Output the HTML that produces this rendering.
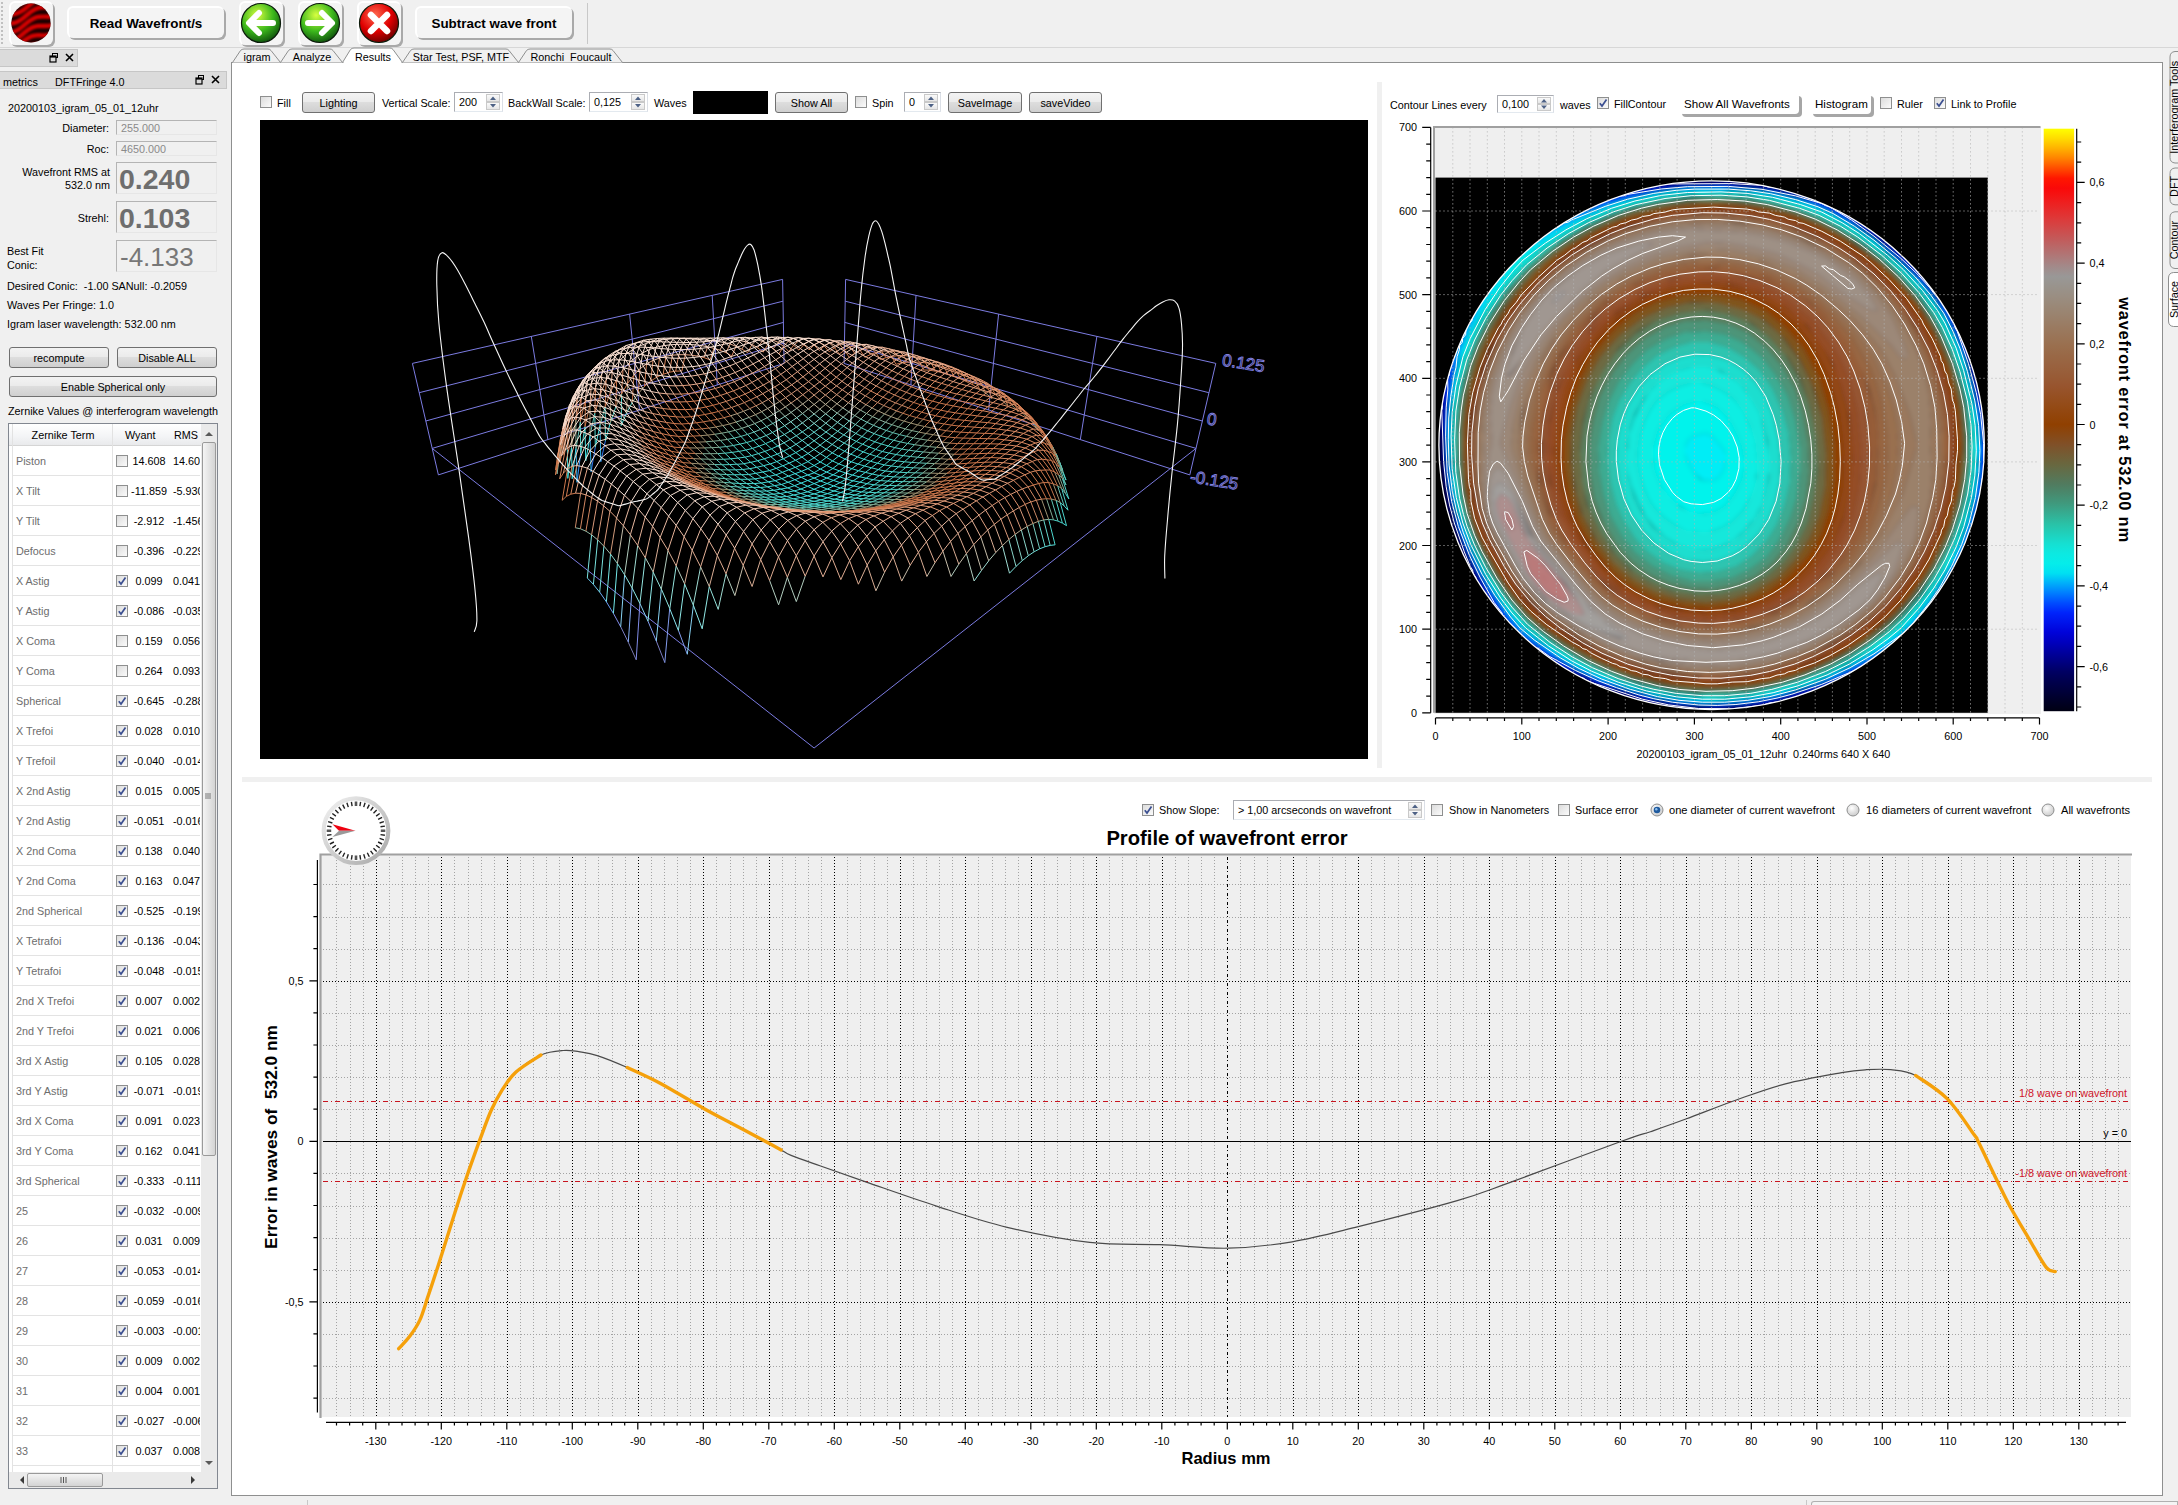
<!DOCTYPE html>
<html><head><meta charset="utf-8"><style>
html,body{margin:0;padding:0;}
body{width:2178px;height:1505px;position:relative;overflow:hidden;background:#f0f0f0;font-family:"Liberation Sans", sans-serif;font-size:10.8px;color:#000;}
</style></head><body>
<div style="position:absolute;left:0.0px;top:0.0px;width:2178.0px;height:47.0px;background:#f0f0f0;"></div>
<div style="position:absolute;left:0.0px;top:47.0px;width:2178.0px;height:1.0px;background:#d7d7d7;"></div>
<svg style="position:absolute;left:0;top:0" width="4" height="47"><line x1="2" y1="2" x2="2" y2="45" stroke="#b0b0b0" stroke-width="1.5" stroke-dasharray="2 2"/></svg>
<div style="position:absolute;left:9.0px;top:1.0px;width:44.0px;height:44.0px;box-sizing:border-box;border-radius:6px;background:#f4f4f4;border-top:2px solid #ffffff;border-left:2px solid #ffffff;box-shadow:2px 2px 0 #a9a9a9;"></div>
<div style="position:absolute;left:67.0px;top:6.0px;width:157.0px;height:32.0px;box-sizing:border-box;border-radius:6px;background:#f4f4f4;border-top:2px solid #ffffff;border-left:2px solid #ffffff;box-shadow:2px 2px 0 #a9a9a9;"></div>
<div style="position:absolute;left:146.0px;transform:translateX(-50%);top:15.0px;line-height:17px;font-size:13.4px;color:#000;white-space:pre;font-weight:bold;">Read Wavefront/s</div>
<div style="position:absolute;left:239.0px;top:1.0px;width:44.0px;height:44.0px;box-sizing:border-box;border-radius:6px;background:#f4f4f4;border-top:2px solid #ffffff;border-left:2px solid #ffffff;box-shadow:2px 2px 0 #a9a9a9;"></div>
<div style="position:absolute;left:298.0px;top:1.0px;width:44.0px;height:44.0px;box-sizing:border-box;border-radius:6px;background:#f4f4f4;border-top:2px solid #ffffff;border-left:2px solid #ffffff;box-shadow:2px 2px 0 #a9a9a9;"></div>
<div style="position:absolute;left:357.0px;top:1.0px;width:44.0px;height:44.0px;box-sizing:border-box;border-radius:6px;background:#f4f4f4;border-top:2px solid #ffffff;border-left:2px solid #ffffff;box-shadow:2px 2px 0 #a9a9a9;"></div>
<div style="position:absolute;left:415.0px;top:6.0px;width:157.0px;height:32.0px;box-sizing:border-box;border-radius:6px;background:#f4f4f4;border-top:2px solid #ffffff;border-left:2px solid #ffffff;box-shadow:2px 2px 0 #a9a9a9;"></div>
<div style="position:absolute;left:494.0px;transform:translateX(-50%);top:15.0px;line-height:17px;font-size:13.4px;color:#000;white-space:pre;font-weight:bold;">Subtract wave front</div>
<div style="position:absolute;left:587.0px;top:3.0px;width:1.0px;height:41.0px;background:#c8c8c8;"></div>
<svg style="position:absolute;left:10px;top:2px" width="42" height="42"><defs><clipPath id="lc"><circle cx="21" cy="21" r="19.6"/></clipPath><filter id="lblur"><feGaussianBlur stdDeviation="1.2"/></filter></defs><g clip-path="url(#lc)"><rect width="42" height="42" fill="#1c0000"/><g filter="url(#lblur)"><path d="M-2.0 -33.6L0.0 -34.2L2.0 -34.6L4.0 -34.7L6.0 -34.8L8.0 -34.7L10.0 -34.7L12.0 -34.7L14.0 -34.9L16.0 -35.3L18.0 -36.0L20.0 -36.9L22.0 -38.1L24.0 -39.5L26.0 -41.1L28.0 -42.7L30.0 -44.4L32.0 -45.9L34.0 -47.4L36.0 -48.6L38.0 -49.6L40.0 -50.3L42.0 -50.8L44.0 -51.0" stroke="#d40404" stroke-width="4.4" fill="none"/><path d="M-2.0 -24.8L0.0 -25.2L2.0 -25.4L4.0 -25.4L6.0 -25.3L8.0 -25.3L10.0 -25.3L12.0 -25.5L14.0 -25.9L16.0 -26.6L18.0 -27.5L20.0 -28.7L22.0 -30.1L24.0 -31.6L26.0 -33.3L28.0 -34.9L30.0 -36.5L32.0 -38.0L34.0 -39.2L36.0 -40.2L38.0 -40.9L40.0 -41.4L42.0 -41.6L44.0 -41.7" stroke="#d40404" stroke-width="4.4" fill="none"/><path d="M-2.0 -15.8L0.0 -16.0L2.0 -16.0L4.0 -16.0L6.0 -15.9L8.0 -15.9L10.0 -16.1L12.0 -16.5L14.0 -17.2L16.0 -18.1L18.0 -19.3L20.0 -20.7L22.0 -22.2L24.0 -23.9L26.0 -25.5L28.0 -27.1L30.0 -28.5L32.0 -29.8L34.0 -30.8L36.0 -31.5L38.0 -32.0L40.0 -32.3L42.0 -32.3L44.0 -32.3" stroke="#d40404" stroke-width="4.4" fill="none"/><path d="M-2.0 -6.6L0.0 -6.6L2.0 -6.6L4.0 -6.5L6.0 -6.6L8.0 -6.8L10.0 -7.2L12.0 -7.8L14.0 -8.7L16.0 -9.9L18.0 -11.3L20.0 -12.8L22.0 -14.4L24.0 -16.1L26.0 -17.7L28.0 -19.1L30.0 -20.4L32.0 -21.4L34.0 -22.1L36.0 -22.6L38.0 -22.9L40.0 -23.0L42.0 -22.9L44.0 -22.9" stroke="#d40404" stroke-width="4.4" fill="none"/><path d="M-2.0 2.8L0.0 2.8L2.0 2.8L4.0 2.8L6.0 2.6L8.0 2.2L10.0 1.6L12.0 0.7L14.0 -0.5L16.0 -1.8L18.0 -3.4L20.0 -5.0L22.0 -6.7L24.0 -8.3L26.0 -9.7L28.0 -11.0L30.0 -12.0L32.0 -12.7L34.0 -13.2L36.0 -13.5L38.0 -13.6L40.0 -13.6L42.0 -13.5L44.0 -13.5" stroke="#d40404" stroke-width="4.4" fill="none"/><path d="M-2.0 12.2L0.0 12.2L2.0 12.2L4.0 12.0L6.0 11.6L8.0 11.0L10.0 10.1L12.0 8.9L14.0 7.6L16.0 6.0L18.0 4.4L20.0 2.7L22.0 1.2L24.0 -0.3L26.0 -1.6L28.0 -2.6L30.0 -3.3L32.0 -3.8L34.0 -4.1L36.0 -4.2L38.0 -4.2L40.0 -4.1L42.0 -4.1L44.0 -4.2" stroke="#d40404" stroke-width="4.4" fill="none"/><path d="M-2.0 21.6L0.0 21.6L2.0 21.4L4.0 21.0L6.0 20.4L8.0 19.5L10.0 18.4L12.0 17.0L14.0 15.5L16.0 13.8L18.0 12.2L20.0 10.6L22.0 9.1L24.0 7.8L26.0 6.8L28.0 6.1L30.0 5.5L32.0 5.3L34.0 5.2L36.0 5.2L38.0 5.3L40.0 5.3L42.0 5.2L44.0 4.9" stroke="#d40404" stroke-width="4.4" fill="none"/><path d="M-2.0 31.0L0.0 30.8L2.0 30.4L4.0 29.8L6.0 28.9L8.0 27.8L10.0 26.4L12.0 24.9L14.0 23.2L16.0 21.6L18.0 20.0L20.0 18.5L22.0 17.3L24.0 16.2L26.0 15.4L28.0 14.9L30.0 14.7L32.0 14.6L34.0 14.6L36.0 14.6L38.0 14.7L40.0 14.6L42.0 14.3L44.0 13.8" stroke="#d40404" stroke-width="4.4" fill="none"/><path d="M-2.0 40.2L0.0 39.8L2.0 39.2L4.0 38.3L6.0 37.2L8.0 35.8L10.0 34.3L12.0 32.7L14.0 31.0L16.0 29.4L18.0 27.9L20.0 26.7L22.0 25.6L24.0 24.8L26.0 24.3L28.0 24.0L30.0 23.9L32.0 24.0L34.0 24.0L36.0 24.0L38.0 23.9L40.0 23.7L42.0 23.1L44.0 22.4" stroke="#d40404" stroke-width="4.4" fill="none"/><path d="M-2.0 49.2L0.0 48.6L2.0 47.7L4.0 46.6L6.0 45.2L8.0 43.7L10.0 42.1L12.0 40.4L14.0 38.8L16.0 37.4L18.0 36.1L20.0 35.0L22.0 34.2L24.0 33.7L26.0 33.4L28.0 33.3L30.0 33.3L32.0 33.4L34.0 33.4L36.0 33.3L38.0 33.0L40.0 32.5L42.0 31.8L44.0 30.8" stroke="#d40404" stroke-width="4.4" fill="none"/><path d="M-2.0 58.0L0.0 57.1L2.0 56.0L4.0 54.7L6.0 53.1L8.0 51.5L10.0 49.9L12.0 48.2L14.0 46.8L16.0 45.5L18.0 44.4L20.0 43.6L22.0 43.1L24.0 42.8L26.0 42.7L28.0 42.7L30.0 42.8L32.0 42.8L34.0 42.7L36.0 42.4L38.0 41.9L40.0 41.2L42.0 40.2L44.0 38.9" stroke="#d40404" stroke-width="4.4" fill="none"/><path d="M-2.0 66.5L0.0 65.4L2.0 64.1L4.0 62.6L6.0 60.9L8.0 59.3L10.0 57.7L12.0 56.2L14.0 54.9L16.0 53.8L18.0 53.0L20.0 52.5L22.0 52.2L24.0 52.1L26.0 52.1L28.0 52.1L30.0 52.2L32.0 52.1L34.0 51.8L36.0 51.3L38.0 50.6L40.0 49.6L42.0 48.3L44.0 46.9" stroke="#d40404" stroke-width="4.4" fill="none"/><path d="M-2.0 74.8L0.0 73.5L2.0 72.0L4.0 70.4L6.0 68.7L8.0 67.1L10.0 65.6L12.0 64.3L14.0 63.2L16.0 62.4L18.0 61.9L20.0 61.6L22.0 61.5L24.0 61.5L26.0 61.5L28.0 61.6L30.0 61.5L32.0 61.2L34.0 60.7L36.0 60.0L38.0 59.0L40.0 57.7L42.0 56.3L44.0 54.7" stroke="#d40404" stroke-width="4.4" fill="none"/></g></g></svg>
<svg style="position:absolute;left:240px;top:2px" width="42" height="42"><defs><radialGradient id="gL" cx="0.4" cy="0.3" r="0.75"><stop offset="0" stop-color="#d8ff40"/><stop offset="0.55" stop-color="#3cb81c"/><stop offset="1" stop-color="#0c4a0c"/></radialGradient></defs><circle cx="21" cy="21" r="19.5" fill="url(#gL)" stroke="#0a1a0a" stroke-width="1.2"/><path d="M9 21 L19 11 M9 21 L19 31 M9.5 21 L33 21" stroke="#fff" stroke-width="6" stroke-linecap="round" fill="none"/></svg>
<svg style="position:absolute;left:299px;top:2px" width="42" height="42"><defs><radialGradient id="gR" cx="0.4" cy="0.3" r="0.75"><stop offset="0" stop-color="#d8ff40"/><stop offset="0.55" stop-color="#3cb81c"/><stop offset="1" stop-color="#0c4a0c"/></radialGradient></defs><circle cx="21" cy="21" r="19.5" fill="url(#gR)" stroke="#0a1a0a" stroke-width="1.2"/><path d="M33 21 L23 11 M33 21 L23 31 M32.5 21 L9 21" stroke="#fff" stroke-width="6" stroke-linecap="round" fill="none"/></svg>
<svg style="position:absolute;left:358px;top:2px" width="42" height="42"><defs><radialGradient id="gX" cx="0.4" cy="0.3" r="0.75"><stop offset="0" stop-color="#ff6a50"/><stop offset="0.55" stop-color="#e00000"/><stop offset="1" stop-color="#600000"/></radialGradient></defs><circle cx="21" cy="21" r="19.5" fill="url(#gX)" stroke="#0a1a0a" stroke-width="1.2"/><path d="M13 13 L29 29 M29 13 L13 29" stroke="#fff" stroke-width="6.5" stroke-linecap="round"/></svg>
<div style="position:absolute;left:0.0px;top:48.0px;width:231.0px;height:1457.0px;background:#f0f0f0;"></div>
<div style="position:absolute;left:0.0px;top:49.0px;width:78.0px;height:18.0px;box-sizing:border-box;background:#dbdbdb;border:1px solid #c6c6c6;border-left:none;"></div>
<div style="position:absolute;left:0.0px;top:71.0px;width:227.0px;height:18.0px;box-sizing:border-box;background:#dbdbdb;border:1px solid #c6c6c6;border-left:none;"></div>
<svg style="position:absolute;left:49px;top:52px" width="30" height="12"><rect x="3.5" y="1.5" width="5" height="4" fill="none" stroke="#000" stroke-width="1"/><rect x="1" y="4" width="6" height="6" fill="#dbdbdb" stroke="#000" stroke-width="1.2"/><rect x="1" y="4" width="6" height="1.6" fill="#000"/><path d="M17 2 L24 9 M24 2 L17 9" stroke="#000" stroke-width="1.6"/></svg>
<svg style="position:absolute;left:195px;top:74px" width="30" height="12"><rect x="3.5" y="1.5" width="5" height="4" fill="none" stroke="#000" stroke-width="1"/><rect x="1" y="4" width="6" height="6" fill="#dbdbdb" stroke="#000" stroke-width="1.2"/><rect x="1" y="4" width="6" height="1.6" fill="#000"/><path d="M17 2 L24 9 M24 2 L17 9" stroke="#000" stroke-width="1.6"/></svg>
<div style="position:absolute;left:3.0px;top:74.5px;line-height:14px;font-size:10.8px;color:#000;white-space:pre;">metrics</div>
<div style="position:absolute;left:55.0px;top:74.5px;line-height:14px;font-size:10.8px;color:#000;white-space:pre;">DFTFringe 4.0</div>
<div style="position:absolute;left:8.0px;top:101.0px;line-height:14px;font-size:10.8px;color:#000;white-space:pre;">20200103_igram_05_01_12uhr</div>
<div style="position:absolute;left:116.0px;top:120.0px;width:101.0px;height:15.0px;box-sizing:border-box;border:1px solid #b4b4b4;border-bottom-color:#e6e6e6;border-right-color:#e6e6e6;background:#f0f0f0;"></div>
<div style="position:absolute;left:109.0px;transform:translateX(-100%);top:121.0px;line-height:14px;font-size:10.8px;color:#000;white-space:pre;">Diameter:</div>
<div style="position:absolute;left:121.0px;top:121.0px;line-height:14px;font-size:10.8px;color:#8a8a8a;white-space:pre;">255.000</div>
<div style="position:absolute;left:116.0px;top:141.0px;width:101.0px;height:15.0px;box-sizing:border-box;border:1px solid #b4b4b4;border-bottom-color:#e6e6e6;border-right-color:#e6e6e6;background:#f0f0f0;"></div>
<div style="position:absolute;left:109.0px;transform:translateX(-100%);top:142.0px;line-height:14px;font-size:10.8px;color:#000;white-space:pre;">Roc:</div>
<div style="position:absolute;left:121.0px;top:142.0px;line-height:14px;font-size:10.8px;color:#8a8a8a;white-space:pre;">4650.000</div>
<div style="position:absolute;left:116.0px;top:162.0px;width:101.0px;height:32.0px;box-sizing:border-box;border:1px solid #b4b4b4;border-bottom-color:#e6e6e6;border-right-color:#e6e6e6;background:#f0f0f0;"></div>
<div style="position:absolute;left:110.0px;transform:translateX(-100%);top:165.0px;line-height:14px;font-size:10.8px;color:#000;white-space:pre;">Wavefront RMS at</div>
<div style="position:absolute;left:110.0px;transform:translateX(-100%);top:178.0px;line-height:14px;font-size:10.8px;color:#000;white-space:pre;">532.0 nm</div>
<div style="position:absolute;left:119.0px;top:163.0px;line-height:32px;font-size:28.5px;color:#6e6e6e;white-space:pre;font-weight:bold;">0.240</div>
<div style="position:absolute;left:116.0px;top:201.0px;width:101.0px;height:32.0px;box-sizing:border-box;border:1px solid #b4b4b4;border-bottom-color:#e6e6e6;border-right-color:#e6e6e6;background:#f0f0f0;"></div>
<div style="position:absolute;left:109.0px;transform:translateX(-100%);top:211.0px;line-height:14px;font-size:10.8px;color:#000;white-space:pre;">Strehl:</div>
<div style="position:absolute;left:119.0px;top:202.0px;line-height:32px;font-size:28.5px;color:#6e6e6e;white-space:pre;font-weight:bold;">0.103</div>
<div style="position:absolute;left:116.0px;top:240.0px;width:101.0px;height:32.0px;box-sizing:border-box;border:1px solid #b4b4b4;border-bottom-color:#e6e6e6;border-right-color:#e6e6e6;background:#f0f0f0;"></div>
<div style="position:absolute;left:7.0px;top:244.0px;line-height:14px;font-size:10.8px;color:#000;white-space:pre;">Best Fit</div>
<div style="position:absolute;left:7.0px;top:257.5px;line-height:14px;font-size:10.8px;color:#000;white-space:pre;">Conic:</div>
<div style="position:absolute;left:120.0px;top:242.0px;line-height:30px;font-size:26px;color:#777777;white-space:pre;">-4.133</div>
<div style="position:absolute;left:7.0px;top:279.0px;line-height:14px;font-size:10.8px;color:#000;white-space:pre;">Desired Conic:  -1.00 SANull: -0.2059</div>
<div style="position:absolute;left:7.0px;top:298.0px;line-height:14px;font-size:10.8px;color:#000;white-space:pre;">Waves Per Fringe: 1.0</div>
<div style="position:absolute;left:7.0px;top:317.0px;line-height:14px;font-size:10.8px;color:#000;white-space:pre;">Igram laser wavelength: 532.00 nm</div>
<div style="position:absolute;left:9.0px;top:347.0px;width:100.0px;height:21.0px;box-sizing:border-box;border:1px solid #707070;border-radius:3px;background:linear-gradient(#f3f3f3 0%,#ebebeb 45%,#dddddd 50%,#cfcfcf 100%);"></div>
<div style="position:absolute;left:59.0px;transform:translateX(-50%);top:350.5px;line-height:14px;font-size:10.8px;color:#000;white-space:pre;">recompute</div>
<div style="position:absolute;left:117.0px;top:347.0px;width:100.0px;height:21.0px;box-sizing:border-box;border:1px solid #707070;border-radius:3px;background:linear-gradient(#f3f3f3 0%,#ebebeb 45%,#dddddd 50%,#cfcfcf 100%);"></div>
<div style="position:absolute;left:167.0px;transform:translateX(-50%);top:350.5px;line-height:14px;font-size:10.8px;color:#000;white-space:pre;">Disable ALL</div>
<div style="position:absolute;left:9.0px;top:376.0px;width:208.0px;height:21.0px;box-sizing:border-box;border:1px solid #707070;border-radius:3px;background:linear-gradient(#f3f3f3 0%,#ebebeb 45%,#dddddd 50%,#cfcfcf 100%);"></div>
<div style="position:absolute;left:113.0px;transform:translateX(-50%);top:379.5px;line-height:14px;font-size:10.8px;color:#000;white-space:pre;">Enable Spherical only</div>
<div style="position:absolute;left:8.0px;top:404.0px;line-height:14px;font-size:10.8px;color:#000;white-space:pre;">Zernike Values @ interferogram wavelength</div>
<div style="position:absolute;left:8.0px;top:423.0px;width:210.0px;height:1066.0px;box-sizing:border-box;border:1px solid #828790;background:#fff;"></div>
<div style="position:absolute;left:9.0px;top:424.0px;width:192.0px;height:22.0px;background:linear-gradient(#ffffff,#f3f4f6 60%,#e9eaec);border-bottom:1px solid #d5d5d5;box-sizing:border-box;"></div>
<div style="position:absolute;left:12.0px;top:424.0px;width:1.0px;height:22.0px;background:#e2e2e2;"></div>
<div style="position:absolute;left:112.0px;top:424.0px;width:1.0px;height:22.0px;background:#e2e2e2;"></div>
<div style="position:absolute;left:63.0px;transform:translateX(-50%);top:428.0px;line-height:14px;font-size:10.8px;color:#000;white-space:pre;">Zernike Term</div>
<div style="position:absolute;left:125.0px;top:428.0px;line-height:14px;font-size:10.8px;color:#000;white-space:pre;">Wyant</div>
<div style="position:absolute;left:174.0px;top:428.0px;line-height:14px;font-size:10.8px;color:#000;white-space:pre;">RMS</div>
<div style="position:absolute;left:0;top:446px;width:200px;height:1026px;overflow:hidden;"><div style="position:absolute;left:0;top:-446px;width:201px;height:1505px;"><div style="position:absolute;left:13.0px;top:475.0px;width:188.0px;height:1.0px;background:#e3e3e3;"></div>
<div style="position:absolute;left:16.0px;top:454.0px;line-height:14px;font-size:10.8px;color:#6d6d6d;white-space:pre;">Piston</div>
<div style="position:absolute;left:116.0px;top:455.0px;width:12.0px;height:12.0px;box-sizing:border-box;border:1px solid #8e8f8f;background:linear-gradient(135deg,#dcdcdc,#fbfbfb);"></div>
<div style="position:absolute;left:130px;width:38px;top:454px;line-height:14px;font-size:10.8px;text-align:center;white-space:nowrap">14.608</div>
<div style="position:absolute;left:173.0px;top:454.0px;line-height:14px;font-size:10.8px;color:#000;white-space:pre;">14.608</div>
<div style="position:absolute;left:13.0px;top:505.0px;width:188.0px;height:1.0px;background:#e3e3e3;"></div>
<div style="position:absolute;left:16.0px;top:484.0px;line-height:14px;font-size:10.8px;color:#6d6d6d;white-space:pre;">X Tilt</div>
<div style="position:absolute;left:116.0px;top:485.0px;width:12.0px;height:12.0px;box-sizing:border-box;border:1px solid #8e8f8f;background:linear-gradient(135deg,#dcdcdc,#fbfbfb);"></div>
<div style="position:absolute;left:130px;width:38px;top:484px;line-height:14px;font-size:10.8px;text-align:center;white-space:nowrap">-11.859</div>
<div style="position:absolute;left:173.0px;top:484.0px;line-height:14px;font-size:10.8px;color:#000;white-space:pre;">-5.930</div>
<div style="position:absolute;left:13.0px;top:535.0px;width:188.0px;height:1.0px;background:#e3e3e3;"></div>
<div style="position:absolute;left:16.0px;top:514.0px;line-height:14px;font-size:10.8px;color:#6d6d6d;white-space:pre;">Y Tilt</div>
<div style="position:absolute;left:116.0px;top:515.0px;width:12.0px;height:12.0px;box-sizing:border-box;border:1px solid #8e8f8f;background:linear-gradient(135deg,#dcdcdc,#fbfbfb);"></div>
<div style="position:absolute;left:130px;width:38px;top:514px;line-height:14px;font-size:10.8px;text-align:center;white-space:nowrap">-2.912</div>
<div style="position:absolute;left:173.0px;top:514.0px;line-height:14px;font-size:10.8px;color:#000;white-space:pre;">-1.456</div>
<div style="position:absolute;left:13.0px;top:565.0px;width:188.0px;height:1.0px;background:#e3e3e3;"></div>
<div style="position:absolute;left:16.0px;top:544.0px;line-height:14px;font-size:10.8px;color:#6d6d6d;white-space:pre;">Defocus</div>
<div style="position:absolute;left:116.0px;top:545.0px;width:12.0px;height:12.0px;box-sizing:border-box;border:1px solid #8e8f8f;background:linear-gradient(135deg,#dcdcdc,#fbfbfb);"></div>
<div style="position:absolute;left:130px;width:38px;top:544px;line-height:14px;font-size:10.8px;text-align:center;white-space:nowrap">-0.396</div>
<div style="position:absolute;left:173.0px;top:544.0px;line-height:14px;font-size:10.8px;color:#000;white-space:pre;">-0.229</div>
<div style="position:absolute;left:13.0px;top:595.0px;width:188.0px;height:1.0px;background:#e3e3e3;"></div>
<div style="position:absolute;left:16.0px;top:574.0px;line-height:14px;font-size:10.8px;color:#6d6d6d;white-space:pre;">X Astig</div>
<div style="position:absolute;left:116.0px;top:575.0px;width:12.0px;height:12.0px;box-sizing:border-box;border:1px solid #8e8f8f;background:linear-gradient(135deg,#dcdcdc,#fbfbfb);"></div>
<svg style="position:absolute;left:116px;top:575px" width="12" height="12"><path d="M2.8 6.2 L5 9 L9.5 2.5" stroke="#3b4f91" stroke-width="1.7" fill="none"/></svg>
<div style="position:absolute;left:130px;width:38px;top:574px;line-height:14px;font-size:10.8px;text-align:center;white-space:nowrap">0.099</div>
<div style="position:absolute;left:173.0px;top:574.0px;line-height:14px;font-size:10.8px;color:#000;white-space:pre;">0.0411</div>
<div style="position:absolute;left:13.0px;top:625.0px;width:188.0px;height:1.0px;background:#e3e3e3;"></div>
<div style="position:absolute;left:16.0px;top:604.0px;line-height:14px;font-size:10.8px;color:#6d6d6d;white-space:pre;">Y Astig</div>
<div style="position:absolute;left:116.0px;top:605.0px;width:12.0px;height:12.0px;box-sizing:border-box;border:1px solid #8e8f8f;background:linear-gradient(135deg,#dcdcdc,#fbfbfb);"></div>
<svg style="position:absolute;left:116px;top:605px" width="12" height="12"><path d="M2.8 6.2 L5 9 L9.5 2.5" stroke="#3b4f91" stroke-width="1.7" fill="none"/></svg>
<div style="position:absolute;left:130px;width:38px;top:604px;line-height:14px;font-size:10.8px;text-align:center;white-space:nowrap">-0.086</div>
<div style="position:absolute;left:173.0px;top:604.0px;line-height:14px;font-size:10.8px;color:#000;white-space:pre;">-0.035</div>
<div style="position:absolute;left:13.0px;top:655.0px;width:188.0px;height:1.0px;background:#e3e3e3;"></div>
<div style="position:absolute;left:16.0px;top:634.0px;line-height:14px;font-size:10.8px;color:#6d6d6d;white-space:pre;">X Coma</div>
<div style="position:absolute;left:116.0px;top:635.0px;width:12.0px;height:12.0px;box-sizing:border-box;border:1px solid #8e8f8f;background:linear-gradient(135deg,#dcdcdc,#fbfbfb);"></div>
<div style="position:absolute;left:130px;width:38px;top:634px;line-height:14px;font-size:10.8px;text-align:center;white-space:nowrap">0.159</div>
<div style="position:absolute;left:173.0px;top:634.0px;line-height:14px;font-size:10.8px;color:#000;white-space:pre;">0.0565</div>
<div style="position:absolute;left:13.0px;top:685.0px;width:188.0px;height:1.0px;background:#e3e3e3;"></div>
<div style="position:absolute;left:16.0px;top:664.0px;line-height:14px;font-size:10.8px;color:#6d6d6d;white-space:pre;">Y Coma</div>
<div style="position:absolute;left:116.0px;top:665.0px;width:12.0px;height:12.0px;box-sizing:border-box;border:1px solid #8e8f8f;background:linear-gradient(135deg,#dcdcdc,#fbfbfb);"></div>
<div style="position:absolute;left:130px;width:38px;top:664px;line-height:14px;font-size:10.8px;text-align:center;white-space:nowrap">0.264</div>
<div style="position:absolute;left:173.0px;top:664.0px;line-height:14px;font-size:10.8px;color:#000;white-space:pre;">0.0935</div>
<div style="position:absolute;left:13.0px;top:715.0px;width:188.0px;height:1.0px;background:#e3e3e3;"></div>
<div style="position:absolute;left:16.0px;top:694.0px;line-height:14px;font-size:10.8px;color:#6d6d6d;white-space:pre;">Spherical</div>
<div style="position:absolute;left:116.0px;top:695.0px;width:12.0px;height:12.0px;box-sizing:border-box;border:1px solid #8e8f8f;background:linear-gradient(135deg,#dcdcdc,#fbfbfb);"></div>
<svg style="position:absolute;left:116px;top:695px" width="12" height="12"><path d="M2.8 6.2 L5 9 L9.5 2.5" stroke="#3b4f91" stroke-width="1.7" fill="none"/></svg>
<div style="position:absolute;left:130px;width:38px;top:694px;line-height:14px;font-size:10.8px;text-align:center;white-space:nowrap">-0.645</div>
<div style="position:absolute;left:173.0px;top:694.0px;line-height:14px;font-size:10.8px;color:#000;white-space:pre;">-0.288</div>
<div style="position:absolute;left:13.0px;top:745.0px;width:188.0px;height:1.0px;background:#e3e3e3;"></div>
<div style="position:absolute;left:16.0px;top:724.0px;line-height:14px;font-size:10.8px;color:#6d6d6d;white-space:pre;">X Trefoi</div>
<div style="position:absolute;left:116.0px;top:725.0px;width:12.0px;height:12.0px;box-sizing:border-box;border:1px solid #8e8f8f;background:linear-gradient(135deg,#dcdcdc,#fbfbfb);"></div>
<svg style="position:absolute;left:116px;top:725px" width="12" height="12"><path d="M2.8 6.2 L5 9 L9.5 2.5" stroke="#3b4f91" stroke-width="1.7" fill="none"/></svg>
<div style="position:absolute;left:130px;width:38px;top:724px;line-height:14px;font-size:10.8px;text-align:center;white-space:nowrap">0.028</div>
<div style="position:absolute;left:173.0px;top:724.0px;line-height:14px;font-size:10.8px;color:#000;white-space:pre;">0.0101</div>
<div style="position:absolute;left:13.0px;top:775.0px;width:188.0px;height:1.0px;background:#e3e3e3;"></div>
<div style="position:absolute;left:16.0px;top:754.0px;line-height:14px;font-size:10.8px;color:#6d6d6d;white-space:pre;">Y Trefoil</div>
<div style="position:absolute;left:116.0px;top:755.0px;width:12.0px;height:12.0px;box-sizing:border-box;border:1px solid #8e8f8f;background:linear-gradient(135deg,#dcdcdc,#fbfbfb);"></div>
<svg style="position:absolute;left:116px;top:755px" width="12" height="12"><path d="M2.8 6.2 L5 9 L9.5 2.5" stroke="#3b4f91" stroke-width="1.7" fill="none"/></svg>
<div style="position:absolute;left:130px;width:38px;top:754px;line-height:14px;font-size:10.8px;text-align:center;white-space:nowrap">-0.040</div>
<div style="position:absolute;left:173.0px;top:754.0px;line-height:14px;font-size:10.8px;color:#000;white-space:pre;">-0.014</div>
<div style="position:absolute;left:13.0px;top:805.0px;width:188.0px;height:1.0px;background:#e3e3e3;"></div>
<div style="position:absolute;left:16.0px;top:784.0px;line-height:14px;font-size:10.8px;color:#6d6d6d;white-space:pre;">X 2nd Astig</div>
<div style="position:absolute;left:116.0px;top:785.0px;width:12.0px;height:12.0px;box-sizing:border-box;border:1px solid #8e8f8f;background:linear-gradient(135deg,#dcdcdc,#fbfbfb);"></div>
<svg style="position:absolute;left:116px;top:785px" width="12" height="12"><path d="M2.8 6.2 L5 9 L9.5 2.5" stroke="#3b4f91" stroke-width="1.7" fill="none"/></svg>
<div style="position:absolute;left:130px;width:38px;top:784px;line-height:14px;font-size:10.8px;text-align:center;white-space:nowrap">0.015</div>
<div style="position:absolute;left:173.0px;top:784.0px;line-height:14px;font-size:10.8px;color:#000;white-space:pre;">0.0051</div>
<div style="position:absolute;left:13.0px;top:835.0px;width:188.0px;height:1.0px;background:#e3e3e3;"></div>
<div style="position:absolute;left:16.0px;top:814.0px;line-height:14px;font-size:10.8px;color:#6d6d6d;white-space:pre;">Y 2nd Astig</div>
<div style="position:absolute;left:116.0px;top:815.0px;width:12.0px;height:12.0px;box-sizing:border-box;border:1px solid #8e8f8f;background:linear-gradient(135deg,#dcdcdc,#fbfbfb);"></div>
<svg style="position:absolute;left:116px;top:815px" width="12" height="12"><path d="M2.8 6.2 L5 9 L9.5 2.5" stroke="#3b4f91" stroke-width="1.7" fill="none"/></svg>
<div style="position:absolute;left:130px;width:38px;top:814px;line-height:14px;font-size:10.8px;text-align:center;white-space:nowrap">-0.051</div>
<div style="position:absolute;left:173.0px;top:814.0px;line-height:14px;font-size:10.8px;color:#000;white-space:pre;">-0.016</div>
<div style="position:absolute;left:13.0px;top:865.0px;width:188.0px;height:1.0px;background:#e3e3e3;"></div>
<div style="position:absolute;left:16.0px;top:844.0px;line-height:14px;font-size:10.8px;color:#6d6d6d;white-space:pre;">X 2nd Coma</div>
<div style="position:absolute;left:116.0px;top:845.0px;width:12.0px;height:12.0px;box-sizing:border-box;border:1px solid #8e8f8f;background:linear-gradient(135deg,#dcdcdc,#fbfbfb);"></div>
<svg style="position:absolute;left:116px;top:845px" width="12" height="12"><path d="M2.8 6.2 L5 9 L9.5 2.5" stroke="#3b4f91" stroke-width="1.7" fill="none"/></svg>
<div style="position:absolute;left:130px;width:38px;top:844px;line-height:14px;font-size:10.8px;text-align:center;white-space:nowrap">0.138</div>
<div style="position:absolute;left:173.0px;top:844.0px;line-height:14px;font-size:10.8px;color:#000;white-space:pre;">0.0401</div>
<div style="position:absolute;left:13.0px;top:895.0px;width:188.0px;height:1.0px;background:#e3e3e3;"></div>
<div style="position:absolute;left:16.0px;top:874.0px;line-height:14px;font-size:10.8px;color:#6d6d6d;white-space:pre;">Y 2nd Coma</div>
<div style="position:absolute;left:116.0px;top:875.0px;width:12.0px;height:12.0px;box-sizing:border-box;border:1px solid #8e8f8f;background:linear-gradient(135deg,#dcdcdc,#fbfbfb);"></div>
<svg style="position:absolute;left:116px;top:875px" width="12" height="12"><path d="M2.8 6.2 L5 9 L9.5 2.5" stroke="#3b4f91" stroke-width="1.7" fill="none"/></svg>
<div style="position:absolute;left:130px;width:38px;top:874px;line-height:14px;font-size:10.8px;text-align:center;white-space:nowrap">0.163</div>
<div style="position:absolute;left:173.0px;top:874.0px;line-height:14px;font-size:10.8px;color:#000;white-space:pre;">0.0471</div>
<div style="position:absolute;left:13.0px;top:925.0px;width:188.0px;height:1.0px;background:#e3e3e3;"></div>
<div style="position:absolute;left:16.0px;top:904.0px;line-height:14px;font-size:10.8px;color:#6d6d6d;white-space:pre;">2nd Spherical</div>
<div style="position:absolute;left:116.0px;top:905.0px;width:12.0px;height:12.0px;box-sizing:border-box;border:1px solid #8e8f8f;background:linear-gradient(135deg,#dcdcdc,#fbfbfb);"></div>
<svg style="position:absolute;left:116px;top:905px" width="12" height="12"><path d="M2.8 6.2 L5 9 L9.5 2.5" stroke="#3b4f91" stroke-width="1.7" fill="none"/></svg>
<div style="position:absolute;left:130px;width:38px;top:904px;line-height:14px;font-size:10.8px;text-align:center;white-space:nowrap">-0.525</div>
<div style="position:absolute;left:173.0px;top:904.0px;line-height:14px;font-size:10.8px;color:#000;white-space:pre;">-0.199</div>
<div style="position:absolute;left:13.0px;top:955.0px;width:188.0px;height:1.0px;background:#e3e3e3;"></div>
<div style="position:absolute;left:16.0px;top:934.0px;line-height:14px;font-size:10.8px;color:#6d6d6d;white-space:pre;">X Tetrafoi</div>
<div style="position:absolute;left:116.0px;top:935.0px;width:12.0px;height:12.0px;box-sizing:border-box;border:1px solid #8e8f8f;background:linear-gradient(135deg,#dcdcdc,#fbfbfb);"></div>
<svg style="position:absolute;left:116px;top:935px" width="12" height="12"><path d="M2.8 6.2 L5 9 L9.5 2.5" stroke="#3b4f91" stroke-width="1.7" fill="none"/></svg>
<div style="position:absolute;left:130px;width:38px;top:934px;line-height:14px;font-size:10.8px;text-align:center;white-space:nowrap">-0.136</div>
<div style="position:absolute;left:173.0px;top:934.0px;line-height:14px;font-size:10.8px;color:#000;white-space:pre;">-0.043</div>
<div style="position:absolute;left:13.0px;top:985.0px;width:188.0px;height:1.0px;background:#e3e3e3;"></div>
<div style="position:absolute;left:16.0px;top:964.0px;line-height:14px;font-size:10.8px;color:#6d6d6d;white-space:pre;">Y Tetrafoi</div>
<div style="position:absolute;left:116.0px;top:965.0px;width:12.0px;height:12.0px;box-sizing:border-box;border:1px solid #8e8f8f;background:linear-gradient(135deg,#dcdcdc,#fbfbfb);"></div>
<svg style="position:absolute;left:116px;top:965px" width="12" height="12"><path d="M2.8 6.2 L5 9 L9.5 2.5" stroke="#3b4f91" stroke-width="1.7" fill="none"/></svg>
<div style="position:absolute;left:130px;width:38px;top:964px;line-height:14px;font-size:10.8px;text-align:center;white-space:nowrap">-0.048</div>
<div style="position:absolute;left:173.0px;top:964.0px;line-height:14px;font-size:10.8px;color:#000;white-space:pre;">-0.015</div>
<div style="position:absolute;left:13.0px;top:1015.0px;width:188.0px;height:1.0px;background:#e3e3e3;"></div>
<div style="position:absolute;left:16.0px;top:994.0px;line-height:14px;font-size:10.8px;color:#6d6d6d;white-space:pre;">2nd X Trefoi</div>
<div style="position:absolute;left:116.0px;top:995.0px;width:12.0px;height:12.0px;box-sizing:border-box;border:1px solid #8e8f8f;background:linear-gradient(135deg,#dcdcdc,#fbfbfb);"></div>
<svg style="position:absolute;left:116px;top:995px" width="12" height="12"><path d="M2.8 6.2 L5 9 L9.5 2.5" stroke="#3b4f91" stroke-width="1.7" fill="none"/></svg>
<div style="position:absolute;left:130px;width:38px;top:994px;line-height:14px;font-size:10.8px;text-align:center;white-space:nowrap">0.007</div>
<div style="position:absolute;left:173.0px;top:994.0px;line-height:14px;font-size:10.8px;color:#000;white-space:pre;">0.0021</div>
<div style="position:absolute;left:13.0px;top:1045.0px;width:188.0px;height:1.0px;background:#e3e3e3;"></div>
<div style="position:absolute;left:16.0px;top:1024.0px;line-height:14px;font-size:10.8px;color:#6d6d6d;white-space:pre;">2nd Y Trefoi</div>
<div style="position:absolute;left:116.0px;top:1025.0px;width:12.0px;height:12.0px;box-sizing:border-box;border:1px solid #8e8f8f;background:linear-gradient(135deg,#dcdcdc,#fbfbfb);"></div>
<svg style="position:absolute;left:116px;top:1025px" width="12" height="12"><path d="M2.8 6.2 L5 9 L9.5 2.5" stroke="#3b4f91" stroke-width="1.7" fill="none"/></svg>
<div style="position:absolute;left:130px;width:38px;top:1024px;line-height:14px;font-size:10.8px;text-align:center;white-space:nowrap">0.021</div>
<div style="position:absolute;left:173.0px;top:1024.0px;line-height:14px;font-size:10.8px;color:#000;white-space:pre;">0.0061</div>
<div style="position:absolute;left:13.0px;top:1075.0px;width:188.0px;height:1.0px;background:#e3e3e3;"></div>
<div style="position:absolute;left:16.0px;top:1054.0px;line-height:14px;font-size:10.8px;color:#6d6d6d;white-space:pre;">3rd X Astig</div>
<div style="position:absolute;left:116.0px;top:1055.0px;width:12.0px;height:12.0px;box-sizing:border-box;border:1px solid #8e8f8f;background:linear-gradient(135deg,#dcdcdc,#fbfbfb);"></div>
<svg style="position:absolute;left:116px;top:1055px" width="12" height="12"><path d="M2.8 6.2 L5 9 L9.5 2.5" stroke="#3b4f91" stroke-width="1.7" fill="none"/></svg>
<div style="position:absolute;left:130px;width:38px;top:1054px;line-height:14px;font-size:10.8px;text-align:center;white-space:nowrap">0.105</div>
<div style="position:absolute;left:173.0px;top:1054.0px;line-height:14px;font-size:10.8px;color:#000;white-space:pre;">0.0281</div>
<div style="position:absolute;left:13.0px;top:1105.0px;width:188.0px;height:1.0px;background:#e3e3e3;"></div>
<div style="position:absolute;left:16.0px;top:1084.0px;line-height:14px;font-size:10.8px;color:#6d6d6d;white-space:pre;">3rd Y Astig</div>
<div style="position:absolute;left:116.0px;top:1085.0px;width:12.0px;height:12.0px;box-sizing:border-box;border:1px solid #8e8f8f;background:linear-gradient(135deg,#dcdcdc,#fbfbfb);"></div>
<svg style="position:absolute;left:116px;top:1085px" width="12" height="12"><path d="M2.8 6.2 L5 9 L9.5 2.5" stroke="#3b4f91" stroke-width="1.7" fill="none"/></svg>
<div style="position:absolute;left:130px;width:38px;top:1084px;line-height:14px;font-size:10.8px;text-align:center;white-space:nowrap">-0.071</div>
<div style="position:absolute;left:173.0px;top:1084.0px;line-height:14px;font-size:10.8px;color:#000;white-space:pre;">-0.019</div>
<div style="position:absolute;left:13.0px;top:1135.0px;width:188.0px;height:1.0px;background:#e3e3e3;"></div>
<div style="position:absolute;left:16.0px;top:1114.0px;line-height:14px;font-size:10.8px;color:#6d6d6d;white-space:pre;">3rd X Coma</div>
<div style="position:absolute;left:116.0px;top:1115.0px;width:12.0px;height:12.0px;box-sizing:border-box;border:1px solid #8e8f8f;background:linear-gradient(135deg,#dcdcdc,#fbfbfb);"></div>
<svg style="position:absolute;left:116px;top:1115px" width="12" height="12"><path d="M2.8 6.2 L5 9 L9.5 2.5" stroke="#3b4f91" stroke-width="1.7" fill="none"/></svg>
<div style="position:absolute;left:130px;width:38px;top:1114px;line-height:14px;font-size:10.8px;text-align:center;white-space:nowrap">0.091</div>
<div style="position:absolute;left:173.0px;top:1114.0px;line-height:14px;font-size:10.8px;color:#000;white-space:pre;">0.0231</div>
<div style="position:absolute;left:13.0px;top:1165.0px;width:188.0px;height:1.0px;background:#e3e3e3;"></div>
<div style="position:absolute;left:16.0px;top:1144.0px;line-height:14px;font-size:10.8px;color:#6d6d6d;white-space:pre;">3rd Y Coma</div>
<div style="position:absolute;left:116.0px;top:1145.0px;width:12.0px;height:12.0px;box-sizing:border-box;border:1px solid #8e8f8f;background:linear-gradient(135deg,#dcdcdc,#fbfbfb);"></div>
<svg style="position:absolute;left:116px;top:1145px" width="12" height="12"><path d="M2.8 6.2 L5 9 L9.5 2.5" stroke="#3b4f91" stroke-width="1.7" fill="none"/></svg>
<div style="position:absolute;left:130px;width:38px;top:1144px;line-height:14px;font-size:10.8px;text-align:center;white-space:nowrap">0.162</div>
<div style="position:absolute;left:173.0px;top:1144.0px;line-height:14px;font-size:10.8px;color:#000;white-space:pre;">0.0411</div>
<div style="position:absolute;left:13.0px;top:1195.0px;width:188.0px;height:1.0px;background:#e3e3e3;"></div>
<div style="position:absolute;left:16.0px;top:1174.0px;line-height:14px;font-size:10.8px;color:#6d6d6d;white-space:pre;">3rd Spherical</div>
<div style="position:absolute;left:116.0px;top:1175.0px;width:12.0px;height:12.0px;box-sizing:border-box;border:1px solid #8e8f8f;background:linear-gradient(135deg,#dcdcdc,#fbfbfb);"></div>
<svg style="position:absolute;left:116px;top:1175px" width="12" height="12"><path d="M2.8 6.2 L5 9 L9.5 2.5" stroke="#3b4f91" stroke-width="1.7" fill="none"/></svg>
<div style="position:absolute;left:130px;width:38px;top:1174px;line-height:14px;font-size:10.8px;text-align:center;white-space:nowrap">-0.333</div>
<div style="position:absolute;left:173.0px;top:1174.0px;line-height:14px;font-size:10.8px;color:#000;white-space:pre;">-0.111</div>
<div style="position:absolute;left:13.0px;top:1225.0px;width:188.0px;height:1.0px;background:#e3e3e3;"></div>
<div style="position:absolute;left:16.0px;top:1204.0px;line-height:14px;font-size:10.8px;color:#6d6d6d;white-space:pre;">25</div>
<div style="position:absolute;left:116.0px;top:1205.0px;width:12.0px;height:12.0px;box-sizing:border-box;border:1px solid #8e8f8f;background:linear-gradient(135deg,#dcdcdc,#fbfbfb);"></div>
<svg style="position:absolute;left:116px;top:1205px" width="12" height="12"><path d="M2.8 6.2 L5 9 L9.5 2.5" stroke="#3b4f91" stroke-width="1.7" fill="none"/></svg>
<div style="position:absolute;left:130px;width:38px;top:1204px;line-height:14px;font-size:10.8px;text-align:center;white-space:nowrap">-0.032</div>
<div style="position:absolute;left:173.0px;top:1204.0px;line-height:14px;font-size:10.8px;color:#000;white-space:pre;">-0.009</div>
<div style="position:absolute;left:13.0px;top:1255.0px;width:188.0px;height:1.0px;background:#e3e3e3;"></div>
<div style="position:absolute;left:16.0px;top:1234.0px;line-height:14px;font-size:10.8px;color:#6d6d6d;white-space:pre;">26</div>
<div style="position:absolute;left:116.0px;top:1235.0px;width:12.0px;height:12.0px;box-sizing:border-box;border:1px solid #8e8f8f;background:linear-gradient(135deg,#dcdcdc,#fbfbfb);"></div>
<svg style="position:absolute;left:116px;top:1235px" width="12" height="12"><path d="M2.8 6.2 L5 9 L9.5 2.5" stroke="#3b4f91" stroke-width="1.7" fill="none"/></svg>
<div style="position:absolute;left:130px;width:38px;top:1234px;line-height:14px;font-size:10.8px;text-align:center;white-space:nowrap">0.031</div>
<div style="position:absolute;left:173.0px;top:1234.0px;line-height:14px;font-size:10.8px;color:#000;white-space:pre;">0.0091</div>
<div style="position:absolute;left:13.0px;top:1285.0px;width:188.0px;height:1.0px;background:#e3e3e3;"></div>
<div style="position:absolute;left:16.0px;top:1264.0px;line-height:14px;font-size:10.8px;color:#6d6d6d;white-space:pre;">27</div>
<div style="position:absolute;left:116.0px;top:1265.0px;width:12.0px;height:12.0px;box-sizing:border-box;border:1px solid #8e8f8f;background:linear-gradient(135deg,#dcdcdc,#fbfbfb);"></div>
<svg style="position:absolute;left:116px;top:1265px" width="12" height="12"><path d="M2.8 6.2 L5 9 L9.5 2.5" stroke="#3b4f91" stroke-width="1.7" fill="none"/></svg>
<div style="position:absolute;left:130px;width:38px;top:1264px;line-height:14px;font-size:10.8px;text-align:center;white-space:nowrap">-0.053</div>
<div style="position:absolute;left:173.0px;top:1264.0px;line-height:14px;font-size:10.8px;color:#000;white-space:pre;">-0.014</div>
<div style="position:absolute;left:13.0px;top:1315.0px;width:188.0px;height:1.0px;background:#e3e3e3;"></div>
<div style="position:absolute;left:16.0px;top:1294.0px;line-height:14px;font-size:10.8px;color:#6d6d6d;white-space:pre;">28</div>
<div style="position:absolute;left:116.0px;top:1295.0px;width:12.0px;height:12.0px;box-sizing:border-box;border:1px solid #8e8f8f;background:linear-gradient(135deg,#dcdcdc,#fbfbfb);"></div>
<svg style="position:absolute;left:116px;top:1295px" width="12" height="12"><path d="M2.8 6.2 L5 9 L9.5 2.5" stroke="#3b4f91" stroke-width="1.7" fill="none"/></svg>
<div style="position:absolute;left:130px;width:38px;top:1294px;line-height:14px;font-size:10.8px;text-align:center;white-space:nowrap">-0.059</div>
<div style="position:absolute;left:173.0px;top:1294.0px;line-height:14px;font-size:10.8px;color:#000;white-space:pre;">-0.016</div>
<div style="position:absolute;left:13.0px;top:1345.0px;width:188.0px;height:1.0px;background:#e3e3e3;"></div>
<div style="position:absolute;left:16.0px;top:1324.0px;line-height:14px;font-size:10.8px;color:#6d6d6d;white-space:pre;">29</div>
<div style="position:absolute;left:116.0px;top:1325.0px;width:12.0px;height:12.0px;box-sizing:border-box;border:1px solid #8e8f8f;background:linear-gradient(135deg,#dcdcdc,#fbfbfb);"></div>
<svg style="position:absolute;left:116px;top:1325px" width="12" height="12"><path d="M2.8 6.2 L5 9 L9.5 2.5" stroke="#3b4f91" stroke-width="1.7" fill="none"/></svg>
<div style="position:absolute;left:130px;width:38px;top:1324px;line-height:14px;font-size:10.8px;text-align:center;white-space:nowrap">-0.003</div>
<div style="position:absolute;left:173.0px;top:1324.0px;line-height:14px;font-size:10.8px;color:#000;white-space:pre;">-0.001</div>
<div style="position:absolute;left:13.0px;top:1375.0px;width:188.0px;height:1.0px;background:#e3e3e3;"></div>
<div style="position:absolute;left:16.0px;top:1354.0px;line-height:14px;font-size:10.8px;color:#6d6d6d;white-space:pre;">30</div>
<div style="position:absolute;left:116.0px;top:1355.0px;width:12.0px;height:12.0px;box-sizing:border-box;border:1px solid #8e8f8f;background:linear-gradient(135deg,#dcdcdc,#fbfbfb);"></div>
<svg style="position:absolute;left:116px;top:1355px" width="12" height="12"><path d="M2.8 6.2 L5 9 L9.5 2.5" stroke="#3b4f91" stroke-width="1.7" fill="none"/></svg>
<div style="position:absolute;left:130px;width:38px;top:1354px;line-height:14px;font-size:10.8px;text-align:center;white-space:nowrap">0.009</div>
<div style="position:absolute;left:173.0px;top:1354.0px;line-height:14px;font-size:10.8px;color:#000;white-space:pre;">0.0021</div>
<div style="position:absolute;left:13.0px;top:1405.0px;width:188.0px;height:1.0px;background:#e3e3e3;"></div>
<div style="position:absolute;left:16.0px;top:1384.0px;line-height:14px;font-size:10.8px;color:#6d6d6d;white-space:pre;">31</div>
<div style="position:absolute;left:116.0px;top:1385.0px;width:12.0px;height:12.0px;box-sizing:border-box;border:1px solid #8e8f8f;background:linear-gradient(135deg,#dcdcdc,#fbfbfb);"></div>
<svg style="position:absolute;left:116px;top:1385px" width="12" height="12"><path d="M2.8 6.2 L5 9 L9.5 2.5" stroke="#3b4f91" stroke-width="1.7" fill="none"/></svg>
<div style="position:absolute;left:130px;width:38px;top:1384px;line-height:14px;font-size:10.8px;text-align:center;white-space:nowrap">0.004</div>
<div style="position:absolute;left:173.0px;top:1384.0px;line-height:14px;font-size:10.8px;color:#000;white-space:pre;">0.0011</div>
<div style="position:absolute;left:13.0px;top:1435.0px;width:188.0px;height:1.0px;background:#e3e3e3;"></div>
<div style="position:absolute;left:16.0px;top:1414.0px;line-height:14px;font-size:10.8px;color:#6d6d6d;white-space:pre;">32</div>
<div style="position:absolute;left:116.0px;top:1415.0px;width:12.0px;height:12.0px;box-sizing:border-box;border:1px solid #8e8f8f;background:linear-gradient(135deg,#dcdcdc,#fbfbfb);"></div>
<svg style="position:absolute;left:116px;top:1415px" width="12" height="12"><path d="M2.8 6.2 L5 9 L9.5 2.5" stroke="#3b4f91" stroke-width="1.7" fill="none"/></svg>
<div style="position:absolute;left:130px;width:38px;top:1414px;line-height:14px;font-size:10.8px;text-align:center;white-space:nowrap">-0.027</div>
<div style="position:absolute;left:173.0px;top:1414.0px;line-height:14px;font-size:10.8px;color:#000;white-space:pre;">-0.006</div>
<div style="position:absolute;left:13.0px;top:1465.0px;width:188.0px;height:1.0px;background:#e3e3e3;"></div>
<div style="position:absolute;left:16.0px;top:1444.0px;line-height:14px;font-size:10.8px;color:#6d6d6d;white-space:pre;">33</div>
<div style="position:absolute;left:116.0px;top:1445.0px;width:12.0px;height:12.0px;box-sizing:border-box;border:1px solid #8e8f8f;background:linear-gradient(135deg,#dcdcdc,#fbfbfb);"></div>
<svg style="position:absolute;left:116px;top:1445px" width="12" height="12"><path d="M2.8 6.2 L5 9 L9.5 2.5" stroke="#3b4f91" stroke-width="1.7" fill="none"/></svg>
<div style="position:absolute;left:130px;width:38px;top:1444px;line-height:14px;font-size:10.8px;text-align:center;white-space:nowrap">0.037</div>
<div style="position:absolute;left:173.0px;top:1444.0px;line-height:14px;font-size:10.8px;color:#000;white-space:pre;">0.0081</div>
<div style="position:absolute;left:12.0px;top:446.0px;width:1.0px;height:1100.0px;background:#e3e3e3;"></div>
<div style="position:absolute;left:112.0px;top:446.0px;width:1.0px;height:1100.0px;background:#e3e3e3;"></div>
</div></div>
<div style="position:absolute;left:201.0px;top:424.0px;width:16.0px;height:1048.0px;background:#eaeaea;"></div>
<svg style="position:absolute;left:201px;top:426px" width="16" height="14"><path d="M4 10 L8 6 L12 10Z" fill="#5a5a5a"/></svg>
<div style="position:absolute;left:202.0px;top:442.0px;width:14.0px;height:714.0px;box-sizing:border-box;border:1px solid #9a9a9a;border-radius:2px;background:linear-gradient(90deg,#f4f4f4,#e4e4e4 50%,#d4d4d4);"></div>
<svg style="position:absolute;left:203px;top:793px" width="10" height="8"><path d="M2 1H8M2 3H8M2 5H8" stroke="#777" stroke-width="1"/></svg>
<svg style="position:absolute;left:201px;top:1456px" width="16" height="14"><path d="M4 5 L8 9 L12 5Z" fill="#5a5a5a"/></svg>
<div style="position:absolute;left:9.0px;top:1472.0px;width:208.0px;height:16.0px;background:#eaeaea;"></div>
<svg style="position:absolute;left:9px;top:1472px" width="208" height="16"><path d="M11 8 L15 4 L15 12Z" fill="#3a3a3a"/><path d="M182 4 L186 8 L182 12Z" fill="#3a3a3a"/></svg>
<div style="position:absolute;left:27.0px;top:1473.0px;width:76.0px;height:14.0px;box-sizing:border-box;border:1px solid #9a9a9a;border-radius:2px;background:linear-gradient(#f4f4f4,#e4e4e4 50%,#d4d4d4);"></div>
<svg style="position:absolute;left:59px;top:1475px" width="10" height="10"><path d="M2 2V8M4.5 2V8M7 2V8" stroke="#555" stroke-width="1"/></svg>
<div style="position:absolute;left:231.0px;top:62.0px;width:1932.0px;height:1434.0px;box-sizing:border-box;border:1px solid #8e8f8f;background:#fff;"></div>
<svg style="position:absolute;left:0;top:44px" width="700" height="22"><path d="M232.5 18.5 L240.5 6.5 Q242 5 244 5 L268 5 Q270 5 271 6.5 L280.5 18.5" fill="#f0f0f0" stroke="#8e8f8f" stroke-width="1"/><path d="M280.5 18.5 L288.5 6.5 Q290 5 292 5 L330 5 Q332 5 333 6.5 L342.5 18.5" fill="#f0f0f0" stroke="#8e8f8f" stroke-width="1"/><path d="M342.5 18.5 L350.5 5.5 Q352 4 354 4 L390 4 Q392 4 393 5.5 L402.5 18.5" fill="#ffffff" stroke="#8e8f8f" stroke-width="1"/><path d="M402.5 18.5 L410.5 6.5 Q412 5 414 5 L506 5 Q508 5 509 6.5 L518.5 18.5" fill="#f0f0f0" stroke="#8e8f8f" stroke-width="1"/><path d="M518.5 18.5 L526.5 6.5 Q528 5 530 5 L610 5 Q612 5 613 6.5 L622.5 18.5" fill="#f0f0f0" stroke="#8e8f8f" stroke-width="1"/></svg>
<div style="position:absolute;left:257.0px;transform:translateX(-50%);top:50.0px;line-height:14px;font-size:10.8px;color:#000;white-space:pre;">igram</div>
<div style="position:absolute;left:312.0px;transform:translateX(-50%);top:50.0px;line-height:14px;font-size:10.8px;color:#000;white-space:pre;">Analyze</div>
<div style="position:absolute;left:373.0px;transform:translateX(-50%);top:49.5px;line-height:14px;font-size:10.8px;color:#000;white-space:pre;">Results</div>
<div style="position:absolute;left:461.0px;transform:translateX(-50%);top:50.0px;line-height:14px;font-size:10.8px;color:#000;white-space:pre;">Star Test, PSF, MTF</div>
<div style="position:absolute;left:571.0px;transform:translateX(-50%);top:50.0px;line-height:14px;font-size:10.8px;color:#000;white-space:pre;">Ronchi  Foucault</div>
<div style="position:absolute;left:344.0px;top:62.0px;width:57.0px;height:2.0px;background:#fff;"></div>
<svg style="position:absolute;left:2160px;top:40px" width="18" height="300"><path d="M18 11.5 L15 11.5 Q10 12 10 17 L10 117.5 Q10 122.5 15 123.0 L18 123.0" fill="#f0f0f0" stroke="#8e8f8f" stroke-width="1"/><text x="0" y="0" transform="translate(18.3 67.25) rotate(-90)" text-anchor="middle" font-family="Liberation Sans" font-size="10.8" fill="#000">Interferogram Tools</text><path d="M18 128.0 L15 128.0 Q10 128.5 10 133.5 L10 159.3 Q10 164.3 15 164.8 L18 164.8" fill="#f0f0f0" stroke="#8e8f8f" stroke-width="1"/><text x="0" y="0" transform="translate(18.3 146.4) rotate(-90)" text-anchor="middle" font-family="Liberation Sans" font-size="10.8" fill="#000">DFT</text><path d="M18 171.8 L15 171.8 Q10 172.3 10 177.3 L10 223 Q10 228 15 228.5 L18 228.5" fill="#f0f0f0" stroke="#8e8f8f" stroke-width="1"/><text x="0" y="0" transform="translate(18.3 200.15) rotate(-90)" text-anchor="middle" font-family="Liberation Sans" font-size="10.8" fill="#000">Contour</text><path d="M18 232.5 L13.5 232.5 Q8.5 233 8.5 238 L8.5 281 Q8.5 286 13.5 286.5 L18 286.5" fill="#ffffff" stroke="#8e8f8f" stroke-width="1"/><text x="0" y="0" transform="translate(18.3 259.5) rotate(-90)" text-anchor="middle" font-family="Liberation Sans" font-size="10.8" fill="#000">Surface</text></svg>
<div style="position:absolute;left:307.0px;top:1500.0px;width:1.0px;height:5.0px;background:#c8c8c8;"></div>
<div style="position:absolute;left:1806.0px;top:1500.0px;width:1.0px;height:5.0px;background:#c8c8c8;"></div>
<div style="position:absolute;left:1811.0px;top:1501.0px;width:367.0px;height:6.0px;box-sizing:border-box;border:1px solid #b0b0b0;border-bottom:none;border-radius:3px 0 0 0;background:#f4f4f4;"></div>
<div style="position:absolute;left:260.0px;top:96.0px;width:12.0px;height:12.0px;box-sizing:border-box;border:1px solid #8e8f8f;background:linear-gradient(135deg,#dcdcdc,#fbfbfb);"></div>
<div style="position:absolute;left:277.0px;top:95.5px;line-height:14px;font-size:10.8px;color:#000;white-space:pre;">Fill</div>
<div style="position:absolute;left:302.0px;top:92.0px;width:73.0px;height:21.0px;box-sizing:border-box;border:1px solid #707070;border-radius:3px;background:linear-gradient(#f3f3f3 0%,#ebebeb 45%,#dddddd 50%,#cfcfcf 100%);"></div>
<div style="position:absolute;left:338.5px;transform:translateX(-50%);top:95.5px;line-height:14px;font-size:10.8px;color:#000;white-space:pre;">Lighting</div>
<div style="position:absolute;left:382.0px;top:95.5px;line-height:14px;font-size:10.8px;color:#000;white-space:pre;">Vertical Scale:</div>
<div style="position:absolute;left:454.0px;top:92.0px;width:49.0px;height:20.0px;box-sizing:border-box;border:1px solid #abadb3;border-right-color:#dbdfe6;border-bottom-color:#e3e9ef;background:#fff;"></div>
<div style="position:absolute;left:459.0px;top:95.0px;line-height:14px;font-size:10.8px;color:#000;white-space:pre;">200</div>
<div style="position:absolute;left:486.0px;top:94.0px;width:14.0px;height:8.0px;box-sizing:border-box;border:1px solid #c9c9c9;background:linear-gradient(#fafafa,#e6e6e6);"></div>
<div style="position:absolute;left:486.0px;top:102.0px;width:14.0px;height:8.0px;box-sizing:border-box;border:1px solid #c9c9c9;background:linear-gradient(#fafafa,#e6e6e6);"></div>
<svg style="position:absolute;left:486px;top:92px" width="14" height="20"><path d="M4 8.0 L7 4.5 L10 8.0Z" fill="#4d6185"/><path d="M4 12.0 L7 15.5 L10 12.0Z" fill="#4d6185"/></svg>
<div style="position:absolute;left:508.0px;top:95.5px;line-height:14px;font-size:10.8px;color:#000;white-space:pre;">BackWall Scale:</div>
<div style="position:absolute;left:589.0px;top:92.0px;width:59.0px;height:20.0px;box-sizing:border-box;border:1px solid #abadb3;border-right-color:#dbdfe6;border-bottom-color:#e3e9ef;background:#fff;"></div>
<div style="position:absolute;left:594.0px;top:95.0px;line-height:14px;font-size:10.8px;color:#000;white-space:pre;">0,125</div>
<div style="position:absolute;left:631.0px;top:94.0px;width:14.0px;height:8.0px;box-sizing:border-box;border:1px solid #c9c9c9;background:linear-gradient(#fafafa,#e6e6e6);"></div>
<div style="position:absolute;left:631.0px;top:102.0px;width:14.0px;height:8.0px;box-sizing:border-box;border:1px solid #c9c9c9;background:linear-gradient(#fafafa,#e6e6e6);"></div>
<svg style="position:absolute;left:631px;top:92px" width="14" height="20"><path d="M4 8.0 L7 4.5 L10 8.0Z" fill="#4d6185"/><path d="M4 12.0 L7 15.5 L10 12.0Z" fill="#4d6185"/></svg>
<div style="position:absolute;left:654.0px;top:95.5px;line-height:14px;font-size:10.8px;color:#000;white-space:pre;">Waves</div>
<div style="position:absolute;left:693.0px;top:91.0px;width:75.0px;height:23.0px;background:#000;"></div>
<div style="position:absolute;left:775.0px;top:92.0px;width:73.0px;height:21.0px;box-sizing:border-box;border:1px solid #707070;border-radius:3px;background:linear-gradient(#f3f3f3 0%,#ebebeb 45%,#dddddd 50%,#cfcfcf 100%);"></div>
<div style="position:absolute;left:811.5px;transform:translateX(-50%);top:95.5px;line-height:14px;font-size:10.8px;color:#000;white-space:pre;">Show All</div>
<div style="position:absolute;left:855.0px;top:96.0px;width:12.0px;height:12.0px;box-sizing:border-box;border:1px solid #8e8f8f;background:linear-gradient(135deg,#dcdcdc,#fbfbfb);"></div>
<div style="position:absolute;left:872.0px;top:95.5px;line-height:14px;font-size:10.8px;color:#000;white-space:pre;">Spin</div>
<div style="position:absolute;left:904.0px;top:92.0px;width:37.0px;height:20.0px;box-sizing:border-box;border:1px solid #abadb3;border-right-color:#dbdfe6;border-bottom-color:#e3e9ef;background:#fff;"></div>
<div style="position:absolute;left:909.0px;top:95.0px;line-height:14px;font-size:10.8px;color:#000;white-space:pre;">0</div>
<div style="position:absolute;left:924.0px;top:94.0px;width:14.0px;height:8.0px;box-sizing:border-box;border:1px solid #c9c9c9;background:linear-gradient(#fafafa,#e6e6e6);"></div>
<div style="position:absolute;left:924.0px;top:102.0px;width:14.0px;height:8.0px;box-sizing:border-box;border:1px solid #c9c9c9;background:linear-gradient(#fafafa,#e6e6e6);"></div>
<svg style="position:absolute;left:924px;top:92px" width="14" height="20"><path d="M4 8.0 L7 4.5 L10 8.0Z" fill="#4d6185"/><path d="M4 12.0 L7 15.5 L10 12.0Z" fill="#4d6185"/></svg>
<div style="position:absolute;left:948.0px;top:92.0px;width:74.0px;height:21.0px;box-sizing:border-box;border:1px solid #707070;border-radius:3px;background:linear-gradient(#f3f3f3 0%,#ebebeb 45%,#dddddd 50%,#cfcfcf 100%);"></div>
<div style="position:absolute;left:985.0px;transform:translateX(-50%);top:95.5px;line-height:14px;font-size:10.8px;color:#000;white-space:pre;">SaveImage</div>
<div style="position:absolute;left:1029.0px;top:92.0px;width:73.0px;height:21.0px;box-sizing:border-box;border:1px solid #707070;border-radius:3px;background:linear-gradient(#f3f3f3 0%,#ebebeb 45%,#dddddd 50%,#cfcfcf 100%);"></div>
<div style="position:absolute;left:1065.5px;transform:translateX(-50%);top:95.5px;line-height:14px;font-size:10.8px;color:#000;white-space:pre;">saveVideo</div>
<div style="position:absolute;left:1377.0px;top:82.0px;width:5.0px;height:686.0px;background:#f0f0f0;"></div>
<div style="position:absolute;left:1390.0px;top:97.5px;line-height:14px;font-size:10.8px;color:#000;white-space:pre;">Contour Lines every</div>
<div style="position:absolute;left:1497.0px;top:95.0px;width:57.0px;height:18.0px;box-sizing:border-box;border:1px solid #abadb3;border-right-color:#dbdfe6;border-bottom-color:#e3e9ef;background:#fff;"></div>
<div style="position:absolute;left:1502.0px;top:97.0px;line-height:14px;font-size:10.8px;color:#000;white-space:pre;">0,100</div>
<div style="position:absolute;left:1537.0px;top:97.0px;width:14.0px;height:7.0px;box-sizing:border-box;border:1px solid #c9c9c9;background:linear-gradient(#fafafa,#e6e6e6);"></div>
<div style="position:absolute;left:1537.0px;top:104.0px;width:14.0px;height:7.0px;box-sizing:border-box;border:1px solid #c9c9c9;background:linear-gradient(#fafafa,#e6e6e6);"></div>
<svg style="position:absolute;left:1537px;top:95px" width="14" height="18"><path d="M4 7.5 L7 4.0 L10 7.5Z" fill="#4d6185"/><path d="M4 10.5 L7 14.0 L10 10.5Z" fill="#4d6185"/></svg>
<div style="position:absolute;left:1560.0px;top:97.5px;line-height:14px;font-size:10.8px;color:#000;white-space:pre;">waves</div>
<div style="position:absolute;left:1597.0px;top:97.0px;width:12.0px;height:12.0px;box-sizing:border-box;border:1px solid #8e8f8f;background:linear-gradient(135deg,#dcdcdc,#fbfbfb);"></div>
<svg style="position:absolute;left:1597px;top:97px" width="12" height="12"><path d="M2.8 6.2 L5 9 L9.5 2.5" stroke="#3b4f91" stroke-width="1.7" fill="none"/></svg>
<div style="position:absolute;left:1614.0px;top:96.5px;line-height:14px;font-size:10.8px;color:#000;white-space:pre;">FillContour</div>
<div style="position:absolute;left:1679.0px;top:93.0px;width:120.0px;height:21.0px;box-sizing:border-box;border-radius:4px;background:#fff;box-shadow:3px 3px 0 #a6a6a6;"></div>
<div style="position:absolute;left:1684.0px;top:96.0px;line-height:15px;font-size:11.6px;color:#000;white-space:pre;">Show All Wavefronts</div>
<div style="position:absolute;left:1810.0px;top:93.0px;width:61.0px;height:21.0px;box-sizing:border-box;border-radius:4px;background:#fff;box-shadow:3px 3px 0 #a6a6a6;"></div>
<div style="position:absolute;left:1815.0px;top:96.0px;line-height:15px;font-size:11.6px;color:#000;white-space:pre;">Histogram</div>
<div style="position:absolute;left:1880.0px;top:97.0px;width:12.0px;height:12.0px;box-sizing:border-box;border:1px solid #8e8f8f;background:linear-gradient(135deg,#dcdcdc,#fbfbfb);"></div>
<div style="position:absolute;left:1897.0px;top:96.5px;line-height:14px;font-size:10.8px;color:#000;white-space:pre;">Ruler</div>
<div style="position:absolute;left:1934.0px;top:97.0px;width:12.0px;height:12.0px;box-sizing:border-box;border:1px solid #8e8f8f;background:linear-gradient(135deg,#dcdcdc,#fbfbfb);"></div>
<svg style="position:absolute;left:1934px;top:97px" width="12" height="12"><path d="M2.8 6.2 L5 9 L9.5 2.5" stroke="#3b4f91" stroke-width="1.7" fill="none"/></svg>
<div style="position:absolute;left:1951.0px;top:96.5px;line-height:14px;font-size:10.8px;color:#000;white-space:pre;">Link to Profile</div>
<div style="position:absolute;left:242.0px;top:777.0px;width:1910.0px;height:5.0px;background:#f0f0f0;"></div>
<div style="position:absolute;left:1142.0px;top:804.0px;width:12.0px;height:12.0px;box-sizing:border-box;border:1px solid #8e8f8f;background:linear-gradient(135deg,#dcdcdc,#fbfbfb);"></div>
<svg style="position:absolute;left:1142px;top:804px" width="12" height="12"><path d="M2.8 6.2 L5 9 L9.5 2.5" stroke="#3b4f91" stroke-width="1.7" fill="none"/></svg>
<div style="position:absolute;left:1159.0px;top:802.5px;line-height:14px;font-size:10.8px;color:#000;white-space:pre;">Show Slope:</div>
<div style="position:absolute;left:1233.0px;top:800.0px;width:192.0px;height:20.0px;box-sizing:border-box;border:1px solid #abadb3;border-right-color:#dbdfe6;border-bottom-color:#e3e9ef;background:#fff;"></div>
<div style="position:absolute;left:1238.0px;top:803.0px;line-height:14px;font-size:10.8px;color:#000;white-space:pre;">&gt; 1,00 arcseconds on wavefront</div>
<div style="position:absolute;left:1408.0px;top:802.0px;width:14.0px;height:8.0px;box-sizing:border-box;border:1px solid #c9c9c9;background:linear-gradient(#fafafa,#e6e6e6);"></div>
<div style="position:absolute;left:1408.0px;top:810.0px;width:14.0px;height:8.0px;box-sizing:border-box;border:1px solid #c9c9c9;background:linear-gradient(#fafafa,#e6e6e6);"></div>
<svg style="position:absolute;left:1408px;top:800px" width="14" height="20"><path d="M4 8.0 L7 4.5 L10 8.0Z" fill="#4d6185"/><path d="M4 12.0 L7 15.5 L10 12.0Z" fill="#4d6185"/></svg>
<div style="position:absolute;left:1431.0px;top:804.0px;width:12.0px;height:12.0px;box-sizing:border-box;border:1px solid #8e8f8f;background:linear-gradient(135deg,#dcdcdc,#fbfbfb);"></div>
<div style="position:absolute;left:1449.0px;top:802.5px;line-height:14px;font-size:10.8px;color:#000;white-space:pre;">Show in Nanometers</div>
<div style="position:absolute;left:1558.0px;top:804.0px;width:12.0px;height:12.0px;box-sizing:border-box;border:1px solid #8e8f8f;background:linear-gradient(135deg,#dcdcdc,#fbfbfb);"></div>
<div style="position:absolute;left:1575.0px;top:802.5px;line-height:14px;font-size:10.8px;color:#000;white-space:pre;">Surface error</div>
<svg style="position:absolute;left:1650px;top:803px" width="14" height="14"><defs><radialGradient id="rg1657" cx="0.4" cy="0.35" r="0.7"><stop offset="0" stop-color="#ffffff"/><stop offset="1" stop-color="#c8c8c8"/></radialGradient></defs><circle cx="7" cy="7" r="6" fill="url(#rg1657)" stroke="#8e8f8f" stroke-width="1"/><circle cx="7" cy="7" r="3.3" fill="#1f5a9e"/><circle cx="6.3" cy="6.2" r="1.2" fill="#8fc0ee"/></svg>
<div style="position:absolute;left:1669.0px;top:802.5px;line-height:14px;font-size:11.1px;color:#000;white-space:pre;">one diameter of current wavefront</div>
<svg style="position:absolute;left:1846px;top:803px" width="14" height="14"><defs><radialGradient id="rg1853" cx="0.4" cy="0.35" r="0.7"><stop offset="0" stop-color="#ffffff"/><stop offset="1" stop-color="#c8c8c8"/></radialGradient></defs><circle cx="7" cy="7" r="6" fill="url(#rg1853)" stroke="#8e8f8f" stroke-width="1"/></svg>
<div style="position:absolute;left:1866.0px;top:802.5px;line-height:14px;font-size:11.1px;color:#000;white-space:pre;">16 diameters of current wavefront</div>
<svg style="position:absolute;left:2041px;top:803px" width="14" height="14"><defs><radialGradient id="rg2048" cx="0.4" cy="0.35" r="0.7"><stop offset="0" stop-color="#ffffff"/><stop offset="1" stop-color="#c8c8c8"/></radialGradient></defs><circle cx="7" cy="7" r="6" fill="url(#rg2048)" stroke="#8e8f8f" stroke-width="1"/></svg>
<div style="position:absolute;left:2061.0px;top:802.5px;line-height:14px;font-size:11.1px;color:#000;white-space:pre;">All wavefronts</div>
<div style="position:absolute;left:260.0px;top:120.0px;width:1108.0px;height:639.0px;background:#000;"></div>
<svg style="position:absolute;left:260px;top:120px" width="1108" height="638" shape-rendering="auto"><path d="M152.4 243.4L522.6 159.4M159.2 272.7L523.0 181.2M165.8 301.0L523.4 202.4M172.2 328.4L523.7 223.2M178.4 354.9L524.1 243.4M152.4 243.4L178.4 354.9M271.3 216.4L287.9 319.6M369.6 194.1L379.5 290.0M452.2 175.4L457.3 265.0M522.6 159.4L524.1 243.4M955.8 243.4L585.6 159.4M948.9 272.7L585.2 181.2M942.4 301.0L584.8 202.4M936.0 328.4L584.4 223.2M929.8 354.9L584.1 243.4M955.8 243.4L929.8 354.9M836.9 216.4L820.3 319.6M738.6 194.1L728.6 290.0M656.0 175.4L650.9 265.0M585.6 159.4L584.1 243.4M172.2 328.4L554.1 628.0L936.0 328.4" stroke="#7b7be0" stroke-width="1" fill="none"/><path d="M376.2 539.8l-7.9 -17.5" stroke="rgb(119, 119, 173)" stroke-width="1" fill="none"/><path d="M368.3 522.2l-7.6 -15.5M404.8 542.6l-8.5 -21.6" stroke="rgb(122, 125, 194)" stroke-width="1" fill="none"/><path d="M360.7 506.8l-7.3 -13.4M376.2 539.8l3.7 -56.2" stroke="rgb(129, 140, 232)" stroke-width="1" fill="none"/><path d="M396.3 521.0l-8.3 -19.8M427.3 534.3l-8.8 -23.8M404.8 542.6l4.9 -54.0" stroke="rgb(131, 156, 238)" stroke-width="1" fill="none"/><path d="M331.1 351.8l4.2 -24.7M340.8 341.8l4.6 -21.0" stroke="rgb(51, 117, 237)" stroke-width="1" fill="none"/><path d="M353.4 493.4l-7.0 -11.5" stroke="rgb(105, 154, 242)" stroke-width="1" fill="none"/><path d="M368.3 522.2l3.8 -54.2" stroke="rgb(132, 172, 244)" stroke-width="1" fill="none"/><path d="M317.0 362.3l3.7 -29.3" stroke="rgb(54, 146, 244)" stroke-width="1" fill="none"/><path d="M346.4 481.8l-6.7 -9.7" stroke="rgb(108, 175, 247)" stroke-width="1" fill="none"/><path d="M316.0 328.5l1.0 33.9M330.0 315.3l1.1 36.5M340.0 305.3l0.8 36.4" stroke="rgb(57, 181, 237)" stroke-width="1" fill="none"/><path d="M339.7 472.2l-6.4 -7.9M333.4 464.3l-6.0 -6.2" stroke="rgb(110, 201, 242)" stroke-width="1" fill="none"/><path d="M388.0 501.2l-8.1 -17.7M427.3 534.3l6.1 -49.2M396.3 521.0l5.0 -51.8M360.7 506.8l3.9 -52.0" stroke="rgb(136, 211, 244)" stroke-width="1" fill="none"/><path d="M312.2 358.7l3.7 -30.2" stroke="rgb(61, 215, 232)" stroke-width="1" fill="none"/><path d="M418.4 510.5l-8.7 -21.9" stroke="rgb(139, 231, 241)" stroke-width="1" fill="none"/><path d="M311.5 327.3l0.7 31.5M567.3 369.1l6.4 -3.2M554.1 369.3l-6.5 -3.0M554.1 369.3l6.5 -2.9M547.6 366.3l-6.4 -3.2M560.6 366.4l6.4 -2.9M541.1 363.1l-6.3 -3.4M567.1 363.5l6.3 -3.1M573.4 360.4l6.3 -3.5M567.3 369.1l-6.6 -2.7M540.9 369.0l6.6 -2.7M560.6 366.4l-6.5 -2.8M547.6 366.3l6.5 -2.7M554.1 363.6l-6.4 -3.1M554.1 363.6l6.4 -2.6M547.7 360.6l-6.3 -3.3M560.5 361.0l6.3 -2.9M541.3 357.3l-6.3 -3.6M566.9 358.1l6.2 -3.2M573.1 354.9l6.2 -4.0M573.7 365.9l-6.6 -2.4M534.5 365.7l6.6 -2.6M567.1 363.5l-6.5 -2.5M541.1 363.1l6.5 -2.6M560.5 361.0l-6.4 -2.9M547.7 360.6l6.4 -2.5M554.1 358.1l-6.3 -3.1M554.1 358.1l6.3 -2.7M547.8 355.0l-6.3 -3.7M560.4 355.4l6.2 -3.3M566.7 352.1l6.2 -3.6M580.1 362.6l-6.6 -2.2M573.4 360.4l-6.5 -2.3M534.8 359.7l6.5 -2.5M566.9 358.1l-6.4 -2.7M541.3 357.3l6.4 -2.3M560.4 355.4l-6.3 -2.6M547.8 355.0l6.3 -2.2M554.1 352.7l-6.3 -4.1M554.1 352.7l6.2 -3.7M547.8 348.7l-6.2 -4.0M560.3 349.1l6.2 -3.6M579.7 356.9l-6.5 -2.0M573.1 354.9l-6.4 -2.8M535.1 353.7l6.4 -2.4M566.7 352.1l-6.3 -3.0M541.5 351.3l6.3 -2.6M560.3 349.1l-6.2 -3.6M547.8 348.7l6.3 -3.2M554.1 345.5l6.2 -3.5M579.3 350.8l-6.4 -2.3M572.8 348.5l-6.3 -3.1M566.5 345.4l-6.2 -3.4M325.8 340.8l4.3 -25.5M345.4 320.7l5.0 -18.2" stroke="rgb(65, 224, 225)" stroke-width="1" fill="none"/><path d="M353.4 493.4l4.0 -49.9" stroke="rgb(115, 232, 233)" stroke-width="1" fill="none"/><path d="M379.9 483.5l-7.8 -15.5M442.2 508.8l-8.9 -23.7" stroke="rgb(141, 236, 237)" stroke-width="1" fill="none"/><path d="M802.4 403.1l4.1 2.5M307.4 329.3l0.4 29.1M325.0 306.7l0.7 34.1M540.5 377.6l-6.6 -2.6M567.7 377.8l6.6 -2.5M533.8 375.0l-6.5 -2.8M574.4 375.3l6.5 -2.8M527.3 372.2l-6.4 -3.1M580.9 372.5l6.4 -3.1M520.8 369.1l-6.4 -3.5M587.4 369.4l6.4 -3.4M514.5 365.6l-6.3 -3.8M593.7 366.0l6.3 -3.7M600.0 362.2l6.2 -4.0M554.1 378.0l-6.8 -2.2M554.1 378.0l6.8 -2.1M547.3 375.8l-6.6 -2.4M560.9 375.9l6.6 -2.3M540.7 373.5l-6.5 -2.6M567.5 373.6l6.5 -2.6M534.2 370.9l-6.4 -3.0M574.0 371.0l6.4 -3.0M527.7 367.9l-6.3 -3.4M580.5 368.0l6.3 -3.4M521.4 364.5l-6.3 -3.8M586.8 364.6l6.3 -3.8M515.1 360.7l-6.2 -4.2M593.1 360.9l6.2 -4.1M508.9 356.5l-6.1 -4.5M599.3 356.8l6.1 -4.4M567.7 377.8l-6.9 -1.9M540.5 377.6l6.9 -1.8M560.9 375.9l-6.8 -2.0M547.3 375.8l6.8 -1.9M554.1 373.9l-6.6 -2.1M554.1 373.9l6.6 -2.1M547.5 371.8l-6.5 -2.8M560.7 371.8l6.5 -2.8M540.9 369.0l-6.4 -3.3M534.5 365.7l-6.3 -3.5M573.7 365.9l6.3 -3.3M528.1 362.3l-6.3 -3.6M580.1 362.6l6.3 -3.6M521.9 358.6l-6.2 -3.8M586.3 359.0l6.2 -3.9M515.7 354.9l-6.1 -4.2M592.5 355.1l6.1 -4.4M509.6 350.6l-6.0 -4.9M598.6 350.7l6.0 -4.7M581.4 376.9l-7.0 -1.7M574.4 375.3l-6.9 -1.7M533.8 375.0l6.9 -1.5M567.5 373.6l-6.8 -1.7M540.7 373.5l6.8 -1.6M560.7 371.8l-6.6 -2.6M547.5 371.8l6.6 -2.5M534.8 359.7l-6.3 -3.6M528.5 356.1l-6.2 -3.8M579.7 356.9l6.2 -3.9M522.3 352.3l-6.1 -4.0M585.8 353.0l6.1 -4.3M516.2 348.4l-6.0 -4.4M591.9 348.7l6.0 -4.6M587.9 374.0l-7.0 -1.5M520.2 373.5l7.0 -1.3M580.9 372.5l-6.9 -1.5M527.3 372.2l6.9 -1.3M574.0 371.0l-6.8 -1.9M534.2 370.9l6.8 -1.8M535.1 353.7l-6.2 -3.8M528.9 349.8l-6.1 -4.1M579.3 350.8l6.1 -4.4M522.8 345.8l-6.0 -4.2M585.4 346.4l6.0 -4.6M594.4 370.8l-7.0 -1.4M513.8 370.3l7.0 -1.2M587.4 369.4l-6.9 -1.4M520.8 369.1l6.9 -1.2M580.5 368.0l-6.8 -2.0M527.7 367.9l6.8 -2.2M541.5 351.3l-6.2 -3.9M535.3 347.4l-6.1 -4.2M572.8 348.5l6.1 -4.7M529.2 343.1l-6.0 -4.3M578.9 343.9l6.0 -4.7M600.7 367.4l-7.0 -1.4M593.7 366.0l-6.9 -1.4M514.5 365.6l6.9 -1.1M586.8 364.6l-6.8 -2.0M521.4 364.5l6.8 -2.3M528.1 362.3l6.6 -2.6M541.7 344.6l-6.1 -4.4M566.5 345.4l6.1 -4.5M535.6 340.3l-6.0 -4.4M572.6 340.9l6.0 -4.8M600.0 362.2l-6.9 -1.4M508.2 361.8l6.9 -1.1M593.1 360.9l-6.8 -1.9M515.1 360.7l6.8 -2.1M586.3 359.0l-6.7 -2.1M521.9 358.6l6.6 -2.5M528.5 356.1l6.5 -2.5M554.1 345.5l-6.2 -3.8M547.9 341.6l-6.1 -4.6M560.3 342.0l6.1 -4.6M541.8 337.1l-6.0 -4.5M566.3 337.4l6.0 -4.6M606.2 358.2l-6.9 -1.5M502.0 357.7l6.9 -1.2M599.3 356.8l-6.8 -1.7M508.9 356.5l6.8 -1.7M592.5 355.1l-6.7 -2.1M515.7 354.9l6.6 -2.5M585.8 353.0l-6.5 -2.1M522.3 352.3l6.5 -2.5M528.9 349.8l6.4 -2.5M535.3 347.4l6.3 -2.7M541.7 344.6l6.3 -3.0M560.3 342.0l-6.2 -4.2M547.9 341.6l6.2 -3.8M605.4 352.4l-6.8 -1.7M502.8 352.0l6.8 -1.4M598.6 350.7l-6.7 -2.0M509.6 350.6l6.7 -2.3M591.9 348.7l-6.5 -2.3M516.2 348.4l6.5 -2.6M585.4 346.4l-6.4 -2.5M522.8 345.8l6.4 -2.7M578.9 343.9l-6.3 -2.9M529.2 343.1l6.3 -2.8M572.6 340.9l-6.3 -3.5M535.6 340.3l6.3 -3.2M541.8 337.1l6.2 -3.6M598.0 344.1l-6.6 -2.3M510.2 344.0l6.6 -2.4M591.4 341.8l-6.4 -2.7M516.8 341.6l6.4 -2.8M585.0 339.1l-6.3 -3.0M523.2 338.8l6.4 -3.0M578.6 336.2l-6.3 -3.3M529.6 335.8l6.3 -3.2M307.8 358.4l3.7 -31.2M335.3 327.1l4.7 -21.8M361.1 305.6l5.5 -12.8" stroke="rgb(68, 220, 218)" stroke-width="1" fill="none"/><path d="M790.2 425.4l4.9 -0.6M554.1 337.8l-6.1 -4.4M554.1 337.8l6.1 -4.2M566.3 337.4l-6.2 -3.9M560.2 333.6l-6.1 -4.1" stroke="rgb(93, 225, 223)" stroke-width="1" fill="none"/><path d="M346.4 481.8l4.1 -47.8" stroke="rgb(118, 230, 228)" stroke-width="1" fill="none"/><path d="M418.4 510.5l6.2 -46.6M388.0 501.2l5.2 -49.1" stroke="rgb(143, 234, 233)" stroke-width="1" fill="none"/><path d="M581.9 380.0l6.6 -2.3M519.6 376.9l-6.5 -2.8M588.5 377.6l6.5 -2.7M513.1 374.1l-6.4 -3.1M595.1 375.0l6.4 -3.0M506.6 371.0l-6.4 -3.5M601.5 371.9l6.4 -3.4M500.3 367.5l-6.3 -3.9M607.9 368.5l6.3 -3.8M614.2 364.8l6.2 -4.1M561.1 382.6l6.9 -1.6M540.2 380.7l-6.8 -1.9M568.0 381.0l6.8 -1.8M533.4 378.8l-6.6 -2.3M574.7 379.2l6.6 -2.3M526.8 376.5l-6.5 -3.0M581.4 376.9l6.5 -2.9M520.2 373.5l-6.4 -3.2M587.9 374.0l6.4 -3.2M513.8 370.3l-6.4 -3.5M594.4 370.8l6.4 -3.5M507.4 366.8l-6.3 -3.8M600.7 367.4l6.3 -3.7M501.2 363.0l-6.2 -4.1M607.0 363.6l6.2 -4.0M495.0 358.9l-6.1 -4.3M613.2 359.7l6.1 -4.2M619.3 355.5l6.0 -4.5M561.1 382.6l-7.0 -1.3M547.1 382.4l7.0 -1.1M554.1 381.3l-6.9 -1.5M554.1 381.3l6.9 -1.4M547.2 379.8l-6.8 -2.2M561.0 379.9l6.8 -2.2M508.2 361.8l-6.2 -4.1M502.0 357.7l-6.1 -4.4M606.2 358.2l6.1 -4.3M495.9 353.3l-6.0 -4.6M612.3 354.0l6.0 -4.4M618.3 349.5l6.0 -4.6M568.0 381.0l-7.0 -1.1M540.2 380.7l7.0 -0.9M561.0 379.9l-6.9 -1.9M547.2 379.8l6.9 -1.8M502.8 352.0l-6.0 -4.7M605.4 352.4l6.0 -4.5M496.8 347.3l-6.0 -4.9M611.4 347.8l6.0 -4.7M581.9 380.0l-7.2 -0.8M526.3 379.3l7.2 -0.5M574.7 379.2l-7.0 -1.4M533.4 378.8l7.0 -1.2M503.5 345.7l-6.0 -5.0M604.6 346.0l6.0 -4.8M610.6 341.3l5.9 -4.8M588.5 377.6l-7.2 -0.7M519.6 376.9l7.2 -0.4M526.8 376.5l7.0 -1.5M510.2 344.0l-6.0 -5.2M598.0 344.1l6.0 -4.9M504.2 338.8l-5.9 -5.2M603.9 339.2l5.9 -4.9M602.4 375.5l-7.3 -0.5M595.1 375.0l-7.2 -1.0M513.1 374.1l7.2 -0.6M516.8 341.6l-6.0 -4.9M591.4 341.8l6.0 -4.9M510.8 336.6l-5.9 -5.2M597.4 336.8l5.9 -5.0M608.8 372.3l-7.3 -0.4M601.5 371.9l-7.2 -1.1M506.6 371.0l7.2 -0.7M523.2 338.8l-6.0 -4.7M585.0 339.1l6.0 -4.9M517.3 334.1l-5.9 -5.3M590.9 334.2l5.9 -5.0M615.2 368.9l-7.3 -0.4M607.9 368.5l-7.2 -1.2M500.3 367.5l7.2 -0.7M507.4 366.8l7.0 -1.1M529.6 335.8l-5.9 -4.6M578.6 336.2l6.0 -4.9M523.6 331.2l-5.9 -5.2M584.6 331.3l5.9 -5.0M614.2 364.8l-7.2 -1.1M494.0 363.6l7.2 -0.6M607.0 363.6l-7.0 -1.4M501.2 363.0l7.0 -1.1M535.8 332.6l-5.9 -4.7M620.4 360.7l-7.2 -1.0M487.8 359.3l7.2 -0.4M613.2 359.7l-7.0 -1.4M495.0 358.9l7.0 -1.2M626.5 356.3l-7.2 -0.8M619.3 355.5l-7.0 -1.5M488.9 354.5l7.0 -1.2M612.3 354.0l-6.9 -1.6M495.9 353.3l6.9 -1.3M625.3 351.0l-7.0 -1.4M618.3 349.5l-6.9 -1.7M489.8 348.7l6.9 -1.4M611.4 347.8l-6.8 -1.8M496.8 347.3l6.8 -1.6M604.6 346.0l-6.7 -2.0M503.5 345.7l6.7 -1.8M535.8 332.6l6.2 -3.5M624.3 344.9l-6.9 -1.7M617.4 343.2l-6.8 -1.9M490.8 342.4l6.8 -1.7M610.6 341.3l-6.7 -2.1M497.6 340.7l6.7 -1.9M603.9 339.2l-6.6 -2.3M504.2 338.8l6.6 -2.2M597.4 336.8l-6.5 -2.6M510.8 336.6l6.5 -2.5M590.9 334.2l-6.4 -2.9M517.3 334.1l6.4 -2.9M584.6 331.3l-6.3 -3.3M523.6 331.2l6.3 -3.3M609.8 334.3l-6.6 -2.4M603.3 331.9l-6.5 -2.6M504.9 331.4l6.5 -2.5M596.8 329.2l-6.4 -2.9M511.4 328.8l6.4 -2.8" stroke="rgb(72, 217, 212)" stroke-width="1" fill="none"/><path d="M779.7 428.8l5.4 -2.1M785.1 426.7l5.1 -1.3M572.4 332.8l5.9 -4.8M529.9 327.9l-5.9 -5.1M578.3 328.0l5.9 -4.9M548.0 333.4l-6.0 -4.3M560.2 333.6l6.0 -4.4M542.0 329.1l-5.9 -4.8M566.2 329.2l5.9 -4.7M548.0 333.4l6.1 -4.0M554.1 329.5l-6.0 -4.3M554.1 329.5l6.0 -4.3M548.1 325.1l-5.9 -4.7M560.1 325.1l5.9 -4.6M572.4 332.8l-6.2 -3.7M566.2 329.2l-6.1 -4.0M542.0 329.1l6.1 -4.0M560.1 325.1l-6.0 -4.3M548.1 325.1l6.0 -4.3M578.3 328.0l-6.2 -3.6M529.9 327.9l6.2 -3.6M572.1 324.4l-6.1 -3.9M536.0 324.3l6.1 -3.9" stroke="rgb(97, 222, 218)" stroke-width="1" fill="none"/><path d="M339.7 472.2l4.2 -46.0M333.4 464.3l4.3 -44.5M327.3 458.0l4.3 -43.2" stroke="rgb(121, 227, 223)" stroke-width="1" fill="none"/><path d="M372.1 468.0l-7.5 -13.2M409.8 488.6l-8.4 -19.4M442.2 508.8l7.1 -42.2" stroke="rgb(145, 232, 229)" stroke-width="1" fill="none"/><path d="M798.0 401.1l4.3 2.0M804.2 386.0l3.8 4.2M805.4 373.4l3.5 5.5M334.8 293.1l0.5 34.0M345.2 286.7l0.2 34.0M603.3 378.7l6.5 -2.8M609.8 375.9l6.5 -3.1M616.3 372.7l6.4 -3.5M622.7 369.3l6.3 -3.8M525.7 382.0l-6.8 -2.3M582.4 382.8l6.8 -2.1M519.0 379.8l-6.7 -2.6M589.2 380.7l6.7 -2.5M512.3 377.2l-6.6 -2.9M595.8 378.2l6.5 -2.8M505.8 374.3l-6.5 -3.2M602.4 375.5l6.4 -3.1M499.3 371.0l-6.4 -3.6M608.8 372.3l6.4 -3.4M492.9 367.4l-6.3 -3.9M615.2 368.9l6.3 -3.7M486.6 363.5l-6.2 -4.2M621.5 365.2l6.2 -4.0M627.7 361.1l6.1 -4.3M633.8 356.8l6.1 -4.5M546.9 384.9l-7.0 -1.5M561.2 385.1l7.0 -1.3M539.9 383.4l-6.9 -1.9M568.3 383.8l6.9 -1.8M533.0 381.5l-6.8 -2.2M575.1 382.0l6.8 -2.0M526.3 379.3l-6.7 -2.4M494.0 363.6l-6.2 -4.3M487.8 359.3l-6.1 -4.6M620.4 360.7l6.1 -4.4M481.6 354.7l-6.1 -4.9M626.5 356.3l6.1 -4.6M632.5 351.7l6.0 -4.8M561.2 385.1l-7.1 -1.1M546.9 384.9l7.2 -0.9M554.1 384.0l-7.0 -1.5M554.1 384.0l7.0 -1.4M547.1 382.4l-6.9 -1.7M488.9 354.5l-6.1 -5.0M482.8 349.5l-6.0 -5.3M625.3 351.0l6.0 -5.0M631.3 346.0l5.9 -5.1M575.6 384.6l-7.3 -0.8M568.3 383.8l-7.1 -1.2M539.9 383.4l7.2 -1.0M489.8 348.7l-6.0 -5.0M483.9 343.7l-5.9 -5.6M624.3 344.9l5.9 -5.1M630.2 339.8l5.9 -5.3M582.4 382.8l-7.3 -0.8M525.7 382.0l7.3 -0.5M575.1 382.0l-7.2 -1.0M533.0 381.5l7.2 -0.8M490.8 342.4l-5.9 -5.1M617.4 343.2l5.9 -4.8M484.9 337.2l-5.9 -5.8M623.3 338.4l5.9 -5.3M596.6 381.1l-7.5 -0.4M589.2 380.7l-7.3 -0.7M519.0 379.8l7.3 -0.5M497.6 340.7l-5.9 -5.1M491.7 335.6l-5.9 -5.5M616.5 336.4l5.8 -4.9M622.3 331.5l5.8 -5.6M603.3 378.7l-7.5 -0.4M504.8 377.2l7.5 -0.1M595.8 378.2l-7.3 -0.6M512.3 377.2l7.3 -0.3M498.3 333.6l-5.8 -5.2M609.8 334.3l5.8 -4.9M615.7 329.4l5.8 -5.4M609.8 375.9l-7.5 -0.4M498.3 374.3l7.5 -0.1M505.8 374.3l7.3 -0.1M504.9 331.4l-5.8 -5.2M603.3 331.9l5.8 -4.9M499.1 326.2l-5.8 -5.7M609.1 326.9l5.8 -5.1M616.3 372.7l-7.5 -0.4M491.8 371.0l7.5 -0.0M499.3 371.0l7.3 -0.0M511.4 328.8l-5.8 -5.2M596.8 329.2l5.8 -5.0M505.5 323.6l-5.8 -5.4M602.6 324.3l5.8 -5.0M622.7 369.3l-7.5 -0.4M485.4 367.4l7.5 0.0M492.9 367.4l7.3 0.0M517.7 326.0l-5.8 -5.2M590.5 326.3l5.8 -4.9M596.3 321.4l5.8 -4.9M628.9 365.5l-7.5 -0.4M621.5 365.2l-7.3 -0.4M486.6 363.5l7.3 0.1M635.1 361.5l-7.5 -0.4M627.7 361.1l-7.3 -0.5M480.4 359.3l7.3 0.0M633.8 356.8l-7.3 -0.5M474.3 354.7l7.4 -0.0M481.6 354.7l7.2 -0.1M639.8 352.3l-7.3 -0.6M632.5 351.7l-7.2 -0.7M475.6 349.8l7.2 -0.2M482.8 349.5l7.1 -0.9M795.1 424.8l-6.4 -25.4M638.5 346.8l-7.2 -0.8M631.3 346.0l-7.0 -1.1M476.8 344.3l7.1 -0.5M483.9 343.7l6.9 -1.4M637.3 340.9l-7.1 -1.1M630.2 339.8l-6.9 -1.4M477.9 338.1l6.9 -0.9M623.3 338.4l-6.8 -2.0M484.9 337.2l6.8 -1.6M616.5 336.4l-6.7 -2.2M491.7 335.6l6.7 -2.0M498.3 333.6l6.6 -2.2M590.5 326.3l-6.3 -3.2M629.1 333.1l-6.8 -1.6M622.3 331.5l-6.7 -2.1M485.8 330.1l6.7 -1.7M615.7 329.4l-6.6 -2.4M492.5 328.4l6.6 -2.3M609.1 326.9l-6.5 -2.7M499.1 326.2l6.5 -2.5M602.6 324.3l-6.4 -2.9M505.5 323.6l6.4 -2.8M596.3 321.4l-6.3 -3.1M806.5 405.7l-6.3 -23.2M320.7 333.0l4.3 -26.3" stroke="rgb(76, 213, 205)" stroke-width="1" fill="none"/><path d="M774.1 431.8l5.6 -3.0M511.9 320.8l-5.8 -5.3M524.0 322.8l-5.8 -5.1M584.2 323.1l5.8 -4.9M590.0 318.3l5.8 -4.9M536.0 324.3l-5.9 -4.9M572.1 324.4l5.9 -4.8M530.2 319.4l-5.8 -4.9M578.0 319.6l5.8 -4.7M542.1 320.5l-5.9 -4.7M566.1 320.6l5.9 -4.6M536.3 315.7l-5.8 -4.8M571.9 315.9l5.8 -4.6M554.1 320.8l-5.9 -4.4M554.1 320.8l5.9 -4.4M548.2 316.4l-5.9 -4.5M560.0 316.5l5.9 -4.4M566.1 320.6l-6.0 -4.1M542.1 320.5l6.0 -4.0M560.0 316.5l-5.9 -4.2M548.2 316.4l5.9 -4.2M517.7 326.0l6.3 -3.2M584.2 323.1l-6.2 -3.5M524.0 322.8l6.2 -3.4M578.0 319.6l-6.1 -3.7M530.2 319.4l6.1 -3.7M571.9 315.9l-6.0 -3.9M536.3 315.7l6.0 -3.8M511.9 320.8l6.3 -3.1M590.0 318.3l-6.2 -3.4M518.2 317.8l6.2 -3.3M583.8 314.9l-6.1 -3.6" stroke="rgb(100, 218, 212)" stroke-width="1" fill="none"/><path d="M749.5 453.2l6.5 -6.8M756.0 446.4l6.3 -5.8M762.3 440.6l6.0 -4.8M768.3 435.7l5.8 -3.9" stroke="rgb(124, 224, 219)" stroke-width="1" fill="none"/><path d="M433.3 485.1l-8.7 -21.2M379.9 483.5l5.4 -45.7" stroke="rgb(148, 230, 225)" stroke-width="1" fill="none"/><path d="M793.5 399.9l4.5 1.2M800.2 382.5l4.0 3.5M802.9 352.7l3.1 7.4M320.3 301.7l0.4 31.3M604.3 381.5l6.7 -2.6M610.9 378.9l6.6 -2.9M617.5 376.0l6.5 -3.2M623.9 372.8l6.4 -3.5M630.3 369.4l6.3 -3.8M636.6 365.6l6.2 -4.0M642.8 361.6l6.1 -4.3M525.2 384.3l-6.9 -2.1M583.0 385.2l6.9 -1.9M518.3 382.2l-6.8 -2.3M589.9 383.3l6.8 -2.2M511.5 379.8l-6.7 -2.6M596.6 381.1l6.7 -2.5M504.8 377.2l-6.6 -2.9M498.3 374.3l-6.5 -3.3M491.8 371.0l-6.4 -3.6M485.4 367.4l-6.3 -3.9M479.2 363.5l-6.2 -4.3M628.9 365.5l6.2 -4.1M472.9 359.2l-6.2 -4.6M635.1 361.5l6.1 -4.3M641.3 357.2l6.1 -4.6M647.3 352.6l6.0 -4.8M561.4 387.3l7.1 -1.3M539.6 385.6l-7.0 -1.7M568.5 386.1l7.0 -1.5M532.6 383.9l-6.9 -1.9M575.6 384.6l6.9 -1.7M480.4 359.3l-6.1 -4.6M474.3 354.7l-6.1 -4.8M468.2 349.9l-6.0 -5.1M639.8 352.3l6.0 -4.8M645.8 347.4l5.9 -5.0M561.4 387.3l-7.3 -1.1M546.8 387.1l7.3 -0.9M554.1 386.2l-7.2 -1.3M554.1 386.2l7.1 -1.1M475.6 349.8l-6.0 -5.2M469.6 344.6l-5.9 -5.3M638.5 346.8l5.9 -5.0M644.4 341.8l5.9 -5.3M361.6 274.0l-0.4 31.6M568.5 386.1l-7.3 -0.9M539.6 385.6l7.3 -0.7M476.8 344.3l-5.9 -5.5M470.8 338.8l-5.9 -5.6M637.3 340.9l5.9 -5.2M643.1 335.7l5.8 -5.5M583.0 385.2l-7.4 -0.7M525.2 384.3l7.5 -0.3M532.6 383.9l7.3 -0.5M477.9 338.1l-5.9 -5.7M636.1 334.5l5.8 -5.4M597.5 383.8l-7.6 -0.5M589.9 383.3l-7.5 -0.5M518.3 382.2l7.5 -0.1M479.0 331.4l-5.8 -5.9M629.1 333.1l5.8 -5.5M634.9 327.6l5.7 -5.6M604.3 381.5l-7.6 -0.3M503.9 379.7l7.6 0.1M511.5 379.8l7.5 -0.1M485.8 330.1l-5.8 -6.0M628.1 325.9l5.7 -5.6M610.9 378.9l-7.6 -0.2M497.2 377.0l7.6 0.3M492.5 328.4l-5.8 -6.0M486.7 322.5l-5.8 -6.1M621.4 324.0l5.7 -5.6M625.2 376.1l-7.8 -0.1M617.5 376.0l-7.6 -0.1M490.6 373.9l7.6 0.4M493.3 320.5l-5.8 -6.1M614.9 321.8l5.7 -5.6M631.7 372.9l-7.8 -0.1M623.9 372.8l-7.6 -0.1M484.2 370.6l7.7 0.4M608.4 319.3l5.7 -5.6M638.1 369.4l-7.8 -0.0M630.3 369.4l-7.6 -0.1M477.8 366.9l7.7 0.5M636.6 365.6l-7.6 -0.1M471.5 363.0l7.7 0.5M479.2 363.5l7.5 0.1M642.8 361.6l-7.6 -0.1M472.9 359.2l7.5 0.1M648.9 357.3l-7.6 -0.2M641.3 357.2l-7.5 -0.3M466.8 354.6l7.5 0.2M647.3 352.6l-7.5 -0.3M468.2 349.9l7.4 -0.1M653.3 347.8l-7.5 -0.4M645.8 347.4l-7.3 -0.6M462.2 344.8l7.4 -0.2M469.6 344.6l7.2 -0.4M651.8 342.4l-7.3 -0.6M644.4 341.8l-7.2 -0.9M463.6 339.3l7.2 -0.5M470.8 338.8l7.1 -0.7M650.3 336.5l-7.2 -0.9M643.1 335.7l-7.1 -1.2M464.9 333.2l7.1 -0.8M636.1 334.5l-6.9 -1.4M472.0 332.4l6.9 -1.0M479.0 331.4l6.8 -1.3M802.4 403.1l-6.4 -23.0M641.9 329.1l-6.9 -1.4M634.9 327.6l-6.8 -1.7M473.2 325.5l6.8 -1.4M628.1 325.9l-6.7 -1.9M480.0 324.1l6.7 -1.6M621.4 324.0l-6.6 -2.2M486.7 322.5l6.6 -2.0M614.9 321.8l-6.5 -2.5M493.3 320.5l6.5 -2.3M608.4 319.3l-6.4 -2.8M633.9 320.4l-6.7 -2.0M627.2 318.4l-6.6 -2.2M620.6 316.1l-6.5 -2.5M808.0 390.2l-6.3 -21.6M808.8 379.0l-6.3 -20.2M806.0 360.1l-6.3 -17.8M350.4 302.5l5.4 -15.6M366.6 292.8l5.8 -10.7" stroke="rgb(79, 210, 199)" stroke-width="1" fill="none"/><path d="M499.7 318.2l-5.7 -6.1M506.1 315.5l-5.7 -6.0M602.0 316.5l5.7 -5.6M518.2 317.8l-5.8 -5.3M512.4 312.5l-5.7 -5.9M595.8 313.4l5.7 -5.5M524.3 314.5l-5.8 -5.3M583.8 314.9l5.8 -4.9M589.6 310.0l5.7 -5.4M785.1 426.7l-6.7 -25.3M530.4 311.0l-5.8 -5.4M577.7 311.3l5.8 -5.1M790.2 425.4l-6.5 -25.5M542.3 311.9l-5.8 -4.7M565.9 312.0l5.8 -4.5M554.1 312.2l-5.9 -4.4M554.1 312.2l5.9 -4.3M565.9 312.0l-5.9 -4.1M542.3 311.9l5.9 -4.0M524.3 314.5l6.1 -3.5M577.7 311.3l-6.0 -3.8M530.4 311.0l6.0 -3.8M499.7 318.2l6.4 -2.7M602.0 316.5l-6.3 -3.1M506.1 315.5l6.3 -3.0M595.8 313.4l-6.2 -3.4M512.4 312.5l6.2 -3.3M589.6 310.0l-6.1 -3.7M518.6 309.2l6.1 -3.6M614.1 313.6l-6.4 -2.8M607.8 310.9l-6.3 -3.0" stroke="rgb(102, 216, 206)" stroke-width="1" fill="none"/><path d="M364.6 454.8l-7.2 -11.3M536.5 307.1l-5.8 -5.4M571.7 307.5l5.8 -5.2M548.2 307.9l-5.8 -5.0M560.0 308.0l5.8 -4.8M560.0 308.0l-5.9 -4.6M548.2 307.9l5.9 -4.5M571.7 307.5l-5.9 -4.3M536.5 307.1l5.9 -4.2M583.5 306.3l-6.0 -3.9" stroke="rgb(126, 222, 214)" stroke-width="1" fill="none"/><path d="M401.3 469.2l-8.2 -17.1M714.1 461.0l7.4 -10.6M458.2 489.4l-8.9 -22.9M409.8 488.6l6.4 -42.8" stroke="rgb(149, 228, 221)" stroke-width="1" fill="none"/><path d="M788.7 399.4l4.8 0.5M801.7 368.6l3.7 4.8M802.6 358.8l3.4 6.1M799.7 342.4l3.0 7.9M796.3 334.0l3.0 8.0M792.8 327.0l3.0 8.2M789.3 321.3l2.9 8.7M605.3 384.2l6.8 -2.4M612.0 381.8l6.7 -2.7M489.4 376.7l-6.6 -3.2M618.7 379.1l6.6 -3.0M482.8 373.5l-6.5 -3.4M625.2 376.1l6.5 -3.2M476.4 370.1l-6.4 -3.7M631.7 372.9l6.4 -3.5M638.1 369.4l6.3 -3.8M644.3 365.7l6.2 -4.0M650.5 361.7l6.1 -4.2M656.7 357.4l6.1 -4.4M524.6 386.5l-7.0 -2.0M583.6 387.6l7.0 -1.8M517.6 384.5l-6.9 -2.3M590.6 385.9l6.9 -2.1M510.7 382.2l-6.8 -2.5M597.5 383.8l6.8 -2.3M503.9 379.7l-6.7 -2.8M497.2 377.0l-6.6 -3.0M490.6 373.9l-6.5 -3.3M484.2 370.6l-6.4 -3.7M477.8 366.9l-6.3 -4.0M471.5 363.0l-6.2 -4.3M465.3 358.7l-6.2 -4.6M459.1 354.1l-6.1 -4.8M648.9 357.3l6.1 -4.5M654.9 352.8l6.0 -4.7M660.9 348.1l5.9 -4.9M539.3 387.8l-7.2 -1.7M568.8 388.3l7.2 -1.4M532.2 386.1l-7.0 -1.9M576.0 386.9l7.0 -1.7M466.8 354.6l-6.1 -4.9M460.7 349.7l-6.0 -5.1M653.3 347.8l5.9 -4.9M659.2 342.9l5.9 -5.1M554.1 388.4l-7.3 -1.3M554.1 388.4l7.3 -1.1M546.8 387.1l-7.2 -1.5M462.2 344.8l-6.0 -5.5M651.8 342.4l5.9 -5.2M657.6 337.2l5.8 -5.3M568.8 388.3l-7.4 -1.0M539.3 387.8l7.5 -0.7M463.6 339.3l-5.9 -5.7M650.3 336.5l5.8 -5.4M656.1 331.2l5.7 -5.4M583.6 387.6l-7.6 -0.7M524.6 386.5l7.6 -0.4M576.0 386.9l-7.4 -0.8M532.2 386.1l7.5 -0.5M464.9 333.2l-5.8 -5.9M648.9 330.2l5.7 -5.5M598.4 386.4l-7.8 -0.5M590.6 385.9l-7.6 -0.6M517.6 384.5l7.6 -0.2M472.0 332.4l-5.8 -5.8M466.2 326.6l-5.8 -6.1M641.9 329.1l5.7 -5.6M647.6 323.4l5.7 -5.6M605.3 384.2l-7.8 -0.4M502.9 382.2l7.8 0.0M510.7 382.2l7.6 -0.1M473.2 325.5l-5.8 -6.0M640.7 322.0l5.7 -5.7M620.0 382.0l-7.9 -0.2M612.0 381.8l-7.8 -0.3M496.1 379.6l7.8 0.2M480.0 324.1l-5.8 -6.0M474.2 318.1l-5.7 -6.2M633.9 320.4l5.7 -5.8M626.6 379.2l-7.9 -0.1M618.7 379.1l-7.8 -0.2M489.4 376.7l7.8 0.3M480.9 316.4l-5.7 -6.2M627.2 318.4l5.7 -5.7M633.2 376.2l-7.9 -0.1M482.8 373.5l7.8 0.4M487.5 314.4l-5.7 -6.1M620.6 316.1l5.7 -5.7M626.3 310.5l5.6 -5.8M639.6 372.9l-7.9 -0.0M476.4 370.1l7.8 0.5M646.0 369.4l-7.9 -0.0M470.0 366.4l7.8 0.5M652.3 365.7l-7.9 -0.0M644.3 365.7l-7.8 -0.0M463.7 362.4l7.8 0.5M658.5 361.7l-7.9 -0.0M650.5 361.7l-7.8 -0.1M457.4 358.1l7.8 0.5M465.3 358.7l7.7 0.5M656.7 357.4l-7.8 -0.1M459.1 354.1l7.7 0.5M662.7 353.0l-7.8 -0.2M654.9 352.8l-7.6 -0.2M453.0 349.3l7.7 0.4M460.7 349.7l7.5 0.2M660.9 348.1l-7.6 -0.3M454.7 344.5l7.5 0.2M666.9 343.3l-7.6 -0.4M659.2 342.9l-7.5 -0.5M456.2 339.3l7.4 -0.0M798.0 401.1l-6.7 -22.0M665.1 337.8l-7.5 -0.6M657.6 337.2l-7.3 -0.7M457.7 333.6l7.2 -0.4M663.4 332.0l-7.3 -0.8M656.1 331.2l-7.2 -1.0M648.9 330.2l-7.1 -1.1M459.1 327.3l7.1 -0.7M466.2 326.6l7.0 -1.1M654.7 324.7l-7.1 -1.2M647.6 323.4l-6.9 -1.4M640.7 322.0l-6.8 -1.7M467.4 319.4l6.8 -1.3M474.2 318.1l6.7 -1.7M480.9 316.4l6.6 -2.0M487.5 314.4l6.5 -2.3M804.2 386.0l-6.6 -20.3M646.4 316.3l-6.8 -1.7M639.6 314.6l-6.7 -1.9M632.9 312.7l-6.6 -2.2M805.9 364.9l-6.5 -17.8M802.7 350.2l-6.4 -16.3M799.3 341.9l-6.5 -14.9M795.8 335.2l-6.5 -14.0M792.2 329.9l-6.5 -13.4M316.0 328.5l4.4 -26.8M330.0 315.3l4.8 -22.2M340.0 305.3l5.2 -18.6" stroke="rgb(96, 196, 181)" stroke-width="1" fill="none"/><path d="M494.0 312.1l-5.7 -6.0M614.1 313.6l5.7 -5.6M619.8 308.0l5.6 -5.8M500.4 309.5l-5.7 -6.0M607.8 310.9l5.7 -5.6M506.7 306.6l-5.7 -5.9M601.5 307.8l5.7 -5.5M779.7 428.8l-6.8 -25.3M518.6 309.2l-5.7 -5.8M512.9 303.5l-5.7 -5.8M595.3 304.5l5.6 -5.5M583.5 306.3l5.7 -5.3M494.0 312.1l6.4 -2.6M500.4 309.5l6.3 -2.9M601.5 307.8l-6.2 -3.3M506.7 306.6l6.2 -3.2M595.3 304.5l-6.1 -3.6M512.9 303.5l6.1 -3.4M626.3 310.5l-6.5 -2.5M619.8 308.0l-6.4 -2.7M613.4 305.3l-6.3 -3.0M607.1 302.3l-6.2 -3.2" stroke="rgb(117, 204, 191)" stroke-width="1" fill="none"/><path d="M357.4 443.5l-6.9 -9.5M756.0 446.4l-7.1 -26.8M762.3 440.6l-7.1 -26.2M768.3 435.7l-7.0 -25.8M774.1 431.8l-6.9 -25.4M524.7 305.6l-5.7 -5.6M589.2 301.0l5.6 -5.4M530.7 301.8l-5.7 -5.4M577.5 302.3l5.7 -5.2M542.4 302.9l-5.8 -5.2M565.8 303.2l5.7 -5.0M571.5 298.2l5.7 -5.1M554.1 303.4l-5.8 -4.9M554.1 303.4l5.8 -4.7M548.3 298.5l-5.7 -5.0M559.9 298.6l5.7 -4.8M565.8 303.2l-5.9 -4.5M542.4 302.9l5.9 -4.4M559.9 298.6l-5.8 -4.7M548.3 298.5l5.8 -4.5M524.7 305.6l6.0 -3.8M577.5 302.3l-5.9 -4.1M530.7 301.8l5.9 -4.0M571.5 298.2l-5.9 -4.4M536.7 297.7l5.9 -4.2M589.2 301.0l-6.0 -3.8M519.0 300.0l6.0 -3.7" stroke="rgb(138, 212, 201)" stroke-width="1" fill="none"/><path d="M721.5 450.4l7.2 -9.5M458.2 489.4l7.8 -35.6M433.3 485.1l7.3 -38.3M372.1 468.0l5.6 -42.6M749.5 453.2l-7.1 -27.6" stroke="rgb(159, 220, 211)" stroke-width="1" fill="none"/><path d="M795.9 380.2l4.3 2.3M797.6 365.7l4.1 2.9M798.7 354.8l3.8 3.9M799.4 347.1l3.5 5.6M298.3 334.8l-1.2 19.1M315.9 300.0l0.0 28.5M628.1 382.3l6.7 -2.9M634.7 379.5l6.6 -3.1M641.3 376.4l6.5 -3.3M647.8 373.0l6.4 -3.5M654.1 369.5l6.3 -3.7M660.4 365.7l6.2 -3.9M606.3 386.9l6.9 -2.3M613.2 384.5l6.8 -2.6M488.1 379.3l-6.7 -3.0M620.0 382.0l6.7 -2.8M481.4 376.3l-6.6 -3.2M626.6 379.2l6.6 -3.0M474.8 373.1l-6.5 -3.5M633.2 376.2l6.5 -3.3M468.4 369.6l-6.4 -3.8M639.6 372.9l6.4 -3.5M462.0 365.8l-6.3 -4.0M646.0 369.4l6.3 -3.8M652.3 365.7l6.2 -4.0M658.5 361.7l6.1 -4.2M664.6 357.5l6.0 -4.4M670.7 353.1l6.0 -4.5M584.2 390.1l7.2 -1.8M516.8 386.8l-7.0 -2.2M591.4 388.3l7.0 -2.0M509.8 384.6l-6.9 -2.4M598.4 386.4l6.9 -2.2M502.9 382.2l-6.8 -2.6M496.1 379.6l-6.7 -2.9M470.0 366.4l-6.3 -4.0M463.7 362.4l-6.2 -4.3M457.4 358.1l-6.2 -4.5M451.3 353.6l-6.1 -4.8M662.7 353.0l6.0 -4.6M668.7 348.4l5.9 -4.8M674.6 343.6l5.9 -4.9M539.0 390.0l-7.3 -1.7M569.1 390.7l7.3 -1.4M531.7 388.3l-7.2 -1.8M576.4 389.2l7.2 -1.6M453.0 349.3l-6.0 -5.1M447.0 344.2l-6.0 -5.3M666.9 343.3l5.9 -5.0M672.7 338.3l5.8 -5.1M554.1 390.6l-7.4 -1.4M554.1 390.6l7.4 -1.1M546.6 389.3l-7.3 -1.5M561.5 389.6l7.3 -1.2M454.7 344.5l-6.0 -5.3M448.7 339.2l-5.9 -5.5M665.1 337.8l5.8 -5.2M670.9 332.6l5.7 -5.3M569.1 390.7l-7.6 -1.1M539.0 390.0l7.6 -0.7M561.5 389.6l-7.4 -1.2M546.6 389.3l7.4 -0.9M456.2 339.3l-5.9 -5.6M450.3 333.7l-5.8 -5.8M663.4 332.0l5.7 -5.4M584.2 390.1l-7.8 -0.9M524.0 388.8l7.8 -0.4M576.4 389.2l-7.6 -0.9M531.7 388.3l7.6 -0.5M457.7 333.6l-5.8 -5.9M451.9 327.7l-5.8 -6.0M661.9 325.7l5.7 -5.5M599.3 389.0l-7.9 -0.7M591.4 388.3l-7.8 -0.7M516.8 386.8l7.8 -0.3M459.1 327.3l-5.8 -6.1M654.7 324.7l5.7 -5.6M660.4 319.1l5.6 -5.6M606.3 386.9l-7.9 -0.5M501.8 384.6l8.0 -0.0M509.8 384.6l7.8 -0.1M460.4 320.4l-5.7 -6.2M653.3 317.8l5.6 -5.6M621.3 385.0l-8.1 -0.4M613.2 384.5l-7.9 -0.4M494.9 382.0l8.0 0.1M467.4 319.4l-5.7 -6.3M646.4 316.3l5.6 -5.7M628.1 382.3l-8.1 -0.4M488.1 379.3l8.0 0.3M468.5 311.9l-5.7 -6.3M639.6 314.6l5.6 -5.7M645.2 308.9l5.6 -5.7M634.7 379.5l-8.1 -0.2M481.4 376.3l8.0 0.4M475.2 310.3l-5.7 -6.3M632.9 312.7l5.6 -5.8M638.5 306.9l5.6 -5.7M641.3 376.4l-8.1 -0.2M474.8 373.1l8.0 0.5M481.8 308.3l-5.7 -6.3M631.9 304.7l5.6 -5.7M647.8 373.0l-8.1 -0.1M468.4 369.6l8.0 0.5M654.1 369.5l-8.1 -0.1M462.0 365.8l8.0 0.6M660.4 365.7l-8.1 -0.1M455.7 361.8l8.0 0.6M666.6 361.8l-8.1 -0.1M449.4 357.5l8.0 0.6M672.7 357.7l-8.1 -0.2M664.6 357.5l-7.9 -0.1M451.3 353.6l7.8 0.5M670.7 353.1l-7.9 -0.1M445.2 348.8l7.8 0.5M676.6 348.6l-7.9 -0.2M668.7 348.4l-7.8 -0.2M447.0 344.2l7.7 0.3M793.5 399.9l-7.0 -21.2M674.6 343.6l-7.8 -0.3M441.0 339.0l7.7 0.2M448.7 339.2l7.5 0.1M680.5 338.7l-7.8 -0.4M672.7 338.3l-7.6 -0.5M442.8 333.7l7.5 0.0M450.3 333.7l7.4 -0.1M678.5 333.2l-7.6 -0.5M670.9 332.6l-7.5 -0.7M444.5 327.9l7.4 -0.2M451.9 327.7l7.2 -0.4M676.6 327.3l-7.5 -0.7M669.2 326.6l-7.3 -0.9M661.9 325.7l-7.2 -1.0M446.1 321.7l7.2 -0.5M453.3 321.2l7.1 -0.7M460.4 320.4l7.0 -1.0M667.5 320.2l-7.2 -1.1M660.4 319.1l-7.1 -1.3M653.3 317.8l-6.9 -1.5M454.7 314.3l7.0 -1.1M461.7 313.2l6.8 -1.3M468.5 311.9l6.7 -1.6M475.2 310.3l6.6 -1.9M658.9 312.1l-6.9 -1.5M652.0 310.6l-6.8 -1.7M645.2 308.9l-6.7 -2.0M638.5 306.9l-6.6 -2.2M805.4 373.4l-6.7 -18.6M802.9 352.7l-6.8 -15.5M297.1 353.9l4.1 -31.7M778.5 311.0l-6.6 -10.1M372.4 282.1l5.9 -8.7" stroke="rgb(128, 172, 148)" stroke-width="1" fill="none"/><path d="M331.6 414.8l-5.7 -3.6M325.9 411.2l-5.4 -2.4M320.4 408.8l-5.2 -1.1M778.4 401.4l5.3 -1.5M783.7 399.9l5.0 -0.5M488.3 306.1l-5.6 -6.3M625.4 302.3l5.6 -5.7M494.7 303.6l-5.6 -6.2M613.4 305.3l5.6 -5.7M619.0 299.6l5.6 -5.7M501.0 300.8l-5.6 -6.1M607.1 302.3l5.6 -5.7M507.2 297.7l-5.6 -6.0M600.9 299.1l5.6 -5.6M481.8 308.3l6.5 -2.2M488.3 306.1l6.4 -2.5M494.7 303.6l6.3 -2.8M501.0 300.8l6.2 -3.1M600.9 299.1l-6.1 -3.5M631.9 304.7l-6.5 -2.4M476.2 302.0l6.5 -2.2M625.4 302.3l-6.4 -2.7M482.7 299.9l6.4 -2.5M619.0 299.6l-6.3 -2.9M612.7 296.7l-6.2 -3.2M606.5 293.5l-6.1 -3.4" stroke="rgb(144, 183, 162)" stroke-width="1" fill="none"/><path d="M350.5 434.0l-6.6 -7.9M343.9 426.2l-6.3 -6.4M337.6 419.8l-6.0 -5.0M519.0 300.0l-5.7 -5.7M594.8 295.6l5.6 -5.5M525.0 296.4l-5.7 -5.6M583.2 297.2l5.6 -5.3M536.7 297.7l-5.7 -5.3M531.0 292.4l-5.6 -5.5M577.2 293.1l5.6 -5.2M542.5 293.5l-5.7 -5.2M565.7 293.8l5.7 -5.0M554.1 294.0l-5.7 -4.9M554.1 294.0l5.7 -4.8M565.7 293.8l-5.8 -4.6M542.5 293.5l5.8 -4.5M583.2 297.2l-5.9 -4.1M525.0 296.4l6.0 -3.9M577.2 293.1l-5.9 -4.3M531.0 292.4l5.9 -4.1M507.2 297.7l6.1 -3.4M594.8 295.6l-6.0 -3.7M513.3 294.3l6.0 -3.6M588.8 291.8l-6.0 -3.9" stroke="rgb(162, 194, 177)" stroke-width="1" fill="none"/><path d="M393.2 452.1l-7.9 -14.4M728.7 440.8l7.0 -8.2M424.6 463.9l-8.4 -18.0M691.0 456.5l7.8 -12.3M474.9 475.6l-8.9 -21.8M518.6 484.8l-9.0 -24.3M536.3 481.6l-9.0 -24.4M536.3 481.6l8.9 -25.5M518.6 484.8l8.8 -27.6M401.3 469.2l6.7 -38.8M714.1 461.0l-7.7 -27.4M364.6 454.8l5.8 -40.1" stroke="rgb(178, 205, 191)" stroke-width="1" fill="none"/><path d="M791.3 379.1l4.6 1.1M796.1 337.2l3.5 5.2M301.2 322.2l-1.0 20.5M792.7 328.8l3.6 5.1M311.8 301.3l-0.3 26.0M778.9 306.3l3.3 6.7M629.6 384.3l6.7 -2.3M636.4 382.1l6.6 -2.6M643.0 379.5l6.5 -2.9M649.6 376.6l6.5 -3.3M656.0 373.2l6.4 -3.6M662.4 369.7l6.3 -3.8M668.7 365.9l6.2 -3.9M674.9 362.0l6.1 -4.3M681.0 357.7l6.0 -4.5M775.4 303.1l3.1 7.9M607.4 388.8l7.0 -1.5M614.4 387.3l6.9 -2.3M486.7 381.8l-6.8 -2.9M621.3 385.0l6.8 -2.6M480.0 379.0l-6.7 -3.1M473.3 375.9l-6.6 -3.3M466.7 372.5l-6.5 -3.6M460.2 369.0l-6.4 -3.8M453.8 365.2l-6.3 -4.1M447.5 361.1l-6.2 -4.3M666.6 361.8l6.1 -4.1M672.7 357.7l6.0 -4.3M678.7 353.4l6.0 -4.5M684.7 349.0l5.9 -4.7M330.0 284.5l0.0 30.8M584.9 391.4l7.3 -0.7M516.0 388.8l-7.2 -1.9M592.1 390.7l7.1 -1.7M508.8 386.9l-7.0 -2.3M599.3 389.0l7.0 -2.1M501.8 384.6l-6.9 -2.5M494.9 382.0l-6.8 -2.8M455.7 361.8l-6.2 -4.3M449.4 357.5l-6.2 -4.5M443.3 353.0l-6.1 -4.8M437.2 348.2l-6.0 -5.0M676.6 348.6l5.9 -4.6M682.5 344.0l5.8 -4.7M688.4 339.3l5.8 -5.0M538.7 391.3l-7.4 -0.7M569.5 392.1l7.4 -0.5M531.3 390.6l-7.3 -1.8M576.9 391.7l7.3 -1.6M524.0 388.8l-7.2 -2.0M445.2 348.8l-6.0 -5.0M439.2 343.8l-6.0 -5.2M680.5 338.7l5.8 -4.9M686.3 333.9l5.7 -5.0M340.2 274.7l-0.2 30.6M554.1 392.1l-7.6 -0.6M554.1 392.1l7.6 -0.2M546.5 391.5l-7.5 -1.5M561.7 391.9l7.4 -1.2M441.0 339.0l-5.9 -5.5M678.5 333.2l5.7 -5.0M684.2 328.1l5.7 -5.1M569.5 392.1l-7.8 -0.3M538.7 391.3l7.8 0.2M561.7 391.9l-7.6 -1.3M546.5 391.5l7.6 -0.9M442.8 333.7l-5.8 -5.7M437.0 328.0l-5.8 -5.8M676.6 327.3l5.7 -5.2M350.8 271.3l-0.3 31.2M584.9 391.4l-8.0 0.3M576.9 391.7l-7.8 -1.0M531.3 390.6l7.8 -0.6M444.5 327.9l-5.8 -5.9M669.2 326.6l5.7 -5.4M674.9 321.2l5.6 -5.3M592.1 390.7l-7.9 -0.6M516.0 388.8l8.0 -0.1M446.1 321.7l-5.7 -6.0M667.5 320.2l5.6 -5.5M673.2 314.7l5.6 -5.3M607.4 388.8l-8.1 0.2M508.8 386.9l8.0 -0.2M453.3 321.2l-5.7 -6.1M447.6 315.1l-5.7 -6.2M666.0 313.5l5.6 -5.5M367.5 263.5l-0.9 29.3M614.4 387.3l-8.1 -0.4M493.7 384.3l8.2 0.3M454.7 314.3l-5.7 -6.2M658.9 312.1l5.6 -5.6M629.6 384.3l-8.3 0.6M486.7 381.8l8.1 0.2M461.7 313.2l-5.7 -6.2M652.0 310.6l5.6 -5.7M657.6 304.9l5.5 -5.6M636.4 382.1l-8.3 0.3M480.0 379.0l8.2 0.3M462.8 305.6l-5.6 -6.3M650.8 303.1l5.5 -5.7M643.0 379.5l-8.3 -0.0M473.3 375.9l8.2 0.4M469.6 303.9l-5.6 -6.3M644.1 301.2l5.5 -5.7M658.1 375.5l-8.5 1.1M649.6 376.6l-8.3 -0.2M466.7 372.5l8.2 0.5M637.5 299.0l5.5 -5.7M664.6 372.3l-8.5 1.0M656.0 373.2l-8.3 -0.2M460.2 369.0l8.2 0.6M670.9 368.8l-8.5 0.9M662.4 369.7l-8.3 -0.2M453.8 365.2l8.2 0.6M677.2 365.0l-8.5 0.9M668.7 365.9l-8.3 -0.2M447.5 361.1l8.2 0.7M674.9 362.0l-8.3 -0.2M441.3 356.8l8.2 0.7M681.0 357.7l-8.3 -0.0M435.1 352.3l8.2 0.7M443.3 353.0l8.0 0.6M687.0 353.3l-8.3 0.2M678.7 353.4l-8.1 -0.3M437.2 348.2l8.0 0.6M788.7 399.4l-7.2 -20.2M684.7 349.0l-8.1 -0.4M431.2 343.3l8.0 0.5M439.2 343.8l7.8 0.4M690.6 344.3l-8.1 -0.3M682.5 344.0l-7.9 -0.4M433.2 338.6l7.8 0.4M688.4 339.3l-7.9 -0.6M435.1 333.5l7.7 0.2M694.2 334.3l-7.9 -0.5M686.3 333.9l-7.7 -0.7M429.3 327.9l7.7 0.1M437.0 328.0l7.5 -0.1M800.2 382.5l-7.0 -18.7M692.0 328.9l-7.7 -0.7M684.2 328.1l-7.6 -0.8M438.7 322.1l7.4 -0.3M689.9 323.1l-7.6 -0.9M682.3 322.2l-7.4 -1.0M674.9 321.2l-7.3 -1.0M440.3 315.7l7.2 -0.6M447.6 315.1l7.1 -0.8M801.7 368.6l-7.1 -16.6M680.5 315.9l-7.3 -1.2M673.2 314.7l-7.2 -1.2M666.0 313.5l-7.1 -1.4M449.0 308.1l7.0 -1.1M456.0 306.9l6.9 -1.4M462.8 305.6l6.7 -1.6M469.6 303.9l6.6 -1.9M671.6 308.0l-7.1 -1.5M664.5 306.5l-6.9 -1.6M657.6 304.9l-6.8 -1.8M650.8 303.1l-6.7 -2.0M644.1 301.2l-6.6 -2.2M802.6 358.8l-7.0 -15.5M799.7 342.4l-6.9 -13.5M311.5 327.3l4.4 -27.3M782.2 313.0l-6.8 -9.9M768.4 299.8l-6.7 -8.1M758.3 291.8l-6.6 -7.0M748.3 286.7l-6.5 -6.7M355.8 286.9l5.7 -12.9M732.0 278.6l-6.3 -5.5M725.7 273.2l-6.4 -4.5M378.4 273.4l6.1 -6.9" stroke="rgb(159, 145, 113)" stroke-width="1" fill="none"/><path d="M767.2 406.4l5.7 -2.9M772.9 403.5l5.5 -2.2M476.2 302.0l-5.6 -6.2M482.7 299.9l-5.6 -6.2M631.0 296.6l5.5 -5.6M489.1 297.4l-5.6 -6.1M624.6 293.9l5.5 -5.6M495.4 294.7l-5.6 -6.1M612.7 296.7l5.5 -5.6M618.3 291.1l5.5 -5.5M501.6 291.7l-5.6 -5.9M606.5 293.5l5.5 -5.5M489.1 297.4l6.3 -2.7M495.4 294.7l6.2 -3.0M637.5 299.0l-6.5 -2.4M470.6 295.8l6.5 -2.1M631.0 296.6l-6.4 -2.6M477.1 293.7l6.4 -2.4M624.6 293.9l-6.3 -2.9M483.5 291.3l6.3 -2.6M618.3 291.1l-6.2 -3.1M612.1 288.0l-6.1 -3.3" stroke="rgb(172, 160, 132)" stroke-width="1" fill="none"/><path d="M742.4 425.6l6.5 -6.1M748.9 419.5l6.3 -5.2M755.2 414.3l6.1 -4.4M761.3 410.0l5.9 -3.6M513.3 294.3l-5.6 -5.8M507.7 288.5l-5.6 -5.8M600.4 290.1l5.5 -5.4M519.4 290.7l-5.6 -5.7M588.8 291.8l5.6 -5.3M594.4 286.5l5.5 -5.3M525.3 286.9l-5.6 -5.5M582.9 287.9l5.6 -5.2M536.8 288.3l-5.6 -5.3M571.3 288.8l5.6 -5.0M577.0 283.8l5.6 -5.0M548.3 289.0l-5.7 -5.0M559.8 289.2l5.7 -4.8M542.7 284.0l-5.6 -5.1M565.5 284.4l5.6 -4.9M559.8 289.2l-5.7 -4.8M548.3 289.0l5.7 -4.6M554.1 284.5l-5.7 -4.9M554.1 284.5l5.7 -4.6M571.3 288.8l-5.8 -4.4M536.8 288.3l5.8 -4.3M565.5 284.4l-5.7 -4.6M542.7 284.0l5.8 -4.4M519.4 290.7l6.0 -3.8M582.9 287.9l-5.9 -4.1M525.3 286.9l5.9 -4.0M577.0 283.8l-5.8 -4.3M501.6 291.7l6.1 -3.2M600.4 290.1l-6.0 -3.6M507.7 288.5l6.0 -3.4M594.4 286.5l-6.0 -3.8M513.8 285.0l6.0 -3.6" stroke="rgb(185, 175, 151)" stroke-width="1" fill="none"/><path d="M735.7 432.6l6.7 -7.0M698.8 444.2l7.6 -10.6M449.3 466.6l-8.7 -19.8M666.9 456.5l8.1 -13.8M641.7 461.1l8.5 -15.9M615.9 470.8l8.7 -18.6M474.9 475.6l8.4 -30.3M691.0 456.5l-8.1 -25.4M721.5 450.4l-7.7 -25.8M728.7 440.8l-7.9 -23.9M357.4 443.5l5.9 -37.7" stroke="rgb(198, 189, 170)" stroke-width="1" fill="none"/><path d="M306.3 376.4l-4.1 3.9M781.5 379.2l5.0 -0.5M786.5 378.7l4.8 0.3M793.2 363.7l4.4 2.0M794.6 352.0l4.1 2.8M297.7 335.7l-2.0 14.4M795.5 343.2l3.9 3.9M792.3 333.2l3.8 4.0M304.5 312.5l-0.8 22.0M789.3 321.6l3.5 5.4M308.0 305.6l-0.6 23.8M785.8 315.5l3.4 5.8M782.3 310.4l3.4 6.1M638.2 383.3l6.7 -2.3M645.0 381.0l6.6 -2.6M651.6 378.4l6.5 -2.9M658.1 375.5l6.4 -3.2M664.6 372.3l6.4 -3.5M670.9 368.8l6.3 -3.7M677.2 365.0l6.2 -4.0M683.4 361.1l6.1 -4.2M689.5 356.9l6.0 -4.4M615.8 387.9l7.0 -1.6M622.8 386.3l6.9 -1.9M478.3 380.1l-6.8 -2.4M471.6 377.7l-6.7 -2.7M464.9 375.0l-6.6 -3.1M458.3 371.9l-6.5 -3.6M451.8 368.3l-6.4 -3.9M445.4 364.5l-6.3 -4.1M439.1 360.4l-6.2 -4.3M687.0 353.3l6.0 -4.6M693.0 348.6l5.9 -4.8M698.9 343.8l5.8 -4.9M593.0 390.9l7.3 -0.9M507.8 387.2l-7.1 -1.3M600.3 389.9l7.1 -1.2M500.7 385.9l-7.0 -1.6M493.7 384.3l-6.9 -2.5M441.3 356.8l-6.2 -4.5M435.1 352.3l-6.1 -4.7M429.0 347.6l-6.0 -4.9M690.6 344.3l5.9 -5.0M696.5 339.3l5.8 -5.1M768.5 294.3l3.4 6.7M530.7 390.4l-7.4 -0.7M577.4 391.8l7.4 -0.4M523.3 389.7l-7.3 -0.9M431.2 343.3l-6.0 -5.2M425.2 338.1l-5.9 -5.3M694.2 334.3l5.7 -5.2M699.9 329.1l5.7 -5.3M765.1 292.6l3.3 7.3M546.3 391.6l-7.6 -0.3M561.9 392.1l7.6 0.0M433.2 338.6l-5.9 -5.4M427.3 333.2l-5.8 -5.5M692.0 328.9l5.7 -5.3M697.6 323.6l5.6 -5.4M561.9 392.1l-7.8 0.0M546.3 391.6l7.8 0.5M435.1 333.5l-5.9 -5.6M429.3 327.9l-5.8 -5.7M689.9 323.1l5.6 -5.4M754.9 284.4l3.3 7.4M577.4 391.8l-8.0 0.3M530.7 390.4l8.0 0.9M431.2 322.2l-5.7 -5.9M682.3 322.2l5.6 -5.2M687.9 317.0l5.6 -5.4M593.0 390.9l-8.2 0.5M523.3 389.7l8.0 0.9M438.7 322.1l-5.7 -6.0M433.0 316.1l-5.7 -6.0M680.5 315.9l5.6 -5.3M686.0 310.6l5.5 -5.5M745.0 278.5l3.3 8.2M600.3 389.9l-8.2 0.7M507.8 387.2l8.2 1.6M440.3 315.7l-5.7 -6.1M678.7 309.4l5.5 -5.4M615.8 387.9l-8.4 0.8M500.7 385.9l8.2 1.0M441.9 308.9l-5.6 -6.2M671.6 308.0l5.5 -5.3M677.1 302.7l5.5 -5.5M622.8 386.3l-8.4 1.0M485.2 382.2l8.4 2.1M449.0 308.1l-5.6 -6.2M664.5 306.5l5.5 -5.4M670.0 301.1l5.4 -5.4M728.7 269.7l3.3 8.9M373.7 255.3l-1.3 26.8M638.2 383.3l-8.6 1.0M478.3 380.1l8.4 1.7M456.0 306.9l-5.6 -6.3M450.4 300.7l-5.6 -6.2M663.1 299.3l5.4 -5.3M722.2 265.2l3.5 7.9M645.0 381.0l-8.6 1.1M471.6 377.7l8.4 1.2M457.2 299.3l-5.6 -6.3M656.3 297.5l5.4 -5.3M651.6 378.4l-8.6 1.1M464.9 375.0l8.4 0.8M463.9 297.7l-5.6 -6.3M649.6 295.5l5.4 -5.4M666.9 374.3l-8.7 1.1M458.3 371.9l8.3 0.6M643.0 293.3l5.4 -5.5M673.3 371.1l-8.7 1.1M451.8 368.3l8.4 0.7M679.7 367.7l-8.7 1.1M445.4 364.5l8.4 0.7M685.9 364.0l-8.7 1.0M439.1 360.4l8.4 0.7M692.1 360.1l-8.7 1.0M683.4 361.1l-8.5 0.9M432.9 356.1l8.4 0.8M689.5 356.9l-8.5 0.8M426.7 351.2l8.4 1.1M695.5 352.5l-8.5 0.7M429.0 347.6l8.2 0.7M701.5 348.0l-8.5 0.7M693.0 348.6l-8.3 0.3M423.0 342.6l8.2 0.6M698.9 343.8l-8.3 0.4M425.2 338.1l8.0 0.5M704.8 338.9l-8.3 0.4M696.5 339.3l-8.1 -0.0M419.3 332.8l8.0 0.4M427.3 333.2l7.8 0.3M795.9 380.2l-7.3 -17.6M702.3 334.2l-8.1 0.1M421.4 327.7l7.8 0.2M699.9 329.1l-7.9 -0.2M423.5 322.2l7.7 0.0M431.2 322.2l7.5 -0.1M797.6 365.7l-7.3 -15.6M705.6 323.7l-7.9 -0.2M697.6 323.6l-7.8 -0.5M425.4 316.3l7.5 -0.2M433.0 316.1l7.4 -0.4M695.5 317.7l-7.6 -0.7M687.9 317.0l-7.4 -1.1M434.6 309.6l7.2 -0.7M441.9 308.9l7.1 -0.9M798.7 354.8l-7.3 -14.4M693.5 311.6l-7.5 -0.9M686.0 310.6l-7.3 -1.2M678.7 309.4l-7.2 -1.4M443.4 301.8l7.0 -1.1M450.4 300.7l6.9 -1.4M457.2 299.3l6.7 -1.6M463.9 297.7l6.6 -1.9M684.2 304.0l-7.2 -1.3M677.1 302.7l-7.0 -1.6M670.0 301.1l-6.9 -1.8M663.1 299.3l-6.8 -1.9M656.3 297.5l-6.7 -2.0M649.6 295.5l-6.6 -2.2M458.4 291.4l6.6 -1.9M799.4 347.1l-7.1 -13.9M668.5 294.1l-6.8 -1.9M661.7 292.2l-6.7 -2.1M655.0 290.1l-6.6 -2.2M796.3 334.0l-7.0 -12.4M300.2 342.8l4.3 -30.3M792.8 327.0l-7.0 -11.6M303.7 334.5l4.4 -29.0M789.3 321.3l-6.9 -10.9M307.4 329.3l4.4 -28.0M785.7 316.5l-6.9 -10.2M771.9 300.9l-6.8 -8.4M325.0 306.7l5.0 -22.2M751.6 284.8l-6.6 -6.3M741.8 280.0l-6.5 -5.4M719.3 268.7l-6.4 -3.7M712.9 265.0l-6.3 -3.3M669.5 250.2l-6.0 -0.2M384.4 266.5l6.2 -5.4" stroke="rgb(192, 118, 77)" stroke-width="1" fill="none"/><path d="M470.6 295.8l-5.5 -6.2M477.1 293.7l-5.5 -6.2M636.5 290.9l5.4 -5.5M483.5 291.3l-5.5 -6.1M630.1 288.3l5.4 -5.4M489.8 288.6l-5.5 -6.0M623.8 285.5l5.4 -5.4M772.9 403.5l-7.7 -19.2M496.0 285.8l-5.5 -5.9M612.1 288.0l5.5 -5.5M617.6 282.5l5.4 -5.3M778.4 401.4l-7.6 -19.4M606.0 284.7l5.5 -5.4M315.3 407.7l5.3 -34.3M783.7 399.9l-7.4 -19.7M489.8 288.6l6.2 -2.9M496.0 285.8l6.1 -3.1M643.0 293.3l-6.5 -2.4M465.0 289.6l6.5 -2.1M636.5 290.9l-6.4 -2.6M471.5 287.5l6.4 -2.3M630.1 288.3l-6.3 -2.8M478.0 285.2l6.3 -2.6M623.8 285.5l-6.2 -3.0M617.6 282.5l-6.1 -3.2M611.5 279.3l-6.0 -3.4M648.4 287.8l-6.5 -2.4M641.9 285.4l-6.4 -2.6M635.5 282.9l-6.3 -2.7" stroke="rgb(201, 136, 101)" stroke-width="1" fill="none"/><path d="M350.5 434.0l6.0 -36.0M502.2 282.7l-5.5 -5.8M513.8 285.0l-5.5 -5.7M599.9 281.2l5.5 -5.3M519.7 281.4l-5.5 -5.5M588.4 282.7l5.5 -5.2M594.0 277.5l5.5 -5.1M531.2 283.0l-5.6 -5.3M525.6 277.6l-5.5 -5.4M582.6 278.8l5.5 -5.0M537.0 278.9l-5.6 -5.2M571.2 279.5l5.6 -4.9M548.4 279.6l-5.6 -4.9M559.8 279.8l5.6 -4.7M559.8 279.8l-5.7 -4.7M548.4 279.6l5.7 -4.5M554.1 275.1l5.6 -4.5M531.2 283.0l5.8 -4.1M571.2 279.5l-5.7 -4.4M537.0 278.9l5.8 -4.2M565.4 275.1l-5.7 -4.5M588.4 282.7l-5.9 -4.0M519.7 281.4l5.9 -3.8M582.6 278.8l-5.8 -4.1M525.6 277.6l5.8 -3.9M606.0 284.7l-6.0 -3.5M502.2 282.7l6.1 -3.3M599.9 281.2l-6.0 -3.7M508.2 279.4l6.0 -3.5M594.0 277.5l-5.9 -3.8" stroke="rgb(209, 155, 124)" stroke-width="1" fill="none"/><path d="M385.3 437.8l-7.6 -12.4M416.2 445.9l-8.2 -15.5M706.4 433.6l7.3 -9.1M492.1 466.5l-8.9 -21.2M598.4 464.2l8.8 -19.1M615.9 470.8l-8.7 -25.8M492.1 466.5l8.6 -27.0M641.7 461.1l-8.6 -24.2M449.3 466.6l8.1 -31.3M666.9 456.5l-8.4 -24.2M424.6 463.9l7.6 -33.7M698.8 444.2l-8.3 -22.9M393.2 452.1l7.0 -34.8M735.7 432.6l-7.9 -22.5M742.4 425.6l-8.0 -21.3" stroke="rgb(217, 173, 148)" stroke-width="1" fill="none"/><path d="M310.8 374.2l-4.5 2.2M788.6 362.6l4.6 1.2M298.2 344.1l-2.7 10.7M790.2 350.1l4.4 1.9M791.4 340.4l4.1 2.8M788.9 324.9l3.8 3.9M785.4 317.9l3.9 3.6M782.0 311.8l3.8 3.7M647.0 382.3l6.7 -2.4M653.7 379.9l6.6 -2.6M660.3 377.3l6.5 -2.9M666.9 374.3l6.4 -3.2M673.3 371.1l6.3 -3.4M679.7 367.7l6.3 -3.7M685.9 364.0l6.2 -3.9M692.1 360.1l6.1 -4.1M698.2 356.0l6.0 -4.3M704.2 351.7l6.0 -4.5M778.6 306.3l3.8 4.1M624.3 387.1l7.0 -1.7M631.3 385.3l6.9 -2.0M462.9 375.2l-6.7 -2.9M456.2 372.4l-6.6 -3.2M449.7 369.2l-6.5 -3.5M443.2 365.7l-6.4 -3.8M436.8 361.8l-6.3 -4.2M695.5 352.5l6.0 -4.6M701.5 348.0l5.9 -4.7M707.4 343.3l5.8 -4.8M775.2 301.5l3.7 4.8M601.4 390.3l7.3 -1.0M499.4 385.6l-7.2 -1.6M608.7 389.2l7.1 -1.3M492.2 384.0l-7.0 -1.8M485.2 382.2l-6.9 -2.1M432.9 356.1l-6.2 -4.8M426.7 351.2l-6.1 -5.2M420.6 346.0l-6.1 -5.5M704.8 338.9l5.8 -5.0M710.5 333.9l5.7 -5.1M771.9 297.3l3.5 5.8M325.5 279.7l-0.5 27.0M522.6 389.3l-7.5 -0.9M585.6 391.5l7.4 -0.6M515.1 388.4l-7.3 -1.2M423.0 342.6l-6.0 -5.3M417.0 337.3l-6.0 -6.1M702.3 334.2l5.7 -5.2M708.0 329.0l5.7 -5.3M538.3 391.0l-7.6 -0.6M569.8 392.0l7.6 -0.2M419.3 332.8l-5.9 -5.7M705.6 323.7l5.6 -5.4M554.1 391.9l-7.8 -0.2M554.1 391.9l7.8 0.2M421.4 327.7l-5.8 -5.7M703.3 318.1l5.6 -5.5M758.3 284.9l3.4 6.8M569.8 392.0l-8.0 0.1M538.3 391.0l8.0 0.7M423.5 322.2l-5.7 -5.8M695.5 317.7l5.6 -5.5M701.1 312.2l5.5 -5.6M585.6 391.5l-8.2 0.3M522.6 389.3l8.2 1.1M425.4 316.3l-5.7 -6.0M693.5 311.6l5.5 -5.6M699.0 306.0l5.5 -5.6M748.2 277.7l3.4 7.1M601.4 390.3l-8.4 0.6M515.1 388.4l8.2 1.3M427.3 310.1l-5.6 -6.1M691.5 305.1l5.5 -5.6M356.7 259.1l-0.9 27.8M617.2 388.5l-8.6 0.7M608.7 389.2l-8.4 0.7M499.4 385.6l8.4 1.6M434.6 309.6l-5.6 -6.1M684.2 304.0l5.5 -5.6M738.4 272.6l3.4 7.4M624.3 387.1l-8.6 0.9M492.2 384.0l8.4 1.9M436.3 302.8l-5.6 -6.1M682.5 297.2l5.4 -5.6M731.7 267.6l3.5 7.0M640.1 384.4l-8.8 0.9M631.3 385.3l-8.6 0.9M476.6 380.0l8.6 2.1M443.4 301.8l-5.6 -6.2M675.5 295.7l5.4 -5.6M647.0 382.3l-8.8 1.0M469.7 377.8l8.6 2.3M444.8 294.5l-5.5 -6.2M668.5 294.1l5.4 -5.5M653.7 379.9l-8.8 1.1M462.9 375.2l8.7 2.5M451.6 293.1l-5.5 -6.1M661.7 292.2l5.4 -5.4M715.8 261.1l3.6 7.6M660.3 377.3l-8.8 1.1M456.2 372.4l8.7 2.7M458.4 291.4l-5.5 -6.1M655.0 290.1l5.4 -5.4M660.4 284.7l5.3 -5.5M709.3 257.4l3.6 7.6M675.8 373.3l-8.9 1.0M449.7 369.2l8.7 2.8M648.4 287.8l5.4 -5.3M682.2 370.1l-8.9 1.0M443.2 365.7l8.7 2.6M688.6 366.7l-8.9 1.0M436.8 361.8l8.7 2.6M694.8 363.1l-8.9 1.0M430.4 357.7l8.7 2.7M701.0 359.2l-8.9 0.9M424.2 353.2l8.7 2.9M698.2 356.0l-8.7 0.9M418.0 348.3l8.7 2.9M704.2 351.7l-8.7 0.8M420.6 346.0l8.4 1.6M710.2 347.2l-8.7 0.7M414.5 340.5l8.5 2.1M659.5 242.2l4.0 7.7M786.5 378.7l-7.8 -15.2M716.1 342.7l-8.7 0.5M707.4 343.3l-8.5 0.6M417.0 337.3l8.2 0.8M791.3 379.1l-7.6 -16.5M713.2 338.4l-8.5 0.5M411.0 331.2l8.3 1.6M719.0 333.6l-8.5 0.3M710.5 333.9l-8.3 0.3M413.4 327.1l8.0 0.6M793.2 363.7l-7.7 -13.7M716.3 328.8l-8.3 0.2M708.0 329.0l-8.1 0.1M415.6 322.0l7.8 0.2M713.7 323.7l-8.1 0.0M417.7 316.4l7.7 -0.0M794.6 352.0l-7.7 -12.2M711.2 318.3l-7.9 -0.2M703.3 318.1l-7.8 -0.4M419.7 310.4l7.5 -0.3M427.3 310.1l7.4 -0.5M708.8 312.6l-7.8 -0.4M701.1 312.2l-7.6 -0.6M421.6 304.0l7.4 -0.5M429.0 303.5l7.2 -0.7M436.3 302.8l7.1 -0.9M795.5 343.2l-7.5 -11.8M706.6 306.6l-7.6 -0.6M699.0 306.0l-7.5 -0.8M691.5 305.1l-7.3 -1.1M430.7 296.6l7.1 -1.0M437.8 295.7l7.0 -1.2M444.8 294.5l6.9 -1.4M451.6 293.1l6.7 -1.6M697.0 299.5l-7.3 -1.0M689.7 298.5l-7.2 -1.3M682.5 297.2l-7.1 -1.5M675.5 295.7l-6.9 -1.7M452.9 285.3l6.6 -1.8M295.6 350.1l4.6 -30.2M796.1 337.2l-7.2 -12.3M687.9 291.6l-7.1 -1.4M680.9 290.2l-6.9 -1.6M673.9 288.6l-6.8 -1.8M667.1 286.7l-6.7 -2.0M660.4 284.7l-6.6 -2.2M792.7 328.8l-7.3 -10.9M789.3 321.6l-7.3 -9.8M782.3 310.4l-7.1 -8.9M778.9 306.3l-7.0 -9.0M775.4 303.1l-6.9 -8.9M765.1 292.6l-6.8 -7.6M761.7 291.7l-6.7 -7.3M745.0 278.5l-6.6 -5.9M345.2 286.7l5.6 -15.4M735.2 274.7l-6.5 -4.9M728.7 269.7l-6.5 -4.5M641.8 242.7l-5.8 1.6M706.6 261.7l-6.3 -2.9M700.3 258.9l-6.3 -2.5M694.0 256.4l-6.2 -2.1M687.8 254.3l-6.2 -1.7M681.7 252.5l-6.1 -1.4M675.6 251.2l-6.1 -1.0M390.6 261.2l6.3 -4.1M396.9 257.1l6.3 -2.9M409.5 252.2l6.3 -1.1M415.8 251.2l6.3 -0.3" stroke="rgb(202, 116, 73)" stroke-width="1" fill="none"/><path d="M770.8 382.0l5.4 -1.8M776.3 380.2l5.2 -1.0M465.0 289.6l-5.5 -6.1M653.8 282.5l5.3 -5.4M471.5 287.5l-5.5 -6.1M641.9 285.4l5.4 -5.2M647.3 280.2l5.3 -5.4M478.0 285.2l-5.5 -6.0M635.5 282.9l5.4 -5.2M484.3 282.6l-5.5 -5.9M629.2 280.1l5.4 -5.1M325.9 411.2l5.8 -33.7M490.5 279.8l-5.5 -5.8M623.0 277.2l5.4 -5.1M320.4 408.8l5.6 -33.9M496.7 276.9l-5.5 -5.6M611.5 279.3l5.4 -5.1M616.9 274.2l5.4 -5.1M605.4 275.9l5.4 -4.9M484.3 282.6l6.2 -2.8M490.5 279.8l6.1 -3.0M459.5 283.5l6.5 -2.1M466.1 281.4l6.4 -2.3M472.5 279.1l6.3 -2.5M629.2 280.1l-6.2 -2.9M478.8 276.7l6.2 -2.6M623.0 277.2l-6.1 -3.0M616.9 274.2l-6.1 -3.2M610.8 271.0l-6.0 -3.4M653.8 282.5l-6.5 -2.3M647.3 280.2l-6.4 -2.5M640.9 277.7l-6.3 -2.7M634.6 275.0l-6.2 -2.9" stroke="rgb(209, 135, 97)" stroke-width="1" fill="none"/><path d="M748.9 419.5l-8.0 -20.4M343.9 426.2l6.0 -34.8M755.2 414.3l-8.0 -19.6M337.6 419.8l6.0 -34.1M761.3 410.0l-7.9 -19.1M331.6 414.8l5.9 -33.7M767.2 406.4l-7.8 -19.0M508.2 279.4l-5.5 -5.7M502.7 273.7l-5.4 -5.5M514.2 275.9l-5.5 -5.5M599.4 272.5l5.4 -4.8M520.1 272.3l-5.5 -5.2M588.1 273.7l5.5 -4.8M531.4 273.7l-5.5 -5.2M576.7 274.6l5.5 -4.8M582.3 269.8l5.5 -4.6M542.8 274.7l-5.6 -5.0M565.4 275.1l5.6 -4.7M537.2 269.7l-5.5 -4.9M571.0 270.4l5.5 -4.5M554.1 275.1l-5.6 -4.8M548.5 270.4l-5.6 -4.7M559.7 270.6l5.6 -4.4M542.8 274.7l5.7 -4.3M559.7 270.6l-5.6 -4.5M548.5 270.4l5.6 -4.2M576.7 274.6l-5.8 -4.2M531.4 273.7l5.8 -4.0M571.0 270.4l-5.7 -4.2M537.2 269.7l5.7 -4.0M514.2 275.9l5.9 -3.6M588.1 273.7l-5.8 -3.9M520.1 272.3l5.8 -3.7M582.3 269.8l-5.8 -3.9M496.7 276.9l6.1 -3.2M605.4 275.9l-6.0 -3.5M502.7 273.7l6.0 -3.3M599.4 272.5l-5.9 -3.6M593.5 268.9l-5.8 -3.7" stroke="rgb(216, 153, 122)" stroke-width="1" fill="none"/><path d="M377.7 425.4l-7.3 -10.6M713.7 424.6l7.1 -7.6M440.6 446.8l-8.4 -16.5M675.0 442.7l7.9 -11.6M466.0 453.8l-8.7 -18.5M650.2 445.2l8.2 -12.9M624.6 452.2l8.5 -15.3M509.6 460.5l-8.9 -21.0M527.4 457.2l-8.9 -20.3M580.8 459.6l8.8 -18.9M563.0 456.9l8.9 -19.3M580.8 459.6l-8.9 -21.9M598.4 464.2l-8.8 -23.5M509.6 460.5l8.8 -23.6M675.0 442.7l-8.6 -20.9M706.4 433.6l-8.4 -20.2" stroke="rgb(223, 172, 146)" stroke-width="1" fill="none"/><path d="M315.6 373.2l-4.8 1.0M303.4 353.1l-3.7 5.7M778.7 363.5l5.1 -1.0M783.8 362.6l4.9 -0.0M785.5 350.0l4.7 0.0M786.9 339.8l4.5 0.6M300.3 319.8l-2.0 14.9M788.0 331.5l4.3 1.7M784.6 323.3l4.3 1.6M655.9 381.3l6.7 -2.4M662.7 378.9l6.6 -2.6M669.3 376.3l6.5 -2.9M675.8 373.3l6.4 -3.2M682.2 370.1l6.3 -3.4M688.6 366.7l6.2 -3.6M694.8 363.1l6.2 -3.8M701.0 359.2l6.1 -4.0M707.1 355.2l6.0 -4.2M713.1 351.0l5.9 -4.4M719.0 346.6l5.9 -4.5M633.1 386.2l7.0 -1.8M640.1 384.4l6.9 -2.1M710.2 347.2l5.9 -4.5M716.1 342.7l5.8 -4.6M721.9 338.1l5.7 -4.8M609.9 389.7l7.3 -1.2M617.2 388.5l7.1 -1.5M483.6 382.0l-7.0 -2.0M476.6 380.0l-6.9 -2.3M469.7 377.8l-6.8 -2.6M430.4 357.7l-6.3 -4.5M424.2 353.2l-6.2 -4.8M418.0 348.3l-6.1 -5.1M713.2 338.4l5.8 -4.9M719.0 333.6l5.7 -4.9M724.7 328.7l5.6 -5.0M514.2 388.0l-7.5 -1.1M594.0 391.1l7.4 -0.8M506.7 386.9l-7.3 -1.3M414.5 340.5l-6.0 -5.8M716.3 328.8l5.6 -5.0M721.9 323.7l5.6 -5.0M570.2 391.9l7.8 -0.0M530.2 390.1l-7.6 -0.7M578.0 391.8l7.6 -0.4M411.0 331.2l-5.9 -6.4M713.7 323.7l5.6 -5.3M719.3 318.5l5.5 -5.1M764.6 290.6l3.9 3.7M554.1 391.6l-8.0 -0.2M554.1 391.6l8.0 0.4M546.1 391.4l-7.8 -0.4M562.1 391.9l7.8 0.1M413.4 327.1l-5.9 -6.7M711.2 318.3l5.6 -5.4M716.8 312.9l5.5 -5.2M761.4 287.6l3.7 4.9M570.2 391.9l-8.2 0.1M562.1 391.9l-8.0 -0.1M546.1 391.4l8.0 0.5M415.6 322.0l-5.8 -6.7M708.8 312.6l5.5 -5.5M714.4 307.1l5.4 -5.2M586.4 391.5l-8.4 0.4M578.0 391.8l-8.2 0.2M530.2 390.1l8.2 0.9M417.7 316.4l-5.8 -6.7M706.6 306.6l5.5 -5.5M751.2 279.5l3.7 4.9M594.0 391.1l-8.4 0.4M514.2 388.0l8.4 1.3M419.7 310.4l-5.7 -6.9M704.5 300.4l5.4 -5.4M609.9 389.7l-8.6 0.6M506.7 386.9l8.4 1.5M421.6 304.0l-5.7 -7.2M697.0 299.5l5.4 -5.6M741.3 272.9l3.7 5.5M626.0 387.7l-8.8 0.9M490.8 383.8l8.6 1.8M429.0 303.5l-5.6 -6.3M689.7 298.5l5.4 -5.7M695.1 292.8l5.4 -5.5M633.1 386.2l-8.8 0.8M483.6 382.0l8.6 2.0M430.7 296.6l-5.6 -7.0M687.9 291.6l5.4 -5.6M649.1 383.3l-9.0 1.1M437.8 295.7l-5.5 -6.3M680.9 290.2l5.4 -5.7M725.0 263.7l3.7 6.0M655.9 381.3l-9.0 1.0M460.8 375.4l8.9 2.4M439.3 288.3l-5.5 -7.1M673.9 288.6l5.4 -5.6M679.3 282.9l5.3 -5.6M380.0 248.8l-1.7 24.6M662.7 378.9l-9.0 1.0M454.0 372.7l8.9 2.5M446.1 286.9l-5.5 -6.7M667.1 286.7l5.4 -5.6M672.5 281.2l5.3 -5.6M669.3 376.3l-9.0 1.0M447.3 369.7l8.9 2.6M452.9 285.3l-5.5 -6.3M665.8 279.2l5.3 -5.6M685.0 372.2l-9.2 1.2M440.8 366.5l8.9 2.7M702.9 254.2l3.7 7.5M691.4 369.0l-9.2 1.1M434.3 362.9l8.9 2.8M696.6 251.6l3.8 7.3M697.7 365.6l-9.1 1.1M427.9 359.0l8.9 2.9M690.2 249.2l3.8 7.2M704.0 362.0l-9.1 1.0M421.5 354.8l8.9 2.9M684.0 247.0l3.9 7.2M710.1 358.3l-9.1 1.0M415.3 350.2l8.9 2.9M677.8 245.1l3.9 7.5M716.2 354.3l-9.1 0.9M707.1 355.2l-8.9 0.8M671.6 243.7l3.9 7.5M713.1 351.0l-8.9 0.7M411.9 343.2l8.7 2.8M665.6 242.8l4.0 7.4M719.0 346.6l-8.9 0.6M405.8 337.8l8.7 2.7M724.9 342.2l-8.8 0.6M408.5 334.7l8.5 2.6M721.9 338.1l-8.6 0.4M402.5 328.7l8.5 2.5M302.2 380.3l5.3 -31.4M788.6 362.6l-8.0 -12.2M727.6 333.3l-8.6 0.3M405.1 324.8l8.3 2.2M637.6 235.6l4.2 7.1M724.7 328.7l-8.4 0.1M407.5 320.4l8.1 1.6M631.7 236.5l4.2 7.8M790.2 350.1l-8.0 -10.8M730.3 323.7l-8.4 -0.0M721.9 323.7l-8.2 -0.0M409.8 315.3l7.9 1.0M727.5 318.7l-8.2 -0.2M719.3 318.5l-8.1 -0.1M412.0 309.7l7.7 0.7M615.9 232.5l4.4 7.1M791.4 340.4l-7.9 -10.2M724.8 313.4l-8.0 -0.4M716.8 312.9l-7.9 -0.3M414.0 303.5l7.6 0.5M295.5 354.8l4.9 -30.0M722.2 307.8l-7.9 -0.6M714.4 307.1l-7.8 -0.5M416.0 296.8l7.5 0.4M423.4 297.2l7.3 -0.5M600.2 230.4l4.6 6.9M792.3 333.2l-7.7 -9.9M719.8 301.9l-7.7 -0.8M712.1 301.1l-7.6 -0.8M704.5 300.4l-7.5 -0.9M425.1 289.6l7.2 -0.3M432.3 289.3l7.0 -1.0M439.3 288.3l6.9 -1.4M446.1 286.9l6.8 -1.6M788.9 324.9l-7.6 -9.0M709.9 294.9l-7.4 -1.1M702.4 293.9l-7.3 -1.1M695.1 292.8l-7.2 -1.2M584.6 230.1l4.7 7.4M693.3 285.9l-7.1 -1.4M686.2 284.5l-6.9 -1.6M679.3 282.9l-6.8 -1.8M672.5 281.2l-6.7 -1.9M785.8 315.5l-7.2 -9.2M771.9 297.3l-7.2 -6.7M768.5 294.3l-7.1 -6.6M758.3 284.9l-7.0 -5.4M594.7 233.2l-5.4 4.2M754.9 284.4l-6.7 -6.7M610.3 234.6l-5.5 2.7M334.8 293.1l5.4 -18.4M738.4 272.6l-6.7 -5.0M626.0 237.7l-5.7 1.9M722.2 265.2l-6.5 -4.1M715.8 261.1l-6.4 -3.7M653.5 242.0l-5.9 0.1M647.6 242.2l-5.8 0.5M361.6 274.0l6.0 -10.5M403.2 254.2l6.3 -1.9" stroke="rgb(206, 121, 78)" stroke-width="1" fill="none"/><path d="M759.4 387.4l5.8 -3.0M765.2 384.3l5.6 -2.4M459.5 283.5l-5.4 -6.1M659.2 277.1l5.3 -5.6M466.1 281.4l-5.4 -6.0M652.6 274.8l5.3 -5.5M472.5 279.1l-5.4 -5.9M640.9 277.7l5.3 -5.3M646.2 272.3l5.3 -5.5M478.8 276.7l-5.4 -5.8M634.6 275.0l5.3 -5.3M639.9 269.7l5.3 -5.4M485.1 274.0l-5.4 -5.7M628.4 272.1l5.3 -5.2M622.2 269.1l5.3 -5.2M776.3 380.2l-8.3 -13.4M610.8 271.0l5.4 -5.1M781.5 379.2l-8.1 -14.2M485.1 274.0l6.2 -2.8M491.2 271.2l6.1 -3.0M447.4 279.0l6.7 -1.6M454.1 277.4l6.5 -2.0M460.6 275.4l6.4 -2.2M467.1 273.2l6.3 -2.4M473.4 270.9l6.2 -2.6M628.4 272.1l-6.1 -3.0M622.2 269.1l-6.1 -3.2M665.8 279.2l-6.6 -2.1M659.2 277.1l-6.5 -2.3M652.6 274.8l-6.4 -2.5M646.2 272.3l-6.3 -2.6M639.9 269.7l-6.2 -2.8M633.7 266.9l-6.1 -3.0" stroke="rgb(213, 139, 101)" stroke-width="1" fill="none"/><path d="M734.4 404.3l6.5 -5.1M740.9 399.2l6.3 -4.4M747.3 394.8l6.1 -3.9M753.4 390.9l6.0 -3.5M491.2 271.2l-5.4 -5.8M497.3 268.2l-5.4 -5.8M616.2 266.0l5.3 -5.2M508.7 270.4l-5.4 -5.3M604.9 267.6l5.4 -5.0M514.6 267.0l-5.4 -5.3M593.5 268.9l5.4 -4.8M599.0 264.1l5.4 -5.0M525.9 268.5l-5.5 -5.0M587.7 265.2l5.4 -4.8M531.7 264.8l-5.5 -5.0M576.5 265.9l5.5 -4.6M542.9 265.7l-5.5 -4.7M565.3 266.2l5.5 -4.4M570.8 261.8l5.5 -4.6M554.1 266.1l-5.6 -4.5M554.1 266.1l5.6 -4.2M548.5 261.6l-5.5 -4.8M559.7 261.9l5.5 -4.5M565.3 266.2l-5.6 -4.3M542.9 265.7l5.6 -4.0M559.7 261.9l-5.6 -4.6M548.5 261.6l5.6 -4.3M525.9 268.5l5.8 -3.7M576.5 265.9l-5.7 -4.1M531.7 264.8l5.7 -3.9M570.8 261.8l-5.6 -4.4M508.7 270.4l5.9 -3.4M514.6 267.0l5.8 -3.5M587.7 265.2l-5.8 -3.9M520.4 263.5l5.8 -3.7M582.0 261.3l-5.7 -4.1M497.3 268.2l6.0 -3.2M604.9 267.6l-5.9 -3.6M503.3 265.1l5.9 -3.4M599.0 264.1l-5.8 -3.7M616.2 266.0l-6.0 -3.3" stroke="rgb(219, 157, 125)" stroke-width="1" fill="none"/><path d="M370.4 414.7l-7.0 -9.0M408.0 430.4l-7.9 -13.0M720.8 416.9l6.9 -6.9M727.7 410.0l6.7 -5.7M682.9 431.1l7.7 -9.8M690.6 421.3l7.4 -7.9M658.4 432.3l8.0 -10.5M483.2 445.3l-8.7 -17.1M607.2 445.1l8.6 -14.3M545.2 456.1l-8.9 -20.4M563.0 456.9l-8.9 -20.9M545.2 456.1l8.9 -20.1M527.4 457.2l8.9 -21.5M624.6 452.2l-8.8 -21.4M466.0 453.8l8.6 -25.6M650.2 445.2l-8.8 -20.2M440.6 446.8l8.3 -26.2M416.2 445.9l7.9 -29.2M682.9 431.1l-8.8 -17.8M385.3 437.8l7.2 -31.5M713.7 424.6l-8.6 -18.1M720.8 416.9l-8.7 -16.3" stroke="rgb(226, 175, 149)" stroke-width="1" fill="none"/><path d="M768.0 366.8l5.4 -1.7M773.4 365.0l5.3 -1.5M301.5 335.9l-3.3 8.1M775.6 350.8l5.0 -0.5M780.6 350.3l4.9 -0.3M300.4 324.8l-2.7 10.9M782.2 339.2l4.6 0.6M783.6 330.2l4.4 1.2M707.0 365.1l6.2 -3.5M713.2 361.6l6.1 -3.6M780.2 321.8l4.4 1.5M665.1 380.2l6.7 -2.5M671.9 377.7l6.6 -2.7M678.5 375.1l6.5 -2.9M685.0 372.2l6.4 -3.1M691.4 369.0l6.3 -3.4M697.7 365.6l6.2 -3.6M704.0 362.0l6.1 -3.8M710.1 358.3l6.1 -4.0M716.2 354.3l6.0 -4.1M722.2 350.2l5.9 -4.1M728.1 346.1l5.8 -4.0M733.9 342.1l5.7 -4.1M781.2 315.8l4.2 2.1M642.1 385.1l7.0 -1.8M649.1 383.3l6.9 -2.1M724.9 342.2l5.8 -4.6M730.7 337.6l5.7 -4.4M736.4 333.2l5.6 -4.2M777.9 309.2l4.1 2.5M618.7 388.8l7.3 -1.1M626.0 387.7l7.1 -1.4M474.8 379.8l-7.0 -2.0M467.7 377.8l-6.9 -2.4M460.8 375.4l-6.8 -2.7M454.0 372.7l-6.7 -3.0M447.3 369.7l-6.6 -3.3M440.8 366.5l-6.5 -3.6M434.3 362.9l-6.4 -3.9M427.9 359.0l-6.3 -4.2M421.5 354.8l-6.3 -4.5M415.3 350.2l-6.2 -4.8M409.1 345.4l-6.1 -5.2M727.6 333.3l5.7 -4.8M733.3 328.5l5.6 -4.5M738.9 324.0l5.5 -4.2M774.5 303.4l4.0 2.9M594.9 390.8l7.6 -0.4M602.5 390.4l7.4 -0.7M498.1 385.2l-7.3 -1.4M490.8 383.8l-7.2 -1.7M411.9 343.2l-6.1 -5.4M405.8 337.8l-6.0 -5.7M730.3 323.7l5.6 -4.9M735.9 318.8l5.4 -4.3M771.2 298.4l4.0 3.1M321.2 278.1l-0.9 23.6M578.6 391.5l7.8 -0.0M521.8 388.8l-7.6 -0.8M586.4 391.5l7.6 -0.4M408.5 334.7l-6.0 -6.0M402.5 328.7l-5.9 -6.3M727.5 318.7l5.5 -5.1M733.0 313.6l5.4 -4.5M767.9 294.2l3.9 3.1M545.9 390.7l-8.0 -0.2M562.3 391.4l8.0 0.4M538.0 390.6l-7.8 -0.5M405.1 324.8l-5.9 -6.5M724.8 313.4l5.5 -5.1M730.3 308.2l5.4 -4.6M562.3 391.4l-8.2 0.1M545.9 390.7l8.2 0.9M407.5 320.4l-5.8 -6.8M722.2 307.8l5.4 -5.2M727.7 302.6l5.3 -4.6M757.5 284.0l3.9 3.7M335.6 266.9l-0.8 26.2M578.6 391.5l-8.4 0.4M538.0 390.6l8.2 0.8M409.8 315.3l-5.8 -7.1M719.8 301.9l5.4 -5.2M725.2 296.8l5.2 -4.4M754.4 281.3l3.9 3.6M594.9 390.8l-8.6 0.6M521.8 388.8l8.4 1.3M412.0 309.7l-5.8 -7.3M712.1 301.1l5.4 -5.2M717.4 295.9l5.3 -5.2M346.1 260.2l-0.9 26.5M602.5 390.4l-8.6 0.7M505.5 386.2l8.6 1.8M414.0 303.5l-5.7 -7.4M709.9 294.9l5.3 -5.2M715.2 289.7l5.2 -4.8M744.3 273.8l3.9 3.8M618.7 388.8l-8.8 0.9M498.1 385.2l8.6 1.7M416.0 296.8l-5.7 -7.5M702.4 293.9l5.3 -5.3M707.8 288.6l5.3 -5.2M635.0 386.8l-9.0 0.9M481.9 381.5l8.9 2.3M423.4 297.2l-5.6 -7.5M700.5 287.3l5.3 -5.2M734.5 268.1l3.8 4.6M642.1 385.1l-9.0 1.1M474.8 379.8l8.9 2.2M425.1 289.6l-5.6 -7.6M693.3 285.9l5.3 -5.3M698.6 280.7l5.2 -5.1M727.8 263.4l3.9 4.2M658.3 382.7l-9.2 0.7M467.7 377.8l8.9 2.3M432.3 289.3l-5.6 -7.5M686.2 284.5l5.3 -5.4M691.5 279.1l5.2 -5.1M665.1 380.2l-9.2 1.0M684.6 277.4l5.2 -5.1M718.4 259.9l3.8 5.3M671.9 377.7l-9.2 1.2M444.9 369.9l9.1 2.8M440.6 280.2l-5.5 -7.5M677.8 275.6l5.2 -5.2M711.8 256.3l3.9 4.8M386.5 243.9l-2.0 22.6M687.8 374.8l-9.3 0.3M678.5 375.1l-9.2 1.2M438.2 366.9l9.1 2.8M671.1 273.6l5.2 -5.3M705.3 252.9l4.0 4.5M694.3 371.7l-9.3 0.4M431.6 363.6l9.1 2.9M700.7 368.5l-9.3 0.5M425.1 359.9l9.1 3.0M707.0 365.1l-9.3 0.5M418.7 356.0l9.1 3.0M713.2 361.6l-9.3 0.4M412.4 351.7l9.2 3.1M719.4 358.0l-9.2 0.2M425.2 234.7l-3.2 16.1M725.4 354.3l-9.2 -0.0M409.1 345.4l8.9 2.9M731.3 350.5l-9.2 -0.3M722.2 350.2l-9.1 0.8M402.9 340.3l8.9 3.0M773.4 365.0l-8.6 -10.2M737.2 346.6l-9.1 -0.5M728.1 346.1l-9.0 0.5M778.7 363.5l-8.3 -11.3M733.9 342.1l-9.0 0.1M399.7 332.0l8.7 2.7M649.3 236.2l4.2 5.9M306.3 376.4l5.7 -30.1M783.8 362.6l-8.2 -11.7M739.6 338.0l-8.9 -0.5M730.7 337.6l-8.8 0.5M393.7 326.0l8.7 2.7M643.4 235.4l4.2 6.8M745.2 334.0l-8.9 -0.7M736.4 333.2l-8.8 0.1M396.6 322.4l8.5 2.4M785.5 350.0l-8.1 -10.5M742.0 329.1l-8.7 -0.6M733.3 328.5l-8.6 0.2M399.2 318.3l8.3 2.1M747.5 324.9l-8.6 -0.9M738.9 324.0l-8.5 -0.2M401.7 313.6l8.1 1.8M621.6 230.9l4.4 6.8M786.9 339.8l-8.0 -9.6M744.3 319.8l-8.5 -1.0M735.9 318.8l-8.4 -0.1M395.9 306.5l8.2 1.7M404.0 308.3l8.0 1.4M741.3 314.5l-8.3 -0.9M733.0 313.6l-8.2 -0.3M406.2 302.4l7.8 1.1M788.0 331.5l-7.8 -9.7M738.4 309.1l-8.1 -0.9M730.3 308.2l-8.0 -0.5M408.3 296.1l7.6 0.7M784.6 323.3l-7.9 -8.0M735.6 303.6l-8.0 -1.0M727.7 302.6l-7.9 -0.6M417.8 289.6l7.3 0.0M733.0 298.0l-7.8 -1.2M725.2 296.8l-7.7 -0.8M717.4 295.9l-7.6 -1.0M426.7 281.8l7.0 -0.6M433.7 281.2l6.9 -0.9M440.6 280.2l6.8 -1.3M523.5 226.4l-4.7 7.7M298.3 334.8l4.9 -28.1M785.4 317.9l-7.5 -8.7M722.7 290.8l-7.6 -1.0M715.2 289.7l-7.4 -1.1M707.8 288.6l-7.3 -1.3M700.5 287.3l-7.2 -1.4M574.5 227.7l4.8 6.3M782.0 311.8l-7.4 -8.3M713.0 283.4l-7.3 -1.3M705.7 282.1l-7.2 -1.4M698.6 280.7l-7.0 -1.6M691.5 279.1l-6.9 -1.7M684.6 277.4l-6.8 -1.8M677.8 275.6l-6.7 -1.9M671.1 273.6l-6.6 -2.1M564.3 226.0l4.9 5.8M778.6 306.3l-7.4 -7.9M683.0 270.4l-6.7 -2.0M676.3 268.4l-6.6 -2.1M775.2 301.5l-7.3 -7.3M764.6 290.6l-7.2 -6.6M574.5 227.7l-5.2 4.1M761.4 287.6l-7.1 -6.3M584.6 230.1l-5.3 3.9M523.5 226.4l5.3 5.1M320.3 301.7l5.1 -22.0M751.2 279.5l-6.9 -5.7M600.2 230.4l-5.5 2.8M513.4 228.6l5.4 5.4M748.2 277.7l-6.9 -4.7M741.3 272.9l-6.8 -4.9M615.9 232.5l-5.6 2.0M731.7 267.6l-6.7 -3.9M725.0 263.7l-6.6 -3.8M637.6 235.6l-5.8 0.9M631.7 236.5l-5.7 1.3M709.3 257.4l-6.4 -3.2M702.9 254.2l-6.4 -2.6M696.6 251.6l-6.3 -2.4M690.2 249.2l-6.3 -2.2M684.0 247.0l-6.2 -1.9M677.8 245.1l-6.1 -1.4M671.6 243.7l-6.1 -0.9M665.6 242.8l-6.0 -0.6M659.5 242.2l-6.0 -0.2M465.9 232.6l5.9 3.3M367.5 263.5l6.2 -8.2M443.9 237.6l6.1 2.2" stroke="rgb(211, 125, 82)" stroke-width="1" fill="none"/><path d="M320.6 373.4l-5.1 -0.2M762.4 368.9l5.6 -2.1M447.4 279.0l-5.5 -7.3M454.1 277.4l-5.5 -7.2M664.5 271.6l5.2 -5.3M460.6 275.4l-5.4 -7.0M657.9 269.3l5.2 -5.3M753.4 390.9l-8.6 -13.3M467.1 273.2l-5.4 -6.8M651.5 266.9l5.2 -5.3M759.4 387.4l-8.6 -13.1M473.4 270.9l-5.4 -6.7M645.2 264.3l5.2 -5.2M765.2 384.3l-8.5 -13.0M633.7 266.9l5.3 -5.4M639.0 261.5l5.2 -5.1M770.8 382.0l-8.4 -13.1M627.6 263.9l5.3 -5.3M448.6 270.2l6.6 -1.7M455.2 268.5l6.5 -2.0M461.6 266.5l6.4 -2.3M664.5 271.6l-6.5 -2.3M657.9 269.3l-6.4 -2.4M651.5 266.9l-6.3 -2.6M645.2 264.3l-6.2 -2.8M639.0 261.5l-6.1 -2.9M632.9 258.6l-6.1 -3.1M669.7 266.3l-6.5 -2.3" stroke="rgb(217, 142, 105)" stroke-width="1" fill="none"/><path d="M356.6 398.0l-6.6 -6.7M727.7 410.0l-8.8 -14.9M734.4 404.3l-8.8 -14.2M740.9 399.2l-8.7 -13.7M747.3 394.8l-8.7 -13.5M479.6 268.3l-5.4 -6.6M485.8 265.5l-5.4 -6.5M491.9 262.4l-5.4 -6.3M621.5 260.8l5.3 -5.2M503.3 265.1l-5.4 -5.9M610.2 262.6l5.3 -5.2M509.2 261.7l-5.4 -5.9M604.3 259.1l5.3 -5.1M520.4 263.5l-5.4 -5.4M515.0 258.1l-5.4 -5.7M593.1 260.4l5.4 -5.0M526.2 259.8l-5.4 -5.5M582.0 261.3l5.4 -4.8M587.4 256.5l5.4 -4.9M537.4 260.9l-5.5 -5.1M531.9 255.8l-5.4 -5.4M576.3 257.2l5.4 -4.8M543.0 256.8l-5.5 -5.1M565.2 257.4l5.5 -4.6M554.1 257.3l-5.5 -4.8M554.1 257.3l5.5 -4.4M537.4 260.9l5.6 -4.1M565.2 257.4l-5.6 -4.6M543.0 256.8l5.6 -4.3M526.2 259.8l5.7 -4.0M576.3 257.2l-5.6 -4.3M531.9 255.8l5.6 -4.1M509.2 261.7l5.8 -3.6M593.1 260.4l-5.8 -3.9M515.0 258.1l5.8 -3.8M587.4 256.5l-5.7 -4.1M479.6 268.3l6.2 -2.8M485.8 265.5l6.1 -3.0M491.9 262.4l6.0 -3.2M610.2 262.6l-5.9 -3.5M497.9 259.2l5.9 -3.4M604.3 259.1l-5.8 -3.7M598.5 255.4l-5.8 -3.8M468.0 264.2l6.3 -2.5M627.6 263.9l-6.1 -3.1M621.5 260.8l-6.0 -3.3M615.5 257.5l-5.9 -3.5" stroke="rgb(223, 159, 128)" stroke-width="1" fill="none"/><path d="M363.4 405.8l-6.8 -7.7M432.2 430.3l-8.1 -13.6M698.0 413.4l7.2 -6.9M705.2 406.5l7.0 -5.9M457.3 435.3l-8.4 -14.7M666.4 421.8l7.7 -8.5M633.2 436.9l8.3 -11.9M500.7 439.5l-8.7 -15.6M589.6 440.7l8.7 -14.0M589.6 440.7l-9.0 -16.9M607.2 445.1l-8.9 -18.3M483.2 445.3l8.8 -21.4M633.2 436.9l-8.9 -17.1M658.4 432.3l-8.9 -16.6M408.0 430.4l8.2 -25.1M690.6 421.3l-8.9 -15.1M377.7 425.4l7.5 -28.3" stroke="rgb(229, 177, 151)" stroke-width="1" fill="none"/><path d="M307.5 348.9l-4.1 4.2M753.5 360.3l5.7 -2.8M759.2 357.5l5.6 -2.7M764.9 354.8l5.5 -2.5M770.3 352.3l5.3 -1.5M750.0 353.0l5.7 -3.3M755.7 349.8l5.6 -3.1M761.4 346.6l5.5 -3.0M766.9 343.7l5.3 -2.1M772.2 341.5l5.2 -2.0M777.4 339.5l4.9 -0.3M697.3 375.1l6.5 -3.1M703.8 372.0l6.4 -3.2M710.2 368.8l6.3 -3.3M716.5 365.4l6.2 -3.4M722.7 362.0l6.1 -3.5M728.7 358.4l6.0 -3.6M734.7 354.8l5.9 -3.7M740.6 351.1l5.8 -3.6M746.5 347.5l5.7 -3.7M752.2 343.8l5.6 -3.5M757.8 340.3l5.5 -3.2M763.3 337.1l5.4 -3.0M768.6 334.1l5.2 -2.3M773.8 331.8l5.0 -1.7M778.9 330.2l4.7 0.1M303.2 306.7l-1.9 15.5M667.6 382.8l6.9 -2.5M674.5 380.3l6.7 -2.7M681.2 377.6l6.6 -2.9M687.8 374.8l6.5 -3.0M694.3 371.7l6.4 -3.2M700.7 368.5l6.3 -3.4M719.4 358.0l6.0 -3.7M725.4 354.3l5.9 -3.8M731.3 350.5l5.9 -3.9M737.2 346.6l5.8 -3.9M743.0 342.7l5.7 -3.9M748.7 338.8l5.6 -3.8M754.2 335.0l5.5 -3.7M759.7 331.3l5.4 -3.3M765.1 328.0l5.2 -2.9M770.3 325.1l5.0 -2.0M775.4 323.1l4.9 -1.3M644.2 387.0l7.1 -2.0M651.3 384.9l7.0 -2.3M658.3 382.7l6.9 -2.4M739.6 338.0l5.6 -4.1M745.2 334.0l5.6 -4.1M750.8 329.9l5.5 -3.9M756.3 326.0l5.4 -3.7M761.6 322.3l5.2 -3.2M766.9 319.2l5.1 -2.7M771.9 316.5l4.8 -1.2M776.8 315.2l4.5 0.6M620.3 390.1l7.4 -1.5M627.7 388.5l7.3 -1.8M635.0 386.8l7.1 -1.6M458.6 374.9l-6.9 -2.4M451.7 372.6l-6.8 -2.7M444.9 369.9l-6.7 -3.0M438.2 366.9l-6.6 -3.3M431.6 363.6l-6.5 -3.7M425.1 359.9l-6.4 -4.0M418.7 356.0l-6.3 -4.3M412.4 351.7l-6.3 -4.6M406.1 347.1l-6.2 -4.9M742.0 329.1l5.5 -4.2M747.5 324.9l5.4 -4.1M752.9 320.8l5.3 -3.8M758.3 316.9l5.2 -3.5M763.5 313.4l5.0 -2.7M768.5 310.7l4.8 -1.6M773.4 309.1l4.5 0.1M603.7 391.0l7.6 -1.2M611.3 389.8l7.4 -1.0M489.2 382.9l-7.3 -1.4M481.9 381.5l-7.2 -1.7M402.9 340.3l-6.1 -5.5M396.8 334.8l-6.0 -5.8M744.3 319.8l5.4 -4.2M749.7 315.6l5.3 -4.0M755.0 311.5l5.2 -3.6M760.2 308.0l5.0 -2.8M765.2 305.2l4.8 -1.7M770.0 303.4l4.5 0.0M587.2 391.5l7.8 -0.6M513.2 387.1l-7.6 -0.9M505.5 386.2l-7.5 -1.0M399.7 332.0l-6.0 -6.0M393.7 326.0l-6.0 -6.4M741.3 314.5l5.3 -4.2M746.7 310.3l5.3 -4.1M751.9 306.2l5.1 -3.6M757.1 302.6l5.0 -2.9M762.0 299.7l4.8 -1.7M766.8 298.0l4.4 0.4M537.5 389.9l-8.0 -0.6M570.6 391.5l8.0 -0.0M529.6 389.3l-7.8 -0.5M396.6 322.4l-5.9 -6.6M738.4 309.1l5.3 -4.2M743.7 304.9l5.2 -4.1M748.9 300.8l5.1 -3.6M754.0 297.2l4.9 -2.8M758.9 294.4l4.7 -1.4M763.6 293.0l4.3 1.1M554.1 390.9l-8.2 -0.2M554.1 390.9l8.2 0.5M399.2 318.3l-5.9 -6.8M735.6 303.6l5.2 -4.2M740.9 299.4l5.2 -4.1M746.0 295.3l5.0 -3.5M751.1 291.8l4.9 -2.6M755.9 289.3l4.6 -0.9M760.5 288.3l4.1 2.3M570.6 391.5l-8.4 -0.0M537.5 389.9l8.4 0.9M401.7 313.6l-5.8 -7.0M733.0 298.0l5.2 -4.1M738.1 293.9l5.1 -4.0M743.3 289.9l5.0 -3.3M748.2 286.5l4.8 -2.3M753.0 284.3l4.5 -0.3M587.2 391.5l-8.6 -0.0M529.6 389.3l8.4 1.3M404.0 308.3l-5.8 -7.2M730.4 292.3l5.1 -4.1M735.5 288.2l5.0 -3.8M740.6 284.5l4.9 -2.9M745.4 281.6l4.7 -1.5M750.1 280.0l4.3 1.3M603.7 391.0l-8.8 -0.2M513.2 387.1l8.6 1.7M406.2 302.4l-5.7 -7.4M722.7 290.8l5.2 -4.1M727.9 286.7l5.1 -4.0M733.0 282.6l5.0 -3.5M742.7 276.7l4.5 -0.6M747.2 276.2l4.0 3.3M620.3 390.1l-9.0 -0.3M611.3 389.8l-8.8 0.6M496.7 384.2l8.9 2.0M408.3 296.1l-5.7 -7.6M720.4 285.0l5.1 -4.0M725.5 280.9l5.0 -3.8M740.1 272.5l4.3 1.3M627.7 388.5l-9.0 0.2M489.2 382.9l8.9 2.3M410.3 289.2l-5.6 -7.9M713.0 283.4l5.1 -4.2M718.2 279.2l5.0 -4.0M737.4 269.1l4.0 3.8M644.2 387.0l-9.2 -0.2M417.8 289.6l-5.6 -7.7M705.7 282.1l5.2 -4.8M710.9 277.4l5.1 -4.0M716.0 273.4l5.0 -3.7M730.4 265.8l4.2 2.3M363.0 249.6l-1.5 24.5M660.6 385.3l-9.4 -0.4M651.3 384.9l-9.2 0.2M465.6 377.0l9.1 2.8M703.8 275.5l5.1 -4.0M708.9 271.5l5.0 -3.9M667.6 382.8l-9.4 -0.2M458.6 374.9l9.1 2.8M426.7 281.8l-5.6 -7.7M696.8 274.0l5.1 -4.4M701.9 269.5l5.0 -3.9M721.0 259.7l4.0 4.0M674.5 380.3l-9.3 -0.1M451.7 372.6l9.1 2.8M433.7 281.2l-5.5 -7.6M689.8 272.2l5.1 -4.7M695.0 267.5l5.0 -3.8M714.3 256.8l4.1 3.2M690.7 378.1l-9.5 -0.5M681.2 377.6l-9.3 0.1M683.0 270.4l5.2 -5.0M688.2 265.4l5.0 -3.8M707.6 254.0l4.2 2.3M697.3 375.1l-9.5 -0.4M676.3 268.4l5.2 -5.0M681.5 263.4l5.0 -3.9M393.0 240.5l-2.3 20.7M703.8 372.0l-9.5 -0.3M669.7 266.3l5.2 -5.0M674.9 261.3l5.1 -4.1M698.9 249.9l4.1 4.3M399.5 238.0l-2.6 19.1M738.6 381.3l-9.2 -7.9M719.8 370.0l-9.6 -1.2M710.2 368.8l-9.5 -0.3M668.4 259.0l5.1 -4.1M692.5 247.2l4.1 4.4M406.0 236.2l-2.8 18.0M744.8 377.6l-9.2 -7.6M726.0 366.6l-9.6 -1.2M716.5 365.4l-9.4 -0.3M686.1 244.7l4.1 4.4M412.4 235.2l-2.9 17.1M750.8 374.3l-9.1 -7.7M732.2 363.2l-9.5 -1.2M722.7 362.0l-9.4 -0.3M679.8 242.6l4.2 4.4M418.8 234.7l-3.1 16.5M756.7 371.4l-9.0 -8.1M738.2 359.8l-9.5 -1.4M728.7 358.4l-9.4 -0.4M406.1 347.1l9.2 3.1M673.6 240.8l4.2 4.3M762.4 368.9l-8.9 -8.6M753.5 360.3l-9.3 -3.9M744.2 356.4l-9.4 -1.6M734.7 354.8l-9.4 -0.5M399.9 342.2l9.2 3.2M667.4 239.3l4.2 4.5M768.0 366.8l-8.7 -9.3M759.2 357.5l-9.2 -4.4M750.0 353.0l-9.4 -1.9M740.6 351.1l-9.3 -0.6M393.7 336.8l9.2 3.4M661.3 238.0l4.2 4.8M764.9 354.8l-9.1 -5.0M755.7 349.8l-9.3 -2.3M746.5 347.5l-9.3 -0.9M396.8 334.8l9.0 3.0M655.3 237.0l4.2 5.2M310.8 374.2l6.0 -28.7M770.3 352.3l-9.0 -5.6M761.4 346.6l-9.2 -2.8M752.2 343.8l-9.2 -1.2M743.0 342.7l-9.1 -0.6M390.8 329.0l9.0 3.1M453.9 228.3l-3.8 11.6M775.6 350.8l-8.7 -7.2M766.9 343.7l-9.1 -3.3M757.8 340.3l-9.1 -1.6M748.7 338.8l-9.1 -0.7M780.6 350.3l-8.4 -8.8M772.2 341.5l-8.9 -4.4M763.3 337.1l-9.0 -2.1M754.2 335.0l-9.0 -1.0M387.8 319.6l8.8 2.8M633.1 231.1l4.5 4.5M777.4 339.5l-8.7 -5.4M768.6 334.1l-8.9 -2.8M759.7 331.3l-8.9 -1.4M750.8 329.9l-8.8 -0.8M390.6 315.9l8.5 2.4M627.3 231.1l4.4 5.4M476.0 226.3l-4.2 9.6M299.7 358.8l5.5 -28.8M782.2 339.2l-8.4 -7.4M773.8 331.8l-8.7 -3.8M765.1 328.0l-8.8 -2.0M756.3 326.0l-8.8 -1.1M393.3 311.5l8.3 2.1M778.9 330.2l-8.5 -5.1M770.3 325.1l-8.7 -2.8M761.6 322.3l-8.7 -1.5M752.9 320.8l-8.6 -1.0M611.3 227.8l4.6 4.8M492.0 224.5l-4.4 8.1M783.6 330.2l-8.2 -7.2M775.4 323.1l-8.5 -3.9M766.9 319.2l-8.6 -2.2M758.3 316.9l-8.5 -1.4M749.7 315.6l-8.4 -1.1M398.3 301.0l8.0 1.4M605.7 228.1l4.6 6.4M780.2 321.8l-8.3 -5.3M771.9 316.5l-8.5 -3.0M763.5 313.4l-8.5 -1.9M755.0 311.5l-8.4 -1.3M746.7 310.3l-8.2 -1.2M400.5 295.0l7.8 1.1M507.8 224.6l-4.6 7.5M776.8 315.2l-8.2 -4.5M768.5 310.7l-8.3 -2.7M760.2 308.0l-8.3 -1.8M751.9 306.2l-8.2 -1.3M743.7 304.9l-8.1 -1.3M402.6 288.5l7.7 0.8M410.3 289.2l7.5 0.4M590.0 226.9l4.7 6.3M781.2 315.8l-7.9 -6.7M773.4 309.1l-8.1 -4.0M765.2 305.2l-8.2 -2.6M757.1 302.6l-8.1 -1.8M748.9 300.8l-8.1 -1.4M740.9 299.4l-7.9 -1.4M412.2 281.9l7.3 0.1M419.5 282.0l7.2 -0.3M579.8 224.5l4.8 5.6M777.9 309.2l-7.8 -5.8M770.0 303.4l-8.0 -3.7M762.0 299.7l-8.0 -2.5M754.0 297.2l-8.0 -1.9M746.0 295.3l-7.9 -1.5M738.1 293.9l-7.8 -1.5M730.4 292.3l-7.6 -1.6M421.1 274.1l7.1 -0.5M428.2 273.6l6.9 -0.8M533.7 225.2l-4.8 6.3M301.2 322.2l5.1 -25.9M774.5 303.4l-7.7 -5.4M766.8 298.0l-7.9 -3.6M758.9 294.4l-7.9 -2.6M751.1 291.8l-7.8 -2.0M743.3 289.9l-7.7 -1.6M735.5 288.2l-7.6 -1.6M727.9 286.7l-7.5 -1.7M720.4 285.0l-7.4 -1.6M543.9 224.7l-5.0 5.5M771.2 298.4l-7.6 -5.4M763.6 293.0l-7.7 -3.8M755.9 289.3l-7.7 -2.7M748.2 286.5l-7.7 -2.1M740.6 284.5l-7.6 -1.9M733.0 282.6l-7.5 -1.7M725.5 280.9l-7.4 -1.8M718.2 279.2l-7.2 -1.8M710.9 277.4l-7.1 -1.8M703.8 275.5l-7.0 -1.6M696.8 274.0l-6.9 -1.7M689.8 272.2l-6.8 -1.9M554.1 225.0l-5.1 5.0M554.1 225.0l5.1 5.5M767.9 294.2l-7.4 -5.8M760.5 288.3l-7.5 -4.1M753.0 284.3l-7.6 -2.7M730.5 277.1l-7.3 -1.9M723.2 275.2l-7.2 -1.8M716.0 273.4l-7.1 -1.9M708.9 271.5l-7.0 -2.0M701.9 269.5l-6.9 -2.0M695.0 267.5l-6.8 -2.1M688.2 265.4l-6.7 -2.0M681.5 263.4l-6.6 -2.1M674.9 261.3l-6.5 -2.2M668.4 259.0l-6.4 -2.4M564.3 226.0l-5.1 4.5M543.9 224.7l5.2 5.2M757.5 284.0l-7.4 -3.9M750.1 280.0l-7.4 -3.3M533.7 225.2l5.3 5.0M315.9 300.0l5.3 -21.9M754.4 281.3l-7.1 -5.2M747.2 276.2l-7.2 -3.6M590.0 226.9l-5.4 3.1M744.3 273.8l-6.9 -4.7M737.4 269.1l-7.0 -3.3M605.7 228.1l-5.5 2.3M507.8 224.6l5.5 4.0M734.5 268.1l-6.7 -4.6M727.8 263.4l-6.8 -3.7M621.6 230.9l-5.7 1.6M497.7 227.9l5.6 4.2M718.4 259.9l-6.6 -3.6M711.8 256.3l-6.5 -3.3M705.3 252.9l-6.5 -3.0M655.3 237.0l-6.0 -0.8M649.3 236.2l-5.9 -0.8M643.4 235.4l-5.9 0.2M481.8 229.1l5.8 3.5M350.8 271.3l6.0 -12.2M459.9 230.2l6.0 2.4M437.7 236.1l6.2 1.5" stroke="rgb(218, 138, 98)" stroke-width="1" fill="none"/><path d="M331.6 377.5l-5.6 -2.6M326.0 374.9l-5.4 -1.5M732.2 385.5l6.4 -4.2M738.6 381.3l6.2 -3.7M744.8 377.6l6.0 -3.3M750.8 374.3l5.9 -2.9M756.7 371.4l5.7 -2.5M719.0 395.1l-9.1 -10.2M725.7 390.1l-9.2 -9.3M441.9 271.6l-5.5 -7.6M732.2 385.5l-9.2 -8.5M448.6 270.2l-5.4 -7.4M455.2 268.5l-5.4 -7.2M663.2 264.0l5.2 -5.0M461.6 266.5l-5.4 -7.0M656.8 261.6l5.2 -4.9M468.0 264.2l-5.4 -6.9M650.5 259.1l5.2 -4.9M644.2 256.4l5.2 -4.8M632.9 258.6l5.2 -5.0M638.1 253.6l5.2 -4.8M626.8 255.5l5.2 -4.8M620.8 252.4l5.2 -4.7M435.1 272.8l6.8 -1.1M441.9 271.6l6.7 -1.4M626.8 255.5l-6.0 -3.2M663.2 264.0l-6.4 -2.4M656.8 261.6l-6.3 -2.5M650.5 259.1l-6.2 -2.7M644.2 256.4l-6.1 -2.8M638.1 253.6l-6.1 -2.9M632.0 250.7l-6.0 -3.0M661.9 256.7l-6.3 -2.5" stroke="rgb(222, 153, 119)" stroke-width="1" fill="none"/><path d="M350.0 391.4l-6.4 -5.6M343.6 385.7l-6.1 -4.6M337.5 381.1l-5.9 -3.6M712.2 400.6l6.8 -5.5M719.0 395.1l6.7 -5.1M725.7 390.1l6.5 -4.6M705.2 406.5l-9.0 -12.9M712.2 400.6l-9.1 -11.5M474.2 261.7l-5.4 -6.7M480.4 259.0l-5.4 -6.5M497.9 259.2l-5.4 -6.1M615.5 257.5l5.3 -5.1M503.8 255.8l-5.4 -6.0M609.6 254.0l5.3 -4.9M509.6 252.3l-5.3 -5.8M598.5 255.4l5.3 -5.0M603.8 250.4l5.3 -4.6M520.8 254.3l-5.4 -5.6M592.7 251.6l5.3 -4.8M526.5 250.5l-5.4 -5.4M581.7 252.4l5.4 -4.8M537.5 251.7l-5.4 -5.2M570.6 252.8l5.4 -4.7M576.1 248.2l5.4 -4.5M548.6 252.5l-5.5 -5.0M559.6 252.9l5.5 -4.5M565.1 248.4l5.4 -4.5M559.6 252.9l-5.5 -4.7M548.6 252.5l5.5 -4.4M554.1 248.2l-5.5 -4.8M554.1 248.2l5.5 -4.4M570.6 252.8l-5.6 -4.5M537.5 251.7l5.6 -4.2M565.1 248.4l-5.5 -4.6M543.1 247.6l5.5 -4.2M520.8 254.3l5.7 -3.9M581.7 252.4l-5.6 -4.2M526.5 250.5l5.6 -3.9M576.1 248.2l-5.6 -4.3M503.8 255.8l5.8 -3.5M509.6 252.3l5.8 -3.6M592.7 251.6l-5.7 -4.0M587.0 247.6l-5.6 -3.9M474.2 261.7l6.2 -2.7M480.4 259.0l6.1 -2.9M486.5 256.1l6.0 -3.1M492.5 253.1l5.9 -3.2M609.6 254.0l-5.8 -3.6M603.8 250.4l-5.8 -3.6M620.8 252.4l-5.9 -3.2M614.9 249.1l-5.8 -3.3" stroke="rgb(228, 169, 140)" stroke-width="1" fill="none"/><path d="M400.2 417.4l-7.6 -11.0M424.1 416.7l-7.9 -11.4M674.1 413.3l7.5 -7.1M681.6 406.2l7.4 -6.8M474.6 428.2l-8.4 -13.3M641.5 425.0l8.0 -9.3M649.5 415.7l7.9 -8.1M615.8 430.8l8.4 -11.0M518.5 436.9l-8.7 -15.2M598.3 426.7l8.5 -10.5M536.3 435.7l-8.8 -15.0M571.9 437.6l8.8 -13.9M554.1 436.0l-8.9 -15.3M554.1 436.0l8.9 -14.2M571.9 437.6l-8.9 -15.9M536.3 435.7l8.9 -15.0M518.5 436.9l9.0 -16.2M500.7 439.5l9.0 -17.8M615.8 430.8l-9.0 -14.6M457.3 435.3l8.8 -20.3M641.5 425.0l-9.1 -14.1M432.2 430.3l8.6 -21.5M666.4 421.8l-9.0 -14.2M674.1 413.3l-9.1 -12.8M400.2 417.4l8.4 -21.3M698.0 413.4l-9.0 -14.0M370.4 414.7l7.6 -26.1M363.4 405.8l7.8 -24.1" stroke="rgb(232, 185, 161)" stroke-width="1" fill="none"/><path d="M312.0 346.3l-4.5 2.6M703.1 389.2l6.8 -4.3M709.8 384.9l6.6 -4.1M716.5 380.8l6.5 -3.9M723.0 377.0l6.4 -3.6M729.3 373.4l6.2 -3.4M735.6 369.9l6.1 -3.4M741.7 366.5l6.0 -3.3M747.7 363.3l5.9 -3.0M672.4 395.5l7.2 -4.8M679.7 390.7l7.0 -3.7M686.7 387.0l6.9 -3.6M693.6 383.4l6.7 -3.4M700.3 380.0l6.6 -3.4M706.9 376.7l6.5 -3.3M713.4 373.3l6.4 -3.3M719.8 370.0l6.3 -3.4M726.0 366.6l6.1 -3.4M732.2 363.2l6.0 -3.4M738.2 359.8l5.9 -3.4M744.2 356.4l5.8 -3.3M663.0 390.1l7.2 -3.2M670.1 386.9l7.0 -3.1M677.1 383.8l6.9 -2.8M684.0 381.0l6.7 -2.9M690.7 378.1l6.6 -3.0M646.2 390.2l7.3 -2.4M653.5 387.8l7.1 -2.4M660.6 385.3l7.0 -2.5M306.4 296.3l-1.9 16.2M629.4 391.0l7.4 -2.0M636.9 389.0l7.3 -2.0M435.5 366.5l-6.7 -3.1M428.8 363.4l-6.6 -3.4M422.2 360.0l-6.5 -3.7M415.7 356.3l-6.4 -4.0M409.3 352.3l-6.4 -4.4M309.8 288.5l-1.8 17.1M604.9 393.3l7.8 -1.7M612.7 391.6l7.6 -1.5M480.1 381.1l-7.3 -2.1M472.8 378.9l-7.2 -1.9M465.6 377.0l-7.0 -2.1M399.9 342.2l-6.2 -5.3M393.7 336.8l-6.1 -5.7M313.4 282.8l-1.6 18.5M588.0 393.3l8.0 -1.3M595.9 392.0l7.8 -1.0M504.3 385.9l-7.6 -1.7M496.7 384.2l-7.5 -1.3M390.8 329.0l-6.0 -6.2M317.2 279.2l-1.3 20.7M571.0 393.0l8.2 -0.9M529.0 389.5l-8.0 -1.3M579.2 392.2l8.0 -0.7M521.0 388.2l-7.8 -1.1M387.8 319.6l-5.9 -6.8M545.7 390.9l-8.2 -1.1M562.5 391.8l8.2 -0.3M390.6 315.9l-5.9 -6.9M571.0 393.0l-8.6 -1.2M562.5 391.8l-8.4 -0.9M545.7 390.9l8.4 0.0M393.3 311.5l-5.8 -7.1M588.0 393.3l-8.8 -1.2M579.2 392.2l-8.6 -0.7M529.0 389.5l8.6 0.4M395.9 306.5l-5.8 -7.4M604.9 393.3l-9.0 -1.3M595.9 392.0l-8.8 -0.5M521.0 388.2l8.6 1.1M398.3 301.0l-5.7 -7.6M621.8 393.1l-9.2 -1.4M612.7 391.6l-9.0 -0.6M504.3 385.9l8.8 1.2M400.5 295.0l-5.7 -7.8M737.9 279.2l4.8 -2.4M629.4 391.0l-9.2 -0.9M402.6 288.5l-5.7 -8.1M730.5 277.1l4.9 -3.0M735.4 274.1l4.7 -1.6M646.2 390.2l-9.3 -1.2M636.9 389.0l-9.2 -0.4M480.1 381.1l9.1 1.9M723.2 275.2l4.9 -3.4M728.1 271.8l4.8 -2.3M732.9 269.5l4.5 -0.4M672.4 395.5l-9.5 -5.4M663.0 390.1l-9.5 -2.3M653.5 387.8l-9.3 -0.8M472.8 378.9l9.1 2.6M412.2 281.9l-5.6 -8.1M720.9 269.7l4.8 -2.8M725.8 266.9l4.6 -1.1M679.7 390.7l-9.5 -3.9M670.1 386.9l-9.5 -1.5M456.3 374.8l9.3 2.3M419.5 282.0l-5.6 -7.9M713.9 267.6l4.9 -3.2M718.7 264.5l4.7 -1.9M723.4 262.5l4.3 0.9M369.5 242.5l-2.0 21.0M696.2 393.6l-9.5 -6.6M686.7 387.0l-9.6 -3.2M677.1 383.8l-9.5 -1.0M449.2 372.1l9.4 2.8M421.1 274.1l-5.6 -8.2M706.9 265.7l4.9 -3.4M711.8 262.3l4.8 -2.3M716.5 260.0l4.5 -0.3M703.1 389.2l-9.5 -5.7M693.6 383.4l-9.6 -2.4M684.0 381.0l-9.5 -0.7M442.3 369.3l9.4 3.2M428.2 273.6l-5.5 -8.0M700.0 263.7l4.9 -3.6M704.9 260.1l4.8 -2.6M709.7 257.5l4.6 -0.8M709.8 384.9l-9.5 -4.9M700.3 380.0l-9.6 -1.9M435.5 366.5l9.4 3.4M435.1 272.8l-5.5 -7.8M693.2 261.6l5.0 -3.7M698.2 257.9l4.8 -2.8M703.0 255.1l4.6 -1.2M716.5 380.8l-9.6 -4.2M706.9 376.7l-9.6 -1.5M428.8 363.4l9.4 3.5M686.5 259.4l5.0 -3.7M691.5 255.7l4.9 -3.0M696.3 252.7l4.7 -1.5M701.0 251.3l4.3 1.7M723.0 377.0l-9.6 -3.6M713.4 373.3l-9.6 -1.3M422.2 360.0l9.4 3.6M679.9 257.2l5.0 -3.7M684.9 253.5l4.9 -3.1M689.8 250.5l4.7 -1.8M694.5 248.7l4.4 1.2M729.3 373.4l-9.6 -3.4M415.7 356.3l9.4 3.6M673.4 254.9l5.0 -3.7M678.4 251.3l4.9 -3.1M683.3 248.2l4.7 -1.9M688.0 246.3l4.5 0.9M735.6 369.9l-9.5 -3.3M409.3 352.3l9.4 3.7M661.9 256.7l5.1 -4.1M667.0 252.6l5.0 -3.6M672.0 249.0l4.9 -3.1M681.6 244.0l4.5 0.8M741.7 366.5l-9.5 -3.3M402.9 347.9l9.5 3.8M655.6 254.2l5.1 -4.0M660.7 250.2l5.0 -3.6M675.3 241.7l4.5 0.9M747.7 363.3l-9.4 -3.5M396.6 343.2l9.5 3.9M649.4 251.6l5.1 -3.9M654.5 247.7l5.0 -3.5M669.1 239.5l4.5 1.3M390.4 338.1l9.5 4.1M648.3 245.2l5.0 -3.5M662.9 237.5l4.5 1.7M656.8 235.6l4.5 2.4M387.6 331.2l9.2 3.6M631.2 243.4l5.1 -3.5M650.8 233.9l4.4 3.2M447.7 226.8l-3.8 10.8M381.5 325.1l9.3 3.9M644.9 232.2l4.4 4.0M384.8 322.8l9.0 3.2M639.0 231.2l4.4 4.2M378.7 316.1l9.0 3.6M470.1 224.0l-4.2 8.7M303.4 353.1l6.0 -26.5M381.9 312.9l8.8 3.0M384.8 308.9l8.6 2.6M617.0 227.1l4.6 3.8M387.5 304.3l8.4 2.2M298.2 344.1l5.5 -27.4M390.1 299.2l8.2 1.9M601.0 224.5l4.7 3.6M502.2 221.3l-4.6 6.5M392.5 293.5l8.0 1.5M595.5 225.6l4.7 4.8M297.7 335.7l5.3 -26.9M394.8 287.2l7.8 1.2M585.2 223.2l4.9 3.7M518.1 222.3l-4.7 6.3M404.7 281.4l7.5 0.5M528.3 221.2l-4.8 5.2M413.9 274.1l7.2 -0.1M538.6 221.0l-5.0 4.2M569.5 223.0l4.9 4.7M422.7 265.6l7.0 -0.6M548.9 221.2l-5.1 3.5M559.2 221.9l5.1 4.1M304.5 312.5l5.3 -24.0M559.2 221.9l-5.1 3.1M548.9 221.2l5.1 3.8M308.0 305.6l5.4 -22.8M745.4 281.6l-7.5 -2.4M737.9 279.2l-7.4 -2.1M569.5 223.0l-5.2 3.0M311.8 301.3l5.4 -22.1M742.7 276.7l-7.3 -2.6M735.4 274.1l-7.3 -2.3M728.1 271.8l-7.2 -2.1M720.9 269.7l-7.1 -2.0M713.9 267.6l-7.0 -2.0M706.9 265.7l-6.9 -2.0M700.0 263.7l-6.8 -2.1M693.2 261.6l-6.7 -2.2M686.5 259.4l-6.6 -2.2M679.9 257.2l-6.5 -2.3M673.4 254.9l-6.4 -2.3M667.0 252.6l-6.3 -2.4M660.7 250.2l-6.2 -2.5M654.5 247.7l-6.2 -2.5M648.3 245.2l-6.1 -2.6M579.8 224.5l-5.3 3.2M528.3 221.2l5.3 4.0M740.1 272.5l-7.2 -3.1M732.9 269.5l-7.1 -2.5M725.8 266.9l-7.0 -2.4M718.7 264.5l-7.0 -2.2M711.8 262.3l-6.9 -2.2M704.9 260.1l-6.8 -2.2M698.2 257.9l-6.7 -2.2M691.5 255.7l-6.6 -2.2M684.9 253.5l-6.5 -2.3M678.4 251.3l-6.4 -2.3M672.0 249.0l-6.3 -2.4M665.7 246.6l-6.2 -2.4M595.5 225.6l-5.5 1.3M518.1 222.3l5.4 4.1M730.4 265.8l-6.9 -3.2M723.4 262.5l-6.9 -2.6M716.5 260.0l-6.8 -2.4M709.7 257.5l-6.7 -2.4M703.0 255.1l-6.6 -2.4M696.3 252.7l-6.6 -2.3M689.8 250.5l-6.5 -2.3M611.3 227.8l-5.6 0.4M330.0 284.5l5.6 -17.6M721.0 259.7l-6.8 -2.9M714.3 256.8l-6.7 -2.8M707.6 254.0l-6.6 -2.7M701.0 251.3l-6.5 -2.6M694.5 248.7l-6.5 -2.4M639.0 231.2l-5.9 -0.1M633.1 231.1l-5.8 0.0M627.3 231.1l-5.7 -0.2M492.0 224.5l5.7 3.3M340.2 274.7l5.9 -14.5M698.9 249.9l-6.4 -2.7M692.5 247.2l-6.3 -2.4M686.1 244.7l-6.3 -2.1M679.8 242.6l-6.2 -1.8M673.6 240.8l-6.2 -1.5M667.4 239.3l-6.1 -1.3M661.3 238.0l-6.0 -1.0M476.0 226.3l5.8 2.8M373.7 255.3l6.3 -6.5M425.2 234.7l6.3 0.5M431.5 235.2l6.2 0.9" stroke="rgb(225, 155, 120)" stroke-width="1" fill="none"/><path d="M696.2 393.6l6.9 -4.5M665.0 400.5l7.4 -5.0M657.4 407.6l-9.2 -9.5M665.0 400.5l-9.4 -6.8M689.0 399.4l-9.3 -8.6M443.2 262.8l-5.4 -7.7M449.8 261.2l-5.4 -7.5M456.2 259.4l-5.4 -7.2M462.6 257.3l-5.4 -7.0M643.2 248.9l5.1 -3.7M320.6 373.4l6.8 -25.2M632.0 250.7l5.2 -4.7M637.2 246.1l5.1 -3.5M315.6 373.2l6.5 -26.7M626.0 247.7l5.1 -4.3M614.9 249.1l5.2 -4.6M620.1 244.5l5.1 -3.9M609.1 245.8l5.2 -4.5M603.3 242.3l5.2 -4.1M429.6 265.0l6.8 -0.9M436.5 264.1l6.7 -1.3M443.2 262.8l6.6 -1.6M449.8 261.2l6.5 -1.8M456.2 259.4l6.4 -2.1M603.3 242.3l-5.7 -3.6M626.0 247.7l-5.9 -3.2M620.1 244.5l-5.8 -3.3M614.3 241.3l-5.8 -3.0M655.6 254.2l-6.2 -2.6M649.4 251.6l-6.1 -2.7M643.2 248.9l-6.1 -2.8M637.2 246.1l-6.0 -2.7M631.2 243.4l-5.9 -2.8" stroke="rgb(229, 168, 138)" stroke-width="1" fill="none"/><path d="M689.0 399.4l7.2 -5.8M657.4 407.6l7.7 -7.1M632.4 410.9l8.0 -7.6M632.4 410.9l-9.2 -9.7M681.6 406.2l-9.2 -10.7M468.9 255.0l-5.3 -6.8M475.1 252.5l-5.3 -6.6M486.5 256.1l-5.3 -6.4M492.5 253.1l-5.3 -6.2M498.4 249.9l-5.3 -5.9M504.3 246.5l-5.3 -5.7M515.4 248.7l-5.3 -5.6M598.0 246.8l5.3 -4.5M521.1 245.0l-5.3 -5.3M587.0 247.6l5.3 -4.5M592.3 243.1l5.3 -4.4M532.1 246.5l-5.4 -5.1M581.4 243.7l5.3 -4.3M543.1 247.6l-5.4 -5.0M537.7 242.6l-5.4 -4.9M570.5 243.9l5.4 -4.2M548.6 243.4l-5.4 -4.6M559.6 243.8l5.4 -4.1M559.6 243.8l-5.5 -4.4M548.6 243.4l5.5 -4.0M532.1 246.5l5.6 -4.0M570.5 243.9l-5.5 -4.2M537.7 242.6l5.5 -3.8M515.4 248.7l5.7 -3.7M521.1 245.0l5.6 -3.7M581.4 243.7l-5.6 -4.0M498.4 249.9l5.9 -3.3M504.3 246.5l5.8 -3.4M598.0 246.8l-5.7 -3.7M592.3 243.1l-5.6 -3.8M462.6 257.3l6.3 -2.3M468.9 255.0l6.2 -2.5M475.1 252.5l6.1 -2.7M481.1 249.7l6.0 -2.9M487.2 246.9l5.9 -2.9M609.1 245.8l-5.8 -3.5" stroke="rgb(233, 181, 156)" stroke-width="1" fill="none"/><path d="M392.6 406.3l-7.3 -9.2M385.2 397.1l-7.2 -8.4M449.0 420.6l-8.1 -11.8M492.1 423.9l-8.5 -12.4M624.2 419.8l8.2 -8.8M509.7 421.7l-8.6 -11.7M606.8 416.2l8.3 -9.3M527.5 420.7l-8.7 -11.5M580.7 423.8l8.6 -10.4M545.2 420.7l-8.8 -11.6M563.0 421.7l8.8 -10.6M563.0 421.7l-8.9 -12.0M545.2 420.7l8.9 -11.0M580.7 423.8l-9.0 -12.6M527.5 420.7l9.0 -11.6M598.3 426.7l-9.0 -13.4M509.7 421.7l9.1 -12.6M492.1 423.9l9.1 -13.9M606.8 416.2l-9.1 -11.1M474.6 428.2l9.0 -16.8M624.2 419.8l-9.1 -12.8M449.0 420.6l9.0 -16.5M649.5 415.7l-9.1 -12.3M424.1 416.7l8.8 -18.1M392.6 406.3l8.6 -18.9M356.6 398.0l7.8 -22.8M350.0 391.4l7.8 -22.0" stroke="rgb(237, 195, 174)" stroke-width="1" fill="none"/><path d="M316.8 345.5l-4.8 0.8M305.2 330.0l-3.7 5.9M303.7 316.6l-3.3 8.1M303.0 308.8l-2.7 11.1M648.1 398.0l7.5 -4.4M655.6 393.7l7.3 -3.6M623.2 401.2l7.9 -4.6M631.1 396.6l7.7 -3.4M638.7 393.2l7.5 -3.0M606.0 399.5l8.0 -3.6M614.0 395.9l7.8 -2.9M621.8 393.1l7.6 -2.1M470.8 379.8l-7.4 -2.5M463.5 377.3l-7.2 -2.5M456.3 374.8l-7.1 -2.7M449.2 372.1l-6.9 -2.8M442.3 369.3l-6.8 -2.8M402.9 347.9l-6.3 -4.7M396.6 343.2l-6.2 -5.1M390.4 338.1l-6.2 -5.4M580.3 403.6l8.4 -5.0M588.7 398.6l8.2 -3.2M596.9 395.5l8.0 -2.2M495.3 385.2l-7.7 -2.1M487.6 383.0l-7.5 -2.0M387.6 331.2l-6.1 -6.1M562.8 402.3l8.6 -4.6M571.4 397.7l8.4 -2.8M579.8 394.9l8.2 -1.6M520.2 389.5l-8.0 -2.0M512.2 387.5l-7.8 -1.6M384.8 322.8l-6.0 -6.7M554.1 396.7l8.6 -2.6M545.5 393.1l-8.4 -2.0M562.7 394.1l8.4 -1.1M537.1 391.1l-8.2 -1.6M381.9 312.9l-5.9 -7.4M580.3 403.6l-8.9 -5.9M571.4 397.7l-8.8 -3.6M562.7 394.1l-8.6 -1.8M545.5 393.1l8.6 -0.8M554.1 392.3l-8.4 -1.4M554.1 392.3l8.4 -0.5M384.8 308.9l-5.9 -7.5M588.7 398.6l-8.9 -3.7M579.8 394.9l-8.8 -1.9M528.4 391.9l8.8 -0.8M537.1 391.1l8.6 -0.2M387.5 304.3l-5.8 -7.6M331.4 263.1l-1.4 21.4M606.0 399.5l-9.1 -4.0M596.9 395.5l-8.9 -2.1M520.2 389.5l8.8 -0.0M390.1 299.2l-5.8 -7.8M623.2 401.2l-9.2 -5.3M614.0 395.9l-9.1 -2.6M503.1 387.5l9.0 0.0M512.2 387.5l8.8 0.7M392.5 293.5l-5.8 -8.1M341.8 253.9l-1.6 20.8M631.1 396.6l-9.3 -3.6M495.3 385.2l9.0 0.8M394.8 287.2l-5.7 -8.5M648.1 398.0l-9.4 -4.9M638.7 393.2l-9.3 -2.2M478.4 382.4l9.3 0.7M487.6 383.0l9.1 1.2M352.4 249.5l-1.6 21.9M655.6 393.7l-9.4 -3.5M470.8 379.8l9.3 1.3M404.7 281.4l-5.7 -8.4M463.5 377.3l9.3 1.7M413.9 274.1l-5.6 -8.5M439.7 370.1l9.6 2.1M432.7 367.0l9.6 2.3M422.7 265.6l-5.5 -8.7M425.9 363.8l9.6 2.7M429.6 265.0l-5.5 -8.3M419.2 360.4l9.6 3.1M412.5 356.7l9.7 3.4M406.0 352.7l9.7 3.6M399.6 348.5l9.7 3.7M676.9 245.9l4.8 -1.9M393.2 344.1l9.7 3.8M665.7 246.6l4.9 -3.0M670.6 243.6l4.8 -1.9M386.9 339.3l9.7 3.9M659.4 244.1l4.9 -2.9M664.3 241.2l4.8 -1.7M653.3 241.7l4.9 -2.8M658.2 238.9l4.7 -1.3M384.2 332.7l9.5 4.2M642.2 242.6l5.0 -3.4M647.2 239.1l4.9 -2.5M652.1 236.6l4.7 -1.0M441.5 225.6l-3.8 10.5M378.1 326.8l9.5 4.3M636.2 239.9l5.0 -3.2M641.2 236.7l4.9 -2.3M646.1 234.4l4.7 -0.6M625.2 240.6l5.1 -3.4M630.3 237.2l5.0 -3.0M635.3 234.2l4.9 -2.0M640.2 232.2l4.7 -0.1M375.4 318.6l9.3 4.1M619.4 237.8l5.1 -3.4M624.4 234.4l5.0 -2.7M629.4 231.7l4.9 -1.5M634.3 230.1l4.7 1.0M464.1 222.4l-4.2 7.8M613.6 234.9l5.1 -3.1M623.6 229.4l4.8 -0.8M628.5 228.7l4.6 2.4M372.8 308.9l9.1 3.9M617.9 227.3l4.8 -0.0M622.7 227.3l4.6 3.8M375.9 305.5l8.9 3.4M612.2 225.6l4.8 1.5M486.2 221.8l-4.4 7.3M378.9 301.4l8.6 2.9M606.6 224.4l4.7 3.4M381.7 296.7l8.4 2.5M384.3 291.4l8.2 2.1M590.6 222.0l4.8 3.7M512.6 220.0l-4.7 4.6M386.8 285.4l8.0 1.8M300.3 319.8l5.7 -24.3M389.1 278.7l7.9 1.7M397.0 280.4l7.7 1.0M574.8 221.3l5.0 3.2M399.0 273.0l7.5 0.8M406.5 273.8l7.4 0.3M564.5 219.8l5.1 3.2M408.3 265.6l7.3 0.3M415.6 265.8l7.1 -0.2M564.5 219.8l-5.2 2.1M613.6 234.9l-5.7 -2.9M574.8 221.3l-5.3 1.7M538.6 221.0l5.2 3.7M642.2 242.6l-6.0 -2.7M636.2 239.9l-5.9 -2.7M630.3 237.2l-5.9 -2.8M624.4 234.4l-5.8 -2.7M590.6 222.0l-5.5 1.3M585.2 223.2l-5.4 1.3M659.4 244.1l-6.2 -2.5M653.3 241.7l-6.1 -2.5M647.2 239.1l-6.0 -2.5M641.2 236.7l-5.9 -2.5M635.3 234.2l-5.9 -2.5M606.6 224.4l-5.6 0.1M601.0 224.5l-5.5 1.1M512.6 220.0l5.5 2.3M683.3 248.2l-6.4 -2.3M676.9 245.9l-6.3 -2.3M670.6 243.6l-6.2 -2.3M664.3 241.2l-6.2 -2.4M658.2 238.9l-6.1 -2.2M652.1 236.6l-6.0 -2.2M646.1 234.4l-5.9 -2.2M640.2 232.2l-5.9 -2.1M634.3 230.1l-5.8 -1.5M628.5 228.7l-5.8 -1.4M622.7 227.3l-5.7 -0.1M617.0 227.1l-5.7 0.6M502.2 221.3l5.6 3.2M688.0 246.3l-6.4 -2.3M681.6 244.0l-6.3 -2.3M675.3 241.7l-6.2 -2.2M669.1 239.5l-6.2 -2.0M662.9 237.5l-6.1 -1.9M656.8 235.6l-6.0 -1.8M650.8 233.9l-5.9 -1.7M644.9 232.2l-5.9 -1.0M486.2 221.8l5.8 2.7M470.1 224.0l5.9 2.3M356.7 259.1l6.3 -9.5M447.7 226.8l6.1 1.5M453.9 228.3l6.1 1.9M380.0 248.8l6.4 -4.9M386.5 243.9l6.5 -3.5M412.4 235.2l6.4 -0.5M418.8 234.7l6.4 0.0" stroke="rgb(232, 175, 146)" stroke-width="1" fill="none"/><path d="M640.4 403.3l7.7 -5.3M615.1 406.9l8.1 -5.7M597.8 405.1l8.2 -5.6M597.8 405.1l-9.0 -6.5M615.1 406.9l-9.2 -7.4M640.4 403.3l-9.3 -6.7M436.5 264.1l-5.5 -8.0M614.3 241.3l5.1 -3.5M608.5 238.2l5.1 -3.4M597.6 238.7l5.2 -3.5M602.8 235.2l5.1 -3.3M586.7 239.3l5.2 -3.9M592.0 235.4l5.2 -3.3M581.1 235.5l5.2 -3.3M570.3 235.6l5.3 -3.4M559.5 235.4l5.4 -3.5M559.5 235.4l-5.4 -4.0M570.3 235.6l-5.5 -3.7M581.1 235.5l-5.5 -3.4M597.6 238.7l-5.6 -3.3M592.0 235.4l-5.6 -3.2M431.0 256.1l6.7 -1.0M437.7 255.1l6.6 -1.3M444.4 253.8l6.5 -1.6M450.8 252.2l6.4 -1.9M457.2 250.3l6.3 -2.1M608.5 238.2l-5.7 -3.0M602.8 235.2l-5.6 -3.1M625.2 240.6l-5.9 -2.8M619.4 237.8l-5.8 -2.9" stroke="rgb(236, 186, 161)" stroke-width="1" fill="none"/><path d="M536.4 409.0l-8.6 -8.6M571.7 411.1l8.6 -7.5M554.1 409.7l-8.8 -8.5M554.1 409.7l8.7 -7.4M571.7 411.1l-8.9 -8.8M536.4 409.0l8.9 -7.8M589.3 413.3l-9.0 -9.7M518.8 409.1l9.0 -8.7M343.6 385.7l7.8 -21.6M337.5 381.1l7.6 -21.8M331.6 377.5l7.5 -22.4M326.0 374.9l7.2 -23.5M481.1 249.7l-5.3 -6.3M487.2 246.9l-5.3 -6.1M493.1 243.9l-5.3 -6.0M499.0 240.8l-5.3 -5.8M510.0 243.2l-5.3 -5.5M515.8 239.7l-5.3 -5.4M526.7 241.4l-5.3 -5.1M532.3 237.7l-5.3 -4.9M575.8 239.7l5.3 -4.2M543.2 238.7l-5.4 -4.8M565.0 239.7l5.4 -4.1M554.1 239.4l-5.4 -4.5M554.1 239.4l5.4 -4.0M548.7 234.8l-5.4 -4.1M565.0 239.7l-5.5 -4.3M543.2 238.7l5.5 -3.9M548.7 234.8l5.4 -3.5M526.7 241.4l5.6 -3.7M575.8 239.7l-5.5 -4.1M532.3 237.7l5.5 -3.7M510.0 243.2l5.7 -3.4M515.8 239.7l5.7 -3.5M586.7 239.3l-5.6 -3.9M521.4 236.2l5.6 -3.5M493.1 243.9l5.9 -3.1M499.0 240.8l5.8 -3.2M504.8 237.6l5.7 -3.3M463.5 248.2l6.2 -2.3M469.7 245.9l6.1 -2.5M475.8 243.4l6.0 -2.7" stroke="rgb(238, 197, 175)" stroke-width="1" fill="none"/><path d="M378.1 388.7l-6.9 -7.0M371.2 381.7l-6.7 -6.4M416.2 405.3l-7.6 -9.2M408.6 396.1l-7.4 -8.6M440.8 408.8l-7.9 -10.2M466.2 415.0l-8.2 -10.8M483.6 411.4l-8.3 -9.9M501.2 410.0l-8.4 -10.4M518.8 409.1l-8.5 -9.3M589.3 413.3l8.5 -8.2M501.2 410.0l9.1 -10.1M483.6 411.4l9.2 -11.8M466.2 415.0l9.2 -13.4M440.8 408.8l9.2 -13.8M416.2 405.3l9.1 -14.9M385.2 397.1l8.8 -16.7" stroke="rgb(242, 207, 190)" stroke-width="1" fill="none"/><path d="M309.4 326.6l-4.2 3.4M305.9 295.6l-2.8 11.1M484.6 392.9l-8.0 -5.6M461.3 379.2l-7.4 -3.0M454.0 376.2l-7.2 -3.0M446.7 373.2l-7.1 -3.1M439.7 370.1l-6.9 -3.1M432.7 367.0l-6.8 -3.2M425.9 363.8l-6.7 -3.4M419.2 360.4l-6.6 -3.7M412.5 356.7l-6.5 -3.9M406.0 352.7l-6.4 -4.2M399.6 348.5l-6.4 -4.5M393.2 344.1l-6.3 -4.8M386.9 339.3l-6.2 -5.1M502.0 393.2l-8.1 -4.5M493.9 388.8l-7.9 -3.7M486.0 385.1l-7.7 -2.7M478.4 382.4l-7.5 -2.6M384.2 332.7l-6.1 -5.8M378.1 326.8l-6.1 -6.0M527.8 400.4l-8.4 -6.0M519.4 394.5l-8.2 -4.0M511.2 390.4l-8.0 -3.0M503.1 387.5l-7.8 -2.3M381.5 325.1l-6.1 -6.5M375.4 318.6l-6.0 -6.9M545.3 401.3l-8.6 -5.6M536.8 395.6l-8.4 -3.7M528.4 391.9l-8.2 -2.4M378.7 316.1l-6.0 -7.1M562.8 402.3l-8.7 -5.6M545.3 401.3l8.8 -4.5M554.1 396.7l-8.6 -3.6M375.9 305.5l-5.9 -7.9M527.8 400.4l8.9 -4.8M536.8 395.6l8.8 -2.5M378.9 301.4l-5.9 -8.1M327.3 261.9l-1.9 17.8M519.4 394.5l9.0 -2.6M381.7 296.7l-5.9 -8.4M502.0 393.2l9.2 -2.8M511.2 390.4l9.0 -0.9M384.3 291.4l-5.8 -8.6M484.6 392.9l9.3 -4.1M493.9 388.8l9.2 -1.3M386.8 285.4l-5.8 -9.0M476.6 387.3l9.4 -2.2M486.0 385.1l9.3 0.1M468.9 383.0l9.4 -0.6M397.0 280.4l-5.7 -8.9M461.3 379.2l9.5 0.5M399.0 273.0l-5.7 -9.5M454.0 376.2l9.5 1.0M406.5 273.8l-5.7 -9.0M437.0 372.8l9.7 0.5M446.7 373.2l9.5 1.6M429.9 368.9l9.8 1.2M415.6 265.8l-5.6 -9.2M376.1 237.0l-2.4 18.3M422.9 365.4l9.8 1.6M416.1 361.8l9.8 2.0M409.3 358.1l9.8 2.3M402.7 354.1l9.8 2.6M396.2 349.9l9.9 2.8M389.7 345.6l9.9 3.0M428.9 224.4l-3.7 10.3M380.7 334.2l9.7 3.9M435.3 224.8l-3.8 10.3M374.5 328.8l9.7 3.8M372.0 320.8l9.5 4.3M458.1 221.5l-4.2 6.8M307.5 348.9l6.6 -23.6M369.4 311.7l9.3 4.3M618.7 231.7l5.0 -2.3M607.9 231.9l5.0 -2.8M612.9 229.1l5.0 -1.8M480.4 220.6l-4.4 5.7M366.8 301.3l9.1 4.1M597.1 232.1l5.1 -3.1M602.2 229.0l5.0 -2.3M607.3 226.7l4.9 -1.1M301.5 335.9l6.2 -24.0M370.0 297.6l8.9 3.8M591.5 229.0l5.1 -2.7M596.7 226.3l5.0 -1.8M601.7 224.5l4.9 -0.1M496.6 219.8l-4.6 4.7M373.0 293.3l8.7 3.4M580.8 228.9l5.2 -2.9M586.0 226.0l5.1 -2.2M591.1 223.9l5.0 -0.9M596.1 223.0l4.9 1.6M507.0 218.1l-4.8 3.2M300.4 324.8l6.1 -23.1M375.8 288.4l8.5 3.0M575.4 225.7l5.2 -2.4M580.5 223.3l5.1 -1.5M585.6 221.7l5.0 0.2M378.5 282.7l8.3 2.7M564.7 225.3l5.2 -2.5M570.0 222.8l5.2 -1.7M575.1 221.1l5.1 -0.3M580.2 220.8l5.0 2.5M522.9 219.0l-4.9 3.3M381.0 276.4l8.1 2.4M554.1 224.7l5.3 -2.5M569.8 219.8l5.1 1.5M533.3 218.5l-5.0 2.7M391.2 271.5l7.8 1.5M564.7 225.3l-5.4 -3.1M559.3 218.9l5.2 0.9M543.7 218.4l-5.1 2.5M400.9 264.8l7.4 0.8M575.4 225.7l-5.4 -2.9M559.3 218.9l-5.2 -0.0M554.1 218.9l-5.1 2.3M554.1 218.9l5.1 3.0M417.1 256.9l7.0 -0.2M591.5 229.0l-5.5 -3.0M586.0 226.0l-5.5 -2.8M580.5 223.3l-5.4 -2.2M575.1 221.1l-5.4 -1.3M569.8 219.8l-5.3 0.0M543.7 218.4l5.2 2.8M607.9 231.9l-5.7 -2.9M602.2 229.0l-5.6 -2.7M596.7 226.3l-5.5 -2.4M591.1 223.9l-5.5 -2.1M585.6 221.7l-5.4 -1.0M580.2 220.8l-5.4 0.5M533.3 218.5l5.3 2.5M618.7 231.7l-5.7 -2.6M612.9 229.1l-5.7 -2.4M607.3 226.7l-5.6 -2.2M601.7 224.5l-5.5 -1.5M596.1 223.0l-5.5 -1.0M522.9 219.0l5.4 2.1M629.4 231.7l-5.8 -2.2M623.6 229.4l-5.7 -2.2M617.9 227.3l-5.7 -1.7M612.2 225.6l-5.6 -1.2M507.0 218.1l5.6 1.9M325.5 279.7l5.9 -16.6M496.6 219.8l5.6 1.5M480.4 220.6l5.8 1.3M346.1 260.2l6.3 -10.8M464.1 222.4l6.0 1.5M441.5 225.6l6.2 1.2M393.0 240.5l6.5 -2.5M399.5 238.0l6.5 -1.7M406.0 236.2l6.5 -1.1" stroke="rgb(242, 202, 182)" stroke-width="1" fill="none"/><path d="M327.4 348.2l-5.4 -1.7M322.0 346.5l-5.2 -0.9M492.8 399.6l-8.1 -6.7M510.3 399.9l-8.3 -6.6M510.3 399.9l9.1 -5.4M492.8 399.6l9.2 -6.3M467.2 392.8l9.4 -5.5M431.0 256.1l-5.5 -8.9M437.7 255.1l-5.4 -8.5M444.4 253.8l-5.4 -8.1M450.8 252.2l-5.4 -7.7M457.2 250.3l-5.3 -7.4M463.5 248.2l-5.3 -7.1M312.0 346.3l7.2 -20.2M493.7 235.0l-5.2 -5.1M510.5 234.4l-5.2 -4.7M516.1 231.3l-5.2 -4.3M527.0 232.7l-5.3 -4.2M586.4 232.2l5.2 -3.2M537.9 234.0l-5.3 -4.2M532.5 229.8l-5.3 -4.0M575.6 232.1l5.2 -3.2M543.3 230.7l-5.3 -3.9M564.9 231.9l5.3 -3.1M570.1 228.7l5.2 -3.0M554.1 231.4l-5.4 -3.7M554.1 231.4l5.4 -3.1M548.7 227.7l-5.3 -3.7M559.4 228.3l5.3 -3.0M564.9 231.9l-5.4 -3.5M543.3 230.7l5.4 -3.0M559.4 228.3l-5.4 -3.6M548.7 227.7l5.4 -2.9M527.0 232.7l5.5 -3.0M575.6 232.1l-5.5 -3.4M532.5 229.8l5.5 -2.9M570.1 228.7l-5.4 -3.4M538.0 226.8l5.4 -2.9M516.1 231.3l5.6 -2.8M586.4 232.2l-5.5 -3.3M521.8 228.5l5.5 -2.8M580.8 228.9l-5.5 -3.2M424.1 256.7l6.9 -0.6M499.5 232.3l5.7 -2.6M597.1 232.1l-5.6 -3.1M438.9 245.7l6.5 -1.3M445.5 244.5l6.4 -1.6M451.9 242.9l6.3 -1.8M458.2 241.1l6.2 -2.0M464.4 239.0l6.1 -2.2M470.6 236.8l6.1 -2.2" stroke="rgb(244, 210, 192)" stroke-width="1" fill="none"/><path d="M351.4 364.1l-6.2 -4.8M475.3 401.5l9.3 -8.7M450.0 395.0l9.4 -8.5M425.3 390.4l9.4 -9.6M469.7 245.9l-5.3 -6.9M475.8 243.4l-5.3 -6.6M481.9 240.7l-5.2 -6.2M487.8 237.9l-5.2 -5.7M504.8 237.6l-5.2 -5.4M521.4 236.2l-5.3 -4.9M537.9 234.0l5.5 -3.3M510.5 234.4l5.7 -3.0M481.9 240.7l5.9 -2.8M487.8 237.9l5.9 -2.9M493.7 235.0l5.8 -2.8" stroke="rgb(245, 216, 201)" stroke-width="1" fill="none"/><path d="M364.4 375.3l-6.6 -5.9M357.8 369.4l-6.4 -5.3M401.2 387.5l-7.2 -7.1M432.9 398.6l-7.7 -8.2M425.3 390.4l-7.5 -7.9M458.0 404.2l-8.0 -9.1M450.0 395.0l-7.8 -8.3M475.3 401.5l-8.1 -8.7M458.0 404.2l9.2 -11.3M432.9 398.6l9.3 -11.8M408.6 396.1l9.1 -13.6M401.2 387.5l9.2 -12.0M378.1 388.7l8.9 -15.0M371.2 381.7l8.9 -14.3" stroke="rgb(247, 224, 211)" stroke-width="1" fill="none"/><path d="M314.1 325.3l-4.7 1.3M396.3 364.5l-6.8 -5.3M389.5 359.2l-6.7 -5.1M382.8 354.1l-6.6 -4.8M376.2 349.3l-6.5 -4.8M369.7 344.5l-6.4 -4.8M363.4 339.6l-6.3 -4.8M357.1 334.8l-6.1 -4.6M350.9 330.2l-6.0 -4.5M344.9 325.6l-5.9 -4.5M317.0 309.9l-4.8 0.2M312.1 310.1l-4.5 1.9M307.6 312.0l-4.0 4.7M434.7 380.7l-7.4 -5.8M427.3 374.9l-7.2 -4.7M420.1 370.2l-7.0 -4.6M413.0 365.7l-6.9 -4.3M406.2 361.4l-6.8 -4.3M399.4 357.0l-6.7 -4.4M392.7 352.7l-6.6 -4.5M386.2 348.2l-6.5 -4.6M379.7 343.6l-6.4 -4.7M373.3 338.9l-6.3 -4.9M367.0 334.0l-6.2 -5.0M360.8 328.9l-6.2 -5.2M354.6 323.7l-6.1 -5.3M348.5 318.4l-6.0 -5.2M342.6 313.2l-5.9 -5.2M336.7 308.0l-5.7 -4.2M331.0 303.8l-5.6 -4.0M325.4 299.9l-5.2 -1.8M320.2 298.0l-5.0 -0.8M315.2 297.2l-4.6 1.0M310.6 298.1l-4.1 3.5M306.5 301.6l-3.5 7.2M459.4 386.5l-7.6 -5.3M451.7 381.2l-7.5 -4.5M444.3 376.7l-7.3 -4.0M437.0 372.8l-7.1 -3.9M429.9 368.9l-7.0 -3.4M422.9 365.4l-6.8 -3.6M416.1 361.8l-6.7 -3.8M409.3 358.1l-6.6 -4.0M402.7 354.1l-6.5 -4.2M396.2 349.9l-6.5 -4.4M389.7 345.6l-6.4 -4.6M383.3 341.0l-6.3 -4.9M377.0 336.1l-6.2 -5.1M370.8 331.0l-6.2 -5.4M364.6 325.5l-6.1 -5.7M358.5 319.8l-6.1 -6.0M352.4 313.8l-6.0 -5.8M346.4 308.0l-5.9 -5.9M340.4 302.1l-5.8 -5.5M334.6 296.6l-5.6 -4.8M329.0 291.8l-5.4 -3.8M323.5 288.1l-5.0 -1.4M318.5 286.7l-4.7 0.1M313.8 286.8l-4.2 2.8M309.6 289.6l-3.7 6.0M476.6 387.3l-7.7 -4.3M468.9 383.0l-7.6 -3.8M380.7 334.2l-6.2 -5.4M374.5 328.8l-6.1 -5.8M368.3 323.1l-6.1 -6.1M362.2 317.0l-6.0 -6.2M356.2 310.7l-6.0 -6.6M350.2 304.2l-6.0 -6.8M344.2 297.4l-5.8 -6.2M338.4 291.2l-5.7 -5.8M332.6 285.3l-5.5 -4.6M327.1 280.7l-5.2 -3.3M321.9 277.5l-4.7 0.4M317.2 277.8l-4.3 2.2M312.9 280.0l-3.7 5.7M309.2 285.7l-2.9 10.6M372.0 320.8l-6.0 -6.3M365.9 314.5l-6.0 -6.7M359.9 307.8l-6.0 -7.0M353.9 300.8l-6.0 -7.1M347.9 293.7l-5.9 -7.3M342.0 286.4l-5.8 -6.5M336.3 279.9l-5.6 -5.7M330.7 274.1l-5.2 -3.6M325.4 270.6l-4.8 -0.7M320.6 269.9l-4.3 2.0M316.3 271.9l-3.7 5.7M312.6 277.6l-2.8 10.8M369.4 311.7l-6.0 -6.9M363.4 304.8l-6.0 -7.4M357.5 297.4l-5.9 -7.6M351.5 289.9l-5.9 -7.7M345.6 282.1l-5.8 -7.3M339.8 274.8l-5.6 -6.3M334.2 268.6l-5.3 -4.3M328.9 264.3l-4.8 -1.3M324.1 263.0l-4.3 2.1M319.8 265.1l-3.6 6.1M316.2 271.3l-2.7 11.5M372.8 308.9l-6.0 -7.6M366.8 301.3l-5.9 -7.6M360.9 293.8l-5.9 -8.1M354.9 285.7l-5.9 -8.0M349.0 277.7l-5.8 -7.9M343.2 269.7l-5.6 -6.7M337.6 263.0l-5.3 -4.7M332.3 258.4l-4.8 -1.4M327.5 257.0l-4.2 2.6M323.3 259.6l-3.5 6.9M319.8 266.5l-2.6 12.7M370.0 297.6l-5.9 -8.1M364.1 289.6l-5.9 -8.3M358.2 281.3l-5.9 -8.5M352.3 272.8l-5.8 -8.4M346.5 264.4l-5.6 -7.0M340.9 257.4l-5.3 -4.7M335.6 252.7l-4.7 -0.9M330.9 251.8l-4.1 3.5M326.9 255.3l-3.3 8.2M323.5 263.4l-2.3 14.6M373.0 293.3l-5.9 -8.5M367.1 284.8l-5.9 -8.6M361.2 276.2l-5.9 -8.8M355.4 267.4l-5.8 -8.7M349.6 258.7l-5.6 -7.0M344.0 251.7l-5.2 -4.3M338.9 247.4l-4.5 0.1M334.3 247.5l-3.9 4.6M330.4 252.2l-3.1 9.8M375.8 288.4l-5.9 -8.8M369.9 279.5l-5.8 -8.9M364.1 270.6l-5.8 -9.2M358.3 261.4l-5.7 -8.8M352.5 252.7l-5.5 -6.8M347.0 245.8l-5.0 -3.5M342.0 242.4l-4.3 1.9M337.7 244.2l-3.6 6.2M334.1 250.4l-2.7 12.7M378.5 282.7l-5.8 -9.1M372.6 273.6l-5.8 -9.3M366.8 264.3l-5.8 -9.4M361.0 254.9l-5.7 -8.6M355.3 246.3l-5.4 -6.3M349.9 240.0l-4.8 -2.1M345.1 237.9l-4.0 4.1M341.1 242.0l-3.3 9.0M337.9 251.0l-2.3 15.9M381.0 276.4l-5.8 -9.4M375.1 267.0l-5.8 -9.7M369.3 257.3l-5.8 -9.5M363.6 247.8l-5.6 -8.1M358.0 239.7l-5.1 -4.7M352.9 235.0l-4.4 0.7M348.4 235.7l-3.7 6.0M344.7 241.8l-2.9 12.1M389.1 278.7l-5.8 -9.4M383.3 269.3l-5.8 -9.6M377.5 259.7l-5.8 -9.9M371.7 249.8l-5.7 -9.4M366.0 240.4l-5.4 -6.8M360.6 233.6l-4.9 -2.6M355.8 231.0l-4.0 4.0M351.8 235.0l-3.3 9.1M348.4 244.1l-2.3 16.2M459.4 386.5l9.5 -3.5M391.2 271.5l-5.8 -9.8M385.5 261.7l-5.8 -9.9M379.7 251.8l-5.7 -9.9M374.0 241.9l-5.5 -8.4M368.4 233.4l-5.1 -4.8M363.3 228.6l-4.4 1.0M358.9 229.6l-3.7 6.7M355.2 236.4l-2.8 13.1M451.7 381.2l9.6 -2.0M393.3 263.4l-5.7 -9.9M387.5 253.5l-5.7 -10.1M381.8 243.4l-5.6 -9.5M376.2 233.9l-5.3 -6.6M370.9 227.4l-4.8 -1.9M366.1 225.5l-3.9 5.1M362.2 230.6l-3.2 10.5M359.0 241.1l-2.2 17.9M434.7 380.7l9.6 -4.0M444.3 376.7l9.7 -0.5M400.9 264.8l-5.7 -10.0M395.2 254.8l-5.7 -10.0M389.5 244.8l-5.7 -9.8M383.8 235.0l-5.4 -7.9M378.4 227.1l-5.0 -3.6M373.5 223.5l-4.2 2.8M369.2 226.3l-3.5 8.2M365.7 234.5l-2.7 15.1M427.3 374.9l9.8 -2.2M408.3 265.6l-5.7 -9.6M402.7 256.0l-5.7 -9.9M397.0 246.0l-5.6 -10.0M391.4 236.0l-5.5 -8.7M385.9 227.3l-5.1 -5.3M380.7 222.0l-4.5 0.7M376.3 222.7l-3.7 7.0M372.5 229.7l-3.0 12.8M420.1 370.2l9.8 -1.4M410.0 256.7l-5.6 -9.8M404.4 246.9l-5.6 -9.9M398.7 237.0l-5.5 -9.1M393.2 227.8l-5.2 -6.2M388.0 221.6l-4.7 -1.4M383.3 220.3l-3.9 5.7M379.4 226.0l-3.3 11.0M403.3 369.9l9.7 -4.2M413.0 365.7l9.9 -0.2M417.1 256.9l-5.6 -9.6M411.6 247.3l-5.6 -9.6M406.0 237.7l-5.5 -9.2M400.5 228.5l-5.3 -6.9M395.2 221.6l-4.8 -2.4M390.4 219.2l-4.1 4.2M386.3 223.4l-3.5 9.4M382.8 232.8l-2.7 16.0M396.3 364.5l9.8 -3.1M406.2 361.4l9.9 0.5M424.1 256.7l-5.5 -9.3M418.6 247.4l-5.5 -9.2M413.1 238.2l-5.5 -9.1M407.6 229.1l-5.3 -7.3M402.3 221.8l-4.9 -3.3M397.4 218.5l-4.3 2.9M393.2 221.5l-3.7 8.0M389.4 229.5l-3.0 14.4M389.5 359.2l9.9 -2.2M399.4 357.0l10.0 1.0M425.5 247.2l-5.5 -8.9M420.0 238.3l-5.4 -8.8M414.6 229.5l-5.3 -7.4M409.3 222.1l-5.0 -3.9M404.4 218.2l-4.4 1.9M400.0 220.1l-3.8 7.2M396.1 227.3l-3.2 13.2M382.8 354.1l9.9 -1.4M392.7 352.7l10.0 1.4M426.9 238.1l-5.4 -8.4M421.5 229.6l-5.3 -7.3M416.2 222.3l-5.0 -4.3M411.2 218.0l-4.5 1.2M406.7 219.2l-3.9 6.6M402.8 225.8l-3.3 12.2M376.2 349.3l9.9 -1.1M386.2 348.2l10.0 1.8M433.6 237.5l-5.3 -8.0M428.2 229.5l-5.2 -7.1M423.0 222.5l-5.0 -4.4M418.0 218.1l-4.5 0.6M413.4 218.7l-4.0 6.2M409.4 224.9l-3.5 11.3M369.7 344.5l9.9 -0.9M379.7 343.6l10.0 2.0M434.8 229.1l-5.2 -6.7M429.6 222.4l-5.0 -4.2M424.7 218.2l-4.6 0.4M420.1 218.6l-4.1 5.8M416.0 224.4l-3.6 10.7M363.4 339.6l9.9 -0.8M373.3 338.9l10.0 2.1M383.3 341.0l9.9 3.1M441.3 228.4l-5.2 -6.3M436.2 222.2l-5.0 -4.0M431.2 218.2l-4.6 0.5M426.6 218.7l-4.1 5.6M422.5 224.3l-3.7 10.4M357.1 334.8l9.9 -0.8M367.0 334.0l10.0 2.1M377.0 336.1l9.9 3.2M447.7 227.5l-5.1 -5.8M442.6 221.8l-4.9 -3.6M437.7 218.2l-4.6 0.8M433.1 219.0l-4.2 5.3M350.9 330.2l9.8 -1.2M360.8 328.9l10.0 2.0M370.8 331.0l9.9 3.3M454.0 226.4l-5.1 -5.3M448.9 221.1l-4.9 -3.0M444.0 218.2l-4.6 1.3M439.5 219.5l-4.2 5.3M344.9 325.6l9.7 -1.9M354.6 323.7l10.0 1.8M364.6 325.5l9.9 3.3M460.2 225.1l-5.0 -4.7M455.2 220.5l-4.9 -2.3M450.3 218.1l-4.5 2.0M445.8 220.1l-4.2 5.5M339.0 321.2l9.6 -2.8M348.5 318.4l9.9 1.4M358.5 319.8l9.9 3.2M368.3 323.1l9.7 3.8M466.3 223.7l-5.0 -4.1M461.3 219.6l-4.8 -1.6M456.5 218.0l-4.5 2.8M452.0 220.8l-4.2 6.0M333.1 316.8l9.5 -3.6M342.6 313.2l9.8 0.6M352.4 313.8l9.9 3.2M362.2 317.0l9.7 3.9M477.4 227.0l-5.1 -4.8M472.3 222.2l-5.0 -3.4M467.4 218.8l-4.8 -1.0M462.6 217.8l-4.5 3.7M327.5 313.8l9.1 -5.8M336.7 308.0l9.7 -0.0M346.4 308.0l9.8 2.8M356.2 310.7l9.7 3.8M365.9 314.5l9.5 4.1M483.4 225.0l-5.1 -4.3M478.3 220.7l-5.0 -2.8M473.3 217.9l-4.7 0.4M468.6 218.3l-4.5 4.1M322.2 311.7l8.8 -7.8M331.0 303.8l9.5 -1.7M340.4 302.1l9.7 2.1M350.2 304.2l9.7 3.6M359.9 307.8l9.5 3.9M489.2 223.0l-5.0 -3.6M484.2 219.4l-4.9 -1.7M479.3 217.6l-4.7 1.8M474.6 219.4l-4.5 4.5M309.4 326.6l7.5 -16.7M317.0 309.9l8.4 -10.0M325.4 299.9l9.2 -3.3M334.6 296.6l9.6 0.8M344.2 297.4l9.7 3.4M353.9 300.8l9.5 4.0M363.4 304.8l9.3 4.1M500.1 225.1l-5.1 -4.1M495.0 221.0l-5.0 -2.9M490.0 218.1l-4.9 -0.8M485.1 217.3l-4.6 3.2M305.2 330.0l6.9 -19.9M312.1 310.1l8.1 -12.1M320.2 298.0l8.8 -6.2M329.0 291.8l9.4 -0.7M338.4 291.2l9.6 2.5M347.9 293.7l9.5 3.7M357.5 297.4l9.3 3.9M505.8 222.8l-5.1 -3.4M500.7 219.3l-5.0 -2.0M495.7 217.4l-4.8 0.9M490.9 218.2l-4.6 3.6M307.6 312.0l7.6 -14.8M315.2 297.2l8.3 -9.1M323.5 288.1l9.1 -2.7M332.6 285.3l9.4 1.1M342.0 286.4l9.5 3.4M351.5 289.9l9.3 3.9M360.9 293.8l9.1 3.9M516.5 224.4l-5.1 -3.7M511.4 220.6l-5.1 -2.7M506.3 217.9l-5.0 -0.9M501.4 217.1l-4.8 2.8M303.7 316.6l6.9 -18.5M310.6 298.1l7.9 -11.4M318.5 286.7l8.6 -6.0M327.1 280.7l9.1 -0.9M336.3 279.9l9.4 2.3M345.6 282.1l9.3 3.6M354.9 285.7l9.1 3.9M364.1 289.6l8.9 3.7M522.1 221.9l-5.1 -3.1M517.0 218.9l-5.0 -1.7M511.9 217.2l-4.9 0.9M306.5 301.6l7.3 -14.8M313.8 286.8l8.1 -9.3M321.9 277.5l8.8 -3.3M330.7 274.1l9.2 0.7M339.8 274.8l9.2 2.8M349.0 277.7l9.1 3.6M358.2 281.3l8.9 3.6M367.1 284.8l8.7 3.5M532.8 223.0l-5.2 -3.3M527.6 219.8l-5.1 -2.3M522.5 217.5l-5.0 -0.5M517.4 217.0l-4.9 3.0M303.0 308.8l6.6 -19.2M309.6 289.6l7.6 -11.7M317.2 277.8l8.2 -7.2M325.4 270.6l8.8 -2.0M334.2 268.6l9.0 1.2M343.2 269.7l9.1 3.1M352.3 272.8l8.9 3.5M361.2 276.2l8.7 3.3M369.9 279.5l8.5 3.2M543.4 224.0l-5.2 -3.2M538.2 220.7l-5.2 -2.5M533.0 218.3l-5.1 -1.0M527.9 217.2l-5.0 1.8M305.9 295.6l7.0 -15.6M312.9 280.0l7.7 -10.1M320.6 269.9l8.3 -5.6M328.9 264.3l8.7 -1.3M337.6 263.0l8.9 1.4M346.5 264.4l8.9 3.0M355.4 267.4l8.7 3.2M364.1 270.6l8.5 3.0M372.6 273.6l8.3 2.8M554.1 224.7l-5.3 -3.2M548.8 221.5l-5.2 -2.5M559.4 222.2l5.2 -1.8M543.6 219.0l-5.2 -1.4M564.6 220.4l5.2 -0.7M538.4 217.6l-5.1 0.8M303.2 306.7l6.1 -21.0M309.2 285.7l7.1 -13.8M316.3 271.9l7.7 -8.9M324.1 263.0l8.2 -4.6M332.3 258.4l8.6 -0.9M340.9 257.4l8.7 1.3M349.6 258.7l8.7 2.7M358.3 261.4l8.5 2.8M366.8 264.3l8.3 2.7M375.1 267.0l8.1 2.4M383.3 269.3l8.0 2.1M543.4 224.0l5.4 -2.4M559.4 222.2l-5.3 -2.5M548.8 221.5l5.3 -1.8M554.1 219.7l-5.2 -1.5M554.1 219.7l5.2 -0.8M548.9 218.2l-5.2 0.2M306.4 296.3l6.3 -18.7M312.6 277.6l7.2 -12.5M319.8 265.1l7.7 -8.2M327.5 257.0l8.1 -4.2M335.6 252.7l8.4 -1.1M344.0 251.7l8.5 1.0M352.5 252.7l8.5 2.2M361.0 254.9l8.3 2.4M369.3 257.3l8.2 2.4M377.5 259.7l8.0 1.9M385.5 261.7l7.8 1.8M393.3 263.4l7.6 1.3M532.8 223.0l5.4 -2.3M570.0 222.8l-5.4 -2.4M538.2 220.7l5.4 -1.7M564.6 220.4l-5.3 -1.5M543.6 219.0l5.3 -0.8M548.9 218.2l5.2 0.7M309.8 288.5l6.4 -17.2M316.2 271.3l7.1 -11.7M323.3 259.6l7.6 -7.8M330.9 251.8l7.9 -4.4M338.9 247.4l8.2 -1.5M347.0 245.8l8.3 0.4M355.3 246.3l8.3 1.5M363.6 247.8l8.2 2.0M371.7 249.8l8.0 2.0M379.7 251.8l7.8 1.8M387.5 253.5l7.6 1.3M395.2 254.8l7.5 1.1M402.7 256.0l7.3 0.7M410.0 256.7l7.2 0.2M522.1 221.9l5.5 -2.2M527.6 219.8l5.4 -1.5M533.0 218.3l5.4 -0.6M538.4 217.6l5.3 0.8M313.4 282.8l6.4 -16.3M319.8 266.5l7.0 -11.3M326.9 255.3l7.5 -7.7M334.3 247.5l7.7 -5.2M342.0 242.4l7.9 -2.4M349.9 240.0l8.1 -0.2M358.0 239.7l8.0 0.7M366.0 240.4l8.0 1.5M374.0 241.9l7.8 1.5M381.8 243.4l7.7 1.4M389.5 244.8l7.5 1.2M397.0 246.0l7.4 0.8M404.4 246.9l7.2 0.4M411.6 247.3l7.1 0.1M418.6 247.4l6.9 -0.2M505.8 222.8l5.6 -2.1M511.4 220.6l5.6 -1.8M517.0 218.9l5.5 -1.4M522.5 217.5l5.5 -0.2M527.9 217.2l5.4 1.3M317.2 279.2l6.3 -15.8M323.5 263.4l6.9 -11.3M330.4 252.2l7.3 -7.9M337.7 244.2l7.4 -6.3M345.1 237.9l7.7 -2.8M352.9 235.0l7.8 -1.5M360.6 233.6l7.8 -0.1M368.4 233.4l7.7 0.5M376.2 233.9l7.7 1.1M383.8 235.0l7.5 1.1M391.4 236.0l7.4 0.9M398.7 237.0l7.2 0.8M406.0 237.7l7.1 0.5M413.1 238.2l7.0 0.1M420.0 238.3l6.8 -0.2M489.2 223.0l5.8 -2.0M495.0 221.0l5.7 -1.7M500.7 219.3l5.6 -1.4M506.3 217.9l5.6 -0.8M511.9 217.2l5.5 -0.2M517.4 217.0l5.5 2.1M321.2 278.1l6.1 -16.2M327.3 261.9l6.7 -11.5M334.1 250.4l7.1 -8.5M341.1 242.0l7.3 -6.2M348.4 235.7l7.4 -4.7M355.8 231.0l7.5 -2.4M363.3 228.6l7.5 -1.2M370.9 227.4l7.5 -0.3M378.4 227.1l7.5 0.2M385.9 227.3l7.4 0.5M393.2 227.8l7.3 0.7M400.5 228.5l7.1 0.6M407.6 229.1l7.0 0.4M414.6 229.5l6.9 0.1M421.5 229.6l6.7 -0.1M428.2 229.5l6.6 -0.4M434.8 229.1l6.5 -0.7M441.3 228.4l6.4 -0.9M447.7 227.5l6.3 -1.1M454.0 226.4l6.2 -1.3M460.2 225.1l6.1 -1.4M466.3 223.7l6.0 -1.5M472.3 222.2l5.9 -1.5M478.3 220.7l5.9 -1.4M484.2 219.4l5.8 -1.2M490.0 218.1l5.7 -0.8M495.7 217.4l5.7 -0.3M501.4 217.1l5.6 1.0M331.4 263.1l6.5 -12.2M337.9 251.0l6.8 -9.2M344.7 241.8l7.1 -6.8M351.8 235.0l7.2 -5.4M358.9 229.6l7.2 -4.1M366.1 225.5l7.3 -2.0M373.5 223.5l7.3 -1.5M380.7 222.0l7.3 -0.4M388.0 221.6l7.2 -0.0M395.2 221.6l7.1 0.2M402.3 221.8l7.0 0.3M409.3 222.1l6.9 0.3M416.2 222.3l6.8 0.1M423.0 222.5l6.7 -0.0M429.6 222.4l6.5 -0.2M436.2 222.2l6.4 -0.4M442.6 221.8l6.3 -0.6M448.9 221.1l6.2 -0.7M455.2 220.5l6.1 -0.8M461.3 219.6l6.1 -0.8M467.4 218.8l6.0 -0.9M473.3 217.9l5.9 -0.3M479.3 217.6l5.8 -0.3M485.1 217.3l5.8 0.9M490.9 218.2l5.7 1.6M335.6 266.9l6.2 -13.0M341.8 253.9l6.6 -9.8M348.4 244.1l6.8 -7.7M355.2 236.4l7.0 -5.8M362.2 230.6l7.0 -4.3M369.2 226.3l7.0 -3.6M376.3 222.7l7.1 -2.4M383.3 220.3l7.1 -1.1M390.4 219.2l7.0 -0.7M397.4 218.5l6.9 -0.4M404.4 218.2l6.9 -0.1M411.2 218.0l6.8 0.1M418.0 218.1l6.7 0.1M424.7 218.2l6.6 0.0M431.2 218.2l6.5 -0.0M437.7 218.2l6.4 0.0M444.0 218.2l6.3 -0.1M450.3 218.1l6.2 -0.1M456.5 218.0l6.1 -0.2M462.6 217.8l6.0 0.5M468.6 218.3l6.0 1.1M474.6 219.4l5.9 1.1M352.4 249.5l6.6 -8.3M359.0 241.1l6.7 -6.6M365.7 234.5l6.8 -4.8M372.5 229.7l6.9 -3.7M379.4 226.0l6.9 -2.5M386.3 223.4l6.9 -2.0M393.2 221.5l6.8 -1.4M400.0 220.1l6.8 -0.9M406.7 219.2l6.7 -0.5M413.4 218.7l6.6 -0.1M420.1 218.6l6.6 0.1M426.6 218.7l6.5 0.3M433.1 219.0l6.4 0.5M439.5 219.5l6.3 0.6M445.8 220.1l6.2 0.7M452.0 220.8l6.1 0.7M458.1 221.5l6.0 0.9M363.0 249.6l6.5 -7.1M369.5 242.5l6.6 -5.5M376.1 237.0l6.7 -4.2M382.8 232.8l6.7 -3.3M389.4 229.5l6.7 -2.2M396.1 227.3l6.7 -1.5M402.8 225.8l6.6 -0.9M409.4 224.9l6.6 -0.5M416.0 224.4l6.5 -0.2M422.5 224.3l6.4 0.1M428.9 224.4l6.3 0.5M435.3 224.8l6.3 0.8" stroke="rgb(248, 222, 208)" stroke-width="1" fill="none"/><path d="M330.1 330.5l-5.6 -3.0M324.5 327.6l-5.3 -1.5M319.2 326.1l-5.1 -0.8M410.4 375.5l-7.1 -5.6M403.3 369.9l-7.0 -5.4M339.0 321.2l-5.8 -4.3M333.1 316.8l-5.6 -3.0M327.5 313.8l-5.4 -2.2M322.2 311.7l-5.2 -1.8M442.2 386.8l-7.5 -6.0M467.2 392.8l-7.8 -6.3M442.2 386.8l9.6 -5.6M417.7 382.5l9.5 -7.6M410.4 375.5l9.7 -5.2M380.0 367.4l9.5 -8.2M373.3 361.5l9.5 -7.4M432.3 246.7l-5.4 -8.6M366.7 356.0l9.5 -6.7M438.9 245.7l-5.4 -8.2M360.2 350.8l9.5 -6.4M445.5 244.5l-5.3 -7.8M440.1 236.7l-5.3 -7.6M353.9 346.1l9.5 -6.4M451.9 242.9l-5.3 -7.4M446.6 235.5l-5.3 -7.1M347.7 341.6l9.4 -6.9M458.2 241.1l-5.3 -6.9M453.0 234.2l-5.2 -6.6M341.7 337.6l9.2 -7.4M464.4 239.0l-5.2 -6.4M459.2 232.6l-5.2 -6.2M335.8 333.9l9.1 -8.2M470.6 236.8l-5.2 -5.9M465.4 230.9l-5.2 -5.8M322.0 346.5l8.1 -15.9M330.1 330.5l8.9 -9.4M476.6 234.6l-5.2 -5.5M471.5 229.0l-5.1 -5.3M316.8 345.5l7.7 -17.9M324.5 327.6l8.6 -10.8M482.6 232.3l-5.2 -5.3M319.2 326.1l8.3 -12.3M488.5 229.9l-5.1 -4.9M314.1 325.3l8.1 -13.6M499.5 232.3l-5.2 -4.7M494.3 227.5l-5.1 -4.5M505.3 229.7l-5.2 -4.5M510.9 227.0l-5.2 -4.2M521.8 228.5l-5.2 -4.2M527.3 225.7l-5.2 -3.8M538.0 226.8l-5.2 -3.8M527.3 225.7l5.5 -2.7M505.3 229.7l5.7 -2.7M510.9 227.0l5.6 -2.6M516.5 224.4l5.6 -2.4M425.5 247.2l6.8 -0.6M432.3 246.7l6.7 -0.9M476.6 234.6l6.0 -2.3M482.6 232.3l5.9 -2.3M488.5 229.9l5.8 -2.4M494.3 227.5l5.8 -2.4M500.1 225.1l5.7 -2.3M426.9 238.1l6.7 -0.6M433.6 237.5l6.6 -0.9M440.1 236.7l6.5 -1.1M446.6 235.5l6.4 -1.4M453.0 234.2l6.3 -1.6M459.2 232.6l6.2 -1.7M465.4 230.9l6.1 -1.9M471.5 229.0l6.0 -2.0M477.4 227.0l5.9 -2.0M483.4 225.0l5.8 -2.0" stroke="rgb(249, 227, 214)" stroke-width="1" fill="none"/><path d="M345.2 359.3l-6.1 -4.2M339.1 355.1l-5.9 -3.7M333.2 351.4l-5.7 -3.1M380.0 367.4l-6.8 -5.9M373.3 361.5l-6.6 -5.5M366.7 356.0l-6.5 -5.1M360.2 350.8l-6.3 -4.8M353.9 346.1l-6.2 -4.4M347.7 341.6l-6.0 -4.1M341.7 337.6l-5.9 -3.7M335.8 333.9l-5.7 -3.3M417.7 382.5l-7.3 -7.0M394.0 380.4l9.3 -10.5M386.9 373.7l9.4 -9.2M357.8 369.4l8.9 -13.4M351.4 364.1l8.8 -13.2M345.2 359.3l8.7 -13.2M339.1 355.1l8.6 -13.4M333.2 351.4l8.5 -13.8M327.4 348.2l8.4 -14.3" stroke="rgb(250, 231, 221)" stroke-width="1" fill="none"/><path d="M394.0 380.4l-7.0 -6.7M386.9 373.7l-6.9 -6.3M364.4 375.3l8.9 -13.8" stroke="rgb(251, 235, 227)" stroke-width="1" fill="none"/><path d="M214.3 511.8C214.7 509.9 216.7 507.7 216.9 500.7C217.0 493.7 216.4 483.7 215.0 469.8C213.7 455.9 211.3 437.6 208.6 417.4C205.9 397.1 202.5 373.6 198.8 348.3C195.1 323.0 189.7 289.6 186.4 265.4C183.1 241.2 180.5 220.0 178.9 203.2C177.3 186.5 177.0 175.4 176.8 165.0C176.6 154.6 176.9 146.2 177.7 140.8C178.6 135.5 180.2 133.3 182.0 132.7C183.9 132.2 186.4 134.9 188.9 137.7C191.5 140.4 194.2 144.6 197.1 149.3C199.9 154.0 203.0 160.0 206.0 165.7C209.0 171.5 212.1 177.9 215.1 184.0C218.1 190.0 221.0 195.6 224.0 202.1C227.0 208.6 230.2 216.1 233.2 222.7C236.2 229.4 239.2 236.0 242.0 242.1C244.8 248.2 247.6 253.8 250.2 259.3C252.9 264.8 255.5 269.8 258.0 274.9C260.6 279.9 263.1 284.7 265.5 289.4C268.0 294.1 270.4 298.6 272.7 303.1C275.1 307.6 277.6 312.8 279.7 316.3C281.9 319.9 283.8 321.8 285.8 324.3C287.7 326.8 289.7 329.2 291.6 331.5C293.5 333.8 295.4 336.0 297.2 338.2C299.1 340.4 300.9 342.6 302.7 344.6C304.6 346.7 306.3 348.6 308.1 350.6C309.9 352.5 311.6 354.3 313.4 356.2C315.1 358.0 316.8 359.8 318.5 361.5C320.2 363.2 321.9 364.9 323.5 366.4C325.1 367.9 326.7 369.1 328.3 370.4C329.9 371.7 331.5 372.9 333.0 374.2C334.6 375.4 336.1 376.7 337.7 377.7C339.2 378.8 340.7 379.8 342.1 380.5C343.6 381.2 345.0 381.5 346.4 381.9C347.8 382.4 349.2 382.8 350.6 383.2C351.9 383.7 353.3 384.1 354.7 384.5C356.1 384.9 357.5 385.6 358.8 385.7C360.1 385.7 361.3 385.2 362.6 384.9C363.8 384.6 365.1 384.2 366.3 383.9C367.6 383.5 368.8 383.2 370.0 382.8C371.3 382.5 372.5 382.1 373.7 381.8C374.9 381.5 376.2 381.3 377.4 381.1C378.6 380.8 379.8 380.6 381.1 380.3C382.3 380.1 383.5 380.0 384.7 379.6C385.9 379.2 387.0 378.7 388.2 377.9C389.3 377.2 390.4 376.0 391.5 375.1C392.7 374.2 393.8 373.2 394.9 372.3C396.0 371.3 397.1 370.7 398.2 369.4C399.3 368.2 400.3 366.3 401.3 364.8C402.4 363.2 403.4 361.6 404.5 360.0C405.5 358.4 406.5 356.9 407.6 355.2C408.6 353.5 409.6 351.8 410.6 350.1C411.6 348.3 412.6 346.4 413.6 344.5C414.6 342.7 415.6 340.8 416.6 338.9C417.6 337.0 418.6 335.1 419.6 333.2C420.6 331.3 421.6 329.4 422.6 327.4C423.6 325.4 424.6 323.6 425.6 321.3C426.5 319.0 427.5 316.3 428.4 313.7C429.3 311.1 430.3 308.6 431.2 305.9C432.2 303.3 433.1 300.6 434.0 297.8C435.0 295.0 435.9 292.1 436.8 289.2C437.7 286.2 438.6 283.3 439.6 280.3C440.5 277.3 441.4 274.2 442.3 271.1C443.2 268.0 444.2 264.9 445.1 261.7C446.0 258.6 446.9 255.3 447.8 252.1C448.7 248.9 449.6 245.6 450.6 242.5C451.5 239.3 452.4 236.5 453.4 233.4C454.3 230.2 455.2 226.9 456.1 223.5C457.1 220.2 458.0 216.8 458.9 213.3C459.8 209.7 460.7 206.0 461.6 202.2C462.5 198.5 463.4 194.6 464.3 190.8C465.2 186.9 466.1 182.9 467.1 179.3C468.0 175.6 468.9 172.3 469.8 168.7C470.8 165.2 471.7 161.2 472.6 157.9C473.6 154.6 474.6 151.6 475.5 149.0C476.5 146.3 477.5 144.3 478.5 141.9C479.5 139.6 480.5 137.0 481.5 134.8C482.5 132.7 483.5 130.6 484.5 129.0C485.5 127.4 486.5 125.8 487.6 125.1C488.6 124.3 489.7 123.6 490.8 124.5C491.9 125.4 493.0 126.9 494.2 130.3C495.3 133.7 496.5 138.9 497.8 144.9C499.0 150.9 500.2 157.2 501.5 166.2C502.8 175.2 504.1 187.5 505.4 198.9C506.7 210.2 508.0 221.6 509.3 234.3C510.6 247.0 512.0 263.4 513.2 275.2C514.4 287.0 515.5 296.4 516.6 305.0C517.8 313.5 518.8 321.1 519.8 326.5C520.8 332.0 522.2 335.7 522.7 337.6M904.9 458.5C904.9 454.8 904.3 445.8 904.7 436.0C905.2 426.2 906.3 413.0 907.5 399.8C908.6 386.5 909.9 372.5 911.6 356.6C913.2 340.7 915.9 320.2 917.4 304.6C918.9 289.0 919.8 275.9 920.6 263.0C921.5 250.0 922.4 236.8 922.5 226.9C922.7 217.1 922.1 210.3 921.5 203.8C920.9 197.3 920.1 191.7 918.9 187.9C917.8 184.1 916.2 182.2 914.5 180.9C912.9 179.5 910.9 179.7 909.0 179.8C907.0 180.0 904.9 180.9 902.8 181.9C900.7 182.9 898.6 184.3 896.4 185.8C894.3 187.3 892.1 189.2 889.9 190.8C887.7 192.4 885.6 193.8 883.5 195.7C881.3 197.6 879.1 199.9 876.8 202.4C874.5 204.9 872.2 208.0 869.9 210.7C867.6 213.5 865.4 216.0 863.2 218.9C860.9 221.8 858.6 224.9 856.4 228.0C854.1 231.0 851.9 234.0 849.7 237.0C847.5 239.9 845.3 242.9 843.2 245.7C841.1 248.4 839.0 251.0 836.9 253.6C834.8 256.2 832.8 258.8 830.7 261.2C828.7 263.6 826.8 265.6 824.8 268.0C822.8 270.4 820.8 273.0 818.9 275.5C816.9 278.0 814.9 280.5 813.0 283.0C811.1 285.4 809.2 287.8 807.3 290.2C805.4 292.6 803.5 295.0 801.6 297.3C799.8 299.6 797.9 301.9 796.1 304.2C794.3 306.5 792.5 308.8 790.7 310.9C788.9 313.1 787.1 315.1 785.4 317.1C783.7 319.1 782.0 321.0 780.3 323.0C778.6 324.9 776.8 327.0 775.2 328.7C773.6 330.3 772.0 331.5 770.4 332.8C768.8 334.1 767.3 335.4 765.7 336.6C764.2 337.9 762.6 339.2 761.1 340.4C759.6 341.6 758.1 342.8 756.6 344.0C755.1 345.3 753.6 346.5 752.1 347.6C750.6 348.8 749.2 349.8 747.7 350.8C746.3 351.8 744.8 352.7 743.4 353.6C742.0 354.5 740.6 355.4 739.2 356.3C737.8 357.2 736.4 358.5 735.0 359.0C733.7 359.5 732.4 359.2 731.2 359.4C729.9 359.5 728.6 359.6 727.3 359.7C726.1 359.8 724.8 360.2 723.5 360.1C722.3 359.9 721.1 359.5 719.9 358.9C718.7 358.4 717.6 357.4 716.4 356.6C715.3 355.9 714.1 355.1 713.0 354.3C711.9 353.6 710.7 352.8 709.6 352.1C708.4 351.4 707.3 350.7 706.1 350.1C705.0 349.5 703.9 348.8 702.7 348.2C701.6 347.6 700.4 347.0 699.3 346.3C698.2 345.6 697.1 345.2 696.0 344.1C694.9 343.0 693.9 341.1 692.8 339.6C691.8 338.1 690.8 336.6 689.7 335.1C688.7 333.6 687.7 332.1 686.6 330.6C685.6 329.1 684.5 327.8 683.5 326.1C682.5 324.3 681.5 322.2 680.5 320.1C679.6 318.0 678.6 315.7 677.6 313.5C676.6 311.3 675.7 309.1 674.7 306.8C673.7 304.6 672.7 302.5 671.8 300.2C670.8 297.8 669.9 295.2 668.9 292.7C667.9 290.2 667.0 287.6 666.0 285.1C665.1 282.5 664.1 280.0 663.2 277.4C662.2 274.9 661.3 272.3 660.3 269.7C659.4 267.1 658.4 264.4 657.5 261.8C656.5 259.1 655.6 256.4 654.6 253.8C653.7 251.1 652.7 248.4 651.8 245.6C650.8 242.9 649.9 240.6 649.0 237.1C648.0 233.6 647.2 228.8 646.3 224.7C645.4 220.6 644.6 216.6 643.7 212.5C642.8 208.4 641.9 204.3 641.0 200.2C640.1 196.0 639.2 191.9 638.3 187.6C637.4 183.3 636.5 178.9 635.6 174.4C634.7 169.9 633.9 165.0 633.0 160.3C632.1 155.6 631.2 150.5 630.3 146.1C629.4 141.7 628.4 137.9 627.5 133.9C626.6 129.9 625.6 125.8 624.7 122.1C623.7 118.4 622.8 114.7 621.8 111.7C620.8 108.7 619.8 106.2 618.8 104.3C617.8 102.5 616.8 100.7 615.7 100.7C614.6 100.6 613.5 101.5 612.3 104.1C611.2 106.7 610.0 110.8 608.8 116.2C607.6 121.6 606.4 127.1 605.1 136.5C603.8 145.8 602.4 157.3 601.0 172.2C599.6 187.1 598.1 208.3 596.7 226.0C595.3 243.8 593.9 261.6 592.6 278.6C591.3 295.6 590.0 313.3 588.8 327.8C587.6 342.3 586.4 356.8 585.3 365.7C584.3 374.7 582.9 378.8 582.5 381.4" stroke="#f6f6f6" stroke-width="1.1" fill="none"/></svg>
<div style="position:absolute;left:1222px;top:355px;font-family:'Liberation Sans',sans-serif;font-size:17px;color:#000;-webkit-text-stroke:0.9px #8080e0;white-space:nowrap;line-height:18px;transform:rotate(9deg)">0.125</div>
<div style="position:absolute;left:1207px;top:411px;font-family:'Liberation Sans',sans-serif;font-size:17px;color:#000;-webkit-text-stroke:0.9px #8080e0;white-space:nowrap;line-height:18px;transform:rotate(9deg)">0</div>
<div style="position:absolute;left:1190px;top:472px;font-family:'Liberation Sans',sans-serif;font-size:17px;color:#000;-webkit-text-stroke:0.9px #8080e0;white-space:nowrap;line-height:18px;transform:rotate(9deg)">-0.125</div>
<div style="position:absolute;left:1433.5px;top:126.5px;width:607.0px;height:587.0px;background:#efefef;"></div>
<svg style="position:absolute;left:1380px;top:110px" width="780" height="660"><rect x="55.5" y="67.6" width="552.3" height="535.2" fill="#000"/><defs><clipPath id="disk"><ellipse cx="331.6" cy="335.2" rx="272.7" ry="264.3"/></clipPath><filter id="cblur" x="-5%" y="-5%" width="110%" height="110%"><feGaussianBlur stdDeviation="2.0"/></filter></defs><g clip-path="url(#disk)"><g filter="url(#cblur)"><ellipse cx="331.6" cy="335.2" rx="275.7" ry="267.3" fill="#000014"/><path d="" fill="#000014" fill-rule="evenodd"/><path d="M62 395L65 391L61 388L61 373L59 370L58 333L57 326L53 326L53 370L57 373L57 391L62 395Z" fill="#000014" fill-rule="evenodd"/><path d="M76 431L73 427L73 420L70 417L69 406L66 402L60 362L58 323L57 318L53 318L53 326L57 326L58 333L59 370L61 373L61 388L65 391L61 396L61 406L65 409L65 417L68 420L68 427L72 431L72 434L76 431ZM326 69L340 69L341 66L324 66L324 69L326 69Z" fill="#000014" fill-rule="evenodd"/><path d="M248 594L251 594L252 590L248 590L244 587L233 587L236 590L244 590L248 594ZM80 448L82 446L80 442L80 438L78 435L71 413L64 380L61 359L61 333L58 312L57 309L53 309L53 318L57 318L59 333L60 359L64 388L66 391L66 402L69 406L70 417L73 420L73 427L76 431L72 434L72 438L76 442L76 446L79 448L80 448ZM311 69L330 71L352 70L358 69L359 66L341 66L340 69L333 70L324 69L324 66L310 66L310 69L311 69Z" fill="#000018" fill-rule="evenodd"/><path d="M296 605L320 605L320 601L300 600L292 597L277 596L274 593L263 592L259 589L251 588L229 581L218 576L215 581L218 583L221 583L225 587L244 587L248 590L252 590L251 594L255 594L259 598L270 598L274 601L292 601L296 605ZM87 461L87 456L85 453L84 446L82 442L74 417L66 388L63 359L60 312L57 300L54 300L53 309L57 309L58 315L61 333L62 370L67 399L78 435L80 438L80 442L82 446L79 448L80 453L83 456L83 460L85 462L87 461ZM371 73L376 73L376 69L371 69L367 66L359 66L358 69L333 71L310 69L310 66L296 66L295 67L295 69L304 71L330 72L363 71L371 73Z" fill="#00002e" fill-rule="evenodd"/><path d="M322 605L367 605L371 601L389 601L393 598L404 598L408 594L416 594L419 590L427 590L429 589L428 587L419 586L416 590L404 590L401 593L389 594L386 596L371 597L363 599L311 599L281 595L263 590L221 577L218 575L210 573L203 568L199 572L203 576L207 576L210 579L214 579L215 581L218 576L221 579L225 579L229 581L251 588L259 589L263 592L274 593L277 596L294 598L300 600L320 601L320 605L322 605ZM93 474L95 473L95 467L92 464L92 460L89 456L81 435L74 413L67 384L63 351L60 301L62 297L61 292L57 291L57 297L54 300L57 300L60 312L63 359L66 388L74 417L82 442L84 446L85 453L87 456L88 460L85 462L87 464L87 467L91 471L91 474L93 474ZM509 131L510 131L509 129L508 131L509 131ZM513 128L511 127L513 128ZM389 77L393 76L394 73L389 69L376 69L376 73L371 73L363 71L330 72L304 71L295 69L295 67L292 69L280 69L281 73L285 73L360 73L386 74L389 77Z" fill="#000045" fill-rule="evenodd"/><path d="M304 598L330 600L363 599L371 597L386 596L389 594L401 593L404 590L416 590L419 586L428 587L429 589L431 587L438 587L442 583L446 583L444 579L438 579L434 582L412 588L382 595L348 598L319 598L300 596L263 589L214 573L203 567L199 567L195 564L192 564L188 561L185 561L183 564L188 569L192 569L195 572L199 572L203 568L210 573L218 575L221 577L255 588L281 595L304 598ZM101 485L102 482L85 442L70 395L66 373L64 351L62 290L61 283L57 282L57 291L61 292L62 297L60 301L63 355L70 399L83 442L89 456L92 460L92 464L95 467L95 473L92 475L98 482L98 485L100 487L101 485ZM602 292L606 291L606 279L602 275L602 265L599 261L599 254L595 250L595 248L591 250L594 254L594 265L597 272L599 281L601 283L602 292ZM524 146L528 147L530 144L513 128L509 127L498 116L494 116L492 115L491 116L492 120L494 121L505 132L524 146ZM508 131L509 129L510 131L508 131ZM404 80L410 80L412 76L408 76L404 73L394 73L393 76L389 77L386 74L360 73L289 74L281 73L280 69L274 69L270 73L266 73L267 76L274 77L277 75L304 74L363 74L401 78L404 80Z" fill="#00006b" fill-rule="evenodd"/><path d="M315 598L348 598L382 595L412 588L434 582L438 579L444 579L446 583L449 579L453 579L457 576L460 576L462 574L460 572L453 572L449 575L416 585L375 594L348 597L311 596L281 592L255 586L214 571L184 559L177 554L169 554L177 561L180 561L183 564L185 561L188 561L192 564L195 564L199 567L203 567L214 573L251 586L277 593L315 598ZM109 497L110 493L107 489L107 485L99 471L84 438L71 395L67 373L65 348L63 283L65 279L65 275L61 274L57 279L57 282L61 283L62 290L64 351L66 373L70 395L85 442L102 482L102 485L100 487L106 493L106 496L108 498L109 497ZM606 318L610 318L610 301L606 297L606 291L602 292L601 283L598 279L597 272L594 265L594 254L591 250L595 248L595 243L591 239L590 231L587 232L587 239L599 286L602 301L604 304L606 318ZM543 165L546 162L546 160L530 144L528 147L524 146L505 132L494 121L492 120L491 116L492 115L487 109L483 109L474 102L472 105L475 109L479 111L543 165ZM419 84L428 84L429 82L427 80L419 80L416 76L412 76L410 80L404 80L401 78L356 74L300 74L277 75L274 77L267 76L266 73L259 73L255 76L252 76L253 80L259 81L263 78L300 75L356 75L386 78L416 83L419 84Z" fill="#0000a2" fill-rule="evenodd"/><path d="M292 594L333 597L375 594L416 585L449 575L453 572L460 572L462 574L464 572L468 572L472 569L475 569L478 566L475 562L468 564L464 567L434 578L386 592L352 596L315 596L281 591L244 581L199 564L169 548L158 541L155 544L165 554L177 554L184 559L229 577L266 589L292 594ZM119 507L121 503L112 493L88 446L78 417L72 395L67 370L65 348L65 315L66 275L65 266L61 265L61 274L65 275L65 279L63 283L65 348L67 373L71 395L84 438L110 493L110 496L108 498L117 507L117 510L119 507ZM606 351L610 351L610 318L606 318L604 304L602 301L599 286L587 239L587 232L590 231L587 228L587 225L584 221L584 218L581 215L578 218L579 225L582 228L590 254L602 304L605 326L606 351ZM554 181L557 183L560 181L557 178L557 174L546 163L546 162L543 165L479 111L475 109L472 105L474 102L472 102L468 98L464 98L460 95L457 95L454 92L453 95L455 98L479 114L516 143L553 178L554 181ZM438 91L444 91L446 88L442 87L438 84L431 84L429 82L428 84L419 84L416 83L386 78L360 75L300 75L263 78L259 81L253 80L252 76L248 76L244 80L238 80L239 84L244 84L248 82L259 82L292 77L315 76L356 76L401 81L434 89L438 91Z" fill="#0004d3" fill-rule="evenodd"/><path d="M300 594L341 596L363 595L386 592L434 578L464 567L468 564L475 562L478 566L483 561L487 561L492 556L490 554L487 554L479 559L442 574L397 588L356 595L319 595L292 592L274 589L236 578L195 560L169 546L158 538L154 538L147 532L141 534L151 543L155 544L158 541L184 556L225 575L266 588L300 594ZM128 519L129 514L114 493L89 446L78 417L73 399L68 370L66 344L66 301L68 268L70 265L68 258L65 257L65 261L61 265L65 266L66 275L65 315L65 348L67 370L72 395L79 420L92 453L112 493L121 503L117 511L127 521L128 519ZM599 397L602 398L602 395L606 391L606 373L610 370L610 351L606 351L604 319L600 294L586 243L582 228L579 225L578 218L581 215L580 214L580 210L576 207L576 203L572 200L572 196L565 189L565 185L560 181L557 183L554 181L553 178L516 143L479 114L455 98L453 95L454 92L453 91L449 91L446 88L444 91L438 91L434 89L386 79L345 76L292 77L259 82L248 82L244 84L239 84L238 80L236 80L233 84L225 84L221 87L219 87L221 91L225 91L229 88L233 88L236 86L281 79L307 77L348 76L382 79L416 86L449 96L479 115L498 129L533 160L563 192L565 197L568 200L569 203L572 207L572 210L577 221L589 254L596 283L601 308L604 333L604 359L603 366L602 370L602 388L599 391L599 397Z" fill="#001ce5" fill-rule="evenodd"/><path d="M307 594L330 595L352 595L375 592L397 588L442 574L479 559L487 554L490 554L492 556L494 554L498 554L507 545L505 543L501 543L494 548L457 567L431 577L404 585L367 593L326 594L300 592L277 589L236 577L195 559L151 533L139 524L131 514L107 478L90 446L76 406L70 377L67 348L67 301L71 265L70 254L72 250L68 249L65 254L65 257L68 258L70 265L68 268L66 301L66 344L68 370L72 391L78 417L89 446L114 493L129 514L129 518L127 521L141 534L147 532L180 553L218 571L248 581L270 588L307 594ZM586 447L587 442L591 438L591 431L595 427L595 420L599 417L599 409L602 406L602 398L599 397L598 391L602 388L602 370L604 362L604 337L601 308L597 286L585 243L574 214L572 210L572 207L569 203L568 200L539 166L525 152L483 118L449 96L427 89L393 81L348 76L296 77L236 86L233 88L229 88L225 91L221 91L219 87L218 87L214 91L210 91L207 95L203 95L201 96L203 100L210 96L218 96L221 93L236 89L270 82L296 78L348 77L389 81L423 89L449 99L483 119L524 152L548 178L560 192L569 207L584 243L596 286L601 319L602 362L598 388L592 417L590 420L590 427L587 431L587 435L583 438L584 446L586 447Z" fill="#0034f6" fill-rule="evenodd"/><path d="M319 594L341 594L367 593L408 584L457 567L494 548L501 543L505 543L507 545L509 543L513 543L522 535L519 532L516 532L483 553L464 562L438 574L416 581L375 591L333 594L292 590L274 587L248 580L203 562L184 552L158 535L139 522L109 478L90 442L76 403L70 370L67 341L68 301L72 268L73 254L74 250L73 243L76 239L76 233L73 232L72 239L68 243L68 249L72 250L70 254L71 265L67 297L66 319L68 359L72 388L79 417L90 446L107 478L128 511L139 524L151 533L184 553L210 566L236 577L270 587L292 591L319 594ZM554 498L555 499L557 496L557 493L565 485L565 482L572 474L572 471L576 467L576 464L580 460L580 456L584 453L584 449L586 447L584 446L583 438L587 435L587 431L590 427L600 377L602 359L602 333L600 308L596 286L582 236L565 200L538 167L520 149L498 131L464 107L449 99L434 93L393 82L348 77L292 79L266 82L236 89L221 93L218 96L210 96L203 100L201 96L199 98L195 98L192 102L188 102L183 106L185 109L188 109L192 106L195 106L199 104L203 103L210 99L244 89L270 83L296 79L348 78L389 82L431 93L445 98L457 104L494 129L518 149L537 167L563 200L578 228L587 257L595 286L599 308L601 330L600 366L597 388L590 417L581 442L571 464L568 467L567 471L564 474L563 478L554 489L552 496L554 498Z" fill="#0054ff" fill-rule="evenodd"/><path d="M292 590L319 593L345 593L371 591L397 586L431 576L457 566L483 553L516 532L519 532L522 535L546 511L546 507L555 499L552 496L554 489L563 478L564 474L567 471L568 467L571 464L581 442L590 417L597 388L600 366L601 341L600 315L597 297L584 247L574 221L563 200L547 178L526 156L510 142L479 118L457 104L442 97L419 89L393 83L367 79L341 78L307 78L277 82L255 86L229 93L207 101L203 103L199 104L195 106L192 106L188 109L185 109L183 106L180 109L177 109L169 116L165 116L169 120L173 117L177 117L184 112L188 112L192 109L233 93L259 86L285 81L311 79L348 79L371 80L397 85L419 90L445 99L479 119L509 142L528 159L545 178L562 200L573 221L584 248L593 283L597 304L600 330L600 355L596 384L593 402L585 427L572 456L560 478L540 507L526 522L513 532L483 551L460 563L416 580L378 589L337 593L300 591L262 583L214 566L180 548L143 522L119 493L102 465L87 434L76 399L69 355L68 323L69 301L76 255L76 243L79 239L79 236L82 232L82 228L85 225L85 218L91 210L91 207L94 203L90 201L87 203L87 207L83 210L83 214L80 218L80 221L76 225L76 228L73 232L76 233L76 239L73 243L74 250L73 254L72 268L68 308L68 348L70 373L76 402L83 426L95 452L109 478L139 522L173 545L203 562L229 573L259 583L292 590Z" fill="#007cff" fill-rule="evenodd"/><path d="M300 591L326 593L352 592L378 589L404 583L438 573L460 563L483 551L509 535L524 524L536 511L560 478L582 435L589 417L596 388L599 362L600 341L599 319L596 297L591 274L582 243L573 221L562 200L545 178L528 159L509 142L479 119L445 99L419 90L389 83L367 80L341 79L304 79L274 83L248 89L225 96L192 109L188 112L184 112L177 117L173 117L169 120L165 116L154 127L151 127L149 129L151 131L158 131L169 123L218 100L248 90L270 85L296 81L319 80L356 80L382 83L408 88L438 98L453 104L472 115L494 131L520 152L538 171L554 190L565 207L576 231L584 254L595 294L599 322L599 348L597 373L592 399L585 424L574 449L563 471L548 493L523 522L493 543L468 558L427 576L386 587L345 592L304 590L265 583L222 569L186 550L149 525L139 516L121 493L106 470L95 449L79 409L74 388L71 366L69 344L69 312L75 265L81 239L89 218L94 210L94 207L97 203L97 200L100 196L100 192L107 185L107 181L113 174L109 171L106 174L106 178L98 185L98 189L91 196L91 200L90 201L94 203L91 207L91 210L85 218L85 225L82 228L82 232L79 236L79 239L76 243L76 255L71 283L68 315L68 349L71 377L77 402L87 434L98 458L112 482L130 507L143 522L169 541L192 555L220 569L250 579L276 587L300 591Z" fill="#00aaff" fill-rule="evenodd"/><path d="M307 591L333 592L363 590L387 587L415 579L445 569L468 558L490 545L516 527L530 514L548 493L571 456L581 435L588 413L597 373L599 351L599 326L596 301L591 279L584 251L575 228L565 207L553 189L535 168L516 150L489 127L468 113L445 101L430 95L404 87L378 82L352 80L315 80L292 81L266 86L236 93L210 103L169 123L158 131L151 131L149 129L117 160L117 163L109 171L113 174L107 181L107 185L100 192L100 196L97 200L97 203L94 207L94 210L91 214L81 239L72 283L69 312L69 344L72 373L76 396L83 421L95 448L109 474L124 498L141 518L149 525L174 543L199 558L222 569L252 579L281 587L307 591ZM313 590L285 587L263 581L234 572L208 561L188 550L165 536L143 518L132 506L117 486L102 461L91 438L80 407L74 380L70 355L70 323L71 297L79 254L86 232L113 178L123 167L122 163L136 149L133 145L136 144L139 145L154 134L158 134L203 108L229 97L248 91L277 84L304 81L341 80L367 82L389 85L415 91L442 100L459 109L483 124L510 145L529 163L546 182L562 203L569 216L580 243L587 265L593 290L597 315L598 341L597 366L593 388L587 412L580 433L569 456L557 476L543 496L524 518L513 528L491 543L466 558L443 569L412 579L386 586L363 589L337 591L313 590Z" fill="#00dfff" fill-rule="evenodd"/><path d="M315 590L345 591L371 588L399 583L423 576L451 565L473 554L497 540L521 522L535 506L550 487L561 470L573 449L588 409L594 384L597 362L598 337L596 308L591 283L584 254L576 233L565 209L543 178L522 156L497 134L475 119L453 105L437 98L415 91L386 84L363 82L341 80L304 81L277 84L248 91L229 97L203 108L158 134L154 134L139 145L136 144L133 145L136 149L122 163L123 167L113 178L86 232L82 243L76 267L71 301L70 326L71 359L74 384L80 407L91 438L102 461L117 486L132 506L143 518L166 536L188 551L214 564L234 572L266 582L289 587L315 590ZM291 587L263 581L236 572L210 561L190 550L167 536L145 518L131 503L117 484L102 459L91 436L82 413L76 388L72 359L71 326L72 297L76 272L82 247L94 218L108 192L132 160L132 156L143 145L147 145L192 116L214 105L240 95L266 88L288 84L315 81L348 81L375 84L396 87L423 95L443 102L464 113L486 127L513 149L528 163L546 184L561 205L572 227L580 246L590 283L594 304L597 326L597 348L595 370L591 391L585 417L576 439L565 461L554 480L539 500L522 518L489 543L464 558L442 568L419 576L393 583L367 588L341 590L315 589L291 587ZM322 370L330 371L337 369L343 362L346 351L346 344L342 337L333 327L326 323L313 326L308 330L305 337L305 344L309 355L315 364L322 370Z" fill="#03edf6" fill-rule="evenodd"/><path d="M292 587L319 590L345 590L371 587L395 583L420 576L449 565L471 554L489 543L522 518L539 500L554 480L565 461L576 439L585 417L591 391L595 370L597 348L597 326L594 304L590 283L580 246L572 227L561 205L546 184L528 163L513 149L486 127L464 113L443 102L423 95L396 87L375 84L348 81L315 81L288 84L266 88L240 95L214 105L192 116L147 145L143 145L132 156L132 160L108 192L94 218L82 247L76 272L72 297L71 326L72 359L76 388L82 413L91 436L102 459L117 484L131 503L145 518L167 536L190 550L210 561L236 572L266 582L292 587ZM297 587L266 581L239 572L213 561L192 550L169 536L146 518L121 488L106 464L94 442L83 414L77 391L72 359L71 330L72 306L76 278L82 250L88 236L98 213L113 189L141 152L160 138L181 124L207 109L233 98L256 91L277 86L307 83L341 82L367 84L391 87L419 95L440 102L460 112L479 124L507 145L523 160L543 181L557 201L565 214L576 239L584 262L591 294L595 317L596 341L595 362L591 387L584 416L576 436L565 459L554 477L539 498L524 514L492 540L469 554L446 565L417 576L397 581L371 586L348 589L322 589L297 587ZM311 403L319 404L330 403L337 401L345 396L352 388L357 380L362 370L364 359L364 348L362 337L358 326L352 314L345 304L337 297L331 294L322 291L315 291L304 294L289 304L278 319L273 337L273 348L274 359L281 377L289 387L296 394L311 403ZM321 370L315 364L309 355L305 344L305 337L308 330L313 326L326 323L333 327L342 337L346 344L346 351L343 362L337 369L330 371L321 370Z" fill="#06f3ec" fill-rule="evenodd"/><path d="M300 587L326 589L352 588L378 585L404 580L431 571L454 561L475 550L498 536L516 522L528 510L543 493L558 471L569 452L580 427L587 403L592 380L595 359L596 337L595 315L591 290L583 261L576 239L565 214L554 196L539 177L519 156L494 135L473 120L448 105L431 98L407 91L382 86L356 83L322 82L296 84L272 87L244 94L223 102L200 113L177 126L141 152L113 189L98 214L87 237L80 257L75 283L72 312L72 344L74 373L79 399L87 424L95 442L109 470L124 493L139 511L151 522L174 540L198 554L221 565L250 576L277 583L300 587ZM305 587L281 583L255 576L232 569L207 558L182 543L161 529L144 514L128 496L113 475L98 448L87 422L80 398L76 377L73 348L72 319L75 290L80 265L85 247L95 223L106 202L121 180L139 158L153 145L172 131L196 116L218 105L240 97L266 90L289 86L315 83L348 83L375 86L402 91L427 98L445 106L468 118L490 133L514 152L532 171L550 192L561 210L572 232L580 253L587 280L592 301L594 326L595 348L592 373L587 398L580 423L572 441L561 463L547 485L531 504L518 518L500 532L479 547L452 561L427 571L401 579L378 584L352 587L330 588L305 587ZM307 421L319 422L330 422L341 418L352 412L362 402L369 391L375 377L377 362L377 348L375 330L370 315L363 301L355 290L345 282L333 276L322 273L311 273L300 276L289 281L277 290L270 300L264 312L260 323L258 337L257 351L259 363L263 377L270 392L277 401L286 409L296 416L307 421ZM310 402L300 397L293 391L281 377L274 359L273 348L273 337L278 319L289 304L304 294L315 291L322 291L331 294L337 297L345 304L352 314L358 326L362 337L364 348L364 359L362 370L357 380L352 388L345 396L337 401L330 403L319 404L310 402Z" fill="#0ceee3" fill-rule="evenodd"/><path d="M307 587L333 588L360 587L385 583L412 576L434 569L460 557L485 543L505 529L520 516L535 500L550 480L565 456L576 432L583 413L592 373L595 348L594 326L592 301L587 280L580 253L572 232L561 210L550 192L532 171L514 152L490 133L468 118L445 106L427 98L402 91L375 86L348 83L315 83L289 86L266 90L240 97L218 105L196 116L172 131L153 145L139 158L121 180L106 202L95 223L85 247L80 265L75 290L72 319L73 348L76 377L80 398L87 422L98 448L113 475L128 496L144 514L161 529L182 543L207 558L232 569L255 576L281 583L307 587ZM318 587L292 584L270 579L245 572L217 561L196 550L173 536L150 518L136 503L121 484L106 460L95 438L83 408L78 388L75 362L73 330L74 308L77 283L83 256L91 236L98 219L112 196L128 173L143 156L160 142L180 127L206 113L230 102L252 95L274 89L300 85L322 84L356 85L379 87L408 94L433 102L449 109L469 120L490 135L516 156L533 174L548 192L560 210L571 232L580 257L587 285L591 308L593 333L593 355L590 377L586 399L579 420L569 446L557 467L543 488L527 507L512 522L493 536L470 550L449 561L421 572L397 579L371 584L345 587L318 587ZM311 439L322 440L337 438L352 431L363 422L374 409L382 395L386 380L389 362L389 344L385 323L380 304L371 288L360 274L348 265L333 258L322 256L311 257L296 261L281 270L270 281L261 294L254 308L249 323L247 341L247 359L250 373L257 391L265 406L274 417L285 427L298 435L311 439ZM306 420L296 416L286 409L277 401L270 392L263 377L259 363L257 351L258 337L260 323L264 312L270 300L277 290L289 281L300 276L311 273L322 273L333 276L345 282L355 290L363 302L370 315L375 333L377 351L377 366L373 380L369 391L362 402L352 412L341 418L330 422L319 422L306 420Z" fill="#12e8db" fill-rule="evenodd"/><path d="M319 587L345 587L371 584L397 579L421 572L449 561L470 550L493 536L512 522L527 507L543 488L557 467L569 446L579 420L586 399L590 377L593 355L593 333L591 308L587 285L580 257L571 232L560 210L548 192L533 174L516 156L490 135L469 120L449 109L433 102L408 94L379 87L356 85L322 84L300 85L274 89L252 95L230 102L206 113L180 127L160 142L143 156L128 173L112 196L98 219L91 236L83 256L77 283L74 308L73 330L75 362L78 388L83 408L95 438L106 460L121 484L136 503L150 518L173 536L196 550L217 561L245 572L270 579L292 584L319 587ZM294 583L260 576L238 569L212 558L192 547L170 532L147 514L132 497L121 482L106 458L95 435L87 416L80 389L76 362L75 330L76 301L80 277L87 250L95 230L106 208L121 185L147 155L167 138L189 124L209 113L234 102L256 95L289 88L315 85L345 85L371 87L392 91L419 98L439 105L460 116L483 131L506 149L524 166L539 182L554 203L562 218L572 240L580 261L588 294L591 317L592 337L591 360L588 384L581 409L575 427L565 450L554 470L539 491L524 508L510 522L490 536L468 550L445 562L418 572L392 579L367 584L341 586L319 586L294 583ZM304 450L322 452L337 451L352 446L367 436L379 424L389 409L396 391L400 373L401 351L399 330L393 305L386 286L376 272L363 259L348 250L330 245L315 244L300 247L285 254L270 265L259 277L248 294L240 315L237 330L236 351L239 370L244 389L251 405L262 420L274 433L289 443L304 450ZM309 438L296 434L285 427L273 417L262 402L255 388L249 370L247 355L247 337L250 319L255 304L263 290L274 277L285 268L300 260L311 257L326 257L341 261L352 268L364 279L374 294L382 311L387 330L389 348L389 366L385 384L380 399L371 413L361 424L348 433L337 438L322 440L309 438Z" fill="#1bdecf" fill-rule="evenodd"/><path d="M296 583L322 586L345 586L371 583L392 579L418 572L445 562L468 550L491 536L510 522L524 508L539 491L554 470L565 450L575 427L581 409L588 384L591 360L592 337L591 315L587 291L580 261L572 240L562 218L554 203L539 182L522 163L502 145L478 127L460 116L439 105L419 98L389 90L367 87L341 85L311 86L285 88L256 95L234 102L209 113L189 124L167 138L147 155L121 185L106 208L95 230L87 250L80 277L76 301L75 330L76 362L80 389L87 416L95 435L106 458L121 482L132 497L147 514L170 532L192 547L212 558L238 569L274 579L296 583ZM302 583L280 579L252 572L223 561L201 550L177 536L158 522L143 508L128 490L113 468L98 441L91 424L83 400L79 377L76 347L76 318L79 290L83 267L91 243L102 218L113 199L128 178L147 157L180 131L205 116L228 105L248 98L277 91L303 87L322 86L352 87L375 89L402 95L426 102L444 109L464 120L486 134L508 152L527 171L543 189L557 210L565 226L576 254L584 280L588 301L590 326L590 348L588 373L584 396L576 420L569 439L557 460L544 482L528 502L516 514L493 532L471 547L451 558L424 569L401 576L378 581L352 584L326 585L302 583ZM300 460L319 463L337 462L356 457L371 447L386 432L397 415L405 395L410 373L411 348L409 323L403 301L393 279L381 261L365 247L348 237L330 232L311 232L296 236L277 245L263 257L250 272L239 290L232 308L228 330L227 351L230 373L236 395L244 412L255 429L267 442L283 453L300 460ZM302 449L289 443L274 433L262 420L251 405L244 389L239 370L236 351L237 330L240 315L248 294L259 277L270 265L285 254L300 247L315 244L330 245L348 250L363 259L376 272L386 286L393 305L399 330L401 351L400 373L396 391L389 409L379 424L367 436L352 446L337 451L319 452L302 449Z" fill="#2dc5b0" fill-rule="evenodd"/><path d="M304 583L330 585L352 584L378 581L401 576L424 569L451 558L477 543L498 529L516 514L531 497L546 478L558 460L569 439L576 420L584 396L589 370L590 348L590 326L588 301L583 279L576 254L565 226L555 207L539 185L523 167L504 149L481 131L458 116L436 105L415 98L386 91L367 88L341 86L311 87L285 90L261 95L237 102L212 113L192 124L170 138L148 156L136 169L121 188L106 211L95 234L87 253L81 279L78 297L76 319L76 348L79 380L83 400L91 424L102 448L117 474L132 495L147 512L162 525L183 540L208 554L232 565L252 572L280 579L304 583ZM317 583L289 580L270 576L245 569L218 558L197 547L175 532L151 514L139 502L124 483L109 459L95 430L87 410L83 391L79 366L77 341L78 312L80 290L87 259L95 238L102 222L113 202L128 181L143 163L159 149L178 134L201 120L223 109L253 98L277 92L300 89L322 88L352 88L378 91L397 95L422 102L448 113L473 127L493 142L514 160L531 178L546 197L557 214L569 238L576 258L584 286L587 308L589 333L589 355L585 380L580 404L565 443L554 464L539 486L520 507L505 522L486 536L462 550L439 561L420 569L396 576L371 581L345 583L317 583ZM311 471L333 471L352 468L369 460L386 448L399 431L410 409L417 388L420 362L420 337L416 311L408 286L396 265L382 247L363 232L345 224L326 221L304 222L285 229L266 240L252 254L238 272L229 290L222 312L218 337L219 362L223 384L230 406L242 427L255 443L272 456L292 466L311 471ZM300 460L283 453L267 442L255 429L244 412L236 395L230 373L227 351L228 330L232 308L239 290L250 272L263 257L277 245L296 236L311 232L330 232L348 237L365 247L381 261L393 279L403 301L409 323L411 348L410 373L405 395L397 415L386 432L371 447L356 457L337 462L319 463L300 460Z" fill="#3eac92" fill-rule="evenodd"/><path d="M319 583L348 583L371 581L396 576L420 569L448 558L468 547L491 532L509 518L524 503L539 485L554 464L565 443L580 404L585 380L589 355L589 333L587 308L584 286L576 258L569 238L557 214L546 197L531 178L514 160L493 142L473 127L448 113L422 102L397 95L378 91L352 88L322 88L300 89L277 92L253 98L223 109L201 120L178 134L159 149L143 163L128 181L113 202L102 222L95 238L87 259L80 290L78 312L77 341L79 366L83 391L87 410L95 430L109 459L124 483L139 502L151 514L175 532L197 547L218 558L245 569L270 576L292 580L319 583ZM295 579L276 576L250 569L222 558L200 547L177 532L158 518L143 504L128 486L113 463L98 435L91 417L83 389L80 362L79 330L80 307L83 282L91 253L98 234L109 212L121 194L136 175L151 159L171 142L192 127L212 116L237 105L259 98L289 92L315 89L341 89L367 91L389 94L417 102L437 109L458 120L476 131L495 145L516 163L531 180L546 200L557 218L569 242L576 263L584 294L587 319L588 337L587 355L584 381L576 409L569 431L557 454L546 472L531 492L516 509L502 522L483 536L459 550L436 561L416 569L390 576L367 580L341 582L319 582L295 579ZM311 478L333 479L356 474L375 466L393 452L407 435L418 413L426 388L429 362L428 333L423 304L415 279L403 257L386 237L367 222L348 214L326 210L304 211L285 217L265 228L248 243L233 262L220 286L213 312L209 337L210 362L214 388L224 413L236 433L251 450L269 464L289 473L311 478ZM311 471L292 466L272 456L255 443L242 427L230 406L223 384L219 362L218 337L222 312L229 290L238 272L252 254L266 240L285 229L304 222L326 221L345 224L363 232L382 247L396 265L408 286L416 311L420 337L420 362L417 388L410 409L399 431L386 448L369 460L352 468L333 471L311 471Z" fill="#4d9579" fill-rule="evenodd"/><path d="M296 580L341 582L367 580L390 576L416 569L436 561L459 550L483 536L502 522L516 509L531 492L546 472L557 454L569 431L576 409L584 381L587 355L588 337L587 319L584 294L576 263L569 242L557 218L546 200L531 180L516 163L495 145L476 131L458 120L437 109L417 102L389 94L367 91L341 89L315 89L289 92L259 98L237 105L212 116L192 127L171 142L151 159L136 175L121 194L109 212L98 234L91 253L83 282L80 307L79 330L80 362L83 389L91 417L98 435L113 463L128 486L143 504L158 518L177 532L200 547L222 558L250 569L276 576L296 580ZM309 579L284 576L255 569L235 561L211 550L191 540L165 522L151 509L136 493L124 478L109 453L98 432L91 413L84 384L82 362L81 330L82 308L83 294L91 261L98 240L106 224L117 204L132 183L149 163L165 149L185 134L209 120L233 109L253 102L283 95L307 91L356 91L398 98L422 105L448 116L467 127L488 142L510 160L528 179L539 192L554 215L565 238L572 257L580 284L584 305L586 333L584 362L580 389L572 416L565 434L554 456L543 474L528 494L512 511L495 525L474 540L455 550L431 561L411 569L382 576L357 579L333 580L309 579ZM319 485L341 484L365 478L386 467L404 452L417 435L428 413L435 384L438 355L436 323L429 294L419 268L404 243L387 225L367 211L345 203L322 200L300 203L277 210L255 224L236 242L220 265L209 290L203 315L200 344L202 373L209 399L221 424L236 445L255 463L274 474L296 482L319 485ZM310 478L289 473L269 464L250 449L235 431L222 409L214 388L210 362L209 337L213 312L220 286L233 262L248 243L265 228L285 217L304 211L326 210L348 214L367 222L386 237L403 257L415 279L423 304L428 333L429 362L426 388L418 413L407 435L393 452L375 466L356 474L333 479L310 478Z" fill="#5c805e" fill-rule="evenodd"/><path d="M311 580L357 579L382 576L411 569L431 561L455 550L480 536L499 522L515 507L531 489L546 469L557 450L569 426L576 404L581 384L585 359L586 333L584 305L580 284L572 257L565 238L554 215L539 192L528 179L510 160L488 142L467 127L448 116L422 105L398 98L381 95L352 91L326 91L304 92L283 95L253 102L233 109L209 120L185 134L165 149L149 163L132 183L117 204L106 224L98 240L91 261L83 294L81 312L81 341L82 366L86 395L91 413L98 432L113 460L124 478L139 497L152 511L170 525L191 540L218 554L244 565L268 572L311 580ZM296 576L276 572L250 565L223 554L202 543L179 529L159 514L147 503L132 485L117 463L102 435L95 419L89 399L85 377L83 344L83 318L87 288L95 259L102 239L113 216L124 198L139 179L154 163L175 145L195 131L215 120L239 109L261 102L296 95L319 93L345 93L368 95L389 98L416 105L435 113L457 124L475 134L494 149L513 166L528 182L543 201L554 220L565 243L572 264L580 295L584 337L580 378L576 395L569 419L557 445L546 465L531 486L516 503L500 518L481 532L458 547L435 558L416 565L390 572L371 576L341 578L296 576ZM300 489L326 492L352 489L375 481L398 467L416 449L430 427L439 406L445 377L446 344L442 308L432 275L419 249L401 225L382 209L360 198L333 192L307 193L285 198L263 208L240 225L221 246L208 268L197 297L192 326L192 359L196 384L203 406L217 431L236 456L255 471L275 482L300 489ZM317 485L292 481L270 472L251 460L233 442L219 420L207 395L202 370L200 341L203 312L210 286L223 261L238 239L258 221L277 210L300 203L326 200L348 204L371 213L389 227L407 247L420 268L430 297L436 326L438 359L434 388L428 413L417 435L403 453L386 467L365 478L341 484L317 485Z" fill="#6d6b43" fill-rule="evenodd"/><path d="M296 576L322 578L345 578L371 576L390 572L416 565L443 554L464 543L486 529L516 503L531 486L546 465L557 445L569 419L576 395L580 377L583 351L583 330L580 297L576 277L569 253L561 235L550 213L539 196L524 177L503 156L485 142L463 127L443 116L416 105L389 98L368 95L345 93L319 93L297 95L276 98L250 105L230 113L208 124L184 138L165 152L151 166L136 183L121 204L109 223L98 248L91 271L87 290L83 318L83 348L85 377L89 399L95 419L102 435L117 463L132 485L147 503L159 514L179 529L202 543L223 554L250 565L276 572L296 576ZM327 576L290 572L272 569L248 561L229 554L207 543L183 529L163 514L147 500L136 487L124 471L102 431L95 413L91 399L88 377L86 330L88 301L91 290L92 279L100 254L107 236L121 210L136 189L164 160L180 145L195 135L221 120L248 109L289 99L319 96L341 95L374 98L393 102L418 109L436 116L458 127L476 138L495 152L516 173L543 206L554 226L565 251L576 290L580 318L580 348L576 380L572 398L565 421L557 438L546 459L535 476L520 495L504 511L487 525L465 540L445 550L419 561L377 572L348 575L327 576ZM307 496L333 497L360 493L386 483L408 467L428 446L441 424L449 399L454 370L454 333L449 301L439 268L424 239L406 218L386 201L360 189L333 184L304 185L276 192L255 203L233 221L214 243L201 268L191 297L185 330L185 359L190 388L199 413L214 438L233 461L244 471L255 478L277 489L307 496ZM299 489L274 481L251 468L233 452L214 427L201 402L194 377L191 351L192 323L197 297L208 268L221 246L240 225L263 208L285 198L311 192L337 193L363 200L384 210L404 228L420 250L434 279L442 308L446 344L445 377L439 406L430 427L416 449L398 467L375 481L352 489L326 492L299 489Z" fill="#80541f" fill-rule="evenodd"/><path d="M330 576L348 575L377 572L408 565L429 558L452 547L471 536L487 525L508 507L524 490L539 471L550 453L561 430L569 410L576 382L580 341L580 318L576 290L565 251L554 226L543 206L528 186L513 169L495 152L476 138L458 127L436 116L418 109L393 102L374 98L337 95L319 96L289 99L248 109L221 120L195 135L180 145L160 163L136 189L126 203L111 228L103 247L92 279L91 291L88 297L86 333L88 377L91 399L95 413L102 431L124 471L136 487L151 504L173 522L195 536L214 547L238 558L259 565L289 572L330 576ZM319 572L296 571L277 567L251 560L233 553L203 538L180 523L155 503L143 492L126 467L111 442L98 417L95 406L89 366L88 333L89 308L93 283L101 257L108 239L119 218L131 200L145 181L177 151L192 140L218 125L240 115L263 107L300 100L333 98L363 100L386 103L412 110L431 117L453 128L487 150L522 185L541 210L549 225L559 247L567 268L575 304L576 333L575 366L570 391L564 413L557 431L542 460L523 485L506 503L487 521L460 539L442 549L423 557L404 563L367 571L337 573L319 572ZM304 500L330 502L356 499L368 496L386 489L410 474L429 456L445 432L456 406L462 377L463 341L459 304L449 268L435 239L416 214L393 196L371 185L360 181L341 178L311 178L285 183L270 189L256 196L233 213L212 236L197 261L186 290L180 323L179 355L185 388L194 413L209 438L229 463L248 479L274 492L304 500ZM307 496L277 489L255 478L244 471L233 461L214 438L199 413L190 388L185 359L185 330L191 297L201 268L214 243L233 221L255 203L276 192L304 185L333 184L360 189L386 201L406 218L424 239L439 268L449 301L454 333L454 370L449 399L441 424L428 446L408 467L386 483L360 493L333 497L307 496Z" fill="#904103" fill-rule="evenodd"/><path d="M322 573L367 571L389 567L412 561L449 545L472 532L487 521L506 503L523 485L542 460L557 431L564 413L570 391L575 366L576 333L575 304L567 268L559 247L549 225L541 210L522 185L487 150L453 128L431 117L412 110L386 103L363 100L333 98L300 100L263 107L240 115L218 125L192 140L177 151L145 181L131 200L119 218L108 239L101 257L93 283L89 308L88 333L89 366L95 406L98 417L111 442L126 467L143 492L155 503L180 523L203 538L233 553L251 560L277 567L296 571L322 573ZM295 569L266 563L244 555L225 548L199 534L173 516L162 506L144 489L130 471L104 424L96 402L93 388L90 362L89 333L90 308L94 286L101 261L109 240L121 218L132 201L147 182L162 166L178 152L199 137L218 127L240 117L281 104L304 101L330 100L360 101L382 104L412 112L431 120L453 131L471 142L490 156L506 171L520 186L535 207L546 225L557 247L564 268L569 286L572 308L574 333L573 359L569 384L557 424L547 446L536 464L510 496L494 512L475 526L453 540L431 551L412 558L386 566L363 569L341 571L319 571L295 569ZM300 504L330 506L360 503L389 493L414 478L434 460L453 435L464 408L471 377L473 341L468 301L458 265L443 236L423 211L401 193L375 180L345 173L315 172L285 178L258 189L233 206L211 228L194 254L182 283L175 315L173 348L177 377L185 406L199 431L221 461L244 481L270 495L300 504ZM300 500L274 492L247 478L226 460L206 435L192 409L183 380L179 351L181 319L188 286L199 257L215 232L236 210L259 194L285 183L311 178L341 178L360 181L371 185L393 196L416 214L435 239L449 268L459 304L463 341L462 377L456 406L445 432L429 456L410 474L386 489L368 496L353 500L326 502L300 500Z" fill="#934714" fill-rule="evenodd"/><path d="M296 569L319 571L341 571L363 569L386 566L412 558L431 551L453 540L475 526L494 512L510 496L536 464L547 446L557 424L569 384L573 359L574 333L572 308L569 286L564 268L557 247L546 225L535 207L520 186L506 171L490 156L471 142L453 131L431 120L412 112L382 104L360 101L330 100L304 101L281 104L240 117L218 127L199 137L177 153L158 170L143 186L128 207L117 225L105 250L98 272L93 294L90 319L89 344L90 366L96 402L104 424L111 438L130 471L141 485L173 516L210 540L233 551L251 558L277 565L296 569ZM306 569L282 565L259 559L240 553L219 543L200 532L178 518L162 505L146 489L134 474L121 453L109 431L101 413L94 384L91 362L90 337L91 312L95 290L101 265L109 242L120 221L132 203L147 184L162 168L180 152L200 138L221 126L245 116L268 109L289 105L311 102L337 101L360 103L379 105L407 113L427 120L450 131L468 142L488 156L503 171L520 189L533 207L546 228L556 250L563 272L568 294L571 315L572 341L570 362L567 384L560 409L552 431L543 449L531 467L516 487L501 503L484 518L463 532L444 543L423 553L401 560L381 565L356 569L330 570L306 569ZM300 507L330 510L360 507L389 497L418 482L439 464L458 438L472 409L479 377L481 341L477 301L468 268L460 250L452 236L432 210L408 191L393 182L378 175L348 168L333 167L315 167L285 172L255 185L229 202L207 225L190 250L176 283L169 315L167 348L172 380L181 409L196 435L219 464L240 483L255 492L270 499L300 507ZM299 503L281 499L266 493L240 478L221 460L199 431L185 406L177 377L173 344L176 312L184 279L196 250L214 225L236 203L263 186L289 177L319 172L348 173L378 181L405 196L427 215L445 240L453 254L460 272L469 304L473 344L470 380L464 409L453 435L434 460L414 478L389 493L360 503L330 506L299 503Z" fill="#964d25" fill-rule="evenodd"/><path d="M307 569L330 570L356 569L381 565L401 560L423 553L444 543L463 532L484 518L501 503L516 487L531 467L543 449L552 431L560 409L567 384L570 362L572 341L571 315L568 294L563 272L556 250L546 228L533 207L520 189L503 171L488 156L468 142L450 131L427 120L404 112L379 105L356 102L330 101L307 102L284 105L259 112L236 120L214 130L195 142L177 155L159 171L143 188L128 208L117 227L106 251L98 274L94 294L91 315L90 344L92 370L97 399L101 413L109 431L121 453L134 474L146 489L162 505L178 518L200 532L219 543L240 553L259 559L282 565L307 569ZM289 565L272 561L248 554L222 543L203 533L180 518L165 506L151 492L136 474L124 456L109 430L98 399L94 373L92 344L92 323L95 297L98 279L106 255L117 230L128 210L139 195L157 174L173 159L192 145L210 134L231 124L249 116L274 109L292 105L322 103L345 103L371 106L389 109L413 116L438 127L459 138L475 149L494 164L511 181L526 200L537 218L549 239L557 261L563 283L567 304L569 326L569 351L566 377L561 399L554 420L544 442L534 460L521 478L506 496L490 511L471 525L453 537L433 547L415 554L389 562L367 566L337 568L315 568L289 565ZM300 511L333 513L367 509L397 498L425 482L449 460L467 435L480 406L488 373L490 337L485 297L474 261L459 232L438 207L426 196L410 185L397 178L380 171L348 163L319 162L285 168L255 179L239 189L225 199L203 221L184 249L177 264L170 283L163 315L162 348L166 377L176 409L191 435L217 467L237 485L251 494L266 501L283 507L300 511ZM298 507L266 497L251 490L238 482L218 463L194 431L180 406L170 373L167 344L169 312L177 279L192 247L210 221L232 200L259 183L289 171L319 167L348 168L378 175L393 182L408 191L432 210L452 236L460 250L468 268L477 301L481 341L479 377L472 409L458 438L439 464L418 482L389 497L360 507L330 510L298 507Z" fill="#975530" fill-rule="evenodd"/><path d="M292 565L319 568L341 568L371 565L389 562L415 554L433 547L453 537L471 525L490 511L506 496L521 478L534 460L544 442L554 420L561 399L566 377L569 351L569 326L567 304L563 283L557 261L549 239L537 218L526 200L511 181L494 164L475 149L459 138L438 127L413 116L389 109L371 106L345 103L322 103L292 105L274 109L249 116L231 124L210 134L192 145L173 159L157 174L139 195L128 210L117 230L106 255L98 279L95 297L92 323L92 344L94 373L98 399L109 430L124 456L136 474L151 492L165 506L180 518L203 533L222 543L248 554L272 561L292 565ZM300 565L274 560L252 554L233 547L210 536L188 522L169 508L152 493L139 477L128 460L113 435L105 417L98 395L95 373L93 344L94 319L96 297L100 279L106 257L114 239L125 218L139 197L154 179L171 163L189 149L210 135L226 127L251 117L274 111L296 107L322 104L348 105L371 107L395 113L416 119L435 127L455 138L475 151L490 163L505 178L520 196L533 214L543 232L551 250L558 272L566 308L566 341L565 368L561 388L554 413L546 433L536 453L524 471L510 489L496 503L478 518L457 532L438 542L419 550L398 558L371 564L348 566L326 567L300 565ZM304 515L337 517L371 512L403 500L431 483L455 460L474 435L482 420L489 402L496 370L498 333L497 315L493 294L481 257L465 228L453 214L442 202L415 181L385 167L367 162L348 158L319 157L300 160L284 163L251 176L236 185L222 196L197 221L178 250L164 283L157 315L156 348L162 379L173 412L189 438L214 469L236 489L255 500L270 506L304 515ZM299 511L266 501L251 494L237 485L225 476L214 464L189 431L175 406L165 373L161 344L163 312L172 275L185 247L203 221L216 207L229 196L244 186L258 178L289 167L322 162L352 164L368 167L386 173L401 180L416 189L430 200L441 210L461 236L475 265L486 301L490 341L487 377L479 409L465 438L446 464L423 483L408 493L394 500L363 510L330 513L299 511Z" fill="#975d39" fill-rule="evenodd"/><path d="M304 565L326 567L352 566L371 564L398 558L419 550L438 542L460 530L479 517L496 503L510 489L524 471L536 453L546 433L554 413L561 388L565 366L566 341L566 308L558 272L551 250L543 232L531 212L518 192L502 174L486 160L467 145L449 134L427 124L407 116L389 111L363 106L341 105L315 105L292 107L266 113L243 120L225 128L206 138L184 152L166 167L154 179L139 197L124 219L113 241L106 259L98 286L95 308L93 337L94 366L97 391L101 406L108 424L117 442L132 467L143 482L156 496L173 511L193 525L218 540L240 550L263 557L304 565ZM321 565L292 562L274 559L257 554L233 545L210 534L188 520L169 507L154 493L131 464L117 439L106 416L99 391L97 377L95 326L98 297L102 279L109 254L117 237L127 218L139 199L154 181L169 167L188 152L209 138L230 127L248 120L273 113L292 109L319 106L341 106L367 109L387 113L412 120L430 127L452 138L474 152L490 166L506 181L520 200L534 221L545 243L552 261L557 282L561 303L563 323L563 351L561 373L556 395L550 417L543 436L532 456L520 473L505 491L490 506L475 518L453 533L432 543L412 551L391 558L371 562L345 565L321 565ZM304 518L337 520L356 518L374 514L404 503L434 485L448 474L462 460L474 446L483 431L491 417L498 399L506 366L507 330L502 294L497 275L490 257L473 228L451 203L435 189L419 178L389 163L371 158L352 154L333 153L319 153L300 155L282 160L263 167L248 174L220 192L194 218L174 247L160 279L152 315L150 333L151 348L158 380L169 413L177 427L187 442L214 474L236 493L266 508L285 514L304 518ZM300 514L281 510L263 503L236 489L214 469L184 431L177 419L169 403L159 370L156 341L158 312L166 279L172 261L180 245L200 218L214 203L226 192L255 174L285 163L319 157L333 157L352 159L386 167L416 182L430 192L443 203L456 218L467 232L482 261L489 279L494 297L497 315L498 337L496 373L489 402L482 420L474 435L464 449L452 464L427 485L412 495L397 503L367 512L333 517L300 514Z" fill="#986642" fill-rule="evenodd"/><path d="M322 565L345 565L371 562L391 558L415 550L432 543L453 532L475 518L493 503L507 489L520 473L532 456L543 436L550 417L556 395L561 373L563 351L563 323L561 303L557 282L552 261L545 243L534 221L520 200L506 181L490 166L474 152L452 138L430 127L412 120L387 113L367 109L341 106L319 106L292 109L273 113L248 120L230 127L209 138L188 152L169 167L154 181L139 199L127 218L117 237L109 254L102 279L98 297L95 326L97 377L99 391L106 416L117 439L131 464L154 493L169 507L188 520L210 534L233 545L257 554L274 559L296 563L322 565ZM299 561L278 558L252 550L233 543L211 532L188 518L169 505L154 491L140 474L113 429L106 413L102 400L98 377L97 351L98 319L100 297L104 279L110 257L121 233L132 213L147 193L162 176L180 160L195 149L212 138L235 127L254 120L282 113L307 109L326 108L349 109L376 113L415 124L440 134L459 145L475 156L492 171L505 185L519 203L530 221L541 243L549 265L554 286L557 307L559 326L558 355L555 380L545 420L538 438L528 458L516 475L502 493L490 503L472 518L450 532L436 540L397 554L382 558L352 562L326 563L299 561ZM307 522L326 523L345 523L363 520L382 515L416 502L445 482L474 453L488 435L496 420L512 384L518 351L519 333L518 319L514 297L508 279L494 247L473 218L445 191L419 173L404 165L386 158L352 150L333 149L319 149L285 155L266 161L248 169L218 189L192 214L171 243L156 275L149 301L146 319L145 337L146 351L149 366L158 395L171 424L192 453L217 482L240 499L256 507L274 514L307 522ZM302 518L285 514L266 508L236 493L214 474L187 442L177 427L169 413L158 380L151 348L150 333L152 315L160 279L174 247L194 218L220 192L248 174L263 167L282 160L300 155L319 153L333 153L352 154L371 158L389 163L419 178L435 189L451 203L473 228L490 257L497 275L502 294L507 330L506 366L498 399L491 417L483 431L474 446L462 460L448 474L434 485L404 503L371 515L337 520L302 518Z" fill="#996f50" fill-rule="evenodd"/><path d="M300 561L326 563L352 562L382 558L397 554L436 540L450 532L472 518L490 503L502 493L516 475L528 458L538 438L545 420L555 380L558 355L559 326L557 307L554 286L549 265L541 243L530 221L519 203L505 185L492 171L475 156L459 145L440 134L415 124L376 113L349 109L326 108L307 109L282 113L254 120L235 127L212 138L195 149L180 160L162 176L147 193L132 213L121 233L110 257L104 279L100 297L98 319L97 351L98 377L102 400L106 413L113 429L140 474L154 491L169 505L188 518L211 532L233 543L252 550L278 558L300 561ZM289 558L263 552L238 543L215 532L196 522L180 511L162 496L147 481L136 465L112 424L106 408L102 391L100 370L100 323L102 301L105 283L113 257L120 239L128 224L141 203L154 187L169 171L188 156L204 145L224 134L251 124L277 116L296 113L341 112L360 113L382 117L406 124L427 131L447 142L465 152L480 163L494 178L507 192L519 210L532 232L540 250L546 271L549 286L551 312L550 333L552 362L550 388L546 405L539 427L531 446L520 464L507 482L494 496L463 522L430 540L412 547L386 555L367 558L337 561L315 560L289 558ZM311 525L330 527L345 526L363 523L382 519L416 506L434 495L451 482L484 449L507 417L523 384L537 337L537 333L530 304L515 265L501 239L476 210L442 181L413 163L378 150L345 144L330 144L307 146L289 149L270 155L236 171L208 192L180 221L170 236L159 254L151 272L146 290L139 326L138 337L142 359L161 413L174 435L203 470L225 492L251 508L281 520L311 525ZM306 522L289 518L270 513L240 499L217 482L192 452L171 424L158 395L149 366L146 351L145 337L146 319L149 301L156 275L171 243L192 214L218 189L248 169L266 161L285 155L319 149L333 149L352 150L386 158L404 165L419 173L445 191L473 218L494 247L508 279L514 297L518 319L519 333L518 351L512 384L496 420L488 435L474 453L445 482L431 493L412 503L378 517L360 521L341 523L306 522Z" fill="#9a785d" fill-rule="evenodd"/><path d="M292 558L319 561L341 561L367 558L386 555L412 547L430 540L463 522L494 496L507 482L520 464L531 446L539 427L546 405L550 388L552 362L550 333L551 312L549 286L546 271L540 250L532 232L519 210L507 192L494 178L480 163L465 152L447 142L425 131L406 124L379 116L341 112L296 113L277 116L251 124L224 134L204 145L188 156L169 171L154 187L141 203L128 224L120 239L113 257L105 283L102 301L100 323L100 370L102 391L106 408L112 424L139 471L151 485L166 500L184 514L207 528L230 540L248 547L272 554L292 558ZM314 558L296 556L268 550L244 543L227 536L206 525L178 507L162 494L147 478L136 464L117 429L109 414L106 402L102 370L105 308L108 286L113 266L121 245L129 228L139 210L151 195L166 178L183 163L203 149L221 139L240 131L261 124L281 119L304 116L326 115L352 116L386 121L416 130L445 144L472 161L493 181L512 207L525 236L528 245L528 249L520 247L512 236L482 207L445 177L416 159L386 147L352 140L333 139L319 139L281 147L248 160L229 171L214 181L199 194L180 214L167 232L156 250L140 286L133 315L131 337L141 370L158 413L165 427L207 479L221 493L236 504L259 515L285 524L311 529L337 530L363 527L386 522L408 514L431 502L454 485L485 456L500 438L531 397L535 396L539 398L538 409L535 427L531 436L524 452L512 471L494 493L478 507L460 520L427 538L393 550L356 557L314 558ZM310 525L277 518L248 506L225 492L203 470L174 435L161 413L142 359L138 337L139 326L142 304L147 286L153 268L161 250L172 232L183 218L210 190L240 169L274 154L292 149L311 145L330 144L348 145L382 151L416 165L442 181L476 210L501 239L515 265L530 304L537 333L537 337L523 384L505 420L481 453L449 484L434 495L416 506L382 519L363 523L345 526L330 527L310 525Z" fill="#9b816b" fill-rule="evenodd"/><path d="M315 558L356 557L393 550L427 538L460 520L478 507L494 493L512 471L524 452L531 436L535 427L538 409L539 398L535 396L531 397L500 438L485 456L454 485L431 502L408 514L386 522L363 527L337 530L311 529L285 524L259 515L236 504L221 493L207 479L165 427L158 413L141 370L131 337L133 315L140 286L156 250L167 232L180 214L199 194L214 181L229 171L248 160L281 147L319 139L333 139L352 140L386 147L416 159L445 177L482 207L512 236L520 247L528 249L528 245L525 236L512 207L493 181L472 161L445 144L416 130L386 121L352 116L326 115L304 116L281 119L261 124L240 131L221 139L203 149L183 163L166 178L151 195L139 210L129 228L121 245L113 266L108 286L105 308L102 370L106 402L109 414L117 429L136 464L147 478L162 494L178 507L206 525L227 536L244 543L268 550L296 556L315 558ZM306 554L281 551L259 545L236 537L214 526L192 514L171 500L155 485L143 470L113 418L109 406L106 392L107 359L109 343L112 333L110 308L112 286L117 267L124 247L133 228L144 210L157 192L169 179L199 155L218 144L239 134L277 123L296 120L311 119L363 122L382 125L408 132L432 142L452 152L477 171L489 185L498 200L494 201L487 198L464 184L438 164L419 154L397 144L375 138L348 133L330 132L300 137L274 144L248 155L218 173L199 189L171 218L153 243L140 268L130 297L120 333L159 424L166 435L199 475L218 495L236 508L259 519L285 528L315 533L341 534L371 530L404 520L427 509L445 497L464 482L516 433L520 432L523 435L520 446L513 464L494 489L472 508L445 525L412 541L377 550L345 555L306 554Z" fill="#9c8878" fill-rule="evenodd"/><path d="M307 554L345 555L377 550L412 541L445 525L472 508L494 489L513 464L520 446L523 435L520 432L516 433L464 482L445 497L427 509L404 520L371 530L341 534L315 533L285 528L259 519L236 508L218 495L199 475L166 435L159 424L120 333L130 297L140 268L153 243L171 218L199 189L218 173L248 155L274 144L300 137L330 132L348 133L375 138L397 144L419 154L438 164L464 184L487 198L494 201L498 200L489 185L477 171L452 152L432 142L408 132L382 125L363 122L311 119L296 120L277 123L239 134L218 144L199 155L169 179L157 192L144 210L133 228L124 247L117 267L112 286L110 308L112 333L109 343L107 359L106 392L109 406L113 418L143 470L155 485L171 500L192 514L214 526L236 537L259 545L285 551L307 554ZM310 550L279 547L242 536L218 525L195 513L175 500L161 489L143 467L113 413L109 400L108 384L110 370L113 362L116 359L117 358L121 359L128 367L139 388L151 417L159 431L207 489L221 503L236 513L259 524L281 532L307 537L333 540L360 538L389 531L412 523L438 509L457 496L479 476L490 468L498 463L502 464L502 467L498 475L490 487L484 493L457 514L430 529L402 540L373 547L345 550L310 550ZM127 265L128 257L132 243L143 218L161 192L175 178L199 159L225 145L259 134L266 133L273 134L225 161L200 181L167 214L155 228L132 263L128 267L127 265Z" fill="#9e9085" fill-rule="evenodd"/><path d="M311 550L348 550L373 547L402 540L430 529L457 514L484 493L490 487L498 475L502 467L502 464L498 463L490 468L479 476L457 496L438 509L412 523L389 531L360 538L333 540L307 537L281 532L259 524L236 513L221 503L207 489L159 431L151 417L139 388L128 367L121 359L117 358L116 359L113 362L110 370L108 384L109 400L113 413L143 467L161 489L175 500L195 513L218 525L242 536L279 547L311 550ZM241 529L210 517L188 505L165 489L152 474L142 460L115 409L113 399L112 388L113 379L117 374L121 373L124 375L132 383L155 431L203 490L221 509L249 529L241 529ZM128 267L164 218L199 182L225 161L273 134L266 133L259 134L225 145L199 159L173 180L161 192L143 218L131 247L127 261L128 267ZM172 192L177 185L184 181L186 181L180 189L173 193L172 192Z" fill="#a09791" fill-rule="evenodd"/><path d="M244 529L249 529L225 512L210 498L160 438L150 424L132 383L124 375L121 373L117 374L113 379L112 388L113 399L115 409L142 460L152 474L169 492L192 507L210 517L244 529ZM194 503L180 497L169 489L158 478L147 463L119 409L116 395L117 390L121 384L128 388L132 393L149 431L186 474L199 493L204 503L203 505L194 503ZM173 193L180 189L186 181L184 181L177 185L172 192L173 193Z" fill="#a29f9c" fill-rule="evenodd"/><path d="M195 504L203 505L204 503L199 493L177 464L152 435L145 424L132 393L128 388L121 384L117 390L116 395L119 409L147 463L158 478L169 489L180 497L195 504ZM176 489L165 481L151 464L147 456L144 442L147 440L162 452L181 474L188 489L188 491L184 492L176 489ZM130 417L126 409L124 402L128 403L132 409L134 417L132 420L130 417Z" fill="#ad8f8e" fill-rule="evenodd"/><path d="M177 489L184 492L188 491L187 485L181 474L158 448L147 440L144 442L147 456L151 464L165 481L177 489ZM165 471L165 469L166 471L165 471ZM162 467L162 466L164 467L162 467ZM132 420L134 417L132 409L128 403L124 402L126 409L132 420Z" fill="#ba7a7a" fill-rule="evenodd"/><path d="M165 471L166 471L165 469L165 471ZM162 468L164 467L162 466L162 468Z" fill="#c56666" fill-rule="evenodd"/><path d="" fill="#cf5151" fill-rule="evenodd"/><path d="" fill="#da3d3d" fill-rule="evenodd"/><path d="" fill="#e62a2a" fill-rule="evenodd"/><path d="" fill="#f11616" fill-rule="evenodd"/><path d="" fill="#fd0303" fill-rule="evenodd"/><path d="" fill="#ff0000" fill-rule="evenodd"/><path d="" fill="#ff0000" fill-rule="evenodd"/><path d="" fill="#ff0000" fill-rule="evenodd"/><path d="" fill="#ff0000" fill-rule="evenodd"/><path d="" fill="#ff0000" fill-rule="evenodd"/><path d="" fill="#ff0000" fill-rule="evenodd"/></g><path d="M187.6 568.3L189.9 564.9L195.4 564.6L199.1 567.5L202.8 567.7L206.6 570.5L214.0 573.3L262.6 589.2L288.7 594.9L318.6 598.5L352.2 598.7L382.0 595.3L389.5 592.9L400.7 591.5L404.4 589.4L411.9 588.5L430.6 582.4L434.3 582.4L438.0 579.9L440.2 584.6M57.2 285.3L61.0 286.0L62.2 293.6L62.5 297.2L61.8 300.8L63.6 351.5L66.2 376.8L69.5 394.9L74.3 413.0L84.3 441.9L90.2 456.4L92.6 460.0L93.2 463.6L95.8 467.2L96.2 470.9L98.9 474.5L98.3 482.0M606.0 282.4L602.3 283.1L598.6 279.6L596.9 268.2L594.3 264.6L594.8 254.6L598.3 253.6M524.6 138.7L521.6 141.6L520.2 141.7L512.7 135.8L505.2 131.5L497.5 123.5L497.3 119.9L499.1 117.5M406.0 74.4L404.4 79.6L400.7 77.1L389.5 77.3L382.0 75.4L352.2 73.6L277.5 74.0L273.8 76.6L272.0 76.5L270.9 72.0M140.8 533.8L143.1 532.3L146.8 532.1L154.3 537.6L158.0 538.2L169.2 546.3L195.4 560.4L217.8 570.6L236.4 577.6L258.8 584.9L273.8 588.7L292.4 592.2L318.6 595.0L337.2 595.4L355.9 594.5L378.3 591.8L397.0 588.1L411.9 584.2L441.8 574.3L479.1 558.5L486.6 553.7L490.3 553.7L492.4 555.7M602.3 397.5L598.6 396.6L598.4 391.3L601.6 387.6L601.7 369.6L603.4 365.9L603.8 358.7L603.6 333.4L600.6 304.4L596.3 282.7L588.5 253.8L577.2 221.2L575.1 217.6L574.4 214.0L571.8 210.4L571.6 206.7L568.6 203.1L568.2 199.5L565.0 196.8L562.6 192.3L553.8 183.3L549.8 177.8L536.6 163.3L520.2 147.7L494.0 126.2L471.6 110.1L449.2 96.5L445.5 95.6L441.8 93.5L415.6 85.9L382.0 79.3L348.4 76.4L307.4 76.7L281.2 79.0L247.6 84.4L243.9 85.8L236.4 86.4L232.7 88.5L229.0 88.4L225.2 91.3L220.8 91.0L219.1 87.3M64.7 256.8L68.4 257.9L69.5 264.6L67.6 268.2L67.9 279.1L66.2 297.2L65.6 326.1L67.2 362.3L71.6 391.3L78.4 416.6L89.5 445.5L100.0 467.2L114.2 492.6L122.3 503.4L122.9 507.0L128.6 514.3L129.1 517.9L127.3 520.7M96.0 190.9L98.3 192.3L98.5 195.9L95.2 199.5L95.4 203.1L92.1 206.7L92.1 210.4L86.1 217.6L85.6 224.8L82.6 228.4L82.4 232.1L79.6 235.7L79.5 239.3L77.1 246.5L76.0 257.4L74.2 264.6L70.8 286.3L68.7 308.0L68.3 329.8L69.1 355.1L72.2 380.6L76.8 402.1L83.4 422.9L90.8 441.7L102.0 464.2L114.8 485.3L130.6 507.0L139.9 517.9L154.3 530.0L180.4 547.9L199.1 558.5L221.5 569.0L250.4 579.4L277.5 586.6L299.0 590.3L322.3 592.2L344.7 592.2L367.1 590.4L389.8 586.6L415.6 579.9L445.5 569.2L470.1 557.7L494.0 543.8L523.9 522.8L532.1 514.3L549.5 492.6L559.4 478.1L571.5 456.4L581.6 434.7L589.1 413.0L595.4 387.6L598.9 362.3L599.9 340.6L598.6 315.3L594.8 290.9L587.4 261.4L579.9 238.2L572.9 221.2L563.7 203.1L550.0 184.1L535.1 166.8L516.6 148.8L494.0 130.2L474.5 116.3L453.0 103.5L438.0 96.8L415.6 89.6L390.5 83.7L370.8 80.8L348.4 79.1L314.8 79.1L296.2 80.3L273.8 83.4L247.6 89.2L225.2 96.4L191.6 110.0L187.9 112.3L184.2 112.9L176.7 118.1L173.0 118.5L165.5 123.8L162.4 123.5L160.5 121.1M296.2 586.8L322.3 589.2L344.7 589.2L370.8 586.8L393.2 582.7L418.0 575.8L447.1 564.9L469.3 554.1L493.0 539.6L508.0 528.8L521.1 517.9L538.8 498.3L553.8 478.1L565.0 459.8L576.2 436.9L583.8 416.6L591.4 387.6L594.8 365.9L596.3 340.6L595.1 315.3L591.8 293.6L583.6 260.5L576.2 238.2L565.0 213.2L557.5 200.5L542.6 180.6L523.4 159.7L507.4 145.2L479.3 123.5L462.1 112.7L441.8 102.1L420.6 94.6L392.5 87.3L367.1 83.4L341.0 81.9L307.4 82.5L281.2 85.4L254.9 91.0L231.7 98.2L206.6 108.8L185.9 119.9L165.5 133.0L143.1 150.0L134.0 159.7L119.6 177.8L105.2 199.5L90.2 228.4L83.0 246.5L75.9 275.8L72.2 302.2L71.1 326.1L72.1 358.7L76.3 387.6L82.8 413.0L90.8 434.6L105.8 464.6L120.7 488.2L131.9 502.9L145.6 517.9L168.6 536.0L191.6 550.8L211.8 561.3L238.3 572.2L266.3 580.9L296.2 586.8M303.6 391.7L296.2 386.2L292.4 382.2L284.4 369.6L279.6 355.1L278.5 344.2L278.9 337.0L280.3 329.8L282.9 322.5L286.8 315.3L292.4 308.4L297.0 304.4L303.6 300.4L311.1 297.9L314.8 297.8L326.0 301.1L333.5 304.9L341.0 310.6L348.4 319.1L352.8 326.1L357.2 337.0L359.2 347.8L358.9 358.7L356.0 369.6L352.4 376.8L348.4 382.1L341.0 388.6L333.5 392.4L322.3 394.6L311.1 393.8L303.6 391.7M296.2 583.4L322.3 585.7L344.7 585.7L370.8 583.3L391.8 579.4L417.6 572.2L445.5 561.5L467.5 550.5L490.6 536.0L509.5 521.5L523.9 508.0L538.8 490.7L553.8 469.5L565.0 449.8L575.1 427.4L581.4 409.4L587.7 384.0L591.1 359.8L592.1 337.0L591.0 315.3L587.4 290.8L579.9 261.4L572.4 239.7L562.4 217.6L553.8 202.7L538.8 182.5L521.6 163.3L501.6 145.2L477.8 127.1L460.4 116.2L439.2 105.4L419.4 98.2L389.5 90.4L367.1 86.9L341.0 85.2L311.1 85.7L285.0 88.5L256.1 94.6L233.6 101.8L208.5 112.7L188.7 123.5L167.1 138.0L146.8 154.6L132.1 170.6L120.7 185.1L105.8 208.2L94.6 230.0L86.6 250.2L79.6 277.0L75.9 300.9L74.6 329.8L75.8 362.3L79.6 388.6L83.4 404.4L87.1 416.4L94.6 435.2L105.8 457.6L120.7 482.1L131.9 497.1L147.5 514.3L170.0 532.4L192.1 546.8L212.4 557.7L238.1 568.6L260.2 575.8L273.8 579.3L296.2 583.4M303.6 449.7L288.7 443.4L273.8 432.9L261.6 420.2L251.4 405.0L243.9 388.8L238.5 369.6L236.3 351.5L236.3 340.6L237.3 329.8L240.2 314.9L243.9 303.5L248.3 293.6L258.8 276.8L270.0 264.6L285.0 253.7L299.9 247.1L314.8 244.2L329.8 244.6L341.0 247.1L348.4 250.0L355.9 254.0L363.4 259.2L369.6 264.6L376.2 271.9L385.6 286.3L393.2 304.7L396.3 315.3L399.2 329.8L401.1 351.5L399.9 373.2L396.1 391.3L388.8 409.4L379.4 423.8L367.1 436.3L359.6 441.7L352.2 445.8L337.2 451.0L322.3 452.5L311.1 451.4L303.6 449.7M299.9 579.5L326.0 581.3L352.2 580.7L374.6 578.1L402.5 572.2L424.9 564.9L450.4 554.1L470.3 543.2L491.8 528.8L509.6 514.3L523.9 499.8L538.8 481.6L553.8 459.0L565.0 437.6L572.4 419.4L579.9 395.0L584.7 369.6L586.7 347.8L586.7 326.1L583.7 297.2L579.9 279.0L572.4 253.6L561.2 226.6L550.0 206.3L535.1 185.6L518.5 166.9L498.9 148.8L480.2 134.4L457.2 119.9L435.1 109.0L415.2 101.8L387.3 94.6L364.4 91.0L337.2 89.5L307.4 90.3L277.5 94.5L261.4 98.2L238.5 105.4L213.3 116.3L193.6 127.1L172.2 141.6L150.6 159.7L139.4 171.8L124.4 190.5L109.5 213.7L98.3 236.1L90.8 255.6L83.4 285.1L81.1 300.8L79.3 322.5L79.6 354.2L83.0 384.0L87.1 403.5L94.6 425.3L102.0 441.4L117.0 468.2L131.9 490.0L146.8 507.1L163.4 521.5L183.6 536.0L208.2 550.5L231.5 561.3L251.3 568.6L278.1 575.8L299.9 579.5M299.9 478.5L288.7 475.3L277.5 470.9L270.0 467.0L258.8 459.7L250.4 452.8L240.2 442.3L226.8 423.8L220.8 413.0L216.0 402.1L212.2 391.3L208.7 376.8L205.9 351.5L207.0 326.1L209.4 311.7L212.1 300.8L217.0 286.3L221.8 275.5L227.6 264.6L234.8 253.8L243.6 242.9L250.7 235.7L259.2 228.4L269.7 221.2L277.5 216.9L288.7 212.2L299.9 208.9L311.1 207.0L322.3 206.4L333.5 207.2L344.7 209.4L355.9 213.1L365.5 217.6L374.6 223.2L385.6 232.1L393.2 239.7L401.7 250.2L408.8 261.0L415.6 274.0L420.7 286.3L425.3 300.8L428.6 315.3L430.8 329.8L431.9 344.2L431.9 358.7L430.8 373.2L426.0 398.5L421.4 413.0L416.8 423.8L411.9 432.9L405.8 441.9L397.0 452.1L389.5 458.8L382.0 464.3L370.6 470.9L359.6 475.4L348.4 478.7L337.2 480.6L326.0 481.3L314.8 480.9L299.9 478.5M314.8 572.6L326.0 573.8L337.2 573.8L352.2 572.1L367.1 571.7L381.8 568.6L389.5 567.8L397.0 565.1L404.4 563.9L408.2 561.9L415.6 560.3L419.4 558.3L434.3 553.0L449.2 546.0L467.9 535.4L487.6 521.5L505.2 506.7L520.2 490.8L538.2 467.2L549.1 449.2L560.9 423.8L561.5 420.2L563.7 416.6L565.0 409.4L567.3 405.7L568.7 397.8L571.3 391.3L572.5 380.4L574.1 376.8L575.4 369.6L575.9 355.1L577.5 340.6L577.5 329.8L575.3 300.8L574.0 293.6L572.4 290.0L571.2 279.1L568.7 273.0L567.0 264.6L564.8 261.0L563.3 253.8L561.2 250.6L560.5 246.5L552.1 228.4L543.4 214.0L541.9 210.4L526.6 188.6L509.0 169.5L490.8 152.5L482.8 145.9L460.4 131.2L441.8 121.3L423.1 113.3L419.0 112.7L415.6 110.6L408.2 109.2L404.4 107.1L395.4 105.4L389.5 103.1L378.3 101.9L374.6 100.5L367.1 99.1L333.5 97.1L299.9 99.0L292.4 99.9L285.0 102.1L273.8 103.6L269.9 105.4L262.6 106.5L256.9 109.0L251.4 110.1L245.8 112.7L240.2 114.0L236.8 116.3L232.7 117.2L210.3 128.2L207.1 130.8L202.8 132.3L195.1 138.0L191.6 139.5L184.7 145.2L176.7 150.4L158.0 167.6L141.2 185.0L136.3 192.3L130.0 199.5L128.3 203.1L122.8 210.4L121.3 214.0L118.5 217.6L107.3 239.3L100.0 257.4L92.7 282.7L88.9 304.4L87.4 333.4L88.5 369.6L89.4 376.8L90.7 380.4L91.0 391.3L94.6 408.3L102.0 427.2L110.0 441.9L128.2 473.1L139.4 488.9L150.6 501.0L166.3 514.3L191.6 531.7L199.6 536.0L202.8 538.6L206.6 539.6L210.3 542.6L221.5 548.3L232.7 553.4L236.4 554.3L240.2 556.7L245.0 557.7L251.4 560.6L256.0 561.3L262.6 564.2L268.2 564.9L273.8 567.2L285.3 568.6L292.4 570.9L314.8 572.6M311.1 500.1L292.4 496.8L281.2 493.6L269.3 489.0L255.1 481.7L244.3 474.5L235.4 467.2L225.2 457.0L215.8 445.5L205.6 431.1L197.2 416.6L192.3 405.7L187.3 391.3L183.9 376.8L181.8 362.3L181.0 347.8L181.4 329.8L183.0 315.3L186.6 297.2L190.7 282.7L196.2 268.2L202.8 254.6L209.8 242.9L217.8 231.8L229.0 219.2L240.2 209.1L251.4 200.9L262.6 194.3L277.5 187.5L288.7 183.7L303.6 180.4L318.6 179.0L333.5 179.1L350.1 181.4L363.4 185.0L374.6 189.3L387.5 195.9L398.4 203.1L411.1 214.0L421.1 224.8L429.1 235.7L437.6 250.2L444.2 264.6L450.6 282.7L454.4 297.2L457.8 315.3L459.7 333.4L460.3 351.5L459.6 369.6L457.9 384.0L455.0 398.5L452.0 409.4L446.5 423.8L441.1 434.7L434.3 445.6L425.9 456.4L415.3 467.2L404.4 476.0L393.2 483.1L381.9 489.0L367.1 494.5L352.2 498.3L341.0 500.0L326.0 500.8L311.1 500.1M292.4 565.4L318.6 568.0L341.0 568.2L370.8 565.3L389.5 561.5L414.5 554.1L432.5 546.8L453.0 536.6L471.2 525.1L490.1 510.7L505.6 496.2L521.2 478.1L533.9 460.0L544.2 441.9L553.8 420.2L560.9 398.5L565.8 376.8L568.8 351.5L569.1 326.1L567.4 304.4L563.5 282.7L557.3 261.0L548.7 239.3L537.3 217.6L525.5 199.5L511.1 181.4L494.0 164.0L475.4 148.8L459.0 138.0L438.0 126.7L412.8 116.3L389.5 109.4L370.8 105.7L344.7 103.0L322.3 102.7L292.4 105.4L273.8 109.0L248.9 116.3L230.6 123.5L210.3 133.7L191.6 145.2L173.0 159.4L157.1 174.2L139.4 194.6L128.1 210.4L117.0 229.7L105.8 255.0L98.3 278.7L94.6 296.5L91.9 322.5L91.6 344.2L93.6 373.2L97.9 398.5L102.3 413.0L109.5 429.6L124.2 456.4L135.6 474.0L150.6 492.2L165.5 506.4L180.4 518.2L202.8 532.9L222.0 543.2L247.7 554.1L271.9 561.3L292.4 565.4M299.9 510.9L283.3 507.0L266.3 501.2L251.4 494.1L237.2 485.3L228.1 478.1L216.9 467.2L204.7 452.8L191.1 434.7L181.8 420.2L176.4 409.4L170.9 394.9L165.9 376.8L163.1 362.3L161.6 347.8L161.4 333.4L163.0 315.3L165.5 300.2L170.0 282.7L176.7 264.3L184.2 248.9L192.1 235.7L202.8 221.3L214.0 209.1L225.2 198.9L239.1 188.6L255.1 179.3L270.0 172.6L285.0 167.6L299.9 164.2L318.6 161.9L333.5 161.7L348.4 163.0L363.4 165.7L379.9 170.6L397.0 177.7L410.2 185.0L425.6 195.9L437.8 206.7L447.8 217.6L458.5 232.1L467.1 246.5L473.8 261.0L480.3 279.1L484.9 297.2L487.9 315.3L489.6 337.0L489.5 355.1L487.8 373.2L484.4 391.3L480.2 405.7L474.6 420.2L467.2 434.7L460.3 445.5L448.8 460.0L438.2 470.9L425.1 481.7L411.9 490.5L397.0 498.4L382.0 504.4L367.1 508.8L352.2 511.7L333.5 513.4L318.6 513.1L299.9 510.9M307.4 561.5L329.8 562.4L355.1 561.3L379.2 557.7L394.4 554.1L416.7 546.8L434.3 539.4L460.2 525.1L475.7 514.3L493.1 499.8L505.2 487.1L520.2 467.6L531.3 449.2L539.9 431.1L546.5 413.0L552.8 387.6L555.8 369.6L557.1 347.8L556.7 318.9L554.9 297.2L550.5 275.5L543.8 253.8L536.1 235.7L524.5 214.0L512.4 195.9L497.4 177.8L482.6 163.3L468.5 152.5L445.5 138.2L422.1 127.1L401.9 119.9L382.0 114.8L359.6 111.1L337.2 109.4L314.8 109.6L292.4 111.8L269.6 116.3L246.0 123.5L228.3 130.8L206.6 142.2L185.7 156.1L168.3 170.6L154.3 184.8L139.6 203.1L128.2 220.8L117.0 242.6L109.5 261.8L103.6 282.7L100.2 300.8L98.2 322.5L98.0 355.1L98.6 373.2L102.2 398.5L106.6 413.0L113.2 428.0L131.9 461.1L143.1 477.4L158.0 494.1L173.0 507.0L199.1 525.0L219.0 536.0L243.5 546.8L265.7 554.1L281.2 557.8L307.4 561.5M299.9 521.6L281.2 517.4L262.6 511.1L247.6 504.2L232.7 495.3L221.5 486.7L209.0 474.5L193.6 456.4L176.8 434.7L169.2 423.2L162.4 409.4L147.7 365.9L144.4 351.5L142.6 337.0L143.0 326.1L144.8 311.7L149.5 290.0L155.4 271.9L163.3 253.8L171.4 239.3L181.2 224.8L193.3 210.4L207.7 195.9L221.5 184.3L236.4 174.2L251.4 166.0L270.0 158.1L285.0 153.4L303.6 149.4L326.0 147.1L341.0 147.3L359.6 149.6L378.3 153.8L397.0 160.1L415.6 168.7L426.8 175.2L441.8 185.6L458.3 199.5L469.8 210.4L482.6 224.8L493.3 239.3L501.8 253.8L510.0 271.9L516.3 290.0L521.6 311.7L524.6 333.4L522.4 355.1L519.5 369.6L515.5 384.0L506.4 405.7L496.8 423.8L484.9 441.9L473.1 456.4L455.5 474.5L441.8 486.1L426.8 496.5L408.2 506.6L389.5 514.2L374.6 518.7L355.9 522.4L337.2 524.1L318.6 523.9L299.9 521.6M292.4 550.5L326.0 552.3L363.9 550.5L383.5 546.8L397.3 543.2L426.8 532.4L441.8 525.0L459.3 514.3L479.0 499.8L490.3 489.5L497.8 479.7L505.2 467.2L509.7 456.4L509.0 453.3L505.2 453.3L501.5 455.3L477.5 474.5L460.4 490.2L441.8 504.0L419.4 516.8L393.2 527.4L382.0 530.8L363.4 534.8L333.5 537.7L307.4 535.5L285.0 531.0L262.6 523.8L240.2 513.4L225.2 503.9L210.3 490.9L195.4 474.0L160.8 431.1L152.7 416.6L142.4 391.3L128.2 363.4L120.7 353.3L117.0 351.1L113.2 354.1L109.5 361.3L107.7 376.8L107.3 387.6L109.5 403.5L112.6 413.0L117.0 422.5L135.7 456.4L143.1 468.3L154.3 482.5L165.5 493.5L178.5 503.4L199.1 516.1L223.4 528.8L240.2 536.2L260.2 543.2L273.8 546.9L292.4 550.5M120.7 291.9L128.2 280.6L144.1 250.2L161.0 224.8L176.3 206.7L202.8 180.9L221.5 166.2L232.7 158.9L247.6 150.5L262.6 143.5L298.2 130.8L305.5 127.1L292.4 125.7L278.5 127.1L258.8 131.1L236.7 138.0L220.9 145.2L202.8 155.5L187.9 165.9L173.5 177.8L161.8 190.1L150.6 204.4L141.8 217.6L131.9 235.7L125.0 253.8L121.5 268.2L119.3 286.3L120.7 291.9M467.9 178.4L471.6 179.0L474.7 177.8L472.9 174.2L469.1 170.6L464.2 166.9L460.4 165.3L453.3 159.7L449.2 158.8L445.5 155.9L441.6 156.1L467.9 178.4M176.7 489.1L184.2 492.3L187.9 491.1L188.2 489.0L186.8 485.3L180.6 474.5L165.5 455.7L158.0 448.2L146.8 440.4L143.9 441.9L147.3 456.4L150.7 463.6L165.5 481.4L176.7 489.1M131.9 420.0L133.6 416.6L131.9 409.2L128.2 402.5L124.4 401.7L125.6 409.4L131.9 420.0" stroke="#ffffff" stroke-width="1" fill="none"/></g><ellipse cx="331.6" cy="335.2" rx="272.7" ry="264.3" fill="none" stroke="#fff" stroke-width="1.3"/><path d="M72.8 17.4V602.8M90.0 17.4V602.8M107.3 17.4V602.8M124.5 17.4V602.8M141.8 17.4V602.8M159.0 17.4V602.8M176.3 17.4V602.8M193.6 17.4V602.8M210.8 17.4V602.8M228.1 17.4V602.8M245.3 17.4V602.8M262.6 17.4V602.8M279.9 17.4V602.8M297.1 17.4V602.8M314.4 17.4V602.8M331.6 17.4V602.8M348.9 17.4V602.8M366.1 17.4V602.8M383.4 17.4V602.8M400.7 17.4V602.8M417.9 17.4V602.8M435.2 17.4V602.8M452.4 17.4V602.8M469.7 17.4V602.8M487.0 17.4V602.8M504.2 17.4V602.8M521.5 17.4V602.8M538.7 17.4V602.8M556.0 17.4V602.8M573.2 17.4V602.8M590.5 17.4V602.8M607.8 17.4V602.8M625.0 17.4V602.8M642.3 17.4V602.8M55.5 519.2H659.5M55.5 435.5H659.5M55.5 351.9H659.5M55.5 268.3H659.5M55.5 184.6H659.5M55.5 101.0H659.5" stroke="#b4b4b4" stroke-width="1" stroke-dasharray="1 3" fill="none"/><path d="M54.0 602.8V16.9H660.5" stroke="#a0a0a0" stroke-width="2" fill="none"/><path d="M50.700000000000045 17.4V602.8M42.2 602.8H50.700000000000045M46.2 586.1H50.700000000000045M46.2 569.3H50.700000000000045M46.2 552.6H50.700000000000045M46.2 535.9H50.700000000000045M42.2 519.2H50.700000000000045M46.2 502.4H50.700000000000045M46.2 485.7H50.700000000000045M46.2 469.0H50.700000000000045M46.2 452.3H50.700000000000045M42.2 435.5H50.700000000000045M46.2 418.8H50.700000000000045M46.2 402.1H50.700000000000045M46.2 385.4H50.700000000000045M46.2 368.6H50.700000000000045M42.2 351.9H50.700000000000045M46.2 335.2H50.700000000000045M46.2 318.5H50.700000000000045M46.2 301.7H50.700000000000045M46.2 285.0H50.700000000000045M42.2 268.3H50.700000000000045M46.2 251.6H50.700000000000045M46.2 234.8H50.700000000000045M46.2 218.1H50.700000000000045M46.2 201.4H50.700000000000045M42.2 184.6H50.700000000000045M46.2 167.9H50.700000000000045M46.2 151.2H50.700000000000045M46.2 134.5H50.700000000000045M46.2 117.7H50.700000000000045M42.2 101.0H50.700000000000045M46.2 84.3H50.700000000000045M46.2 67.6H50.700000000000045M46.2 50.8H50.700000000000045M46.2 34.1H50.700000000000045M42.2 17.4H50.700000000000045M55.5 607.9H659.5M55.5 607.9V614.4M72.8 607.9V610.9M90.0 607.9V610.9M107.3 607.9V610.9M124.5 607.9V610.9M141.8 607.9V614.4M159.0 607.9V610.9M176.3 607.9V610.9M193.6 607.9V610.9M210.8 607.9V610.9M228.1 607.9V614.4M245.3 607.9V610.9M262.6 607.9V610.9M279.9 607.9V610.9M297.1 607.9V610.9M314.4 607.9V614.4M331.6 607.9V610.9M348.9 607.9V610.9M366.1 607.9V610.9M383.4 607.9V610.9M400.7 607.9V614.4M417.9 607.9V610.9M435.2 607.9V610.9M452.4 607.9V610.9M469.7 607.9V610.9M487.0 607.9V614.4M504.2 607.9V610.9M521.5 607.9V610.9M538.7 607.9V610.9M556.0 607.9V610.9M573.2 607.9V614.4M590.5 607.9V610.9M607.8 607.9V610.9M625.0 607.9V610.9M642.3 607.9V610.9M659.5 607.9V614.4" stroke="#000" stroke-width="1.2" fill="none"/><defs><linearGradient id="cbg" x1="0" y1="0" x2="0" y2="1"><stop offset="0.000" stop-color="#ffff00"/><stop offset="0.017" stop-color="#ffdb00"/><stop offset="0.034" stop-color="#ffb100"/><stop offset="0.051" stop-color="#ff8200"/><stop offset="0.068" stop-color="#ff4d00"/><stop offset="0.085" stop-color="#ff1700"/><stop offset="0.102" stop-color="#fa0909"/><stop offset="0.119" stop-color="#f21818"/><stop offset="0.136" stop-color="#e82828"/><stop offset="0.153" stop-color="#de3838"/><stop offset="0.169" stop-color="#d24747"/><stop offset="0.186" stop-color="#c55757"/><stop offset="0.203" stop-color="#b96868"/><stop offset="0.220" stop-color="#ae7979"/><stop offset="0.237" stop-color="#a28a8a"/><stop offset="0.254" stop-color="#999897"/><stop offset="0.271" stop-color="#99938c"/><stop offset="0.288" stop-color="#9a8e82"/><stop offset="0.305" stop-color="#9a8877"/><stop offset="0.322" stop-color="#9a826d"/><stop offset="0.339" stop-color="#9a7b62"/><stop offset="0.356" stop-color="#9a7558"/><stop offset="0.373" stop-color="#9a6f4e"/><stop offset="0.390" stop-color="#996846"/><stop offset="0.407" stop-color="#99623f"/><stop offset="0.424" stop-color="#985c37"/><stop offset="0.441" stop-color="#98552f"/><stop offset="0.458" stop-color="#965023"/><stop offset="0.475" stop-color="#944b17"/><stop offset="0.492" stop-color="#92450b"/><stop offset="0.508" stop-color="#904001"/><stop offset="0.525" stop-color="#884814"/><stop offset="0.542" stop-color="#805028"/><stop offset="0.559" stop-color="#745c34"/><stop offset="0.576" stop-color="#69673f"/><stop offset="0.593" stop-color="#5d714f"/><stop offset="0.610" stop-color="#517b5f"/><stop offset="0.627" stop-color="#488a6e"/><stop offset="0.644" stop-color="#3f9a7e"/><stop offset="0.661" stop-color="#35ad92"/><stop offset="0.678" stop-color="#2ac1a6"/><stop offset="0.695" stop-color="#20d0bb"/><stop offset="0.712" stop-color="#16dfd1"/><stop offset="0.729" stop-color="#0de9e1"/><stop offset="0.746" stop-color="#05edea"/><stop offset="0.763" stop-color="#00e0f2"/><stop offset="0.780" stop-color="#00affa"/><stop offset="0.797" stop-color="#007eff"/><stop offset="0.814" stop-color="#004dff"/><stop offset="0.831" stop-color="#0024fb"/><stop offset="0.847" stop-color="#0014eb"/><stop offset="0.864" stop-color="#0003da"/><stop offset="0.881" stop-color="#0000bf"/><stop offset="0.898" stop-color="#0000a0"/><stop offset="0.915" stop-color="#000082"/><stop offset="0.932" stop-color="#000063"/><stop offset="0.949" stop-color="#00004d"/><stop offset="0.966" stop-color="#00003a"/><stop offset="0.983" stop-color="#000026"/><stop offset="1.000" stop-color="#000013"/></linearGradient></defs><rect x="663.7" y="18.69999999999999" width="30.4" height="582.5" fill="url(#cbg)"/><path d="M696.6999999999998 18.7V601.2M696.6999999999998 597.0h4.5M696.6999999999998 576.8h4.5M696.6999999999998 556.6h8M696.6999999999998 536.4h4.5M696.6999999999998 516.2h4.5M696.6999999999998 496.1h4.5M696.6999999999998 475.9h8M696.6999999999998 455.7h4.5M696.6999999999998 435.5h4.5M696.6999999999998 415.4h4.5M696.6999999999998 395.2h8M696.6999999999998 375.0h4.5M696.6999999999998 354.9h4.5M696.6999999999998 334.7h4.5M696.6999999999998 314.5h8M696.6999999999998 294.3h4.5M696.6999999999998 274.1h4.5M696.6999999999998 254.0h4.5M696.6999999999998 233.8h8M696.6999999999998 213.6h4.5M696.6999999999998 193.4h4.5M696.6999999999998 173.3h4.5M696.6999999999998 153.1h8M696.6999999999998 132.9h4.5M696.6999999999998 112.8h4.5M696.6999999999998 92.6h4.5M696.6999999999998 72.4h8M696.6999999999998 52.2h4.5M696.6999999999998 32.0h4.5" stroke="#000" stroke-width="1.2" fill="none"/></svg>
<div style="position:absolute;left:1417.0px;transform:translateX(-100%);top:705.8px;line-height:14px;font-size:10.8px;color:#000;white-space:pre;">0</div>
<div style="position:absolute;left:1435.5px;transform:translateX(-50%);top:728.8px;line-height:14px;font-size:10.8px;color:#000;white-space:pre;">0</div>
<div style="position:absolute;left:1417.0px;transform:translateX(-100%);top:622.2px;line-height:14px;font-size:10.8px;color:#000;white-space:pre;">100</div>
<div style="position:absolute;left:1521.8px;transform:translateX(-50%);top:728.8px;line-height:14px;font-size:10.8px;color:#000;white-space:pre;">100</div>
<div style="position:absolute;left:1417.0px;transform:translateX(-100%);top:538.5px;line-height:14px;font-size:10.8px;color:#000;white-space:pre;">200</div>
<div style="position:absolute;left:1608.1px;transform:translateX(-50%);top:728.8px;line-height:14px;font-size:10.8px;color:#000;white-space:pre;">200</div>
<div style="position:absolute;left:1417.0px;transform:translateX(-100%);top:454.9px;line-height:14px;font-size:10.8px;color:#000;white-space:pre;">300</div>
<div style="position:absolute;left:1694.4px;transform:translateX(-50%);top:728.8px;line-height:14px;font-size:10.8px;color:#000;white-space:pre;">300</div>
<div style="position:absolute;left:1417.0px;transform:translateX(-100%);top:371.3px;line-height:14px;font-size:10.8px;color:#000;white-space:pre;">400</div>
<div style="position:absolute;left:1780.7px;transform:translateX(-50%);top:728.8px;line-height:14px;font-size:10.8px;color:#000;white-space:pre;">400</div>
<div style="position:absolute;left:1417.0px;transform:translateX(-100%);top:287.6px;line-height:14px;font-size:10.8px;color:#000;white-space:pre;">500</div>
<div style="position:absolute;left:1867.0px;transform:translateX(-50%);top:728.8px;line-height:14px;font-size:10.8px;color:#000;white-space:pre;">500</div>
<div style="position:absolute;left:1417.0px;transform:translateX(-100%);top:204.0px;line-height:14px;font-size:10.8px;color:#000;white-space:pre;">600</div>
<div style="position:absolute;left:1953.2px;transform:translateX(-50%);top:728.8px;line-height:14px;font-size:10.8px;color:#000;white-space:pre;">600</div>
<div style="position:absolute;left:1417.0px;transform:translateX(-100%);top:120.4px;line-height:14px;font-size:10.8px;color:#000;white-space:pre;">700</div>
<div style="position:absolute;left:2039.5px;transform:translateX(-50%);top:728.8px;line-height:14px;font-size:10.8px;color:#000;white-space:pre;">700</div>
<div style="position:absolute;left:2089.4px;top:175.4px;line-height:14px;font-size:10.8px;color:#000;white-space:pre;">0,6</div>
<div style="position:absolute;left:2089.4px;top:256.1px;line-height:14px;font-size:10.8px;color:#000;white-space:pre;">0,4</div>
<div style="position:absolute;left:2089.4px;top:336.8px;line-height:14px;font-size:10.8px;color:#000;white-space:pre;">0,2</div>
<div style="position:absolute;left:2089.4px;top:417.5px;line-height:14px;font-size:10.8px;color:#000;white-space:pre;">0</div>
<div style="position:absolute;left:2089.4px;top:498.2px;line-height:14px;font-size:10.8px;color:#000;white-space:pre;">-0,2</div>
<div style="position:absolute;left:2089.4px;top:578.9px;line-height:14px;font-size:10.8px;color:#000;white-space:pre;">-0,4</div>
<div style="position:absolute;left:2089.4px;top:659.6px;line-height:14px;font-size:10.8px;color:#000;white-space:pre;">-0,6</div>
<div style="position:absolute;left:1636.4px;top:746.5px;line-height:14px;font-size:10.8px;color:#000;white-space:pre;">20200103_igram_05_01_12uhr  0.240rms 640 X 640</div>
<div style="position:absolute;left:2124.5px;top:420px;transform:translate(-50%,-50%) rotate(90deg);font-size:16.5px;letter-spacing:0.75px;font-weight:bold;white-space:nowrap;line-height:18px">wavefront error at 532.00 nm</div>
<div style="position:absolute;left:321.0px;top:855.0px;width:1810.0px;height:562.0px;background:#efefef;"></div>
<svg style="position:absolute;left:240px;top:790px" width="1920" height="700"><path d="M96.5 67V627M110.5 67V627M123.5 67V627M149.5 67V627M162.5 67V627M175.5 67V627M188.5 67V627M214.5 67V627M228.5 67V627M241.5 67V627M254.5 67V627M280.5 67V627M293.5 67V627M306.5 67V627M319.5 67V627M345.5 67V627M358.5 67V627M372.5 67V627M385.5 67V627M411.5 67V627M424.5 67V627M437.5 67V627M450.5 67V627M476.5 67V627M490.5 67V627M503.5 67V627M516.5 67V627M542.5 67V627M555.5 67V627M568.5 67V627M581.5 67V627M607.5 67V627M620.5 67V627M634.5 67V627M647.5 67V627M673.5 67V627M686.5 67V627M699.5 67V627M712.5 67V627M738.5 67V627M752.5 67V627M765.5 67V627M778.5 67V627M804.5 67V627M817.5 67V627M830.5 67V627M843.5 67V627M869.5 67V627M882.5 67V627M896.5 67V627M909.5 67V627M935.5 67V627M948.5 67V627M961.5 67V627M974.5 67V627M1000.5 67V627M1014.5 67V627M1027.5 67V627M1040.5 67V627M1066.5 67V627M1079.5 67V627M1092.5 67V627M1105.5 67V627M1131.5 67V627M1144.5 67V627M1158.5 67V627M1171.5 67V627M1197.5 67V627M1210.5 67V627M1223.5 67V627M1236.5 67V627M1262.5 67V627M1276.5 67V627M1289.5 67V627M1302.5 67V627M1328.5 67V627M1341.5 67V627M1354.5 67V627M1367.5 67V627M1393.5 67V627M1406.5 67V627M1420.5 67V627M1433.5 67V627M1459.5 67V627M1472.5 67V627M1485.5 67V627M1498.5 67V627M1524.5 67V627M1538.5 67V627M1551.5 67V627M1564.5 67V627M1590.5 67V627M1603.5 67V627M1616.5 67V627M1629.5 67V627M1655.5 67V627M1668.5 67V627M1682.5 67V627M1695.5 67V627M1721.5 67V627M1734.5 67V627M1747.5 67V627M1760.5 67V627M1786.5 67V627M1800.5 67V627M1813.5 67V627M1826.5 67V627M1852.5 67V627M1865.5 67V627M1878.5 67V627M83 608.5H1891M83 576.5H1891M83 544.5H1891M83 480.5H1891M83 448.5H1891M83 416.5H1891M83 383.5H1891M83 319.5H1891M83 287.5H1891M83 255.5H1891M83 223.5H1891M83 159.5H1891M83 127.5H1891M83 94.5H1891" stroke="#a3a3a3" stroke-width="1" stroke-dasharray="1 2" fill="none"/><path d="M136.5 67V627M201.5 67V627M267.5 67V627M332.5 67V627M398.5 67V627M463.5 67V627M529.5 67V627M594.5 67V627M660.5 67V627M725.5 67V627M791.5 67V627M856.5 67V627M922.5 67V627M1053.5 67V627M1118.5 67V627M1184.5 67V627M1249.5 67V627M1315.5 67V627M1380.5 67V627M1446.5 67V627M1511.5 67V627M1577.5 67V627M1642.5 67V627M1708.5 67V627M1773.5 67V627M1839.5 67V627M83 512.5H1891M83 191.5H1891" stroke="#000" stroke-width="1" stroke-dasharray="1 2" fill="none"/><path d="M987.5 67V627" stroke="#000" stroke-width="1" stroke-dasharray="3 2 1 3" fill="none"/><path d="M83 351.5H1891" stroke="#000" stroke-width="1.2" fill="none"/><path d="M83 311.5H1891" stroke="#c8141e" stroke-width="1" stroke-dasharray="5 3 1 3" fill="none"/><path d="M83 391.5H1891" stroke="#c8141e" stroke-width="1" stroke-dasharray="5 3 1 3" fill="none"/><path d="M80.5 628V64.5H1892" stroke="#a0a0a0" stroke-width="2.2" fill="none"/><path d="M77.39999999999998 70V622.5999999999999M73.39999999999998 608.1H77.39999999999998M73.39999999999998 576.0H77.39999999999998M73.39999999999998 543.9H77.39999999999998M69.39999999999998 511.8H77.39999999999998M73.39999999999998 479.7H77.39999999999998M73.39999999999998 447.6H77.39999999999998M73.39999999999998 415.5H77.39999999999998M73.39999999999998 383.4H77.39999999999998M69.39999999999998 351.3H77.39999999999998M73.39999999999998 319.2H77.39999999999998M73.39999999999998 287.1H77.39999999999998M73.39999999999998 255.0H77.39999999999998M73.39999999999998 222.9H77.39999999999998M69.39999999999998 190.8H77.39999999999998M73.39999999999998 158.7H77.39999999999998M73.39999999999998 126.6H77.39999999999998M73.39999999999998 94.5H77.39999999999998M86 632.4000000000001H1886M96.5 632.4000000000001V635.6M109.6 632.4000000000001V635.6M122.7 632.4000000000001V635.6M135.8 632.4000000000001V639.4M148.9 632.4000000000001V635.6M162.0 632.4000000000001V635.6M175.1 632.4000000000001V635.6M188.2 632.4000000000001V635.6M201.3 632.4000000000001V639.4M214.4 632.4000000000001V635.6M227.5 632.4000000000001V635.6M240.6 632.4000000000001V635.6M253.7 632.4000000000001V635.6M266.8 632.4000000000001V639.4M279.9 632.4000000000001V635.6M293.0 632.4000000000001V635.6M306.1 632.4000000000001V635.6M319.2 632.4000000000001V635.6M332.3 632.4000000000001V639.4M345.4 632.4000000000001V635.6M358.5 632.4000000000001V635.6M371.6 632.4000000000001V635.6M384.7 632.4000000000001V635.6M397.8 632.4000000000001V639.4M410.9 632.4000000000001V635.6M424.0 632.4000000000001V635.6M437.1 632.4000000000001V635.6M450.2 632.4000000000001V635.6M463.3 632.4000000000001V639.4M476.4 632.4000000000001V635.6M489.5 632.4000000000001V635.6M502.6 632.4000000000001V635.6M515.7 632.4000000000001V635.6M528.8 632.4000000000001V639.4M541.9 632.4000000000001V635.6M555.0 632.4000000000001V635.6M568.1 632.4000000000001V635.6M581.2 632.4000000000001V635.6M594.3 632.4000000000001V639.4M607.4 632.4000000000001V635.6M620.5 632.4000000000001V635.6M633.6 632.4000000000001V635.6M646.7 632.4000000000001V635.6M659.8 632.4000000000001V639.4M672.9 632.4000000000001V635.6M686.0 632.4000000000001V635.6M699.1 632.4000000000001V635.6M712.2 632.4000000000001V635.6M725.3 632.4000000000001V639.4M738.4 632.4000000000001V635.6M751.5 632.4000000000001V635.6M764.6 632.4000000000001V635.6M777.7 632.4000000000001V635.6M790.8 632.4000000000001V639.4M803.9 632.4000000000001V635.6M817.0 632.4000000000001V635.6M830.1 632.4000000000001V635.6M843.2 632.4000000000001V635.6M856.3 632.4000000000001V639.4M869.4 632.4000000000001V635.6M882.5 632.4000000000001V635.6M895.6 632.4000000000001V635.6M908.7 632.4000000000001V635.6M921.8 632.4000000000001V639.4M934.9 632.4000000000001V635.6M948.0 632.4000000000001V635.6M961.1 632.4000000000001V635.6M974.2 632.4000000000001V635.6M987.3 632.4000000000001V639.4M1000.4 632.4000000000001V635.6M1013.5 632.4000000000001V635.6M1026.6 632.4000000000001V635.6M1039.7 632.4000000000001V635.6M1052.8 632.4000000000001V639.4M1065.9 632.4000000000001V635.6M1079.0 632.4000000000001V635.6M1092.1 632.4000000000001V635.6M1105.2 632.4000000000001V635.6M1118.3 632.4000000000001V639.4M1131.4 632.4000000000001V635.6M1144.5 632.4000000000001V635.6M1157.6 632.4000000000001V635.6M1170.7 632.4000000000001V635.6M1183.8 632.4000000000001V639.4M1196.9 632.4000000000001V635.6M1210.0 632.4000000000001V635.6M1223.1 632.4000000000001V635.6M1236.2 632.4000000000001V635.6M1249.3 632.4000000000001V639.4M1262.4 632.4000000000001V635.6M1275.5 632.4000000000001V635.6M1288.6 632.4000000000001V635.6M1301.7 632.4000000000001V635.6M1314.8 632.4000000000001V639.4M1327.9 632.4000000000001V635.6M1341.0 632.4000000000001V635.6M1354.1 632.4000000000001V635.6M1367.2 632.4000000000001V635.6M1380.3 632.4000000000001V639.4M1393.4 632.4000000000001V635.6M1406.5 632.4000000000001V635.6M1419.6 632.4000000000001V635.6M1432.7 632.4000000000001V635.6M1445.8 632.4000000000001V639.4M1458.9 632.4000000000001V635.6M1472.0 632.4000000000001V635.6M1485.1 632.4000000000001V635.6M1498.2 632.4000000000001V635.6M1511.3 632.4000000000001V639.4M1524.4 632.4000000000001V635.6M1537.5 632.4000000000001V635.6M1550.6 632.4000000000001V635.6M1563.7 632.4000000000001V635.6M1576.8 632.4000000000001V639.4M1589.9 632.4000000000001V635.6M1603.0 632.4000000000001V635.6M1616.1 632.4000000000001V635.6M1629.2 632.4000000000001V635.6M1642.3 632.4000000000001V639.4M1655.4 632.4000000000001V635.6M1668.5 632.4000000000001V635.6M1681.6 632.4000000000001V635.6M1694.7 632.4000000000001V635.6M1707.8 632.4000000000001V639.4M1720.9 632.4000000000001V635.6M1734.0 632.4000000000001V635.6M1747.1 632.4000000000001V635.6M1760.2 632.4000000000001V635.6M1773.3 632.4000000000001V639.4M1786.4 632.4000000000001V635.6M1799.5 632.4000000000001V635.6M1812.6 632.4000000000001V635.6M1825.7 632.4000000000001V635.6M1838.8 632.4000000000001V639.4M1851.9 632.4000000000001V635.6M1865.0 632.4000000000001V635.6M1878.1 632.4000000000001V635.6" stroke="#000" stroke-width="1.2" fill="none"/><path d="M158.7 558.7C160.6 556.6 166.4 550.9 169.9 546.1C173.4 541.4 176.7 536.8 179.7 530.4C182.6 524.1 184.4 517.4 187.5 507.9C190.7 498.5 194.1 488.3 198.7 473.9C203.3 459.6 210.5 436.2 215.1 421.9C219.6 407.6 222.0 400.3 226.2 388.2C230.3 376.2 235.8 361.0 239.9 349.7C244.1 338.4 247.4 328.8 251.1 320.5C254.8 312.2 258.1 306.4 262.2 299.9C266.4 293.5 269.5 287.8 276.0 282.0C282.4 276.1 293.0 268.5 300.9 265.0C308.7 261.4 316.8 261.0 323.1 260.5C329.5 259.9 333.2 260.9 338.9 261.7C344.5 262.6 349.1 263.0 357.2 265.6C365.3 268.2 376.8 272.9 387.3 277.5C397.8 282.1 407.4 286.4 420.1 293.2C432.7 300.0 451.2 311.4 463.3 318.2C475.4 325.0 482.6 328.6 492.8 334.0C502.9 339.4 516.1 346.3 524.2 350.7C532.3 355.0 536.8 357.5 541.2 360.0C545.7 362.4 544.6 362.8 551.1 365.4C557.5 368.0 567.3 371.3 579.9 375.7C592.4 380.1 607.0 385.3 626.4 392.1C645.8 398.8 673.0 408.6 696.5 416.1C720.0 423.7 741.7 431.3 767.2 437.3C792.8 443.4 824.3 449.5 849.8 452.4C875.2 455.3 896.8 453.7 919.8 454.7C942.9 455.6 965.9 458.7 988.0 458.2C1010.0 457.7 1030.4 455.4 1052.1 451.8C1073.9 448.2 1090.8 443.5 1118.3 436.7C1145.8 429.8 1191.8 418.1 1217.2 410.7C1242.6 403.2 1243.3 402.1 1270.9 392.1C1298.5 382.1 1359.7 359.1 1382.9 350.7C1406.2 342.3 1399.8 345.3 1410.4 341.7C1421.0 338.0 1432.3 334.1 1446.5 328.8C1460.6 323.6 1479.1 316.0 1495.6 310.2C1512.1 304.4 1527.7 298.4 1545.4 293.8C1563.0 289.2 1588.2 285.0 1601.7 282.6C1615.2 280.3 1618.4 280.2 1626.6 279.7C1634.8 279.2 1642.6 278.8 1650.8 279.7C1659.0 280.7 1666.3 280.7 1675.7 285.5C1685.1 290.3 1697.4 298.8 1707.1 308.6C1716.9 318.5 1728.8 337.3 1734.0 344.6C1739.2 351.8 1734.7 344.4 1738.6 352.3C1742.5 360.1 1752.3 381.0 1757.6 391.7C1762.8 402.4 1764.9 407.1 1770.0 416.5C1775.2 425.8 1782.4 437.8 1788.4 447.9C1794.4 458.0 1801.6 471.5 1806.0 477.1C1810.5 482.7 1813.7 480.9 1815.2 481.6" stroke="#4a4a4a" stroke-width="1.2" fill="none"/><path d="M158.7 558.7C160.6 556.6 166.4 550.9 169.9 546.1C173.4 541.4 176.7 536.8 179.7 530.4C182.6 524.1 184.4 517.4 187.5 507.9C190.7 498.5 194.1 488.3 198.7 473.9C203.3 459.6 210.5 436.2 215.1 421.9C219.6 407.6 222.0 400.3 226.2 388.2C230.3 376.2 235.8 361.0 239.9 349.7C244.1 338.4 247.4 328.8 251.1 320.5C254.8 312.2 258.1 306.4 262.2 299.9C266.4 293.5 269.5 287.8 276.0 282.0C282.4 276.1 296.7 267.8 300.9 265.0M387.3 277.5C392.8 280.1 407.4 286.4 420.1 293.2C432.7 300.0 451.2 311.4 463.3 318.2C475.4 325.0 482.6 328.6 492.8 334.0C502.9 339.4 516.1 346.3 524.2 350.7C532.3 355.0 538.4 358.4 541.2 360.0M1675.7 285.5C1680.9 289.3 1697.4 298.8 1707.1 308.6C1716.9 318.5 1728.8 337.3 1734.0 344.6C1739.2 351.8 1734.7 344.4 1738.6 352.3C1742.5 360.1 1752.3 381.0 1757.6 391.7C1762.8 402.4 1764.9 407.1 1770.0 416.5C1775.2 425.8 1782.4 437.8 1788.4 447.9C1794.4 458.0 1801.6 471.5 1806.0 477.1C1810.5 482.7 1813.7 480.9 1815.2 481.6" stroke="#f5a00a" stroke-width="3.4" stroke-linecap="round" fill="none"/><defs><linearGradient id="cring" x1="0" y1="0" x2="1" y2="1"><stop offset="0" stop-color="#f2f2f2"/><stop offset="1" stop-color="#a8a8a8"/></linearGradient></defs><circle cx="116" cy="40.700000000000045" r="32.3" fill="#fff" stroke="url(#cring)" stroke-width="4.2"/><path d="M140.5 44.6L144.9 45.3M139.6 48.4L143.9 49.8M138.1 52.0L142.1 54.0M136.1 55.3L139.7 57.9M133.5 58.2L136.7 61.4M130.6 60.8L133.2 64.4M127.3 62.8L129.3 66.8M123.7 64.3L125.1 68.6M119.9 65.2L120.6 69.6M112.1 65.2L111.4 69.6M108.3 64.3L106.9 68.6M104.7 62.8L102.7 66.8M101.4 60.8L98.8 64.4M98.5 58.2L95.3 61.4M95.9 55.3L92.3 57.9M93.9 52.0L89.9 54.0M92.4 48.4L88.1 49.8M91.5 44.6L87.1 45.3M91.5 36.8L87.1 36.1M92.4 33.0L88.1 31.6M93.9 29.4L89.9 27.4M95.9 26.1L92.3 23.5M98.5 23.2L95.3 20.0M101.4 20.6L98.8 17.0M104.7 18.6L102.7 14.6M108.3 17.1L106.9 12.8M112.1 16.2L111.4 11.8M119.9 16.2L120.6 11.8M123.7 17.1L125.1 12.8M127.3 18.6L129.3 14.6M130.6 20.6L133.2 17.0M133.5 23.2L136.7 20.0M136.1 26.1L139.7 23.5M138.1 29.4L142.1 27.4M139.6 33.0L143.9 31.6M140.5 36.8L144.9 36.1" stroke="#222" stroke-width="1.4" fill="none"/><path d="M140.8 40.7L145.3 40.7M116.0 65.5L116.0 70.0M91.2 40.7L86.7 40.7M116.0 15.9L116.0 11.4" stroke="#555" stroke-width="2.6" fill="none"/><path d="M92.4 34.30000000000005L115.5 40.700000000000045L99 40.700000000000045Z" fill="#ee0010"/><path d="M92.4 47.100000000000044L115.5 40.700000000000045L99 40.700000000000045Z" fill="#9a9a9a"/></svg>
<div style="position:absolute;left:1227.0px;transform:translateX(-50%);top:826.0px;line-height:24px;font-size:20.2px;color:#000;white-space:pre;font-weight:bold;">Profile of wavefront error</div>
<div style="position:absolute;left:303.5px;transform:translateX(-100%);top:973.8px;line-height:14px;font-size:10.8px;color:#000;white-space:pre;">0,5</div>
<div style="position:absolute;left:303.5px;transform:translateX(-100%);top:1134.3px;line-height:14px;font-size:10.8px;color:#000;white-space:pre;">0</div>
<div style="position:absolute;left:303.5px;transform:translateX(-100%);top:1294.8px;line-height:14px;font-size:10.8px;color:#000;white-space:pre;">-0,5</div>
<div style="position:absolute;left:375.8px;transform:translateX(-50%);top:1433.6px;line-height:14px;font-size:10.8px;color:#000;white-space:pre;">-130</div>
<div style="position:absolute;left:441.3px;transform:translateX(-50%);top:1433.6px;line-height:14px;font-size:10.8px;color:#000;white-space:pre;">-120</div>
<div style="position:absolute;left:506.8px;transform:translateX(-50%);top:1433.6px;line-height:14px;font-size:10.8px;color:#000;white-space:pre;">-110</div>
<div style="position:absolute;left:572.3px;transform:translateX(-50%);top:1433.6px;line-height:14px;font-size:10.8px;color:#000;white-space:pre;">-100</div>
<div style="position:absolute;left:637.8px;transform:translateX(-50%);top:1433.6px;line-height:14px;font-size:10.8px;color:#000;white-space:pre;">-90</div>
<div style="position:absolute;left:703.3px;transform:translateX(-50%);top:1433.6px;line-height:14px;font-size:10.8px;color:#000;white-space:pre;">-80</div>
<div style="position:absolute;left:768.8px;transform:translateX(-50%);top:1433.6px;line-height:14px;font-size:10.8px;color:#000;white-space:pre;">-70</div>
<div style="position:absolute;left:834.3px;transform:translateX(-50%);top:1433.6px;line-height:14px;font-size:10.8px;color:#000;white-space:pre;">-60</div>
<div style="position:absolute;left:899.8px;transform:translateX(-50%);top:1433.6px;line-height:14px;font-size:10.8px;color:#000;white-space:pre;">-50</div>
<div style="position:absolute;left:965.3px;transform:translateX(-50%);top:1433.6px;line-height:14px;font-size:10.8px;color:#000;white-space:pre;">-40</div>
<div style="position:absolute;left:1030.8px;transform:translateX(-50%);top:1433.6px;line-height:14px;font-size:10.8px;color:#000;white-space:pre;">-30</div>
<div style="position:absolute;left:1096.3px;transform:translateX(-50%);top:1433.6px;line-height:14px;font-size:10.8px;color:#000;white-space:pre;">-20</div>
<div style="position:absolute;left:1161.8px;transform:translateX(-50%);top:1433.6px;line-height:14px;font-size:10.8px;color:#000;white-space:pre;">-10</div>
<div style="position:absolute;left:1227.3px;transform:translateX(-50%);top:1433.6px;line-height:14px;font-size:10.8px;color:#000;white-space:pre;">0</div>
<div style="position:absolute;left:1292.8px;transform:translateX(-50%);top:1433.6px;line-height:14px;font-size:10.8px;color:#000;white-space:pre;">10</div>
<div style="position:absolute;left:1358.3px;transform:translateX(-50%);top:1433.6px;line-height:14px;font-size:10.8px;color:#000;white-space:pre;">20</div>
<div style="position:absolute;left:1423.8px;transform:translateX(-50%);top:1433.6px;line-height:14px;font-size:10.8px;color:#000;white-space:pre;">30</div>
<div style="position:absolute;left:1489.3px;transform:translateX(-50%);top:1433.6px;line-height:14px;font-size:10.8px;color:#000;white-space:pre;">40</div>
<div style="position:absolute;left:1554.8px;transform:translateX(-50%);top:1433.6px;line-height:14px;font-size:10.8px;color:#000;white-space:pre;">50</div>
<div style="position:absolute;left:1620.3px;transform:translateX(-50%);top:1433.6px;line-height:14px;font-size:10.8px;color:#000;white-space:pre;">60</div>
<div style="position:absolute;left:1685.8px;transform:translateX(-50%);top:1433.6px;line-height:14px;font-size:10.8px;color:#000;white-space:pre;">70</div>
<div style="position:absolute;left:1751.3px;transform:translateX(-50%);top:1433.6px;line-height:14px;font-size:10.8px;color:#000;white-space:pre;">80</div>
<div style="position:absolute;left:1816.8px;transform:translateX(-50%);top:1433.6px;line-height:14px;font-size:10.8px;color:#000;white-space:pre;">90</div>
<div style="position:absolute;left:1882.3px;transform:translateX(-50%);top:1433.6px;line-height:14px;font-size:10.8px;color:#000;white-space:pre;">100</div>
<div style="position:absolute;left:1947.8px;transform:translateX(-50%);top:1433.6px;line-height:14px;font-size:10.8px;color:#000;white-space:pre;">110</div>
<div style="position:absolute;left:2013.3px;transform:translateX(-50%);top:1433.6px;line-height:14px;font-size:10.8px;color:#000;white-space:pre;">120</div>
<div style="position:absolute;left:2078.8px;transform:translateX(-50%);top:1433.6px;line-height:14px;font-size:10.8px;color:#000;white-space:pre;">130</div>
<div style="position:absolute;left:1226.0px;transform:translateX(-50%);top:1447.5px;line-height:20px;font-size:16.5px;color:#000;white-space:pre;font-weight:bold;">Radius mm</div>
<div style="position:absolute;left:270.5px;top:1137px;transform:translate(-50%,-50%) rotate(-90deg);font-size:17.3px;font-weight:bold;white-space:nowrap;line-height:20px">Error in waves of&nbsp; 532.0 nm</div>
<div style="position:absolute;left:2127.0px;transform:translateX(-100%);top:1086.3px;line-height:14px;font-size:10.8px;color:#d0142a;white-space:pre;">1/8 wave on wavefront</div>
<div style="position:absolute;left:2127.0px;transform:translateX(-100%);top:1166.2px;line-height:14px;font-size:10.8px;color:#d0142a;white-space:pre;">-1/8 wave on wavefront</div>
<div style="position:absolute;left:2127.0px;transform:translateX(-100%);top:1126.4px;line-height:14px;font-size:10.8px;color:#000;white-space:pre;">y = 0</div>

</body></html>
